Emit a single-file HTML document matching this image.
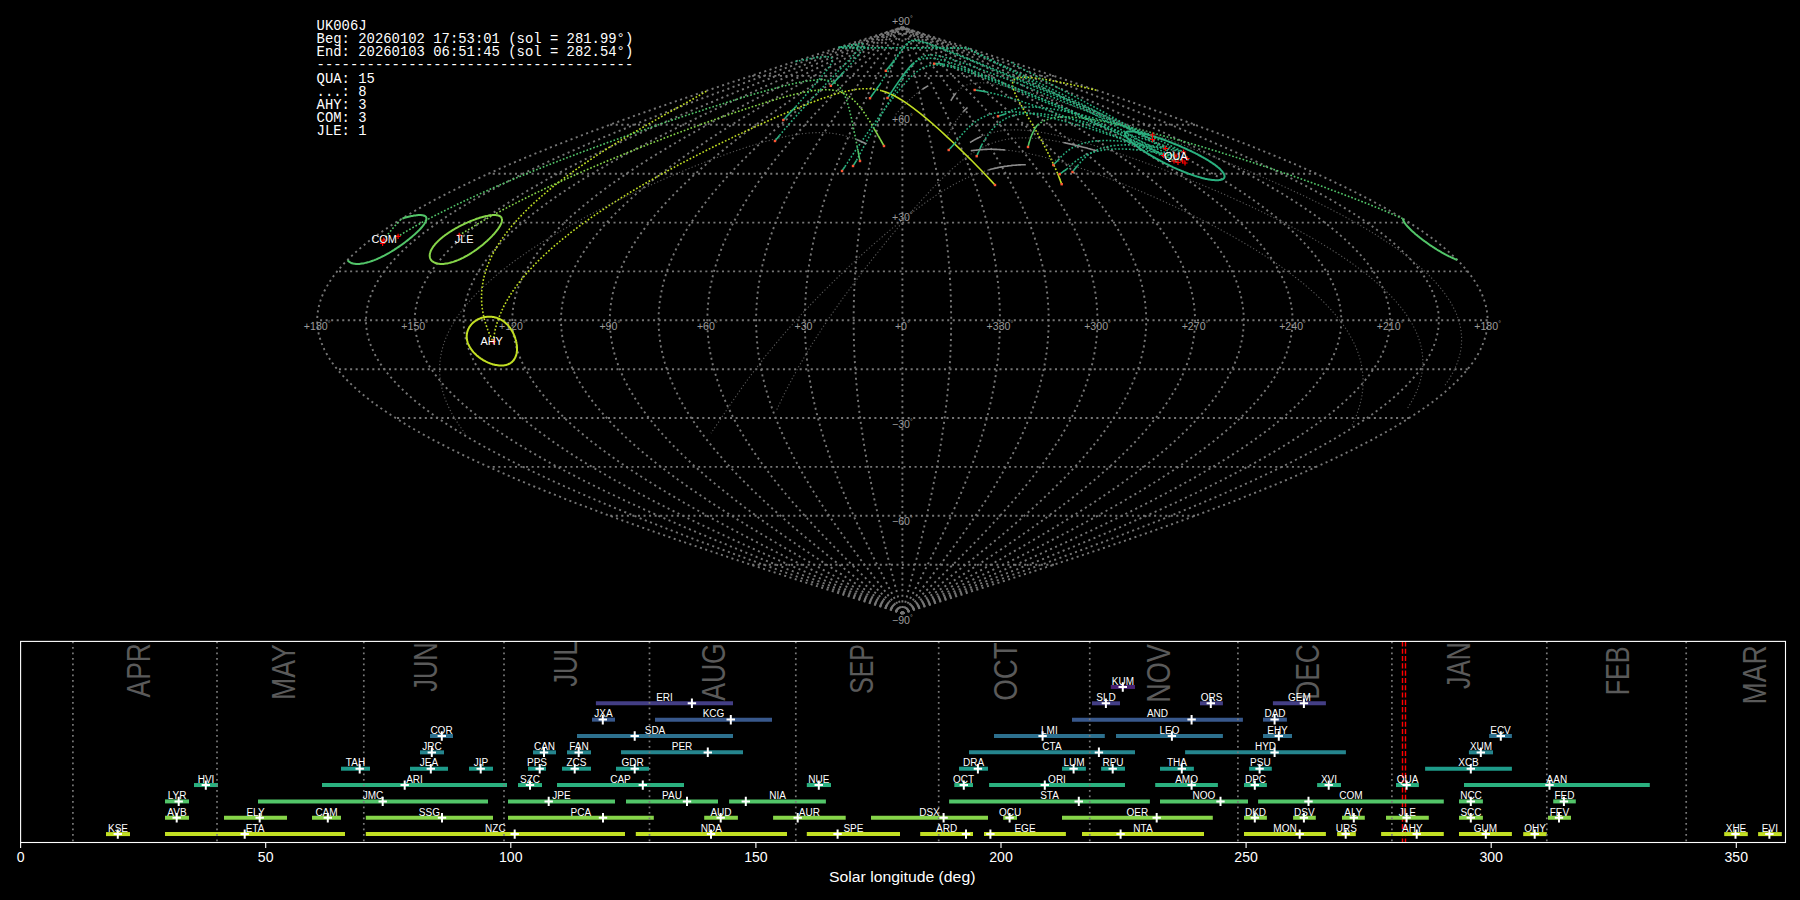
<!DOCTYPE html>
<html><head><meta charset="utf-8"><style>html,body{margin:0;padding:0;background:#000;overflow:hidden}svg{display:block}</style></head><body>
<svg width="1800" height="900" viewBox="0 0 1800 900">
<rect width="1800" height="900" fill="#000"/>
<g fill="none" stroke="#767676" stroke-width="1.9" stroke-dasharray="2.05 3.5">
<path d="M902.4,613.5 L912.6,610.3 L922.8,607.0 L933.0,603.8 L943.2,600.5 L953.4,597.3 L963.6,594.0 L973.7,590.7 L983.8,587.5 L993.9,584.2 L1004.0,581.0 L1014.1,577.7 L1024.1,574.4 L1034.0,571.2 L1044.0,567.9 L1053.9,564.7 L1063.7,561.4 L1073.5,558.2 L1083.2,554.9 L1092.9,551.6 L1102.5,548.4 L1112.1,545.1 L1121.6,541.9 L1131.1,538.6 L1140.4,535.3 L1149.7,532.1 L1158.9,528.8 L1168.1,525.6 L1177.1,522.3 L1186.1,519.1 L1195.0,515.8 L1203.8,512.5 L1212.5,509.3 L1221.1,506.0 L1229.6,502.8 L1238.1,499.5 L1246.4,496.2 L1254.6,493.0 L1262.7,489.7 L1270.7,486.5 L1278.6,483.2 L1286.3,480.0 L1294.0,476.7 L1301.5,473.4 L1308.9,470.2 L1316.2,466.9 L1323.4,463.7 L1330.4,460.4 L1337.3,457.1 L1344.1,453.9 L1350.7,450.6 L1357.2,447.4 L1363.5,444.1 L1369.8,440.9 L1375.8,437.6 L1381.8,434.3 L1387.6,431.1 L1393.2,427.8 L1398.7,424.6 L1404.0,421.3 L1409.2,418.0 L1414.2,414.8 L1419.1,411.5 L1423.8,408.3 L1428.4,405.0 L1432.8,401.8 L1437.0,398.5 L1441.1,395.2 L1445.0,392.0 L1448.7,388.7 L1452.3,385.5 L1455.7,382.2 L1459.0,378.9 L1462.0,375.7 L1464.9,372.4 L1467.7,369.2 L1470.2,365.9 L1472.6,362.7 L1474.8,359.4 L1476.8,356.1 L1478.7,352.9 L1480.4,349.6 L1481.9,346.4 L1483.2,343.1 L1484.4,339.8 L1485.4,336.6 L1486.2,333.3 L1486.8,330.1 L1487.2,326.8 L1487.5,323.6 L1487.6,320.3 L1487.5,317.0 L1487.2,313.8 L1486.8,310.5 L1486.2,307.3 L1485.4,304.0 L1484.4,300.8 L1483.2,297.5 L1481.9,294.2 L1480.4,291.0 L1478.7,287.7 L1476.8,284.5 L1474.8,281.2 L1472.6,277.9 L1470.2,274.7 L1467.7,271.4 L1464.9,268.2 L1462.0,264.9 L1459.0,261.7 L1455.7,258.4 L1452.3,255.1 L1448.7,251.9 L1445.0,248.6 L1441.1,245.4 L1437.0,242.1 L1432.8,238.8 L1428.4,235.6 L1423.8,232.3 L1419.1,229.1 L1414.2,225.8 L1409.2,222.6 L1404.0,219.3 L1398.7,216.0 L1393.2,212.8 L1387.6,209.5 L1381.8,206.3 L1375.8,203.0 L1369.8,199.7 L1363.5,196.5 L1357.2,193.2 L1350.7,190.0 L1344.1,186.7 L1337.3,183.5 L1330.4,180.2 L1323.4,176.9 L1316.2,173.7 L1308.9,170.4 L1301.5,167.2 L1294.0,163.9 L1286.3,160.6 L1278.6,157.4 L1270.7,154.1 L1262.7,150.9 L1254.6,147.6 L1246.4,144.4 L1238.1,141.1 L1229.6,137.8 L1221.1,134.6 L1212.5,131.3 L1203.8,128.1 L1195.0,124.8 L1186.1,121.5 L1177.1,118.3 L1168.1,115.0 L1158.9,111.8 L1149.7,108.5 L1140.4,105.3 L1131.1,102.0 L1121.6,98.7 L1112.1,95.5 L1102.5,92.2 L1092.9,89.0 L1083.2,85.7 L1073.5,82.4 L1063.7,79.2 L1053.9,75.9 L1044.0,72.7 L1034.0,69.4 L1024.1,66.2 L1014.1,62.9 L1004.0,59.6 L993.9,56.4 L983.8,53.1 L973.7,49.9 L963.6,46.6 L953.4,43.3 L943.2,40.1 L933.0,36.8 L922.8,33.6 L912.6,30.3 L902.4,27.1"/>
<path d="M902.4,613.5 L911.8,610.3 L921.1,607.0 L930.5,603.8 L939.8,600.5 L949.2,597.3 L958.5,594.0 L967.8,590.7 L977.1,587.5 L986.3,584.2 L995.6,581.0 L1004.8,577.7 L1013.9,574.4 L1023.1,571.2 L1032.2,567.9 L1041.2,564.7 L1050.3,561.4 L1059.2,558.2 L1068.2,554.9 L1077.0,551.6 L1085.9,548.4 L1094.6,545.1 L1103.4,541.9 L1112.0,538.6 L1120.6,535.3 L1129.1,532.1 L1137.6,528.8 L1145.9,525.6 L1154.2,522.3 L1162.5,519.1 L1170.6,515.8 L1178.7,512.5 L1186.7,509.3 L1194.6,506.0 L1202.4,502.8 L1210.1,499.5 L1217.7,496.2 L1225.2,493.0 L1232.7,489.7 L1240.0,486.5 L1247.2,483.2 L1254.3,480.0 L1261.3,476.7 L1268.2,473.4 L1275.0,470.2 L1281.7,466.9 L1288.3,463.7 L1294.7,460.4 L1301.0,457.1 L1307.2,453.9 L1313.3,450.6 L1319.3,447.4 L1325.1,444.1 L1330.8,440.9 L1336.4,437.6 L1341.8,434.3 L1347.1,431.1 L1352.3,427.8 L1357.3,424.6 L1362.2,421.3 L1367.0,418.0 L1371.6,414.8 L1376.0,411.5 L1380.4,408.3 L1384.5,405.0 L1388.6,401.8 L1392.5,398.5 L1396.2,395.2 L1399.8,392.0 L1403.2,388.7 L1406.5,385.5 L1409.6,382.2 L1412.6,378.9 L1415.4,375.7 L1418.1,372.4 L1420.6,369.2 L1422.9,365.9 L1425.1,362.7 L1427.1,359.4 L1429.0,356.1 L1430.7,352.9 L1432.2,349.6 L1433.6,346.4 L1434.8,343.1 L1435.9,339.8 L1436.8,336.6 L1437.5,333.3 L1438.1,330.1 L1438.5,326.8 L1438.7,323.6 L1438.8,320.3 L1438.7,317.0 L1438.5,313.8 L1438.1,310.5 L1437.5,307.3 L1436.8,304.0 L1435.9,300.8 L1434.8,297.5 L1433.6,294.2 L1432.2,291.0 L1430.7,287.7 L1429.0,284.5 L1427.1,281.2 L1425.1,277.9 L1422.9,274.7 L1420.6,271.4 L1418.1,268.2 L1415.4,264.9 L1412.6,261.7 L1409.6,258.4 L1406.5,255.1 L1403.2,251.9 L1399.8,248.6 L1396.2,245.4 L1392.5,242.1 L1388.6,238.8 L1384.5,235.6 L1380.4,232.3 L1376.0,229.1 L1371.6,225.8 L1367.0,222.6 L1362.2,219.3 L1357.3,216.0 L1352.3,212.8 L1347.1,209.5 L1341.8,206.3 L1336.4,203.0 L1330.8,199.7 L1325.1,196.5 L1319.3,193.2 L1313.3,190.0 L1307.2,186.7 L1301.0,183.5 L1294.7,180.2 L1288.3,176.9 L1281.7,173.7 L1275.0,170.4 L1268.2,167.2 L1261.3,163.9 L1254.3,160.6 L1247.2,157.4 L1240.0,154.1 L1232.7,150.9 L1225.2,147.6 L1217.7,144.4 L1210.1,141.1 L1202.4,137.8 L1194.6,134.6 L1186.7,131.3 L1178.7,128.1 L1170.6,124.8 L1162.5,121.5 L1154.2,118.3 L1145.9,115.0 L1137.6,111.8 L1129.1,108.5 L1120.6,105.3 L1112.0,102.0 L1103.4,98.7 L1094.6,95.5 L1085.9,92.2 L1077.0,89.0 L1068.2,85.7 L1059.2,82.4 L1050.3,79.2 L1041.2,75.9 L1032.2,72.7 L1023.1,69.4 L1013.9,66.2 L1004.8,62.9 L995.6,59.6 L986.3,56.4 L977.1,53.1 L967.8,49.9 L958.5,46.6 L949.2,43.3 L939.8,40.1 L930.5,36.8 L921.1,33.6 L911.8,30.3 L902.4,27.1"/>
<path d="M902.4,613.5 L910.9,610.3 L919.4,607.0 L927.9,603.8 L936.4,600.5 L944.9,597.3 L953.4,594.0 L961.8,590.7 L970.3,587.5 L978.7,584.2 L987.1,581.0 L995.5,577.7 L1003.8,574.4 L1012.1,571.2 L1020.4,567.9 L1028.6,564.7 L1036.8,561.4 L1045.0,558.2 L1053.1,554.9 L1061.2,551.6 L1069.2,548.4 L1077.2,545.1 L1085.1,541.9 L1092.9,538.6 L1100.8,535.3 L1108.5,532.1 L1116.2,528.8 L1123.8,525.6 L1131.3,522.3 L1138.8,519.1 L1146.2,515.8 L1153.6,512.5 L1160.8,509.3 L1168.0,506.0 L1175.1,502.8 L1182.1,499.5 L1189.0,496.2 L1195.9,493.0 L1202.6,489.7 L1209.3,486.5 L1215.9,483.2 L1222.3,480.0 L1228.7,476.7 L1235.0,473.4 L1241.2,470.2 L1247.2,466.9 L1253.2,463.7 L1259.1,460.4 L1264.8,457.1 L1270.4,453.9 L1276.0,450.6 L1281.4,447.4 L1286.7,444.1 L1291.9,440.9 L1296.9,437.6 L1301.9,434.3 L1306.7,431.1 L1311.4,427.8 L1316.0,424.6 L1320.4,421.3 L1324.7,418.0 L1328.9,414.8 L1333.0,411.5 L1336.9,408.3 L1340.7,405.0 L1344.4,401.8 L1347.9,398.5 L1351.3,395.2 L1354.6,392.0 L1357.7,388.7 L1360.7,385.5 L1363.5,382.2 L1366.2,378.9 L1368.8,375.7 L1371.2,372.4 L1373.4,369.2 L1375.6,365.9 L1377.6,362.7 L1379.4,359.4 L1381.1,356.1 L1382.7,352.9 L1384.1,349.6 L1385.3,346.4 L1386.4,343.1 L1387.4,339.8 L1388.2,336.6 L1388.9,333.3 L1389.4,330.1 L1389.8,326.8 L1390.0,323.6 L1390.1,320.3 L1390.0,317.0 L1389.8,313.8 L1389.4,310.5 L1388.9,307.3 L1388.2,304.0 L1387.4,300.8 L1386.4,297.5 L1385.3,294.2 L1384.1,291.0 L1382.7,287.7 L1381.1,284.5 L1379.4,281.2 L1377.6,277.9 L1375.6,274.7 L1373.4,271.4 L1371.2,268.2 L1368.8,264.9 L1366.2,261.7 L1363.5,258.4 L1360.7,255.1 L1357.7,251.9 L1354.6,248.6 L1351.3,245.4 L1347.9,242.1 L1344.4,238.8 L1340.7,235.6 L1336.9,232.3 L1333.0,229.1 L1328.9,225.8 L1324.7,222.6 L1320.4,219.3 L1316.0,216.0 L1311.4,212.8 L1306.7,209.5 L1301.9,206.3 L1296.9,203.0 L1291.9,199.7 L1286.7,196.5 L1281.4,193.2 L1276.0,190.0 L1270.4,186.7 L1264.8,183.5 L1259.1,180.2 L1253.2,176.9 L1247.2,173.7 L1241.2,170.4 L1235.0,167.2 L1228.7,163.9 L1222.3,160.6 L1215.9,157.4 L1209.3,154.1 L1202.6,150.9 L1195.9,147.6 L1189.0,144.4 L1182.1,141.1 L1175.1,137.8 L1168.0,134.6 L1160.8,131.3 L1153.6,128.1 L1146.2,124.8 L1138.8,121.5 L1131.3,118.3 L1123.8,115.0 L1116.2,111.8 L1108.5,108.5 L1100.8,105.3 L1092.9,102.0 L1085.1,98.7 L1077.2,95.5 L1069.2,92.2 L1061.2,89.0 L1053.1,85.7 L1045.0,82.4 L1036.8,79.2 L1028.6,75.9 L1020.4,72.7 L1012.1,69.4 L1003.8,66.2 L995.5,62.9 L987.1,59.6 L978.7,56.4 L970.3,53.1 L961.8,49.9 L953.4,46.6 L944.9,43.3 L936.4,40.1 L927.9,36.8 L919.4,33.6 L910.9,30.3 L902.4,27.1"/>
<path d="M902.4,613.5 L910.1,610.3 L917.7,607.0 L925.4,603.8 L933.0,600.5 L940.7,597.3 L948.3,594.0 L955.9,590.7 L963.5,587.5 L971.1,584.2 L978.6,581.0 L986.1,577.7 L993.7,574.4 L1001.1,571.2 L1008.6,567.9 L1016.0,564.7 L1023.4,561.4 L1030.7,558.2 L1038.0,554.9 L1045.3,551.6 L1052.5,548.4 L1059.7,545.1 L1066.8,541.9 L1073.9,538.6 L1080.9,535.3 L1087.9,532.1 L1094.8,528.8 L1101.7,525.6 L1108.5,522.3 L1115.2,519.1 L1121.8,515.8 L1128.4,512.5 L1135.0,509.3 L1141.4,506.0 L1147.8,502.8 L1154.1,499.5 L1160.4,496.2 L1166.5,493.0 L1172.6,489.7 L1178.6,486.5 L1184.5,483.2 L1190.3,480.0 L1196.1,476.7 L1201.7,473.4 L1207.3,470.2 L1212.7,466.9 L1218.1,463.7 L1223.4,460.4 L1228.6,457.1 L1233.6,453.9 L1238.6,450.6 L1243.5,447.4 L1248.3,444.1 L1252.9,440.9 L1257.5,437.6 L1261.9,434.3 L1266.3,431.1 L1270.5,427.8 L1274.6,424.6 L1278.6,421.3 L1282.5,418.0 L1286.3,414.8 L1289.9,411.5 L1293.5,408.3 L1296.9,405.0 L1300.2,401.8 L1303.4,398.5 L1306.4,395.2 L1309.3,392.0 L1312.1,388.7 L1314.8,385.5 L1317.4,382.2 L1319.8,378.9 L1322.1,375.7 L1324.3,372.4 L1326.3,369.2 L1328.3,365.9 L1330.0,362.7 L1331.7,359.4 L1333.2,356.1 L1334.6,352.9 L1335.9,349.6 L1337.0,346.4 L1338.0,343.1 L1338.9,339.8 L1339.6,336.6 L1340.2,333.3 L1340.7,330.1 L1341.0,326.8 L1341.2,323.6 L1341.3,320.3 L1341.2,317.0 L1341.0,313.8 L1340.7,310.5 L1340.2,307.3 L1339.6,304.0 L1338.9,300.8 L1338.0,297.5 L1337.0,294.2 L1335.9,291.0 L1334.6,287.7 L1333.2,284.5 L1331.7,281.2 L1330.0,277.9 L1328.3,274.7 L1326.3,271.4 L1324.3,268.2 L1322.1,264.9 L1319.8,261.7 L1317.4,258.4 L1314.8,255.1 L1312.1,251.9 L1309.3,248.6 L1306.4,245.4 L1303.4,242.1 L1300.2,238.8 L1296.9,235.6 L1293.5,232.3 L1289.9,229.1 L1286.3,225.8 L1282.5,222.6 L1278.6,219.3 L1274.6,216.0 L1270.5,212.8 L1266.3,209.5 L1261.9,206.3 L1257.5,203.0 L1252.9,199.7 L1248.3,196.5 L1243.5,193.2 L1238.6,190.0 L1233.6,186.7 L1228.6,183.5 L1223.4,180.2 L1218.1,176.9 L1212.7,173.7 L1207.3,170.4 L1201.7,167.2 L1196.1,163.9 L1190.3,160.6 L1184.5,157.4 L1178.6,154.1 L1172.6,150.9 L1166.5,147.6 L1160.4,144.4 L1154.1,141.1 L1147.8,137.8 L1141.4,134.6 L1135.0,131.3 L1128.4,128.1 L1121.8,124.8 L1115.2,121.5 L1108.5,118.3 L1101.7,115.0 L1094.8,111.8 L1087.9,108.5 L1080.9,105.3 L1073.9,102.0 L1066.8,98.7 L1059.7,95.5 L1052.5,92.2 L1045.3,89.0 L1038.0,85.7 L1030.7,82.4 L1023.4,79.2 L1016.0,75.9 L1008.6,72.7 L1001.1,69.4 L993.7,66.2 L986.1,62.9 L978.6,59.6 L971.1,56.4 L963.5,53.1 L955.9,49.9 L948.3,46.6 L940.7,43.3 L933.0,40.1 L925.4,36.8 L917.7,33.6 L910.1,30.3 L902.4,27.1"/>
<path d="M902.4,613.5 L909.2,610.3 L916.0,607.0 L922.8,603.8 L929.6,600.5 L936.4,597.3 L943.2,594.0 L949.9,590.7 L956.7,587.5 L963.4,584.2 L970.1,581.0 L976.8,577.7 L983.5,574.4 L990.2,571.2 L996.8,567.9 L1003.4,564.7 L1009.9,561.4 L1016.5,558.2 L1023.0,554.9 L1029.4,551.6 L1035.8,548.4 L1042.2,545.1 L1048.5,541.9 L1054.8,538.6 L1061.1,535.3 L1067.3,532.1 L1073.4,528.8 L1079.5,525.6 L1085.6,522.3 L1091.5,519.1 L1097.5,515.8 L1103.3,512.5 L1109.1,509.3 L1114.9,506.0 L1120.6,502.8 L1126.2,499.5 L1131.7,496.2 L1137.2,493.0 L1142.6,489.7 L1147.9,486.5 L1153.2,483.2 L1158.3,480.0 L1163.4,476.7 L1168.5,473.4 L1173.4,470.2 L1178.3,466.9 L1183.0,463.7 L1187.7,460.4 L1192.3,457.1 L1196.8,453.9 L1201.3,450.6 L1205.6,447.4 L1209.8,444.1 L1214.0,440.9 L1218.0,437.6 L1222.0,434.3 L1225.8,431.1 L1229.6,427.8 L1233.3,424.6 L1236.8,421.3 L1240.3,418.0 L1243.6,414.8 L1246.9,411.5 L1250.0,408.3 L1253.0,405.0 L1256.0,401.8 L1258.8,398.5 L1261.5,395.2 L1264.1,392.0 L1266.6,388.7 L1269.0,385.5 L1271.3,382.2 L1273.4,378.9 L1275.5,375.7 L1277.4,372.4 L1279.2,369.2 L1280.9,365.9 L1282.5,362.7 L1284.0,359.4 L1285.4,356.1 L1286.6,352.9 L1287.7,349.6 L1288.7,346.4 L1289.6,343.1 L1290.4,339.8 L1291.0,336.6 L1291.6,333.3 L1292.0,330.1 L1292.3,326.8 L1292.5,323.6 L1292.5,320.3 L1292.5,317.0 L1292.3,313.8 L1292.0,310.5 L1291.6,307.3 L1291.0,304.0 L1290.4,300.8 L1289.6,297.5 L1288.7,294.2 L1287.7,291.0 L1286.6,287.7 L1285.4,284.5 L1284.0,281.2 L1282.5,277.9 L1280.9,274.7 L1279.2,271.4 L1277.4,268.2 L1275.5,264.9 L1273.4,261.7 L1271.3,258.4 L1269.0,255.1 L1266.6,251.9 L1264.1,248.6 L1261.5,245.4 L1258.8,242.1 L1256.0,238.8 L1253.0,235.6 L1250.0,232.3 L1246.9,229.1 L1243.6,225.8 L1240.3,222.6 L1236.8,219.3 L1233.3,216.0 L1229.6,212.8 L1225.8,209.5 L1222.0,206.3 L1218.0,203.0 L1214.0,199.7 L1209.8,196.5 L1205.6,193.2 L1201.3,190.0 L1196.8,186.7 L1192.3,183.5 L1187.7,180.2 L1183.0,176.9 L1178.3,173.7 L1173.4,170.4 L1168.5,167.2 L1163.4,163.9 L1158.3,160.6 L1153.2,157.4 L1147.9,154.1 L1142.6,150.9 L1137.2,147.6 L1131.7,144.4 L1126.2,141.1 L1120.6,137.8 L1114.9,134.6 L1109.1,131.3 L1103.3,128.1 L1097.5,124.8 L1091.5,121.5 L1085.6,118.3 L1079.5,115.0 L1073.4,111.8 L1067.3,108.5 L1061.1,105.3 L1054.8,102.0 L1048.5,98.7 L1042.2,95.5 L1035.8,92.2 L1029.4,89.0 L1023.0,85.7 L1016.5,82.4 L1009.9,79.2 L1003.4,75.9 L996.8,72.7 L990.2,69.4 L983.5,66.2 L976.8,62.9 L970.1,59.6 L963.4,56.4 L956.7,53.1 L949.9,49.9 L943.2,46.6 L936.4,43.3 L929.6,40.1 L922.8,36.8 L916.0,33.6 L909.2,30.3 L902.4,27.1"/>
<path d="M902.4,613.5 L908.4,610.3 L914.3,607.0 L920.3,603.8 L926.2,600.5 L932.2,597.3 L938.1,594.0 L944.0,590.7 L949.9,587.5 L955.8,584.2 L961.7,581.0 L967.5,577.7 L973.4,574.4 L979.2,571.2 L985.0,567.9 L990.8,564.7 L996.5,561.4 L1002.2,558.2 L1007.9,554.9 L1013.5,551.6 L1019.2,548.4 L1024.7,545.1 L1030.3,541.9 L1035.8,538.6 L1041.2,535.3 L1046.7,532.1 L1052.0,528.8 L1057.4,525.6 L1062.7,522.3 L1067.9,519.1 L1073.1,515.8 L1078.2,512.5 L1083.3,509.3 L1088.3,506.0 L1093.3,502.8 L1098.2,499.5 L1103.0,496.2 L1107.8,493.0 L1112.6,489.7 L1117.2,486.5 L1121.8,483.2 L1126.4,480.0 L1130.8,476.7 L1135.2,473.4 L1139.5,470.2 L1143.8,466.9 L1148.0,463.7 L1152.1,460.4 L1156.1,457.1 L1160.0,453.9 L1163.9,450.6 L1167.7,447.4 L1171.4,444.1 L1175.0,440.9 L1178.6,437.6 L1182.0,434.3 L1185.4,431.1 L1188.7,427.8 L1191.9,424.6 L1195.0,421.3 L1198.0,418.0 L1201.0,414.8 L1203.8,411.5 L1206.6,408.3 L1209.2,405.0 L1211.8,401.8 L1214.3,398.5 L1216.6,395.2 L1218.9,392.0 L1221.1,388.7 L1223.2,385.5 L1225.2,382.2 L1227.1,378.9 L1228.8,375.7 L1230.5,372.4 L1232.1,369.2 L1233.6,365.9 L1235.0,362.7 L1236.3,359.4 L1237.5,356.1 L1238.6,352.9 L1239.6,349.6 L1240.4,346.4 L1241.2,343.1 L1241.9,339.8 L1242.5,336.6 L1242.9,333.3 L1243.3,330.1 L1243.6,326.8 L1243.7,323.6 L1243.8,320.3 L1243.7,317.0 L1243.6,313.8 L1243.3,310.5 L1242.9,307.3 L1242.5,304.0 L1241.9,300.8 L1241.2,297.5 L1240.4,294.2 L1239.6,291.0 L1238.6,287.7 L1237.5,284.5 L1236.3,281.2 L1235.0,277.9 L1233.6,274.7 L1232.1,271.4 L1230.5,268.2 L1228.8,264.9 L1227.1,261.7 L1225.2,258.4 L1223.2,255.1 L1221.1,251.9 L1218.9,248.6 L1216.6,245.4 L1214.3,242.1 L1211.8,238.8 L1209.2,235.6 L1206.6,232.3 L1203.8,229.1 L1201.0,225.8 L1198.0,222.6 L1195.0,219.3 L1191.9,216.0 L1188.7,212.8 L1185.4,209.5 L1182.0,206.3 L1178.6,203.0 L1175.0,199.7 L1171.4,196.5 L1167.7,193.2 L1163.9,190.0 L1160.0,186.7 L1156.1,183.5 L1152.1,180.2 L1148.0,176.9 L1143.8,173.7 L1139.5,170.4 L1135.2,167.2 L1130.8,163.9 L1126.4,160.6 L1121.8,157.4 L1117.2,154.1 L1112.6,150.9 L1107.8,147.6 L1103.0,144.4 L1098.2,141.1 L1093.3,137.8 L1088.3,134.6 L1083.3,131.3 L1078.2,128.1 L1073.1,124.8 L1067.9,121.5 L1062.7,118.3 L1057.4,115.0 L1052.0,111.8 L1046.7,108.5 L1041.2,105.3 L1035.8,102.0 L1030.3,98.7 L1024.7,95.5 L1019.2,92.2 L1013.5,89.0 L1007.9,85.7 L1002.2,82.4 L996.5,79.2 L990.8,75.9 L985.0,72.7 L979.2,69.4 L973.4,66.2 L967.5,62.9 L961.7,59.6 L955.8,56.4 L949.9,53.1 L944.0,49.9 L938.1,46.6 L932.2,43.3 L926.2,40.1 L920.3,36.8 L914.3,33.6 L908.4,30.3 L902.4,27.1"/>
<path d="M902.4,613.5 L907.5,610.3 L912.6,607.0 L917.7,603.8 L922.8,600.5 L927.9,597.3 L933.0,594.0 L938.1,590.7 L943.1,587.5 L948.2,584.2 L953.2,581.0 L958.2,577.7 L963.2,574.4 L968.2,571.2 L973.2,567.9 L978.1,564.7 L983.1,561.4 L987.9,558.2 L992.8,554.9 L997.7,551.6 L1002.5,548.4 L1007.3,545.1 L1012.0,541.9 L1016.7,538.6 L1021.4,535.3 L1026.1,532.1 L1030.7,528.8 L1035.2,525.6 L1039.8,522.3 L1044.3,519.1 L1048.7,515.8 L1053.1,512.5 L1057.5,509.3 L1061.8,506.0 L1066.0,502.8 L1070.2,499.5 L1074.4,496.2 L1078.5,493.0 L1082.5,489.7 L1086.5,486.5 L1090.5,483.2 L1094.4,480.0 L1098.2,476.7 L1102.0,473.4 L1105.7,470.2 L1109.3,466.9 L1112.9,463.7 L1116.4,460.4 L1119.8,457.1 L1123.2,453.9 L1126.5,450.6 L1129.8,447.4 L1133.0,444.1 L1136.1,440.9 L1139.1,437.6 L1142.1,434.3 L1145.0,431.1 L1147.8,427.8 L1150.5,424.6 L1153.2,421.3 L1155.8,418.0 L1158.3,414.8 L1160.7,411.5 L1163.1,408.3 L1165.4,405.0 L1167.6,401.8 L1169.7,398.5 L1171.7,395.2 L1173.7,392.0 L1175.6,388.7 L1177.4,385.5 L1179.1,382.2 L1180.7,378.9 L1182.2,375.7 L1183.7,372.4 L1185.0,369.2 L1186.3,365.9 L1187.5,362.7 L1188.6,359.4 L1189.6,356.1 L1190.6,352.9 L1191.4,349.6 L1192.2,346.4 L1192.8,343.1 L1193.4,339.8 L1193.9,336.6 L1194.3,333.3 L1194.6,330.1 L1194.8,326.8 L1195.0,323.6 L1195.0,320.3 L1195.0,317.0 L1194.8,313.8 L1194.6,310.5 L1194.3,307.3 L1193.9,304.0 L1193.4,300.8 L1192.8,297.5 L1192.2,294.2 L1191.4,291.0 L1190.6,287.7 L1189.6,284.5 L1188.6,281.2 L1187.5,277.9 L1186.3,274.7 L1185.0,271.4 L1183.7,268.2 L1182.2,264.9 L1180.7,261.7 L1179.1,258.4 L1177.4,255.1 L1175.6,251.9 L1173.7,248.6 L1171.7,245.4 L1169.7,242.1 L1167.6,238.8 L1165.4,235.6 L1163.1,232.3 L1160.7,229.1 L1158.3,225.8 L1155.8,222.6 L1153.2,219.3 L1150.5,216.0 L1147.8,212.8 L1145.0,209.5 L1142.1,206.3 L1139.1,203.0 L1136.1,199.7 L1133.0,196.5 L1129.8,193.2 L1126.5,190.0 L1123.2,186.7 L1119.8,183.5 L1116.4,180.2 L1112.9,176.9 L1109.3,173.7 L1105.7,170.4 L1102.0,167.2 L1098.2,163.9 L1094.4,160.6 L1090.5,157.4 L1086.5,154.1 L1082.5,150.9 L1078.5,147.6 L1074.4,144.4 L1070.2,141.1 L1066.0,137.8 L1061.8,134.6 L1057.5,131.3 L1053.1,128.1 L1048.7,124.8 L1044.3,121.5 L1039.8,118.3 L1035.2,115.0 L1030.7,111.8 L1026.1,108.5 L1021.4,105.3 L1016.7,102.0 L1012.0,98.7 L1007.3,95.5 L1002.5,92.2 L997.7,89.0 L992.8,85.7 L987.9,82.4 L983.1,79.2 L978.1,75.9 L973.2,72.7 L968.2,69.4 L963.2,66.2 L958.2,62.9 L953.2,59.6 L948.2,56.4 L943.1,53.1 L938.1,49.9 L933.0,46.6 L927.9,43.3 L922.8,40.1 L917.7,36.8 L912.6,33.6 L907.5,30.3 L902.4,27.1"/>
<path d="M902.4,613.5 L906.7,610.3 L910.9,607.0 L915.2,603.8 L919.4,600.5 L923.7,597.3 L927.9,594.0 L932.1,590.7 L936.3,587.5 L940.5,584.2 L944.7,581.0 L948.9,577.7 L953.1,574.4 L957.3,571.2 L961.4,567.9 L965.5,564.7 L969.6,561.4 L973.7,558.2 L977.7,554.9 L981.8,551.6 L985.8,548.4 L989.8,545.1 L993.7,541.9 L997.7,538.6 L1001.6,535.3 L1005.4,532.1 L1009.3,528.8 L1013.1,525.6 L1016.9,522.3 L1020.6,519.1 L1024.3,515.8 L1028.0,512.5 L1031.6,509.3 L1035.2,506.0 L1038.7,502.8 L1042.3,499.5 L1045.7,496.2 L1049.1,493.0 L1052.5,489.7 L1055.8,486.5 L1059.1,483.2 L1062.4,480.0 L1065.6,476.7 L1068.7,473.4 L1071.8,470.2 L1074.8,466.9 L1077.8,463.7 L1080.7,460.4 L1083.6,457.1 L1086.4,453.9 L1089.2,450.6 L1091.9,447.4 L1094.5,444.1 L1097.1,440.9 L1099.7,437.6 L1102.1,434.3 L1104.5,431.1 L1106.9,427.8 L1109.2,424.6 L1111.4,421.3 L1113.6,418.0 L1115.7,414.8 L1117.7,411.5 L1119.7,408.3 L1121.6,405.0 L1123.4,401.8 L1125.2,398.5 L1126.8,395.2 L1128.5,392.0 L1130.0,388.7 L1131.5,385.5 L1132.9,382.2 L1134.3,378.9 L1135.6,375.7 L1136.8,372.4 L1137.9,369.2 L1139.0,365.9 L1140.0,362.7 L1140.9,359.4 L1141.8,356.1 L1142.5,352.9 L1143.2,349.6 L1143.9,346.4 L1144.4,343.1 L1144.9,339.8 L1145.3,336.6 L1145.6,333.3 L1145.9,330.1 L1146.1,326.8 L1146.2,323.6 L1146.2,320.3 L1146.2,317.0 L1146.1,313.8 L1145.9,310.5 L1145.6,307.3 L1145.3,304.0 L1144.9,300.8 L1144.4,297.5 L1143.9,294.2 L1143.2,291.0 L1142.5,287.7 L1141.8,284.5 L1140.9,281.2 L1140.0,277.9 L1139.0,274.7 L1137.9,271.4 L1136.8,268.2 L1135.6,264.9 L1134.3,261.7 L1132.9,258.4 L1131.5,255.1 L1130.0,251.9 L1128.5,248.6 L1126.8,245.4 L1125.2,242.1 L1123.4,238.8 L1121.6,235.6 L1119.7,232.3 L1117.7,229.1 L1115.7,225.8 L1113.6,222.6 L1111.4,219.3 L1109.2,216.0 L1106.9,212.8 L1104.5,209.5 L1102.1,206.3 L1099.7,203.0 L1097.1,199.7 L1094.5,196.5 L1091.9,193.2 L1089.2,190.0 L1086.4,186.7 L1083.6,183.5 L1080.7,180.2 L1077.8,176.9 L1074.8,173.7 L1071.8,170.4 L1068.7,167.2 L1065.6,163.9 L1062.4,160.6 L1059.1,157.4 L1055.8,154.1 L1052.5,150.9 L1049.1,147.6 L1045.7,144.4 L1042.3,141.1 L1038.7,137.8 L1035.2,134.6 L1031.6,131.3 L1028.0,128.1 L1024.3,124.8 L1020.6,121.5 L1016.9,118.3 L1013.1,115.0 L1009.3,111.8 L1005.4,108.5 L1001.6,105.3 L997.7,102.0 L993.7,98.7 L989.8,95.5 L985.8,92.2 L981.8,89.0 L977.7,85.7 L973.7,82.4 L969.6,79.2 L965.5,75.9 L961.4,72.7 L957.3,69.4 L953.1,66.2 L948.9,62.9 L944.7,59.6 L940.5,56.4 L936.3,53.1 L932.1,49.9 L927.9,46.6 L923.7,43.3 L919.4,40.1 L915.2,36.8 L910.9,33.6 L906.7,30.3 L902.4,27.1"/>
<path d="M902.4,613.5 L905.8,610.3 L909.2,607.0 L912.6,603.8 L916.0,600.5 L919.4,597.3 L922.8,594.0 L926.2,590.7 L929.5,587.5 L932.9,584.2 L936.3,581.0 L939.6,577.7 L943.0,574.4 L946.3,571.2 L949.6,567.9 L952.9,564.7 L956.2,561.4 L959.4,558.2 L962.7,554.9 L965.9,551.6 L969.1,548.4 L972.3,545.1 L975.5,541.9 L978.6,538.6 L981.7,535.3 L984.8,532.1 L987.9,528.8 L991.0,525.6 L994.0,522.3 L997.0,519.1 L999.9,515.8 L1002.9,512.5 L1005.8,509.3 L1008.6,506.0 L1011.5,502.8 L1014.3,499.5 L1017.1,496.2 L1019.8,493.0 L1022.5,489.7 L1025.2,486.5 L1027.8,483.2 L1030.4,480.0 L1032.9,476.7 L1035.4,473.4 L1037.9,470.2 L1040.3,466.9 L1042.7,463.7 L1045.1,460.4 L1047.4,457.1 L1049.6,453.9 L1051.8,450.6 L1054.0,447.4 L1056.1,444.1 L1058.2,440.9 L1060.2,437.6 L1062.2,434.3 L1064.1,431.1 L1066.0,427.8 L1067.8,424.6 L1069.6,421.3 L1071.3,418.0 L1073.0,414.8 L1074.6,411.5 L1076.2,408.3 L1077.7,405.0 L1079.2,401.8 L1080.6,398.5 L1082.0,395.2 L1083.3,392.0 L1084.5,388.7 L1085.7,385.5 L1086.8,382.2 L1087.9,378.9 L1088.9,375.7 L1089.9,372.4 L1090.8,369.2 L1091.7,365.9 L1092.5,362.7 L1093.2,359.4 L1093.9,356.1 L1094.5,352.9 L1095.1,349.6 L1095.6,346.4 L1096.0,343.1 L1096.4,339.8 L1096.7,336.6 L1097.0,333.3 L1097.2,330.1 L1097.3,326.8 L1097.4,323.6 L1097.5,320.3 L1097.4,317.0 L1097.3,313.8 L1097.2,310.5 L1097.0,307.3 L1096.7,304.0 L1096.4,300.8 L1096.0,297.5 L1095.6,294.2 L1095.1,291.0 L1094.5,287.7 L1093.9,284.5 L1093.2,281.2 L1092.5,277.9 L1091.7,274.7 L1090.8,271.4 L1089.9,268.2 L1088.9,264.9 L1087.9,261.7 L1086.8,258.4 L1085.7,255.1 L1084.5,251.9 L1083.3,248.6 L1082.0,245.4 L1080.6,242.1 L1079.2,238.8 L1077.7,235.6 L1076.2,232.3 L1074.6,229.1 L1073.0,225.8 L1071.3,222.6 L1069.6,219.3 L1067.8,216.0 L1066.0,212.8 L1064.1,209.5 L1062.2,206.3 L1060.2,203.0 L1058.2,199.7 L1056.1,196.5 L1054.0,193.2 L1051.8,190.0 L1049.6,186.7 L1047.4,183.5 L1045.1,180.2 L1042.7,176.9 L1040.3,173.7 L1037.9,170.4 L1035.4,167.2 L1032.9,163.9 L1030.4,160.6 L1027.8,157.4 L1025.2,154.1 L1022.5,150.9 L1019.8,147.6 L1017.1,144.4 L1014.3,141.1 L1011.5,137.8 L1008.6,134.6 L1005.8,131.3 L1002.9,128.1 L999.9,124.8 L997.0,121.5 L994.0,118.3 L991.0,115.0 L987.9,111.8 L984.8,108.5 L981.7,105.3 L978.6,102.0 L975.5,98.7 L972.3,95.5 L969.1,92.2 L965.9,89.0 L962.7,85.7 L959.4,82.4 L956.2,79.2 L952.9,75.9 L949.6,72.7 L946.3,69.4 L943.0,66.2 L939.6,62.9 L936.3,59.6 L932.9,56.4 L929.5,53.1 L926.2,49.9 L922.8,46.6 L919.4,43.3 L916.0,40.1 L912.6,36.8 L909.2,33.6 L905.8,30.3 L902.4,27.1"/>
<path d="M902.4,613.5 L905.0,610.3 L907.5,607.0 L910.1,603.8 L912.6,600.5 L915.2,597.3 L917.7,594.0 L920.2,590.7 L922.8,587.5 L925.3,584.2 L927.8,581.0 L930.3,577.7 L932.8,574.4 L935.3,571.2 L937.8,567.9 L940.3,564.7 L942.7,561.4 L945.2,558.2 L947.6,554.9 L950.0,551.6 L952.4,548.4 L954.8,545.1 L957.2,541.9 L959.6,538.6 L961.9,535.3 L964.2,532.1 L966.5,528.8 L968.8,525.6 L971.1,522.3 L973.3,519.1 L975.5,515.8 L977.7,512.5 L979.9,509.3 L982.1,506.0 L984.2,502.8 L986.3,499.5 L988.4,496.2 L990.4,493.0 L992.5,489.7 L994.5,486.5 L996.4,483.2 L998.4,480.0 L1000.3,476.7 L1002.2,473.4 L1004.0,470.2 L1005.8,466.9 L1007.6,463.7 L1009.4,460.4 L1011.1,457.1 L1012.8,453.9 L1014.5,450.6 L1016.1,447.4 L1017.7,444.1 L1019.2,440.9 L1020.8,437.6 L1022.2,434.3 L1023.7,431.1 L1025.1,427.8 L1026.5,424.6 L1027.8,421.3 L1029.1,418.0 L1030.4,414.8 L1031.6,411.5 L1032.8,408.3 L1033.9,405.0 L1035.0,401.8 L1036.1,398.5 L1037.1,395.2 L1038.0,392.0 L1039.0,388.7 L1039.9,385.5 L1040.7,382.2 L1041.5,378.9 L1042.3,375.7 L1043.0,372.4 L1043.7,369.2 L1044.4,365.9 L1044.9,362.7 L1045.5,359.4 L1046.0,356.1 L1046.5,352.9 L1046.9,349.6 L1047.3,346.4 L1047.6,343.1 L1047.9,339.8 L1048.1,336.6 L1048.3,333.3 L1048.5,330.1 L1048.6,326.8 L1048.7,323.6 L1048.7,320.3 L1048.7,317.0 L1048.6,313.8 L1048.5,310.5 L1048.3,307.3 L1048.1,304.0 L1047.9,300.8 L1047.6,297.5 L1047.3,294.2 L1046.9,291.0 L1046.5,287.7 L1046.0,284.5 L1045.5,281.2 L1044.9,277.9 L1044.4,274.7 L1043.7,271.4 L1043.0,268.2 L1042.3,264.9 L1041.5,261.7 L1040.7,258.4 L1039.9,255.1 L1039.0,251.9 L1038.0,248.6 L1037.1,245.4 L1036.1,242.1 L1035.0,238.8 L1033.9,235.6 L1032.8,232.3 L1031.6,229.1 L1030.4,225.8 L1029.1,222.6 L1027.8,219.3 L1026.5,216.0 L1025.1,212.8 L1023.7,209.5 L1022.2,206.3 L1020.8,203.0 L1019.2,199.7 L1017.7,196.5 L1016.1,193.2 L1014.5,190.0 L1012.8,186.7 L1011.1,183.5 L1009.4,180.2 L1007.6,176.9 L1005.8,173.7 L1004.0,170.4 L1002.2,167.2 L1000.3,163.9 L998.4,160.6 L996.4,157.4 L994.5,154.1 L992.5,150.9 L990.4,147.6 L988.4,144.4 L986.3,141.1 L984.2,137.8 L982.1,134.6 L979.9,131.3 L977.7,128.1 L975.5,124.8 L973.3,121.5 L971.1,118.3 L968.8,115.0 L966.5,111.8 L964.2,108.5 L961.9,105.3 L959.6,102.0 L957.2,98.7 L954.8,95.5 L952.4,92.2 L950.0,89.0 L947.6,85.7 L945.2,82.4 L942.7,79.2 L940.3,75.9 L937.8,72.7 L935.3,69.4 L932.8,66.2 L930.3,62.9 L927.8,59.6 L925.3,56.4 L922.8,53.1 L920.2,49.9 L917.7,46.6 L915.2,43.3 L912.6,40.1 L910.1,36.8 L907.5,33.6 L905.0,30.3 L902.4,27.1"/>
<path d="M902.4,613.5 L904.1,610.3 L905.8,607.0 L907.5,603.8 L909.2,600.5 L910.9,597.3 L912.6,594.0 L914.3,590.7 L916.0,587.5 L917.7,584.2 L919.3,581.0 L921.0,577.7 L922.7,574.4 L924.3,571.2 L926.0,567.9 L927.6,564.7 L929.3,561.4 L930.9,558.2 L932.5,554.9 L934.2,551.6 L935.8,548.4 L937.4,545.1 L938.9,541.9 L940.5,538.6 L942.1,535.3 L943.6,532.1 L945.2,528.8 L946.7,525.6 L948.2,522.3 L949.7,519.1 L951.2,515.8 L952.6,512.5 L954.1,509.3 L955.5,506.0 L956.9,502.8 L958.3,499.5 L959.7,496.2 L961.1,493.0 L962.4,489.7 L963.8,486.5 L965.1,483.2 L966.4,480.0 L967.7,476.7 L968.9,473.4 L970.2,470.2 L971.4,466.9 L972.6,463.7 L973.7,460.4 L974.9,457.1 L976.0,453.9 L977.1,450.6 L978.2,447.4 L979.3,444.1 L980.3,440.9 L981.3,437.6 L982.3,434.3 L983.3,431.1 L984.2,427.8 L985.1,424.6 L986.0,421.3 L986.9,418.0 L987.7,414.8 L988.5,411.5 L989.3,408.3 L990.1,405.0 L990.8,401.8 L991.5,398.5 L992.2,395.2 L992.8,392.0 L993.5,388.7 L994.1,385.5 L994.6,382.2 L995.2,378.9 L995.7,375.7 L996.2,372.4 L996.6,369.2 L997.0,365.9 L997.4,362.7 L997.8,359.4 L998.1,356.1 L998.5,352.9 L998.7,349.6 L999.0,346.4 L999.2,343.1 L999.4,339.8 L999.6,336.6 L999.7,333.3 L999.8,330.1 L999.9,326.8 L999.9,323.6 L999.9,320.3 L999.9,317.0 L999.9,313.8 L999.8,310.5 L999.7,307.3 L999.6,304.0 L999.4,300.8 L999.2,297.5 L999.0,294.2 L998.7,291.0 L998.5,287.7 L998.1,284.5 L997.8,281.2 L997.4,277.9 L997.0,274.7 L996.6,271.4 L996.2,268.2 L995.7,264.9 L995.2,261.7 L994.6,258.4 L994.1,255.1 L993.5,251.9 L992.8,248.6 L992.2,245.4 L991.5,242.1 L990.8,238.8 L990.1,235.6 L989.3,232.3 L988.5,229.1 L987.7,225.8 L986.9,222.6 L986.0,219.3 L985.1,216.0 L984.2,212.8 L983.3,209.5 L982.3,206.3 L981.3,203.0 L980.3,199.7 L979.3,196.5 L978.2,193.2 L977.1,190.0 L976.0,186.7 L974.9,183.5 L973.7,180.2 L972.6,176.9 L971.4,173.7 L970.2,170.4 L968.9,167.2 L967.7,163.9 L966.4,160.6 L965.1,157.4 L963.8,154.1 L962.4,150.9 L961.1,147.6 L959.7,144.4 L958.3,141.1 L956.9,137.8 L955.5,134.6 L954.1,131.3 L952.6,128.1 L951.2,124.8 L949.7,121.5 L948.2,118.3 L946.7,115.0 L945.2,111.8 L943.6,108.5 L942.1,105.3 L940.5,102.0 L938.9,98.7 L937.4,95.5 L935.8,92.2 L934.2,89.0 L932.5,85.7 L930.9,82.4 L929.3,79.2 L927.6,75.9 L926.0,72.7 L924.3,69.4 L922.7,66.2 L921.0,62.9 L919.3,59.6 L917.7,56.4 L916.0,53.1 L914.3,49.9 L912.6,46.6 L910.9,43.3 L909.2,40.1 L907.5,36.8 L905.8,33.6 L904.1,30.3 L902.4,27.1"/>
<path d="M902.4,613.5 L903.3,610.3 L904.1,607.0 L905.0,603.8 L905.8,600.5 L906.7,597.3 L907.5,594.0 L908.3,590.7 L909.2,587.5 L910.0,584.2 L910.9,581.0 L911.7,577.7 L912.5,574.4 L913.4,571.2 L914.2,567.9 L915.0,564.7 L915.8,561.4 L916.7,558.2 L917.5,554.9 L918.3,551.6 L919.1,548.4 L919.9,545.1 L920.7,541.9 L921.5,538.6 L922.2,535.3 L923.0,532.1 L923.8,528.8 L924.5,525.6 L925.3,522.3 L926.0,519.1 L926.8,515.8 L927.5,512.5 L928.2,509.3 L929.0,506.0 L929.7,502.8 L930.4,499.5 L931.1,496.2 L931.7,493.0 L932.4,489.7 L933.1,486.5 L933.7,483.2 L934.4,480.0 L935.0,476.7 L935.7,473.4 L936.3,470.2 L936.9,466.9 L937.5,463.7 L938.1,460.4 L938.6,457.1 L939.2,453.9 L939.8,450.6 L940.3,447.4 L940.8,444.1 L941.3,440.9 L941.9,437.6 L942.3,434.3 L942.8,431.1 L943.3,427.8 L943.8,424.6 L944.2,421.3 L944.6,418.0 L945.1,414.8 L945.5,411.5 L945.9,408.3 L946.2,405.0 L946.6,401.8 L947.0,398.5 L947.3,395.2 L947.6,392.0 L947.9,388.7 L948.2,385.5 L948.5,382.2 L948.8,378.9 L949.0,375.7 L949.3,372.4 L949.5,369.2 L949.7,365.9 L949.9,362.7 L950.1,359.4 L950.3,356.1 L950.4,352.9 L950.6,349.6 L950.7,346.4 L950.8,343.1 L950.9,339.8 L951.0,336.6 L951.0,333.3 L951.1,330.1 L951.1,326.8 L951.2,323.6 L951.2,320.3 L951.2,317.0 L951.1,313.8 L951.1,310.5 L951.0,307.3 L951.0,304.0 L950.9,300.8 L950.8,297.5 L950.7,294.2 L950.6,291.0 L950.4,287.7 L950.3,284.5 L950.1,281.2 L949.9,277.9 L949.7,274.7 L949.5,271.4 L949.3,268.2 L949.0,264.9 L948.8,261.7 L948.5,258.4 L948.2,255.1 L947.9,251.9 L947.6,248.6 L947.3,245.4 L947.0,242.1 L946.6,238.8 L946.2,235.6 L945.9,232.3 L945.5,229.1 L945.1,225.8 L944.6,222.6 L944.2,219.3 L943.8,216.0 L943.3,212.8 L942.8,209.5 L942.3,206.3 L941.9,203.0 L941.3,199.7 L940.8,196.5 L940.3,193.2 L939.8,190.0 L939.2,186.7 L938.6,183.5 L938.1,180.2 L937.5,176.9 L936.9,173.7 L936.3,170.4 L935.7,167.2 L935.0,163.9 L934.4,160.6 L933.7,157.4 L933.1,154.1 L932.4,150.9 L931.7,147.6 L931.1,144.4 L930.4,141.1 L929.7,137.8 L929.0,134.6 L928.2,131.3 L927.5,128.1 L926.8,124.8 L926.0,121.5 L925.3,118.3 L924.5,115.0 L923.8,111.8 L923.0,108.5 L922.2,105.3 L921.5,102.0 L920.7,98.7 L919.9,95.5 L919.1,92.2 L918.3,89.0 L917.5,85.7 L916.7,82.4 L915.8,79.2 L915.0,75.9 L914.2,72.7 L913.4,69.4 L912.5,66.2 L911.7,62.9 L910.9,59.6 L910.0,56.4 L909.2,53.1 L908.3,49.9 L907.5,46.6 L906.7,43.3 L905.8,40.1 L905.0,36.8 L904.1,33.6 L903.3,30.3 L902.4,27.1"/>
<path d="M902.4,613.5 L902.4,610.3 L902.4,607.0 L902.4,603.8 L902.4,600.5 L902.4,597.3 L902.4,594.0 L902.4,590.7 L902.4,587.5 L902.4,584.2 L902.4,581.0 L902.4,577.7 L902.4,574.4 L902.4,571.2 L902.4,567.9 L902.4,564.7 L902.4,561.4 L902.4,558.2 L902.4,554.9 L902.4,551.6 L902.4,548.4 L902.4,545.1 L902.4,541.9 L902.4,538.6 L902.4,535.3 L902.4,532.1 L902.4,528.8 L902.4,525.6 L902.4,522.3 L902.4,519.1 L902.4,515.8 L902.4,512.5 L902.4,509.3 L902.4,506.0 L902.4,502.8 L902.4,499.5 L902.4,496.2 L902.4,493.0 L902.4,489.7 L902.4,486.5 L902.4,483.2 L902.4,480.0 L902.4,476.7 L902.4,473.4 L902.4,470.2 L902.4,466.9 L902.4,463.7 L902.4,460.4 L902.4,457.1 L902.4,453.9 L902.4,450.6 L902.4,447.4 L902.4,444.1 L902.4,440.9 L902.4,437.6 L902.4,434.3 L902.4,431.1 L902.4,427.8 L902.4,424.6 L902.4,421.3 L902.4,418.0 L902.4,414.8 L902.4,411.5 L902.4,408.3 L902.4,405.0 L902.4,401.8 L902.4,398.5 L902.4,395.2 L902.4,392.0 L902.4,388.7 L902.4,385.5 L902.4,382.2 L902.4,378.9 L902.4,375.7 L902.4,372.4 L902.4,369.2 L902.4,365.9 L902.4,362.7 L902.4,359.4 L902.4,356.1 L902.4,352.9 L902.4,349.6 L902.4,346.4 L902.4,343.1 L902.4,339.8 L902.4,336.6 L902.4,333.3 L902.4,330.1 L902.4,326.8 L902.4,323.6 L902.4,320.3 L902.4,317.0 L902.4,313.8 L902.4,310.5 L902.4,307.3 L902.4,304.0 L902.4,300.8 L902.4,297.5 L902.4,294.2 L902.4,291.0 L902.4,287.7 L902.4,284.5 L902.4,281.2 L902.4,277.9 L902.4,274.7 L902.4,271.4 L902.4,268.2 L902.4,264.9 L902.4,261.7 L902.4,258.4 L902.4,255.1 L902.4,251.9 L902.4,248.6 L902.4,245.4 L902.4,242.1 L902.4,238.8 L902.4,235.6 L902.4,232.3 L902.4,229.1 L902.4,225.8 L902.4,222.6 L902.4,219.3 L902.4,216.0 L902.4,212.8 L902.4,209.5 L902.4,206.3 L902.4,203.0 L902.4,199.7 L902.4,196.5 L902.4,193.2 L902.4,190.0 L902.4,186.7 L902.4,183.5 L902.4,180.2 L902.4,176.9 L902.4,173.7 L902.4,170.4 L902.4,167.2 L902.4,163.9 L902.4,160.6 L902.4,157.4 L902.4,154.1 L902.4,150.9 L902.4,147.6 L902.4,144.4 L902.4,141.1 L902.4,137.8 L902.4,134.6 L902.4,131.3 L902.4,128.1 L902.4,124.8 L902.4,121.5 L902.4,118.3 L902.4,115.0 L902.4,111.8 L902.4,108.5 L902.4,105.3 L902.4,102.0 L902.4,98.7 L902.4,95.5 L902.4,92.2 L902.4,89.0 L902.4,85.7 L902.4,82.4 L902.4,79.2 L902.4,75.9 L902.4,72.7 L902.4,69.4 L902.4,66.2 L902.4,62.9 L902.4,59.6 L902.4,56.4 L902.4,53.1 L902.4,49.9 L902.4,46.6 L902.4,43.3 L902.4,40.1 L902.4,36.8 L902.4,33.6 L902.4,30.3 L902.4,27.1"/>
<path d="M902.4,613.5 L901.5,610.3 L900.7,607.0 L899.8,603.8 L899.0,600.5 L898.1,597.3 L897.3,594.0 L896.5,590.7 L895.6,587.5 L894.8,584.2 L893.9,581.0 L893.1,577.7 L892.3,574.4 L891.4,571.2 L890.6,567.9 L889.8,564.7 L889.0,561.4 L888.1,558.2 L887.3,554.9 L886.5,551.6 L885.7,548.4 L884.9,545.1 L884.1,541.9 L883.3,538.6 L882.6,535.3 L881.8,532.1 L881.0,528.8 L880.3,525.6 L879.5,522.3 L878.8,519.1 L878.0,515.8 L877.3,512.5 L876.6,509.3 L875.8,506.0 L875.1,502.8 L874.4,499.5 L873.7,496.2 L873.1,493.0 L872.4,489.7 L871.7,486.5 L871.1,483.2 L870.4,480.0 L869.8,476.7 L869.1,473.4 L868.5,470.2 L867.9,466.9 L867.3,463.7 L866.7,460.4 L866.2,457.1 L865.6,453.9 L865.0,450.6 L864.5,447.4 L864.0,444.1 L863.5,440.9 L862.9,437.6 L862.5,434.3 L862.0,431.1 L861.5,427.8 L861.0,424.6 L860.6,421.3 L860.2,418.0 L859.7,414.8 L859.3,411.5 L858.9,408.3 L858.6,405.0 L858.2,401.8 L857.8,398.5 L857.5,395.2 L857.2,392.0 L856.9,388.7 L856.6,385.5 L856.3,382.2 L856.0,378.9 L855.8,375.7 L855.5,372.4 L855.3,369.2 L855.1,365.9 L854.9,362.7 L854.7,359.4 L854.5,356.1 L854.4,352.9 L854.2,349.6 L854.1,346.4 L854.0,343.1 L853.9,339.8 L853.8,336.6 L853.8,333.3 L853.7,330.1 L853.7,326.8 L853.6,323.6 L853.6,320.3 L853.6,317.0 L853.7,313.8 L853.7,310.5 L853.8,307.3 L853.8,304.0 L853.9,300.8 L854.0,297.5 L854.1,294.2 L854.2,291.0 L854.4,287.7 L854.5,284.5 L854.7,281.2 L854.9,277.9 L855.1,274.7 L855.3,271.4 L855.5,268.2 L855.8,264.9 L856.0,261.7 L856.3,258.4 L856.6,255.1 L856.9,251.9 L857.2,248.6 L857.5,245.4 L857.8,242.1 L858.2,238.8 L858.6,235.6 L858.9,232.3 L859.3,229.1 L859.7,225.8 L860.2,222.6 L860.6,219.3 L861.0,216.0 L861.5,212.8 L862.0,209.5 L862.5,206.3 L862.9,203.0 L863.5,199.7 L864.0,196.5 L864.5,193.2 L865.0,190.0 L865.6,186.7 L866.2,183.5 L866.7,180.2 L867.3,176.9 L867.9,173.7 L868.5,170.4 L869.1,167.2 L869.8,163.9 L870.4,160.6 L871.1,157.4 L871.7,154.1 L872.4,150.9 L873.1,147.6 L873.7,144.4 L874.4,141.1 L875.1,137.8 L875.8,134.6 L876.6,131.3 L877.3,128.1 L878.0,124.8 L878.8,121.5 L879.5,118.3 L880.3,115.0 L881.0,111.8 L881.8,108.5 L882.6,105.3 L883.3,102.0 L884.1,98.7 L884.9,95.5 L885.7,92.2 L886.5,89.0 L887.3,85.7 L888.1,82.4 L889.0,79.2 L889.8,75.9 L890.6,72.7 L891.4,69.4 L892.3,66.2 L893.1,62.9 L893.9,59.6 L894.8,56.4 L895.6,53.1 L896.5,49.9 L897.3,46.6 L898.1,43.3 L899.0,40.1 L899.8,36.8 L900.7,33.6 L901.5,30.3 L902.4,27.1"/>
<path d="M902.4,613.5 L900.7,610.3 L899.0,607.0 L897.3,603.8 L895.6,600.5 L893.9,597.3 L892.2,594.0 L890.5,590.7 L888.8,587.5 L887.1,584.2 L885.5,581.0 L883.8,577.7 L882.1,574.4 L880.5,571.2 L878.8,567.9 L877.2,564.7 L875.5,561.4 L873.9,558.2 L872.3,554.9 L870.6,551.6 L869.0,548.4 L867.4,545.1 L865.9,541.9 L864.3,538.6 L862.7,535.3 L861.2,532.1 L859.6,528.8 L858.1,525.6 L856.6,522.3 L855.1,519.1 L853.6,515.8 L852.2,512.5 L850.7,509.3 L849.3,506.0 L847.9,502.8 L846.5,499.5 L845.1,496.2 L843.7,493.0 L842.4,489.7 L841.0,486.5 L839.7,483.2 L838.4,480.0 L837.1,476.7 L835.9,473.4 L834.6,470.2 L833.4,466.9 L832.2,463.7 L831.1,460.4 L829.9,457.1 L828.8,453.9 L827.7,450.6 L826.6,447.4 L825.5,444.1 L824.5,440.9 L823.5,437.6 L822.5,434.3 L821.5,431.1 L820.6,427.8 L819.7,424.6 L818.8,421.3 L817.9,418.0 L817.1,414.8 L816.3,411.5 L815.5,408.3 L814.7,405.0 L814.0,401.8 L813.3,398.5 L812.6,395.2 L812.0,392.0 L811.3,388.7 L810.7,385.5 L810.2,382.2 L809.6,378.9 L809.1,375.7 L808.6,372.4 L808.2,369.2 L807.8,365.9 L807.4,362.7 L807.0,359.4 L806.7,356.1 L806.3,352.9 L806.1,349.6 L805.8,346.4 L805.6,343.1 L805.4,339.8 L805.2,336.6 L805.1,333.3 L805.0,330.1 L804.9,326.8 L804.9,323.6 L804.9,320.3 L804.9,317.0 L804.9,313.8 L805.0,310.5 L805.1,307.3 L805.2,304.0 L805.4,300.8 L805.6,297.5 L805.8,294.2 L806.1,291.0 L806.3,287.7 L806.7,284.5 L807.0,281.2 L807.4,277.9 L807.8,274.7 L808.2,271.4 L808.6,268.2 L809.1,264.9 L809.6,261.7 L810.2,258.4 L810.7,255.1 L811.3,251.9 L812.0,248.6 L812.6,245.4 L813.3,242.1 L814.0,238.8 L814.7,235.6 L815.5,232.3 L816.3,229.1 L817.1,225.8 L817.9,222.6 L818.8,219.3 L819.7,216.0 L820.6,212.8 L821.5,209.5 L822.5,206.3 L823.5,203.0 L824.5,199.7 L825.5,196.5 L826.6,193.2 L827.7,190.0 L828.8,186.7 L829.9,183.5 L831.1,180.2 L832.2,176.9 L833.4,173.7 L834.6,170.4 L835.9,167.2 L837.1,163.9 L838.4,160.6 L839.7,157.4 L841.0,154.1 L842.4,150.9 L843.7,147.6 L845.1,144.4 L846.5,141.1 L847.9,137.8 L849.3,134.6 L850.7,131.3 L852.2,128.1 L853.6,124.8 L855.1,121.5 L856.6,118.3 L858.1,115.0 L859.6,111.8 L861.2,108.5 L862.7,105.3 L864.3,102.0 L865.9,98.7 L867.4,95.5 L869.0,92.2 L870.6,89.0 L872.3,85.7 L873.9,82.4 L875.5,79.2 L877.2,75.9 L878.8,72.7 L880.5,69.4 L882.1,66.2 L883.8,62.9 L885.5,59.6 L887.1,56.4 L888.8,53.1 L890.5,49.9 L892.2,46.6 L893.9,43.3 L895.6,40.1 L897.3,36.8 L899.0,33.6 L900.7,30.3 L902.4,27.1"/>
<path d="M902.4,613.5 L899.8,610.3 L897.3,607.0 L894.7,603.8 L892.2,600.5 L889.6,597.3 L887.1,594.0 L884.6,590.7 L882.0,587.5 L879.5,584.2 L877.0,581.0 L874.5,577.7 L872.0,574.4 L869.5,571.2 L867.0,567.9 L864.5,564.7 L862.1,561.4 L859.6,558.2 L857.2,554.9 L854.8,551.6 L852.4,548.4 L850.0,545.1 L847.6,541.9 L845.2,538.6 L842.9,535.3 L840.6,532.1 L838.3,528.8 L836.0,525.6 L833.7,522.3 L831.5,519.1 L829.3,515.8 L827.1,512.5 L824.9,509.3 L822.7,506.0 L820.6,502.8 L818.5,499.5 L816.4,496.2 L814.4,493.0 L812.3,489.7 L810.3,486.5 L808.4,483.2 L806.4,480.0 L804.5,476.7 L802.6,473.4 L800.8,470.2 L799.0,466.9 L797.2,463.7 L795.4,460.4 L793.7,457.1 L792.0,453.9 L790.3,450.6 L788.7,447.4 L787.1,444.1 L785.6,440.9 L784.0,437.6 L782.6,434.3 L781.1,431.1 L779.7,427.8 L778.3,424.6 L777.0,421.3 L775.7,418.0 L774.4,414.8 L773.2,411.5 L772.0,408.3 L770.9,405.0 L769.8,401.8 L768.7,398.5 L767.7,395.2 L766.8,392.0 L765.8,388.7 L764.9,385.5 L764.1,382.2 L763.3,378.9 L762.5,375.7 L761.8,372.4 L761.1,369.2 L760.4,365.9 L759.9,362.7 L759.3,359.4 L758.8,356.1 L758.3,352.9 L757.9,349.6 L757.5,346.4 L757.2,343.1 L756.9,339.8 L756.7,336.6 L756.5,333.3 L756.3,330.1 L756.2,326.8 L756.1,323.6 L756.1,320.3 L756.1,317.0 L756.2,313.8 L756.3,310.5 L756.5,307.3 L756.7,304.0 L756.9,300.8 L757.2,297.5 L757.5,294.2 L757.9,291.0 L758.3,287.7 L758.8,284.5 L759.3,281.2 L759.9,277.9 L760.4,274.7 L761.1,271.4 L761.8,268.2 L762.5,264.9 L763.3,261.7 L764.1,258.4 L764.9,255.1 L765.8,251.9 L766.8,248.6 L767.7,245.4 L768.7,242.1 L769.8,238.8 L770.9,235.6 L772.0,232.3 L773.2,229.1 L774.4,225.8 L775.7,222.6 L777.0,219.3 L778.3,216.0 L779.7,212.8 L781.1,209.5 L782.6,206.3 L784.0,203.0 L785.6,199.7 L787.1,196.5 L788.7,193.2 L790.3,190.0 L792.0,186.7 L793.7,183.5 L795.4,180.2 L797.2,176.9 L799.0,173.7 L800.8,170.4 L802.6,167.2 L804.5,163.9 L806.4,160.6 L808.4,157.4 L810.3,154.1 L812.3,150.9 L814.4,147.6 L816.4,144.4 L818.5,141.1 L820.6,137.8 L822.7,134.6 L824.9,131.3 L827.1,128.1 L829.3,124.8 L831.5,121.5 L833.7,118.3 L836.0,115.0 L838.3,111.8 L840.6,108.5 L842.9,105.3 L845.2,102.0 L847.6,98.7 L850.0,95.5 L852.4,92.2 L854.8,89.0 L857.2,85.7 L859.6,82.4 L862.1,79.2 L864.5,75.9 L867.0,72.7 L869.5,69.4 L872.0,66.2 L874.5,62.9 L877.0,59.6 L879.5,56.4 L882.0,53.1 L884.6,49.9 L887.1,46.6 L889.6,43.3 L892.2,40.1 L894.7,36.8 L897.3,33.6 L899.8,30.3 L902.4,27.1"/>
<path d="M902.4,613.5 L899.0,610.3 L895.6,607.0 L892.2,603.8 L888.8,600.5 L885.4,597.3 L882.0,594.0 L878.6,590.7 L875.3,587.5 L871.9,584.2 L868.5,581.0 L865.2,577.7 L861.8,574.4 L858.5,571.2 L855.2,567.9 L851.9,564.7 L848.6,561.4 L845.4,558.2 L842.1,554.9 L838.9,551.6 L835.7,548.4 L832.5,545.1 L829.3,541.9 L826.2,538.6 L823.1,535.3 L820.0,532.1 L816.9,528.8 L813.8,525.6 L810.8,522.3 L807.8,519.1 L804.9,515.8 L801.9,512.5 L799.0,509.3 L796.2,506.0 L793.3,502.8 L790.5,499.5 L787.7,496.2 L785.0,493.0 L782.3,489.7 L779.6,486.5 L777.0,483.2 L774.4,480.0 L771.9,476.7 L769.4,473.4 L766.9,470.2 L764.5,466.9 L762.1,463.7 L759.7,460.4 L757.4,457.1 L755.2,453.9 L753.0,450.6 L750.8,447.4 L748.7,444.1 L746.6,440.9 L744.6,437.6 L742.6,434.3 L740.7,431.1 L738.8,427.8 L737.0,424.6 L735.2,421.3 L733.5,418.0 L731.8,414.8 L730.2,411.5 L728.6,408.3 L727.1,405.0 L725.6,401.8 L724.2,398.5 L722.8,395.2 L721.5,392.0 L720.3,388.7 L719.1,385.5 L718.0,382.2 L716.9,378.9 L715.9,375.7 L714.9,372.4 L714.0,369.2 L713.1,365.9 L712.3,362.7 L711.6,359.4 L710.9,356.1 L710.3,352.9 L709.7,349.6 L709.2,346.4 L708.8,343.1 L708.4,339.8 L708.1,336.6 L707.8,333.3 L707.6,330.1 L707.5,326.8 L707.4,323.6 L707.3,320.3 L707.4,317.0 L707.5,313.8 L707.6,310.5 L707.8,307.3 L708.1,304.0 L708.4,300.8 L708.8,297.5 L709.2,294.2 L709.7,291.0 L710.3,287.7 L710.9,284.5 L711.6,281.2 L712.3,277.9 L713.1,274.7 L714.0,271.4 L714.9,268.2 L715.9,264.9 L716.9,261.7 L718.0,258.4 L719.1,255.1 L720.3,251.9 L721.5,248.6 L722.8,245.4 L724.2,242.1 L725.6,238.8 L727.1,235.6 L728.6,232.3 L730.2,229.1 L731.8,225.8 L733.5,222.6 L735.2,219.3 L737.0,216.0 L738.8,212.8 L740.7,209.5 L742.6,206.3 L744.6,203.0 L746.6,199.7 L748.7,196.5 L750.8,193.2 L753.0,190.0 L755.2,186.7 L757.4,183.5 L759.7,180.2 L762.1,176.9 L764.5,173.7 L766.9,170.4 L769.4,167.2 L771.9,163.9 L774.4,160.6 L777.0,157.4 L779.6,154.1 L782.3,150.9 L785.0,147.6 L787.7,144.4 L790.5,141.1 L793.3,137.8 L796.2,134.6 L799.0,131.3 L801.9,128.1 L804.9,124.8 L807.8,121.5 L810.8,118.3 L813.8,115.0 L816.9,111.8 L820.0,108.5 L823.1,105.3 L826.2,102.0 L829.3,98.7 L832.5,95.5 L835.7,92.2 L838.9,89.0 L842.1,85.7 L845.4,82.4 L848.6,79.2 L851.9,75.9 L855.2,72.7 L858.5,69.4 L861.8,66.2 L865.2,62.9 L868.5,59.6 L871.9,56.4 L875.3,53.1 L878.6,49.9 L882.0,46.6 L885.4,43.3 L888.8,40.1 L892.2,36.8 L895.6,33.6 L899.0,30.3 L902.4,27.1"/>
<path d="M902.4,613.5 L898.1,610.3 L893.9,607.0 L889.6,603.8 L885.4,600.5 L881.1,597.3 L876.9,594.0 L872.7,590.7 L868.5,587.5 L864.3,584.2 L860.1,581.0 L855.9,577.7 L851.7,574.4 L847.5,571.2 L843.4,567.9 L839.3,564.7 L835.2,561.4 L831.1,558.2 L827.1,554.9 L823.0,551.6 L819.0,548.4 L815.0,545.1 L811.1,541.9 L807.1,538.6 L803.2,535.3 L799.4,532.1 L795.5,528.8 L791.7,525.6 L787.9,522.3 L784.2,519.1 L780.5,515.8 L776.8,512.5 L773.2,509.3 L769.6,506.0 L766.1,502.8 L762.5,499.5 L759.1,496.2 L755.7,493.0 L752.3,489.7 L749.0,486.5 L745.7,483.2 L742.4,480.0 L739.2,476.7 L736.1,473.4 L733.0,470.2 L730.0,466.9 L727.0,463.7 L724.1,460.4 L721.2,457.1 L718.4,453.9 L715.6,450.6 L712.9,447.4 L710.3,444.1 L707.7,440.9 L705.1,437.6 L702.7,434.3 L700.3,431.1 L697.9,427.8 L695.6,424.6 L693.4,421.3 L691.2,418.0 L689.1,414.8 L687.1,411.5 L685.1,408.3 L683.2,405.0 L681.4,401.8 L679.6,398.5 L678.0,395.2 L676.3,392.0 L674.8,388.7 L673.3,385.5 L671.9,382.2 L670.5,378.9 L669.2,375.7 L668.0,372.4 L666.9,369.2 L665.8,365.9 L664.8,362.7 L663.9,359.4 L663.0,356.1 L662.3,352.9 L661.6,349.6 L660.9,346.4 L660.4,343.1 L659.9,339.8 L659.5,336.6 L659.2,333.3 L658.9,330.1 L658.7,326.8 L658.6,323.6 L658.6,320.3 L658.6,317.0 L658.7,313.8 L658.9,310.5 L659.2,307.3 L659.5,304.0 L659.9,300.8 L660.4,297.5 L660.9,294.2 L661.6,291.0 L662.3,287.7 L663.0,284.5 L663.9,281.2 L664.8,277.9 L665.8,274.7 L666.9,271.4 L668.0,268.2 L669.2,264.9 L670.5,261.7 L671.9,258.4 L673.3,255.1 L674.8,251.9 L676.3,248.6 L678.0,245.4 L679.6,242.1 L681.4,238.8 L683.2,235.6 L685.1,232.3 L687.1,229.1 L689.1,225.8 L691.2,222.6 L693.4,219.3 L695.6,216.0 L697.9,212.8 L700.3,209.5 L702.7,206.3 L705.1,203.0 L707.7,199.7 L710.3,196.5 L712.9,193.2 L715.6,190.0 L718.4,186.7 L721.2,183.5 L724.1,180.2 L727.0,176.9 L730.0,173.7 L733.0,170.4 L736.1,167.2 L739.2,163.9 L742.4,160.6 L745.7,157.4 L749.0,154.1 L752.3,150.9 L755.7,147.6 L759.1,144.4 L762.5,141.1 L766.1,137.8 L769.6,134.6 L773.2,131.3 L776.8,128.1 L780.5,124.8 L784.2,121.5 L787.9,118.3 L791.7,115.0 L795.5,111.8 L799.4,108.5 L803.2,105.3 L807.1,102.0 L811.1,98.7 L815.0,95.5 L819.0,92.2 L823.0,89.0 L827.1,85.7 L831.1,82.4 L835.2,79.2 L839.3,75.9 L843.4,72.7 L847.5,69.4 L851.7,66.2 L855.9,62.9 L860.1,59.6 L864.3,56.4 L868.5,53.1 L872.7,49.9 L876.9,46.6 L881.1,43.3 L885.4,40.1 L889.6,36.8 L893.9,33.6 L898.1,30.3 L902.4,27.1"/>
<path d="M902.4,613.5 L897.3,610.3 L892.2,607.0 L887.1,603.8 L882.0,600.5 L876.9,597.3 L871.8,594.0 L866.7,590.7 L861.7,587.5 L856.6,584.2 L851.6,581.0 L846.6,577.7 L841.6,574.4 L836.6,571.2 L831.6,567.9 L826.7,564.7 L821.7,561.4 L816.9,558.2 L812.0,554.9 L807.1,551.6 L802.3,548.4 L797.5,545.1 L792.8,541.9 L788.1,538.6 L783.4,535.3 L778.7,532.1 L774.1,528.8 L769.6,525.6 L765.0,522.3 L760.5,519.1 L756.1,515.8 L751.7,512.5 L747.3,509.3 L743.0,506.0 L738.8,502.8 L734.6,499.5 L730.4,496.2 L726.3,493.0 L722.3,489.7 L718.3,486.5 L714.3,483.2 L710.4,480.0 L706.6,476.7 L702.8,473.4 L699.1,470.2 L695.5,466.9 L691.9,463.7 L688.4,460.4 L685.0,457.1 L681.6,453.9 L678.3,450.6 L675.0,447.4 L671.8,444.1 L668.7,440.9 L665.7,437.6 L662.7,434.3 L659.8,431.1 L657.0,427.8 L654.3,424.6 L651.6,421.3 L649.0,418.0 L646.5,414.8 L644.1,411.5 L641.7,408.3 L639.4,405.0 L637.2,401.8 L635.1,398.5 L633.1,395.2 L631.1,392.0 L629.2,388.7 L627.4,385.5 L625.7,382.2 L624.1,378.9 L622.6,375.7 L621.1,372.4 L619.8,369.2 L618.5,365.9 L617.3,362.7 L616.2,359.4 L615.2,356.1 L614.2,352.9 L613.4,349.6 L612.6,346.4 L612.0,343.1 L611.4,339.8 L610.9,336.6 L610.5,333.3 L610.2,330.1 L610.0,326.8 L609.8,323.6 L609.8,320.3 L609.8,317.0 L610.0,313.8 L610.2,310.5 L610.5,307.3 L610.9,304.0 L611.4,300.8 L612.0,297.5 L612.6,294.2 L613.4,291.0 L614.2,287.7 L615.2,284.5 L616.2,281.2 L617.3,277.9 L618.5,274.7 L619.8,271.4 L621.1,268.2 L622.6,264.9 L624.1,261.7 L625.7,258.4 L627.4,255.1 L629.2,251.9 L631.1,248.6 L633.1,245.4 L635.1,242.1 L637.2,238.8 L639.4,235.6 L641.7,232.3 L644.1,229.1 L646.5,225.8 L649.0,222.6 L651.6,219.3 L654.3,216.0 L657.0,212.8 L659.8,209.5 L662.7,206.3 L665.7,203.0 L668.7,199.7 L671.8,196.5 L675.0,193.2 L678.3,190.0 L681.6,186.7 L685.0,183.5 L688.4,180.2 L691.9,176.9 L695.5,173.7 L699.1,170.4 L702.8,167.2 L706.6,163.9 L710.4,160.6 L714.3,157.4 L718.3,154.1 L722.3,150.9 L726.3,147.6 L730.4,144.4 L734.6,141.1 L738.8,137.8 L743.0,134.6 L747.3,131.3 L751.7,128.1 L756.1,124.8 L760.5,121.5 L765.0,118.3 L769.6,115.0 L774.1,111.8 L778.7,108.5 L783.4,105.3 L788.1,102.0 L792.8,98.7 L797.5,95.5 L802.3,92.2 L807.1,89.0 L812.0,85.7 L816.9,82.4 L821.7,79.2 L826.7,75.9 L831.6,72.7 L836.6,69.4 L841.6,66.2 L846.6,62.9 L851.6,59.6 L856.6,56.4 L861.7,53.1 L866.7,49.9 L871.8,46.6 L876.9,43.3 L882.0,40.1 L887.1,36.8 L892.2,33.6 L897.3,30.3 L902.4,27.1"/>
<path d="M902.4,613.5 L896.4,610.3 L890.5,607.0 L884.5,603.8 L878.6,600.5 L872.6,597.3 L866.7,594.0 L860.8,590.7 L854.9,587.5 L849.0,584.2 L843.1,581.0 L837.3,577.7 L831.4,574.4 L825.6,571.2 L819.8,567.9 L814.0,564.7 L808.3,561.4 L802.6,558.2 L796.9,554.9 L791.3,551.6 L785.6,548.4 L780.1,545.1 L774.5,541.9 L769.0,538.6 L763.6,535.3 L758.1,532.1 L752.8,528.8 L747.4,525.6 L742.1,522.3 L736.9,519.1 L731.7,515.8 L726.6,512.5 L721.5,509.3 L716.5,506.0 L711.5,502.8 L706.6,499.5 L701.8,496.2 L697.0,493.0 L692.2,489.7 L687.6,486.5 L683.0,483.2 L678.4,480.0 L674.0,476.7 L669.6,473.4 L665.3,470.2 L661.0,466.9 L656.8,463.7 L652.7,460.4 L648.7,457.1 L644.8,453.9 L640.9,450.6 L637.1,447.4 L633.4,444.1 L629.8,440.9 L626.2,437.6 L622.8,434.3 L619.4,431.1 L616.1,427.8 L612.9,424.6 L609.8,421.3 L606.8,418.0 L603.8,414.8 L601.0,411.5 L598.2,408.3 L595.6,405.0 L593.0,401.8 L590.5,398.5 L588.2,395.2 L585.9,392.0 L583.7,388.7 L581.6,385.5 L579.6,382.2 L577.7,378.9 L576.0,375.7 L574.3,372.4 L572.7,369.2 L571.2,365.9 L569.8,362.7 L568.5,359.4 L567.3,356.1 L566.2,352.9 L565.2,349.6 L564.4,346.4 L563.6,343.1 L562.9,339.8 L562.3,336.6 L561.9,333.3 L561.5,330.1 L561.2,326.8 L561.1,323.6 L561.0,320.3 L561.1,317.0 L561.2,313.8 L561.5,310.5 L561.9,307.3 L562.3,304.0 L562.9,300.8 L563.6,297.5 L564.4,294.2 L565.2,291.0 L566.2,287.7 L567.3,284.5 L568.5,281.2 L569.8,277.9 L571.2,274.7 L572.7,271.4 L574.3,268.2 L576.0,264.9 L577.7,261.7 L579.6,258.4 L581.6,255.1 L583.7,251.9 L585.9,248.6 L588.2,245.4 L590.5,242.1 L593.0,238.8 L595.6,235.6 L598.2,232.3 L601.0,229.1 L603.8,225.8 L606.8,222.6 L609.8,219.3 L612.9,216.0 L616.1,212.8 L619.4,209.5 L622.8,206.3 L626.2,203.0 L629.8,199.7 L633.4,196.5 L637.1,193.2 L640.9,190.0 L644.8,186.7 L648.7,183.5 L652.7,180.2 L656.8,176.9 L661.0,173.7 L665.3,170.4 L669.6,167.2 L674.0,163.9 L678.4,160.6 L683.0,157.4 L687.6,154.1 L692.2,150.9 L697.0,147.6 L701.8,144.4 L706.6,141.1 L711.5,137.8 L716.5,134.6 L721.5,131.3 L726.6,128.1 L731.7,124.8 L736.9,121.5 L742.1,118.3 L747.4,115.0 L752.8,111.8 L758.1,108.5 L763.6,105.3 L769.0,102.0 L774.5,98.7 L780.1,95.5 L785.6,92.2 L791.3,89.0 L796.9,85.7 L802.6,82.4 L808.3,79.2 L814.0,75.9 L819.8,72.7 L825.6,69.4 L831.4,66.2 L837.3,62.9 L843.1,59.6 L849.0,56.4 L854.9,53.1 L860.8,49.9 L866.7,46.6 L872.6,43.3 L878.6,40.1 L884.5,36.8 L890.5,33.6 L896.4,30.3 L902.4,27.1"/>
<path d="M902.4,613.5 L895.6,610.3 L888.8,607.0 L882.0,603.8 L875.2,600.5 L868.4,597.3 L861.6,594.0 L854.9,590.7 L848.1,587.5 L841.4,584.2 L834.7,581.0 L828.0,577.7 L821.3,574.4 L814.6,571.2 L808.0,567.9 L801.4,564.7 L794.9,561.4 L788.3,558.2 L781.8,554.9 L775.4,551.6 L769.0,548.4 L762.6,545.1 L756.3,541.9 L750.0,538.6 L743.7,535.3 L737.5,532.1 L731.4,528.8 L725.3,525.6 L719.2,522.3 L713.3,519.1 L707.3,515.8 L701.5,512.5 L695.7,509.3 L689.9,506.0 L684.2,502.8 L678.6,499.5 L673.1,496.2 L667.6,493.0 L662.2,489.7 L656.9,486.5 L651.6,483.2 L646.5,480.0 L641.4,476.7 L636.3,473.4 L631.4,470.2 L626.5,466.9 L621.8,463.7 L617.1,460.4 L612.5,457.1 L608.0,453.9 L603.5,450.6 L599.2,447.4 L595.0,444.1 L590.8,440.9 L586.8,437.6 L582.8,434.3 L579.0,431.1 L575.2,427.8 L571.5,424.6 L568.0,421.3 L564.5,418.0 L561.2,414.8 L557.9,411.5 L554.8,408.3 L551.8,405.0 L548.8,401.8 L546.0,398.5 L543.3,395.2 L540.7,392.0 L538.2,388.7 L535.8,385.5 L533.5,382.2 L531.4,378.9 L529.3,375.7 L527.4,372.4 L525.6,369.2 L523.9,365.9 L522.3,362.7 L520.8,359.4 L519.4,356.1 L518.2,352.9 L517.1,349.6 L516.1,346.4 L515.2,343.1 L514.4,339.8 L513.8,336.6 L513.2,333.3 L512.8,330.1 L512.5,326.8 L512.3,323.6 L512.3,320.3 L512.3,317.0 L512.5,313.8 L512.8,310.5 L513.2,307.3 L513.8,304.0 L514.4,300.8 L515.2,297.5 L516.1,294.2 L517.1,291.0 L518.2,287.7 L519.4,284.5 L520.8,281.2 L522.3,277.9 L523.9,274.7 L525.6,271.4 L527.4,268.2 L529.3,264.9 L531.4,261.7 L533.5,258.4 L535.8,255.1 L538.2,251.9 L540.7,248.6 L543.3,245.4 L546.0,242.1 L548.8,238.8 L551.8,235.6 L554.8,232.3 L557.9,229.1 L561.2,225.8 L564.5,222.6 L568.0,219.3 L571.5,216.0 L575.2,212.8 L579.0,209.5 L582.8,206.3 L586.8,203.0 L590.8,199.7 L595.0,196.5 L599.2,193.2 L603.5,190.0 L608.0,186.7 L612.5,183.5 L617.1,180.2 L621.8,176.9 L626.5,173.7 L631.4,170.4 L636.3,167.2 L641.4,163.9 L646.5,160.6 L651.6,157.4 L656.9,154.1 L662.2,150.9 L667.6,147.6 L673.1,144.4 L678.6,141.1 L684.2,137.8 L689.9,134.6 L695.7,131.3 L701.5,128.1 L707.3,124.8 L713.3,121.5 L719.2,118.3 L725.3,115.0 L731.4,111.8 L737.5,108.5 L743.7,105.3 L750.0,102.0 L756.3,98.7 L762.6,95.5 L769.0,92.2 L775.4,89.0 L781.8,85.7 L788.3,82.4 L794.9,79.2 L801.4,75.9 L808.0,72.7 L814.6,69.4 L821.3,66.2 L828.0,62.9 L834.7,59.6 L841.4,56.4 L848.1,53.1 L854.9,49.9 L861.6,46.6 L868.4,43.3 L875.2,40.1 L882.0,36.8 L888.8,33.6 L895.6,30.3 L902.4,27.1"/>
<path d="M902.4,613.5 L894.7,610.3 L887.1,607.0 L879.4,603.8 L871.8,600.5 L864.1,597.3 L856.5,594.0 L848.9,590.7 L841.3,587.5 L833.7,584.2 L826.2,581.0 L818.7,577.7 L811.1,574.4 L803.7,571.2 L796.2,567.9 L788.8,564.7 L781.4,561.4 L774.1,558.2 L766.8,554.9 L759.5,551.6 L752.3,548.4 L745.1,545.1 L738.0,541.9 L730.9,538.6 L723.9,535.3 L716.9,532.1 L710.0,528.8 L703.1,525.6 L696.3,522.3 L689.6,519.1 L683.0,515.8 L676.4,512.5 L669.8,509.3 L663.4,506.0 L657.0,502.8 L650.7,499.5 L644.4,496.2 L638.3,493.0 L632.2,489.7 L626.2,486.5 L620.3,483.2 L614.5,480.0 L608.7,476.7 L603.1,473.4 L597.5,470.2 L592.1,466.9 L586.7,463.7 L581.4,460.4 L576.2,457.1 L571.2,453.9 L566.2,450.6 L561.3,447.4 L556.5,444.1 L551.9,440.9 L547.3,437.6 L542.9,434.3 L538.5,431.1 L534.3,427.8 L530.2,424.6 L526.2,421.3 L522.3,418.0 L518.5,414.8 L514.9,411.5 L511.3,408.3 L507.9,405.0 L504.6,401.8 L501.4,398.5 L498.4,395.2 L495.5,392.0 L492.7,388.7 L490.0,385.5 L487.4,382.2 L485.0,378.9 L482.7,375.7 L480.5,372.4 L478.5,369.2 L476.5,365.9 L474.8,362.7 L473.1,359.4 L471.6,356.1 L470.2,352.9 L468.9,349.6 L467.8,346.4 L466.8,343.1 L465.9,339.8 L465.2,336.6 L464.6,333.3 L464.1,330.1 L463.8,326.8 L463.6,323.6 L463.5,320.3 L463.6,317.0 L463.8,313.8 L464.1,310.5 L464.6,307.3 L465.2,304.0 L465.9,300.8 L466.8,297.5 L467.8,294.2 L468.9,291.0 L470.2,287.7 L471.6,284.5 L473.1,281.2 L474.8,277.9 L476.5,274.7 L478.5,271.4 L480.5,268.2 L482.7,264.9 L485.0,261.7 L487.4,258.4 L490.0,255.1 L492.7,251.9 L495.5,248.6 L498.4,245.4 L501.4,242.1 L504.6,238.8 L507.9,235.6 L511.3,232.3 L514.9,229.1 L518.5,225.8 L522.3,222.6 L526.2,219.3 L530.2,216.0 L534.3,212.8 L538.5,209.5 L542.9,206.3 L547.3,203.0 L551.9,199.7 L556.5,196.5 L561.3,193.2 L566.2,190.0 L571.2,186.7 L576.2,183.5 L581.4,180.2 L586.7,176.9 L592.1,173.7 L597.5,170.4 L603.1,167.2 L608.7,163.9 L614.5,160.6 L620.3,157.4 L626.2,154.1 L632.2,150.9 L638.3,147.6 L644.4,144.4 L650.7,141.1 L657.0,137.8 L663.4,134.6 L669.8,131.3 L676.4,128.1 L683.0,124.8 L689.6,121.5 L696.3,118.3 L703.1,115.0 L710.0,111.8 L716.9,108.5 L723.9,105.3 L730.9,102.0 L738.0,98.7 L745.1,95.5 L752.3,92.2 L759.5,89.0 L766.8,85.7 L774.1,82.4 L781.4,79.2 L788.8,75.9 L796.2,72.7 L803.7,69.4 L811.1,66.2 L818.7,62.9 L826.2,59.6 L833.7,56.4 L841.3,53.1 L848.9,49.9 L856.5,46.6 L864.1,43.3 L871.8,40.1 L879.4,36.8 L887.1,33.6 L894.7,30.3 L902.4,27.1"/>
<path d="M902.4,613.5 L893.9,610.3 L885.4,607.0 L876.9,603.8 L868.4,600.5 L859.9,597.3 L851.4,594.0 L843.0,590.7 L834.5,587.5 L826.1,584.2 L817.7,581.0 L809.3,577.7 L801.0,574.4 L792.7,571.2 L784.4,567.9 L776.2,564.7 L768.0,561.4 L759.8,558.2 L751.7,554.9 L743.6,551.6 L735.6,548.4 L727.6,545.1 L719.7,541.9 L711.9,538.6 L704.0,535.3 L696.3,532.1 L688.6,528.8 L681.0,525.6 L673.5,522.3 L666.0,519.1 L658.6,515.8 L651.2,512.5 L644.0,509.3 L636.8,506.0 L629.7,502.8 L622.7,499.5 L615.8,496.2 L608.9,493.0 L602.2,489.7 L595.5,486.5 L588.9,483.2 L582.5,480.0 L576.1,476.7 L569.8,473.4 L563.6,470.2 L557.6,466.9 L551.6,463.7 L545.7,460.4 L540.0,457.1 L534.4,453.9 L528.8,450.6 L523.4,447.4 L518.1,444.1 L512.9,440.9 L507.9,437.6 L502.9,434.3 L498.1,431.1 L493.4,427.8 L488.8,424.6 L484.4,421.3 L480.1,418.0 L475.9,414.8 L471.8,411.5 L467.9,408.3 L464.1,405.0 L460.4,401.8 L456.9,398.5 L453.5,395.2 L450.2,392.0 L447.1,388.7 L444.1,385.5 L441.3,382.2 L438.6,378.9 L436.0,375.7 L433.6,372.4 L431.4,369.2 L429.2,365.9 L427.2,362.7 L425.4,359.4 L423.7,356.1 L422.1,352.9 L420.7,349.6 L419.5,346.4 L418.4,343.1 L417.4,339.8 L416.6,336.6 L415.9,333.3 L415.4,330.1 L415.0,326.8 L414.8,323.6 L414.7,320.3 L414.8,317.0 L415.0,313.8 L415.4,310.5 L415.9,307.3 L416.6,304.0 L417.4,300.8 L418.4,297.5 L419.5,294.2 L420.7,291.0 L422.1,287.7 L423.7,284.5 L425.4,281.2 L427.2,277.9 L429.2,274.7 L431.4,271.4 L433.6,268.2 L436.0,264.9 L438.6,261.7 L441.3,258.4 L444.1,255.1 L447.1,251.9 L450.2,248.6 L453.5,245.4 L456.9,242.1 L460.4,238.8 L464.1,235.6 L467.9,232.3 L471.8,229.1 L475.9,225.8 L480.1,222.6 L484.4,219.3 L488.8,216.0 L493.4,212.8 L498.1,209.5 L502.9,206.3 L507.9,203.0 L512.9,199.7 L518.1,196.5 L523.4,193.2 L528.8,190.0 L534.4,186.7 L540.0,183.5 L545.7,180.2 L551.6,176.9 L557.6,173.7 L563.6,170.4 L569.8,167.2 L576.1,163.9 L582.5,160.6 L588.9,157.4 L595.5,154.1 L602.2,150.9 L608.9,147.6 L615.8,144.4 L622.7,141.1 L629.7,137.8 L636.8,134.6 L644.0,131.3 L651.2,128.1 L658.6,124.8 L666.0,121.5 L673.5,118.3 L681.0,115.0 L688.6,111.8 L696.3,108.5 L704.0,105.3 L711.9,102.0 L719.7,98.7 L727.6,95.5 L735.6,92.2 L743.6,89.0 L751.7,85.7 L759.8,82.4 L768.0,79.2 L776.2,75.9 L784.4,72.7 L792.7,69.4 L801.0,66.2 L809.3,62.9 L817.7,59.6 L826.1,56.4 L834.5,53.1 L843.0,49.9 L851.4,46.6 L859.9,43.3 L868.4,40.1 L876.9,36.8 L885.4,33.6 L893.9,30.3 L902.4,27.1"/>
<path d="M902.4,613.5 L893.0,610.3 L883.7,607.0 L874.3,603.8 L865.0,600.5 L855.6,597.3 L846.3,594.0 L837.0,590.7 L827.7,587.5 L818.5,584.2 L809.2,581.0 L800.0,577.7 L790.9,574.4 L781.7,571.2 L772.6,567.9 L763.6,564.7 L754.5,561.4 L745.6,558.2 L736.6,554.9 L727.8,551.6 L718.9,548.4 L710.2,545.1 L701.4,541.9 L692.8,538.6 L684.2,535.3 L675.7,532.1 L667.2,528.8 L658.9,525.6 L650.6,522.3 L642.3,519.1 L634.2,515.8 L626.1,512.5 L618.1,509.3 L610.2,506.0 L602.4,502.8 L594.7,499.5 L587.1,496.2 L579.6,493.0 L572.1,489.7 L564.8,486.5 L557.6,483.2 L550.5,480.0 L543.5,476.7 L536.6,473.4 L529.8,470.2 L523.1,466.9 L516.5,463.7 L510.1,460.4 L503.8,457.1 L497.6,453.9 L491.5,450.6 L485.5,447.4 L479.7,444.1 L474.0,440.9 L468.4,437.6 L463.0,434.3 L457.7,431.1 L452.5,427.8 L447.5,424.6 L442.6,421.3 L437.8,418.0 L433.2,414.8 L428.8,411.5 L424.4,408.3 L420.3,405.0 L416.2,401.8 L412.3,398.5 L408.6,395.2 L405.0,392.0 L401.6,388.7 L398.3,385.5 L395.2,382.2 L392.2,378.9 L389.4,375.7 L386.7,372.4 L384.2,369.2 L381.9,365.9 L379.7,362.7 L377.7,359.4 L375.8,356.1 L374.1,352.9 L372.6,349.6 L371.2,346.4 L370.0,343.1 L368.9,339.8 L368.0,336.6 L367.3,333.3 L366.7,330.1 L366.3,326.8 L366.1,323.6 L366.0,320.3 L366.1,317.0 L366.3,313.8 L366.7,310.5 L367.3,307.3 L368.0,304.0 L368.9,300.8 L370.0,297.5 L371.2,294.2 L372.6,291.0 L374.1,287.7 L375.8,284.5 L377.7,281.2 L379.7,277.9 L381.9,274.7 L384.2,271.4 L386.7,268.2 L389.4,264.9 L392.2,261.7 L395.2,258.4 L398.3,255.1 L401.6,251.9 L405.0,248.6 L408.6,245.4 L412.3,242.1 L416.2,238.8 L420.3,235.6 L424.4,232.3 L428.8,229.1 L433.2,225.8 L437.8,222.6 L442.6,219.3 L447.5,216.0 L452.5,212.8 L457.7,209.5 L463.0,206.3 L468.4,203.0 L474.0,199.7 L479.7,196.5 L485.5,193.2 L491.5,190.0 L497.6,186.7 L503.8,183.5 L510.1,180.2 L516.5,176.9 L523.1,173.7 L529.8,170.4 L536.6,167.2 L543.5,163.9 L550.5,160.6 L557.6,157.4 L564.8,154.1 L572.1,150.9 L579.6,147.6 L587.1,144.4 L594.7,141.1 L602.4,137.8 L610.2,134.6 L618.1,131.3 L626.1,128.1 L634.2,124.8 L642.3,121.5 L650.6,118.3 L658.9,115.0 L667.2,111.8 L675.7,108.5 L684.2,105.3 L692.8,102.0 L701.4,98.7 L710.2,95.5 L718.9,92.2 L727.8,89.0 L736.6,85.7 L745.6,82.4 L754.5,79.2 L763.6,75.9 L772.6,72.7 L781.7,69.4 L790.9,66.2 L800.0,62.9 L809.2,59.6 L818.5,56.4 L827.7,53.1 L837.0,49.9 L846.3,46.6 L855.6,43.3 L865.0,40.1 L874.3,36.8 L883.7,33.6 L893.0,30.3 L902.4,27.1"/>
<path d="M902.4,613.5 L892.2,610.3 L882.0,607.0 L871.8,603.8 L861.6,600.5 L851.4,597.3 L841.2,594.0 L831.1,590.7 L821.0,587.5 L810.9,584.2 L800.8,581.0 L790.7,577.7 L780.7,574.4 L770.8,571.2 L760.8,567.9 L750.9,564.7 L741.1,561.4 L731.3,558.2 L721.6,554.9 L711.9,551.6 L702.3,548.4 L692.7,545.1 L683.2,541.9 L673.7,538.6 L664.4,535.3 L655.1,532.1 L645.9,528.8 L636.7,525.6 L627.7,522.3 L618.7,519.1 L609.8,515.8 L601.0,512.5 L592.3,509.3 L583.7,506.0 L575.2,502.8 L566.7,499.5 L558.4,496.2 L550.2,493.0 L542.1,489.7 L534.1,486.5 L526.2,483.2 L518.5,480.0 L510.8,476.7 L503.3,473.4 L495.9,470.2 L488.6,466.9 L481.4,463.7 L474.4,460.4 L467.5,457.1 L460.7,453.9 L454.1,450.6 L447.6,447.4 L441.3,444.1 L435.0,440.9 L429.0,437.6 L423.0,434.3 L417.2,431.1 L411.6,427.8 L406.1,424.6 L400.8,421.3 L395.6,418.0 L390.6,414.8 L385.7,411.5 L381.0,408.3 L376.4,405.0 L372.0,401.8 L367.8,398.5 L363.7,395.2 L359.8,392.0 L356.1,388.7 L352.5,385.5 L349.1,382.2 L345.8,378.9 L342.8,375.7 L339.9,372.4 L337.1,369.2 L334.6,365.9 L332.2,362.7 L330.0,359.4 L328.0,356.1 L326.1,352.9 L324.4,349.6 L322.9,346.4 L321.6,343.1 L320.4,339.8 L319.4,336.6 L318.6,333.3 L318.0,330.1 L317.6,326.8 L317.3,323.6 L317.2,320.3 L317.3,317.0 L317.6,313.8 L318.0,310.5 L318.6,307.3 L319.4,304.0 L320.4,300.8 L321.6,297.5 L322.9,294.2 L324.4,291.0 L326.1,287.7 L328.0,284.5 L330.0,281.2 L332.2,277.9 L334.6,274.7 L337.1,271.4 L339.9,268.2 L342.8,264.9 L345.8,261.7 L349.1,258.4 L352.5,255.1 L356.1,251.9 L359.8,248.6 L363.7,245.4 L367.8,242.1 L372.0,238.8 L376.4,235.6 L381.0,232.3 L385.7,229.1 L390.6,225.8 L395.6,222.6 L400.8,219.3 L406.1,216.0 L411.6,212.8 L417.2,209.5 L423.0,206.3 L429.0,203.0 L435.0,199.7 L441.3,196.5 L447.6,193.2 L454.1,190.0 L460.7,186.7 L467.5,183.5 L474.4,180.2 L481.4,176.9 L488.6,173.7 L495.9,170.4 L503.3,167.2 L510.8,163.9 L518.5,160.6 L526.2,157.4 L534.1,154.1 L542.1,150.9 L550.2,147.6 L558.4,144.4 L566.7,141.1 L575.2,137.8 L583.7,134.6 L592.3,131.3 L601.0,128.1 L609.8,124.8 L618.7,121.5 L627.7,118.3 L636.7,115.0 L645.9,111.8 L655.1,108.5 L664.4,105.3 L673.7,102.0 L683.2,98.7 L692.7,95.5 L702.3,92.2 L711.9,89.0 L721.6,85.7 L731.3,82.4 L741.1,79.2 L750.9,75.9 L760.8,72.7 L770.8,69.4 L780.7,66.2 L790.7,62.9 L800.8,59.6 L810.9,56.4 L821.0,53.1 L831.1,49.9 L841.2,46.6 L851.4,43.3 L861.6,40.1 L871.8,36.8 L882.0,33.6 L892.2,30.3 L902.4,27.1"/>
<path d="M1053.9,564.7 L1052.2,564.7 L1050.5,564.7 L1048.8,564.7 L1047.1,564.7 L1045.4,564.7 L1043.8,564.7 L1042.1,564.7 L1040.4,564.7 L1038.7,564.7 L1037.0,564.7 L1035.3,564.7 L1033.7,564.7 L1032.0,564.7 L1030.3,564.7 L1028.6,564.7 L1026.9,564.7 L1025.3,564.7 L1023.6,564.7 L1021.9,564.7 L1020.2,564.7 L1018.5,564.7 L1016.8,564.7 L1015.2,564.7 L1013.5,564.7 L1011.8,564.7 L1010.1,564.7 L1008.4,564.7 L1006.7,564.7 L1005.1,564.7 L1003.4,564.7 L1001.7,564.7 L1000.0,564.7 L998.3,564.7 L996.6,564.7 L995.0,564.7 L993.3,564.7 L991.6,564.7 L989.9,564.7 L988.2,564.7 L986.5,564.7 L984.9,564.7 L983.2,564.7 L981.5,564.7 L979.8,564.7 L978.1,564.7 L976.4,564.7 L974.8,564.7 L973.1,564.7 L971.4,564.7 L969.7,564.7 L968.0,564.7 L966.3,564.7 L964.7,564.7 L963.0,564.7 L961.3,564.7 L959.6,564.7 L957.9,564.7 L956.3,564.7 L954.6,564.7 L952.9,564.7 L951.2,564.7 L949.5,564.7 L947.8,564.7 L946.2,564.7 L944.5,564.7 L942.8,564.7 L941.1,564.7 L939.4,564.7 L937.7,564.7 L936.1,564.7 L934.4,564.7 L932.7,564.7 L931.0,564.7 L929.3,564.7 L927.6,564.7 L926.0,564.7 L924.3,564.7 L922.6,564.7 L920.9,564.7 L919.2,564.7 L917.5,564.7 L915.9,564.7 L914.2,564.7 L912.5,564.7 L910.8,564.7 L909.1,564.7 L907.4,564.7 L905.8,564.7 L904.1,564.7 L902.4,564.7 L900.7,564.7 L899.0,564.7 L897.4,564.7 L895.7,564.7 L894.0,564.7 L892.3,564.7 L890.6,564.7 L888.9,564.7 L887.3,564.7 L885.6,564.7 L883.9,564.7 L882.2,564.7 L880.5,564.7 L878.8,564.7 L877.2,564.7 L875.5,564.7 L873.8,564.7 L872.1,564.7 L870.4,564.7 L868.7,564.7 L867.1,564.7 L865.4,564.7 L863.7,564.7 L862.0,564.7 L860.3,564.7 L858.6,564.7 L857.0,564.7 L855.3,564.7 L853.6,564.7 L851.9,564.7 L850.2,564.7 L848.5,564.7 L846.9,564.7 L845.2,564.7 L843.5,564.7 L841.8,564.7 L840.1,564.7 L838.5,564.7 L836.8,564.7 L835.1,564.7 L833.4,564.7 L831.7,564.7 L830.0,564.7 L828.4,564.7 L826.7,564.7 L825.0,564.7 L823.3,564.7 L821.6,564.7 L819.9,564.7 L818.3,564.7 L816.6,564.7 L814.9,564.7 L813.2,564.7 L811.5,564.7 L809.8,564.7 L808.2,564.7 L806.5,564.7 L804.8,564.7 L803.1,564.7 L801.4,564.7 L799.7,564.7 L798.1,564.7 L796.4,564.7 L794.7,564.7 L793.0,564.7 L791.3,564.7 L789.6,564.7 L788.0,564.7 L786.3,564.7 L784.6,564.7 L782.9,564.7 L781.2,564.7 L779.5,564.7 L777.9,564.7 L776.2,564.7 L774.5,564.7 L772.8,564.7 L771.1,564.7 L769.5,564.7 L767.8,564.7 L766.1,564.7 L764.4,564.7 L762.7,564.7 L761.0,564.7 L759.4,564.7 L757.7,564.7 L756.0,564.7 L754.3,564.7 L752.6,564.7 L750.9,564.7"/>
<path d="M1195.0,515.8 L1191.7,515.8 L1188.5,515.8 L1185.2,515.8 L1182.0,515.8 L1178.7,515.8 L1175.5,515.8 L1172.2,515.8 L1169.0,515.8 L1165.7,515.8 L1162.5,515.8 L1159.2,515.8 L1156.0,515.8 L1152.7,515.8 L1149.5,515.8 L1146.2,515.8 L1143.0,515.8 L1139.7,515.8 L1136.5,515.8 L1133.2,515.8 L1130.0,515.8 L1126.7,515.8 L1123.5,515.8 L1120.2,515.8 L1117.0,515.8 L1113.7,515.8 L1110.5,515.8 L1107.2,515.8 L1104.0,515.8 L1100.7,515.8 L1097.5,515.8 L1094.2,515.8 L1091.0,515.8 L1087.7,515.8 L1084.5,515.8 L1081.2,515.8 L1078.0,515.8 L1074.7,515.8 L1071.5,515.8 L1068.2,515.8 L1065.0,515.8 L1061.7,515.8 L1058.5,515.8 L1055.2,515.8 L1052.0,515.8 L1048.7,515.8 L1045.4,515.8 L1042.2,515.8 L1038.9,515.8 L1035.7,515.8 L1032.4,515.8 L1029.2,515.8 L1025.9,515.8 L1022.7,515.8 L1019.4,515.8 L1016.2,515.8 L1012.9,515.8 L1009.7,515.8 L1006.4,515.8 L1003.2,515.8 L999.9,515.8 L996.7,515.8 L993.4,515.8 L990.2,515.8 L986.9,515.8 L983.7,515.8 L980.4,515.8 L977.2,515.8 L973.9,515.8 L970.7,515.8 L967.4,515.8 L964.2,515.8 L960.9,515.8 L957.7,515.8 L954.4,515.8 L951.2,515.8 L947.9,515.8 L944.7,515.8 L941.4,515.8 L938.2,515.8 L934.9,515.8 L931.7,515.8 L928.4,515.8 L925.2,515.8 L921.9,515.8 L918.7,515.8 L915.4,515.8 L912.2,515.8 L908.9,515.8 L905.7,515.8 L902.4,515.8 L899.1,515.8 L895.9,515.8 L892.6,515.8 L889.4,515.8 L886.1,515.8 L882.9,515.8 L879.6,515.8 L876.4,515.8 L873.1,515.8 L869.9,515.8 L866.6,515.8 L863.4,515.8 L860.1,515.8 L856.9,515.8 L853.6,515.8 L850.4,515.8 L847.1,515.8 L843.9,515.8 L840.6,515.8 L837.4,515.8 L834.1,515.8 L830.9,515.8 L827.6,515.8 L824.4,515.8 L821.1,515.8 L817.9,515.8 L814.6,515.8 L811.4,515.8 L808.1,515.8 L804.9,515.8 L801.6,515.8 L798.4,515.8 L795.1,515.8 L791.9,515.8 L788.6,515.8 L785.4,515.8 L782.1,515.8 L778.9,515.8 L775.6,515.8 L772.4,515.8 L769.1,515.8 L765.9,515.8 L762.6,515.8 L759.4,515.8 L756.1,515.8 L752.8,515.8 L749.6,515.8 L746.3,515.8 L743.1,515.8 L739.8,515.8 L736.6,515.8 L733.3,515.8 L730.1,515.8 L726.8,515.8 L723.6,515.8 L720.3,515.8 L717.1,515.8 L713.8,515.8 L710.6,515.8 L707.3,515.8 L704.1,515.8 L700.8,515.8 L697.6,515.8 L694.3,515.8 L691.1,515.8 L687.8,515.8 L684.6,515.8 L681.3,515.8 L678.1,515.8 L674.8,515.8 L671.6,515.8 L668.3,515.8 L665.1,515.8 L661.8,515.8 L658.6,515.8 L655.3,515.8 L652.1,515.8 L648.8,515.8 L645.6,515.8 L642.3,515.8 L639.1,515.8 L635.8,515.8 L632.6,515.8 L629.3,515.8 L626.1,515.8 L622.8,515.8 L619.6,515.8 L616.3,515.8 L613.1,515.8 L609.8,515.8"/>
<path d="M1316.2,466.9 L1311.6,466.9 L1307.0,466.9 L1302.4,466.9 L1297.8,466.9 L1293.2,466.9 L1288.6,466.9 L1284.0,466.9 L1279.4,466.9 L1274.8,466.9 L1270.2,466.9 L1265.6,466.9 L1261.0,466.9 L1256.4,466.9 L1251.8,466.9 L1247.2,466.9 L1242.6,466.9 L1238.0,466.9 L1233.4,466.9 L1228.8,466.9 L1224.2,466.9 L1219.6,466.9 L1215.0,466.9 L1210.4,466.9 L1205.9,466.9 L1201.3,466.9 L1196.7,466.9 L1192.1,466.9 L1187.5,466.9 L1182.9,466.9 L1178.3,466.9 L1173.7,466.9 L1169.1,466.9 L1164.5,466.9 L1159.9,466.9 L1155.3,466.9 L1150.7,466.9 L1146.1,466.9 L1141.5,466.9 L1136.9,466.9 L1132.3,466.9 L1127.7,466.9 L1123.1,466.9 L1118.5,466.9 L1113.9,466.9 L1109.3,466.9 L1104.7,466.9 L1100.1,466.9 L1095.5,466.9 L1090.9,466.9 L1086.3,466.9 L1081.7,466.9 L1077.1,466.9 L1072.5,466.9 L1067.9,466.9 L1063.3,466.9 L1058.7,466.9 L1054.1,466.9 L1049.5,466.9 L1044.9,466.9 L1040.3,466.9 L1035.7,466.9 L1031.1,466.9 L1026.5,466.9 L1021.9,466.9 L1017.3,466.9 L1012.7,466.9 L1008.1,466.9 L1003.6,466.9 L999.0,466.9 L994.4,466.9 L989.8,466.9 L985.2,466.9 L980.6,466.9 L976.0,466.9 L971.4,466.9 L966.8,466.9 L962.2,466.9 L957.6,466.9 L953.0,466.9 L948.4,466.9 L943.8,466.9 L939.2,466.9 L934.6,466.9 L930.0,466.9 L925.4,466.9 L920.8,466.9 L916.2,466.9 L911.6,466.9 L907.0,466.9 L902.4,466.9 L897.8,466.9 L893.2,466.9 L888.6,466.9 L884.0,466.9 L879.4,466.9 L874.8,466.9 L870.2,466.9 L865.6,466.9 L861.0,466.9 L856.4,466.9 L851.8,466.9 L847.2,466.9 L842.6,466.9 L838.0,466.9 L833.4,466.9 L828.8,466.9 L824.2,466.9 L819.6,466.9 L815.0,466.9 L810.4,466.9 L805.8,466.9 L801.2,466.9 L796.7,466.9 L792.1,466.9 L787.5,466.9 L782.9,466.9 L778.3,466.9 L773.7,466.9 L769.1,466.9 L764.5,466.9 L759.9,466.9 L755.3,466.9 L750.7,466.9 L746.1,466.9 L741.5,466.9 L736.9,466.9 L732.3,466.9 L727.7,466.9 L723.1,466.9 L718.5,466.9 L713.9,466.9 L709.3,466.9 L704.7,466.9 L700.1,466.9 L695.5,466.9 L690.9,466.9 L686.3,466.9 L681.7,466.9 L677.1,466.9 L672.5,466.9 L667.9,466.9 L663.3,466.9 L658.7,466.9 L654.1,466.9 L649.5,466.9 L644.9,466.9 L640.3,466.9 L635.7,466.9 L631.1,466.9 L626.5,466.9 L621.9,466.9 L617.3,466.9 L612.7,466.9 L608.1,466.9 L603.5,466.9 L598.9,466.9 L594.4,466.9 L589.8,466.9 L585.2,466.9 L580.6,466.9 L576.0,466.9 L571.4,466.9 L566.8,466.9 L562.2,466.9 L557.6,466.9 L553.0,466.9 L548.4,466.9 L543.8,466.9 L539.2,466.9 L534.6,466.9 L530.0,466.9 L525.4,466.9 L520.8,466.9 L516.2,466.9 L511.6,466.9 L507.0,466.9 L502.4,466.9 L497.8,466.9 L493.2,466.9 L488.6,466.9"/>
<path d="M1409.2,418.0 L1403.6,418.0 L1397.9,418.0 L1392.3,418.0 L1386.7,418.0 L1381.0,418.0 L1375.4,418.0 L1369.8,418.0 L1364.1,418.0 L1358.5,418.0 L1352.9,418.0 L1347.3,418.0 L1341.6,418.0 L1336.0,418.0 L1330.4,418.0 L1324.7,418.0 L1319.1,418.0 L1313.5,418.0 L1307.8,418.0 L1302.2,418.0 L1296.6,418.0 L1290.9,418.0 L1285.3,418.0 L1279.7,418.0 L1274.1,418.0 L1268.4,418.0 L1262.8,418.0 L1257.2,418.0 L1251.5,418.0 L1245.9,418.0 L1240.3,418.0 L1234.6,418.0 L1229.0,418.0 L1223.4,418.0 L1217.7,418.0 L1212.1,418.0 L1206.5,418.0 L1200.8,418.0 L1195.2,418.0 L1189.6,418.0 L1184.0,418.0 L1178.3,418.0 L1172.7,418.0 L1167.1,418.0 L1161.4,418.0 L1155.8,418.0 L1150.2,418.0 L1144.5,418.0 L1138.9,418.0 L1133.3,418.0 L1127.6,418.0 L1122.0,418.0 L1116.4,418.0 L1110.7,418.0 L1105.1,418.0 L1099.5,418.0 L1093.9,418.0 L1088.2,418.0 L1082.6,418.0 L1077.0,418.0 L1071.3,418.0 L1065.7,418.0 L1060.1,418.0 L1054.4,418.0 L1048.8,418.0 L1043.2,418.0 L1037.5,418.0 L1031.9,418.0 L1026.3,418.0 L1020.7,418.0 L1015.0,418.0 L1009.4,418.0 L1003.8,418.0 L998.1,418.0 L992.5,418.0 L986.9,418.0 L981.2,418.0 L975.6,418.0 L970.0,418.0 L964.3,418.0 L958.7,418.0 L953.1,418.0 L947.4,418.0 L941.8,418.0 L936.2,418.0 L930.6,418.0 L924.9,418.0 L919.3,418.0 L913.7,418.0 L908.0,418.0 L902.4,418.0 L896.8,418.0 L891.1,418.0 L885.5,418.0 L879.9,418.0 L874.2,418.0 L868.6,418.0 L863.0,418.0 L857.4,418.0 L851.7,418.0 L846.1,418.0 L840.5,418.0 L834.8,418.0 L829.2,418.0 L823.6,418.0 L817.9,418.0 L812.3,418.0 L806.7,418.0 L801.0,418.0 L795.4,418.0 L789.8,418.0 L784.1,418.0 L778.5,418.0 L772.9,418.0 L767.3,418.0 L761.6,418.0 L756.0,418.0 L750.4,418.0 L744.7,418.0 L739.1,418.0 L733.5,418.0 L727.8,418.0 L722.2,418.0 L716.6,418.0 L710.9,418.0 L705.3,418.0 L699.7,418.0 L694.1,418.0 L688.4,418.0 L682.8,418.0 L677.2,418.0 L671.5,418.0 L665.9,418.0 L660.3,418.0 L654.6,418.0 L649.0,418.0 L643.4,418.0 L637.7,418.0 L632.1,418.0 L626.5,418.0 L620.8,418.0 L615.2,418.0 L609.6,418.0 L604.0,418.0 L598.3,418.0 L592.7,418.0 L587.1,418.0 L581.4,418.0 L575.8,418.0 L570.2,418.0 L564.5,418.0 L558.9,418.0 L553.3,418.0 L547.6,418.0 L542.0,418.0 L536.4,418.0 L530.7,418.0 L525.1,418.0 L519.5,418.0 L513.9,418.0 L508.2,418.0 L502.6,418.0 L497.0,418.0 L491.3,418.0 L485.7,418.0 L480.1,418.0 L474.4,418.0 L468.8,418.0 L463.2,418.0 L457.5,418.0 L451.9,418.0 L446.3,418.0 L440.7,418.0 L435.0,418.0 L429.4,418.0 L423.8,418.0 L418.1,418.0 L412.5,418.0 L406.9,418.0 L401.2,418.0 L395.6,418.0"/>
<path d="M1467.7,369.2 L1461.4,369.2 L1455.1,369.2 L1448.8,369.2 L1442.5,369.2 L1436.3,369.2 L1430.0,369.2 L1423.7,369.2 L1417.4,369.2 L1411.1,369.2 L1404.9,369.2 L1398.6,369.2 L1392.3,369.2 L1386.0,369.2 L1379.7,369.2 L1373.4,369.2 L1367.2,369.2 L1360.9,369.2 L1354.6,369.2 L1348.3,369.2 L1342.0,369.2 L1335.8,369.2 L1329.5,369.2 L1323.2,369.2 L1316.9,369.2 L1310.6,369.2 L1304.4,369.2 L1298.1,369.2 L1291.8,369.2 L1285.5,369.2 L1279.2,369.2 L1273.0,369.2 L1266.7,369.2 L1260.4,369.2 L1254.1,369.2 L1247.8,369.2 L1241.6,369.2 L1235.3,369.2 L1229.0,369.2 L1222.7,369.2 L1216.4,369.2 L1210.2,369.2 L1203.9,369.2 L1197.6,369.2 L1191.3,369.2 L1185.0,369.2 L1178.7,369.2 L1172.5,369.2 L1166.2,369.2 L1159.9,369.2 L1153.6,369.2 L1147.3,369.2 L1141.1,369.2 L1134.8,369.2 L1128.5,369.2 L1122.2,369.2 L1115.9,369.2 L1109.7,369.2 L1103.4,369.2 L1097.1,369.2 L1090.8,369.2 L1084.5,369.2 L1078.3,369.2 L1072.0,369.2 L1065.7,369.2 L1059.4,369.2 L1053.1,369.2 L1046.9,369.2 L1040.6,369.2 L1034.3,369.2 L1028.0,369.2 L1021.7,369.2 L1015.5,369.2 L1009.2,369.2 L1002.9,369.2 L996.6,369.2 L990.3,369.2 L984.0,369.2 L977.8,369.2 L971.5,369.2 L965.2,369.2 L958.9,369.2 L952.6,369.2 L946.4,369.2 L940.1,369.2 L933.8,369.2 L927.5,369.2 L921.2,369.2 L915.0,369.2 L908.7,369.2 L902.4,369.2 L896.1,369.2 L889.8,369.2 L883.6,369.2 L877.3,369.2 L871.0,369.2 L864.7,369.2 L858.4,369.2 L852.2,369.2 L845.9,369.2 L839.6,369.2 L833.3,369.2 L827.0,369.2 L820.8,369.2 L814.5,369.2 L808.2,369.2 L801.9,369.2 L795.6,369.2 L789.3,369.2 L783.1,369.2 L776.8,369.2 L770.5,369.2 L764.2,369.2 L757.9,369.2 L751.7,369.2 L745.4,369.2 L739.1,369.2 L732.8,369.2 L726.5,369.2 L720.3,369.2 L714.0,369.2 L707.7,369.2 L701.4,369.2 L695.1,369.2 L688.9,369.2 L682.6,369.2 L676.3,369.2 L670.0,369.2 L663.7,369.2 L657.5,369.2 L651.2,369.2 L644.9,369.2 L638.6,369.2 L632.3,369.2 L626.1,369.2 L619.8,369.2 L613.5,369.2 L607.2,369.2 L600.9,369.2 L594.6,369.2 L588.4,369.2 L582.1,369.2 L575.8,369.2 L569.5,369.2 L563.2,369.2 L557.0,369.2 L550.7,369.2 L544.4,369.2 L538.1,369.2 L531.8,369.2 L525.6,369.2 L519.3,369.2 L513.0,369.2 L506.7,369.2 L500.4,369.2 L494.2,369.2 L487.9,369.2 L481.6,369.2 L475.3,369.2 L469.0,369.2 L462.8,369.2 L456.5,369.2 L450.2,369.2 L443.9,369.2 L437.6,369.2 L431.4,369.2 L425.1,369.2 L418.8,369.2 L412.5,369.2 L406.2,369.2 L399.9,369.2 L393.7,369.2 L387.4,369.2 L381.1,369.2 L374.8,369.2 L368.5,369.2 L362.3,369.2 L356.0,369.2 L349.7,369.2 L343.4,369.2 L337.1,369.2"/>
<path d="M1487.6,320.3 L1481.1,320.3 L1474.6,320.3 L1468.1,320.3 L1461.6,320.3 L1455.1,320.3 L1448.6,320.3 L1442.1,320.3 L1435.6,320.3 L1429.1,320.3 L1422.6,320.3 L1416.1,320.3 L1409.6,320.3 L1403.1,320.3 L1396.6,320.3 L1390.1,320.3 L1383.6,320.3 L1377.1,320.3 L1370.6,320.3 L1364.1,320.3 L1357.6,320.3 L1351.1,320.3 L1344.5,320.3 L1338.0,320.3 L1331.5,320.3 L1325.0,320.3 L1318.5,320.3 L1312.0,320.3 L1305.5,320.3 L1299.0,320.3 L1292.5,320.3 L1286.0,320.3 L1279.5,320.3 L1273.0,320.3 L1266.5,320.3 L1260.0,320.3 L1253.5,320.3 L1247.0,320.3 L1240.5,320.3 L1234.0,320.3 L1227.5,320.3 L1221.0,320.3 L1214.5,320.3 L1208.0,320.3 L1201.5,320.3 L1195.0,320.3 L1188.5,320.3 L1182.0,320.3 L1175.5,320.3 L1169.0,320.3 L1162.5,320.3 L1156.0,320.3 L1149.5,320.3 L1143.0,320.3 L1136.5,320.3 L1130.0,320.3 L1123.5,320.3 L1117.0,320.3 L1110.5,320.3 L1104.0,320.3 L1097.5,320.3 L1091.0,320.3 L1084.5,320.3 L1078.0,320.3 L1071.5,320.3 L1065.0,320.3 L1058.5,320.3 L1052.0,320.3 L1045.4,320.3 L1038.9,320.3 L1032.4,320.3 L1025.9,320.3 L1019.4,320.3 L1012.9,320.3 L1006.4,320.3 L999.9,320.3 L993.4,320.3 L986.9,320.3 L980.4,320.3 L973.9,320.3 L967.4,320.3 L960.9,320.3 L954.4,320.3 L947.9,320.3 L941.4,320.3 L934.9,320.3 L928.4,320.3 L921.9,320.3 L915.4,320.3 L908.9,320.3 L902.4,320.3 L895.9,320.3 L889.4,320.3 L882.9,320.3 L876.4,320.3 L869.9,320.3 L863.4,320.3 L856.9,320.3 L850.4,320.3 L843.9,320.3 L837.4,320.3 L830.9,320.3 L824.4,320.3 L817.9,320.3 L811.4,320.3 L804.9,320.3 L798.4,320.3 L791.9,320.3 L785.4,320.3 L778.9,320.3 L772.4,320.3 L765.9,320.3 L759.4,320.3 L752.8,320.3 L746.3,320.3 L739.8,320.3 L733.3,320.3 L726.8,320.3 L720.3,320.3 L713.8,320.3 L707.3,320.3 L700.8,320.3 L694.3,320.3 L687.8,320.3 L681.3,320.3 L674.8,320.3 L668.3,320.3 L661.8,320.3 L655.3,320.3 L648.8,320.3 L642.3,320.3 L635.8,320.3 L629.3,320.3 L622.8,320.3 L616.3,320.3 L609.8,320.3 L603.3,320.3 L596.8,320.3 L590.3,320.3 L583.8,320.3 L577.3,320.3 L570.8,320.3 L564.3,320.3 L557.8,320.3 L551.3,320.3 L544.8,320.3 L538.3,320.3 L531.8,320.3 L525.3,320.3 L518.8,320.3 L512.3,320.3 L505.8,320.3 L499.3,320.3 L492.8,320.3 L486.3,320.3 L479.8,320.3 L473.3,320.3 L466.8,320.3 L460.3,320.3 L453.7,320.3 L447.2,320.3 L440.7,320.3 L434.2,320.3 L427.7,320.3 L421.2,320.3 L414.7,320.3 L408.2,320.3 L401.7,320.3 L395.2,320.3 L388.7,320.3 L382.2,320.3 L375.7,320.3 L369.2,320.3 L362.7,320.3 L356.2,320.3 L349.7,320.3 L343.2,320.3 L336.7,320.3 L330.2,320.3 L323.7,320.3 L317.2,320.3"/>
<path d="M1467.7,271.4 L1461.4,271.4 L1455.1,271.4 L1448.8,271.4 L1442.5,271.4 L1436.3,271.4 L1430.0,271.4 L1423.7,271.4 L1417.4,271.4 L1411.1,271.4 L1404.9,271.4 L1398.6,271.4 L1392.3,271.4 L1386.0,271.4 L1379.7,271.4 L1373.4,271.4 L1367.2,271.4 L1360.9,271.4 L1354.6,271.4 L1348.3,271.4 L1342.0,271.4 L1335.8,271.4 L1329.5,271.4 L1323.2,271.4 L1316.9,271.4 L1310.6,271.4 L1304.4,271.4 L1298.1,271.4 L1291.8,271.4 L1285.5,271.4 L1279.2,271.4 L1273.0,271.4 L1266.7,271.4 L1260.4,271.4 L1254.1,271.4 L1247.8,271.4 L1241.6,271.4 L1235.3,271.4 L1229.0,271.4 L1222.7,271.4 L1216.4,271.4 L1210.2,271.4 L1203.9,271.4 L1197.6,271.4 L1191.3,271.4 L1185.0,271.4 L1178.7,271.4 L1172.5,271.4 L1166.2,271.4 L1159.9,271.4 L1153.6,271.4 L1147.3,271.4 L1141.1,271.4 L1134.8,271.4 L1128.5,271.4 L1122.2,271.4 L1115.9,271.4 L1109.7,271.4 L1103.4,271.4 L1097.1,271.4 L1090.8,271.4 L1084.5,271.4 L1078.3,271.4 L1072.0,271.4 L1065.7,271.4 L1059.4,271.4 L1053.1,271.4 L1046.9,271.4 L1040.6,271.4 L1034.3,271.4 L1028.0,271.4 L1021.7,271.4 L1015.5,271.4 L1009.2,271.4 L1002.9,271.4 L996.6,271.4 L990.3,271.4 L984.0,271.4 L977.8,271.4 L971.5,271.4 L965.2,271.4 L958.9,271.4 L952.6,271.4 L946.4,271.4 L940.1,271.4 L933.8,271.4 L927.5,271.4 L921.2,271.4 L915.0,271.4 L908.7,271.4 L902.4,271.4 L896.1,271.4 L889.8,271.4 L883.6,271.4 L877.3,271.4 L871.0,271.4 L864.7,271.4 L858.4,271.4 L852.2,271.4 L845.9,271.4 L839.6,271.4 L833.3,271.4 L827.0,271.4 L820.8,271.4 L814.5,271.4 L808.2,271.4 L801.9,271.4 L795.6,271.4 L789.3,271.4 L783.1,271.4 L776.8,271.4 L770.5,271.4 L764.2,271.4 L757.9,271.4 L751.7,271.4 L745.4,271.4 L739.1,271.4 L732.8,271.4 L726.5,271.4 L720.3,271.4 L714.0,271.4 L707.7,271.4 L701.4,271.4 L695.1,271.4 L688.9,271.4 L682.6,271.4 L676.3,271.4 L670.0,271.4 L663.7,271.4 L657.5,271.4 L651.2,271.4 L644.9,271.4 L638.6,271.4 L632.3,271.4 L626.1,271.4 L619.8,271.4 L613.5,271.4 L607.2,271.4 L600.9,271.4 L594.6,271.4 L588.4,271.4 L582.1,271.4 L575.8,271.4 L569.5,271.4 L563.2,271.4 L557.0,271.4 L550.7,271.4 L544.4,271.4 L538.1,271.4 L531.8,271.4 L525.6,271.4 L519.3,271.4 L513.0,271.4 L506.7,271.4 L500.4,271.4 L494.2,271.4 L487.9,271.4 L481.6,271.4 L475.3,271.4 L469.0,271.4 L462.8,271.4 L456.5,271.4 L450.2,271.4 L443.9,271.4 L437.6,271.4 L431.4,271.4 L425.1,271.4 L418.8,271.4 L412.5,271.4 L406.2,271.4 L399.9,271.4 L393.7,271.4 L387.4,271.4 L381.1,271.4 L374.8,271.4 L368.5,271.4 L362.3,271.4 L356.0,271.4 L349.7,271.4 L343.4,271.4 L337.1,271.4"/>
<path d="M1409.2,222.6 L1403.6,222.6 L1397.9,222.6 L1392.3,222.6 L1386.7,222.6 L1381.0,222.6 L1375.4,222.6 L1369.8,222.6 L1364.1,222.6 L1358.5,222.6 L1352.9,222.6 L1347.3,222.6 L1341.6,222.6 L1336.0,222.6 L1330.4,222.6 L1324.7,222.6 L1319.1,222.6 L1313.5,222.6 L1307.8,222.6 L1302.2,222.6 L1296.6,222.6 L1290.9,222.6 L1285.3,222.6 L1279.7,222.6 L1274.1,222.6 L1268.4,222.6 L1262.8,222.6 L1257.2,222.6 L1251.5,222.6 L1245.9,222.6 L1240.3,222.6 L1234.6,222.6 L1229.0,222.6 L1223.4,222.6 L1217.7,222.6 L1212.1,222.6 L1206.5,222.6 L1200.8,222.6 L1195.2,222.6 L1189.6,222.6 L1184.0,222.6 L1178.3,222.6 L1172.7,222.6 L1167.1,222.6 L1161.4,222.6 L1155.8,222.6 L1150.2,222.6 L1144.5,222.6 L1138.9,222.6 L1133.3,222.6 L1127.6,222.6 L1122.0,222.6 L1116.4,222.6 L1110.7,222.6 L1105.1,222.6 L1099.5,222.6 L1093.9,222.6 L1088.2,222.6 L1082.6,222.6 L1077.0,222.6 L1071.3,222.6 L1065.7,222.6 L1060.1,222.6 L1054.4,222.6 L1048.8,222.6 L1043.2,222.6 L1037.5,222.6 L1031.9,222.6 L1026.3,222.6 L1020.7,222.6 L1015.0,222.6 L1009.4,222.6 L1003.8,222.6 L998.1,222.6 L992.5,222.6 L986.9,222.6 L981.2,222.6 L975.6,222.6 L970.0,222.6 L964.3,222.6 L958.7,222.6 L953.1,222.6 L947.4,222.6 L941.8,222.6 L936.2,222.6 L930.6,222.6 L924.9,222.6 L919.3,222.6 L913.7,222.6 L908.0,222.6 L902.4,222.6 L896.8,222.6 L891.1,222.6 L885.5,222.6 L879.9,222.6 L874.2,222.6 L868.6,222.6 L863.0,222.6 L857.4,222.6 L851.7,222.6 L846.1,222.6 L840.5,222.6 L834.8,222.6 L829.2,222.6 L823.6,222.6 L817.9,222.6 L812.3,222.6 L806.7,222.6 L801.0,222.6 L795.4,222.6 L789.8,222.6 L784.1,222.6 L778.5,222.6 L772.9,222.6 L767.3,222.6 L761.6,222.6 L756.0,222.6 L750.4,222.6 L744.7,222.6 L739.1,222.6 L733.5,222.6 L727.8,222.6 L722.2,222.6 L716.6,222.6 L710.9,222.6 L705.3,222.6 L699.7,222.6 L694.1,222.6 L688.4,222.6 L682.8,222.6 L677.2,222.6 L671.5,222.6 L665.9,222.6 L660.3,222.6 L654.6,222.6 L649.0,222.6 L643.4,222.6 L637.7,222.6 L632.1,222.6 L626.5,222.6 L620.8,222.6 L615.2,222.6 L609.6,222.6 L604.0,222.6 L598.3,222.6 L592.7,222.6 L587.1,222.6 L581.4,222.6 L575.8,222.6 L570.2,222.6 L564.5,222.6 L558.9,222.6 L553.3,222.6 L547.6,222.6 L542.0,222.6 L536.4,222.6 L530.7,222.6 L525.1,222.6 L519.5,222.6 L513.9,222.6 L508.2,222.6 L502.6,222.6 L497.0,222.6 L491.3,222.6 L485.7,222.6 L480.1,222.6 L474.4,222.6 L468.8,222.6 L463.2,222.6 L457.5,222.6 L451.9,222.6 L446.3,222.6 L440.7,222.6 L435.0,222.6 L429.4,222.6 L423.8,222.6 L418.1,222.6 L412.5,222.6 L406.9,222.6 L401.2,222.6 L395.6,222.6"/>
<path d="M1316.2,173.7 L1311.6,173.7 L1307.0,173.7 L1302.4,173.7 L1297.8,173.7 L1293.2,173.7 L1288.6,173.7 L1284.0,173.7 L1279.4,173.7 L1274.8,173.7 L1270.2,173.7 L1265.6,173.7 L1261.0,173.7 L1256.4,173.7 L1251.8,173.7 L1247.2,173.7 L1242.6,173.7 L1238.0,173.7 L1233.4,173.7 L1228.8,173.7 L1224.2,173.7 L1219.6,173.7 L1215.0,173.7 L1210.4,173.7 L1205.9,173.7 L1201.3,173.7 L1196.7,173.7 L1192.1,173.7 L1187.5,173.7 L1182.9,173.7 L1178.3,173.7 L1173.7,173.7 L1169.1,173.7 L1164.5,173.7 L1159.9,173.7 L1155.3,173.7 L1150.7,173.7 L1146.1,173.7 L1141.5,173.7 L1136.9,173.7 L1132.3,173.7 L1127.7,173.7 L1123.1,173.7 L1118.5,173.7 L1113.9,173.7 L1109.3,173.7 L1104.7,173.7 L1100.1,173.7 L1095.5,173.7 L1090.9,173.7 L1086.3,173.7 L1081.7,173.7 L1077.1,173.7 L1072.5,173.7 L1067.9,173.7 L1063.3,173.7 L1058.7,173.7 L1054.1,173.7 L1049.5,173.7 L1044.9,173.7 L1040.3,173.7 L1035.7,173.7 L1031.1,173.7 L1026.5,173.7 L1021.9,173.7 L1017.3,173.7 L1012.7,173.7 L1008.1,173.7 L1003.6,173.7 L999.0,173.7 L994.4,173.7 L989.8,173.7 L985.2,173.7 L980.6,173.7 L976.0,173.7 L971.4,173.7 L966.8,173.7 L962.2,173.7 L957.6,173.7 L953.0,173.7 L948.4,173.7 L943.8,173.7 L939.2,173.7 L934.6,173.7 L930.0,173.7 L925.4,173.7 L920.8,173.7 L916.2,173.7 L911.6,173.7 L907.0,173.7 L902.4,173.7 L897.8,173.7 L893.2,173.7 L888.6,173.7 L884.0,173.7 L879.4,173.7 L874.8,173.7 L870.2,173.7 L865.6,173.7 L861.0,173.7 L856.4,173.7 L851.8,173.7 L847.2,173.7 L842.6,173.7 L838.0,173.7 L833.4,173.7 L828.8,173.7 L824.2,173.7 L819.6,173.7 L815.0,173.7 L810.4,173.7 L805.8,173.7 L801.2,173.7 L796.7,173.7 L792.1,173.7 L787.5,173.7 L782.9,173.7 L778.3,173.7 L773.7,173.7 L769.1,173.7 L764.5,173.7 L759.9,173.7 L755.3,173.7 L750.7,173.7 L746.1,173.7 L741.5,173.7 L736.9,173.7 L732.3,173.7 L727.7,173.7 L723.1,173.7 L718.5,173.7 L713.9,173.7 L709.3,173.7 L704.7,173.7 L700.1,173.7 L695.5,173.7 L690.9,173.7 L686.3,173.7 L681.7,173.7 L677.1,173.7 L672.5,173.7 L667.9,173.7 L663.3,173.7 L658.7,173.7 L654.1,173.7 L649.5,173.7 L644.9,173.7 L640.3,173.7 L635.7,173.7 L631.1,173.7 L626.5,173.7 L621.9,173.7 L617.3,173.7 L612.7,173.7 L608.1,173.7 L603.5,173.7 L598.9,173.7 L594.4,173.7 L589.8,173.7 L585.2,173.7 L580.6,173.7 L576.0,173.7 L571.4,173.7 L566.8,173.7 L562.2,173.7 L557.6,173.7 L553.0,173.7 L548.4,173.7 L543.8,173.7 L539.2,173.7 L534.6,173.7 L530.0,173.7 L525.4,173.7 L520.8,173.7 L516.2,173.7 L511.6,173.7 L507.0,173.7 L502.4,173.7 L497.8,173.7 L493.2,173.7 L488.6,173.7"/>
<path d="M1195.0,124.8 L1191.7,124.8 L1188.5,124.8 L1185.2,124.8 L1182.0,124.8 L1178.7,124.8 L1175.5,124.8 L1172.2,124.8 L1169.0,124.8 L1165.7,124.8 L1162.5,124.8 L1159.2,124.8 L1156.0,124.8 L1152.7,124.8 L1149.5,124.8 L1146.2,124.8 L1143.0,124.8 L1139.7,124.8 L1136.5,124.8 L1133.2,124.8 L1130.0,124.8 L1126.7,124.8 L1123.5,124.8 L1120.2,124.8 L1117.0,124.8 L1113.7,124.8 L1110.5,124.8 L1107.2,124.8 L1104.0,124.8 L1100.7,124.8 L1097.5,124.8 L1094.2,124.8 L1091.0,124.8 L1087.7,124.8 L1084.5,124.8 L1081.2,124.8 L1078.0,124.8 L1074.7,124.8 L1071.5,124.8 L1068.2,124.8 L1065.0,124.8 L1061.7,124.8 L1058.5,124.8 L1055.2,124.8 L1052.0,124.8 L1048.7,124.8 L1045.4,124.8 L1042.2,124.8 L1038.9,124.8 L1035.7,124.8 L1032.4,124.8 L1029.2,124.8 L1025.9,124.8 L1022.7,124.8 L1019.4,124.8 L1016.2,124.8 L1012.9,124.8 L1009.7,124.8 L1006.4,124.8 L1003.2,124.8 L999.9,124.8 L996.7,124.8 L993.4,124.8 L990.2,124.8 L986.9,124.8 L983.7,124.8 L980.4,124.8 L977.2,124.8 L973.9,124.8 L970.7,124.8 L967.4,124.8 L964.2,124.8 L960.9,124.8 L957.7,124.8 L954.4,124.8 L951.2,124.8 L947.9,124.8 L944.7,124.8 L941.4,124.8 L938.2,124.8 L934.9,124.8 L931.7,124.8 L928.4,124.8 L925.2,124.8 L921.9,124.8 L918.7,124.8 L915.4,124.8 L912.2,124.8 L908.9,124.8 L905.7,124.8 L902.4,124.8 L899.1,124.8 L895.9,124.8 L892.6,124.8 L889.4,124.8 L886.1,124.8 L882.9,124.8 L879.6,124.8 L876.4,124.8 L873.1,124.8 L869.9,124.8 L866.6,124.8 L863.4,124.8 L860.1,124.8 L856.9,124.8 L853.6,124.8 L850.4,124.8 L847.1,124.8 L843.9,124.8 L840.6,124.8 L837.4,124.8 L834.1,124.8 L830.9,124.8 L827.6,124.8 L824.4,124.8 L821.1,124.8 L817.9,124.8 L814.6,124.8 L811.4,124.8 L808.1,124.8 L804.9,124.8 L801.6,124.8 L798.4,124.8 L795.1,124.8 L791.9,124.8 L788.6,124.8 L785.4,124.8 L782.1,124.8 L778.9,124.8 L775.6,124.8 L772.4,124.8 L769.1,124.8 L765.9,124.8 L762.6,124.8 L759.4,124.8 L756.1,124.8 L752.8,124.8 L749.6,124.8 L746.3,124.8 L743.1,124.8 L739.8,124.8 L736.6,124.8 L733.3,124.8 L730.1,124.8 L726.8,124.8 L723.6,124.8 L720.3,124.8 L717.1,124.8 L713.8,124.8 L710.6,124.8 L707.3,124.8 L704.1,124.8 L700.8,124.8 L697.6,124.8 L694.3,124.8 L691.1,124.8 L687.8,124.8 L684.6,124.8 L681.3,124.8 L678.1,124.8 L674.8,124.8 L671.6,124.8 L668.3,124.8 L665.1,124.8 L661.8,124.8 L658.6,124.8 L655.3,124.8 L652.1,124.8 L648.8,124.8 L645.6,124.8 L642.3,124.8 L639.1,124.8 L635.8,124.8 L632.6,124.8 L629.3,124.8 L626.1,124.8 L622.8,124.8 L619.6,124.8 L616.3,124.8 L613.1,124.8 L609.8,124.8"/>
<path d="M1053.9,75.9 L1052.2,75.9 L1050.5,75.9 L1048.8,75.9 L1047.1,75.9 L1045.4,75.9 L1043.8,75.9 L1042.1,75.9 L1040.4,75.9 L1038.7,75.9 L1037.0,75.9 L1035.3,75.9 L1033.7,75.9 L1032.0,75.9 L1030.3,75.9 L1028.6,75.9 L1026.9,75.9 L1025.3,75.9 L1023.6,75.9 L1021.9,75.9 L1020.2,75.9 L1018.5,75.9 L1016.8,75.9 L1015.2,75.9 L1013.5,75.9 L1011.8,75.9 L1010.1,75.9 L1008.4,75.9 L1006.7,75.9 L1005.1,75.9 L1003.4,75.9 L1001.7,75.9 L1000.0,75.9 L998.3,75.9 L996.6,75.9 L995.0,75.9 L993.3,75.9 L991.6,75.9 L989.9,75.9 L988.2,75.9 L986.5,75.9 L984.9,75.9 L983.2,75.9 L981.5,75.9 L979.8,75.9 L978.1,75.9 L976.4,75.9 L974.8,75.9 L973.1,75.9 L971.4,75.9 L969.7,75.9 L968.0,75.9 L966.3,75.9 L964.7,75.9 L963.0,75.9 L961.3,75.9 L959.6,75.9 L957.9,75.9 L956.3,75.9 L954.6,75.9 L952.9,75.9 L951.2,75.9 L949.5,75.9 L947.8,75.9 L946.2,75.9 L944.5,75.9 L942.8,75.9 L941.1,75.9 L939.4,75.9 L937.7,75.9 L936.1,75.9 L934.4,75.9 L932.7,75.9 L931.0,75.9 L929.3,75.9 L927.6,75.9 L926.0,75.9 L924.3,75.9 L922.6,75.9 L920.9,75.9 L919.2,75.9 L917.5,75.9 L915.9,75.9 L914.2,75.9 L912.5,75.9 L910.8,75.9 L909.1,75.9 L907.4,75.9 L905.8,75.9 L904.1,75.9 L902.4,75.9 L900.7,75.9 L899.0,75.9 L897.4,75.9 L895.7,75.9 L894.0,75.9 L892.3,75.9 L890.6,75.9 L888.9,75.9 L887.3,75.9 L885.6,75.9 L883.9,75.9 L882.2,75.9 L880.5,75.9 L878.8,75.9 L877.2,75.9 L875.5,75.9 L873.8,75.9 L872.1,75.9 L870.4,75.9 L868.7,75.9 L867.1,75.9 L865.4,75.9 L863.7,75.9 L862.0,75.9 L860.3,75.9 L858.6,75.9 L857.0,75.9 L855.3,75.9 L853.6,75.9 L851.9,75.9 L850.2,75.9 L848.5,75.9 L846.9,75.9 L845.2,75.9 L843.5,75.9 L841.8,75.9 L840.1,75.9 L838.5,75.9 L836.8,75.9 L835.1,75.9 L833.4,75.9 L831.7,75.9 L830.0,75.9 L828.4,75.9 L826.7,75.9 L825.0,75.9 L823.3,75.9 L821.6,75.9 L819.9,75.9 L818.3,75.9 L816.6,75.9 L814.9,75.9 L813.2,75.9 L811.5,75.9 L809.8,75.9 L808.2,75.9 L806.5,75.9 L804.8,75.9 L803.1,75.9 L801.4,75.9 L799.7,75.9 L798.1,75.9 L796.4,75.9 L794.7,75.9 L793.0,75.9 L791.3,75.9 L789.6,75.9 L788.0,75.9 L786.3,75.9 L784.6,75.9 L782.9,75.9 L781.2,75.9 L779.5,75.9 L777.9,75.9 L776.2,75.9 L774.5,75.9 L772.8,75.9 L771.1,75.9 L769.5,75.9 L767.8,75.9 L766.1,75.9 L764.4,75.9 L762.7,75.9 L761.0,75.9 L759.4,75.9 L757.7,75.9 L756.0,75.9 L754.3,75.9 L752.6,75.9 L750.9,75.9"/>
</g>
<g font-family="Liberation Sans, sans-serif" font-size="10.6" fill="#9a9a9a" text-anchor="middle">
<text x="317.2" y="330">+180<tspan font-size="7" dy="-4">°</tspan></text>
<text x="414.7" y="330">+150<tspan font-size="7" dy="-4">°</tspan></text>
<text x="512.3" y="330">+120<tspan font-size="7" dy="-4">°</tspan></text>
<text x="609.8" y="330">+90<tspan font-size="7" dy="-4">°</tspan></text>
<text x="707.3" y="330">+60<tspan font-size="7" dy="-4">°</tspan></text>
<text x="804.9" y="330">+30<tspan font-size="7" dy="-4">°</tspan></text>
<text x="902.4" y="330">+0<tspan font-size="7" dy="-4">°</tspan></text>
<text x="999.9" y="330">+330<tspan font-size="7" dy="-4">°</tspan></text>
<text x="1097.5" y="330">+300<tspan font-size="7" dy="-4">°</tspan></text>
<text x="1195.0" y="330">+270<tspan font-size="7" dy="-4">°</tspan></text>
<text x="1292.5" y="330">+240<tspan font-size="7" dy="-4">°</tspan></text>
<text x="1390.1" y="330">+210<tspan font-size="7" dy="-4">°</tspan></text>
<text x="1487.6" y="330">+180<tspan font-size="7" dy="-4">°</tspan></text>
<text x="902.4" y="25">+90<tspan font-size="7" dy="-4">°</tspan></text>
<text x="902.4" y="122.9">+60<tspan font-size="7" dy="-4">°</tspan></text>
<text x="902.4" y="220.5">+30<tspan font-size="7" dy="-4">°</tspan></text>
<text x="902.4" y="427.8">−30<tspan font-size="7" dy="-4">°</tspan></text>
<text x="902.4" y="525.4">−60<tspan font-size="7" dy="-4">°</tspan></text>
<text x="902.4" y="623.7">−90<tspan font-size="7" dy="-4">°</tspan></text>
</g>
<g fill="none" stroke-width="1.6" stroke-dasharray="1.7 1.9">
<path stroke="#c2df23" d="M881.7,90.8 L880.7,90.5 L879.7,90.3 L878.7,90.0 L877.7,89.8 L876.7,89.6 L875.7,89.4 L874.6,89.3 L873.6,89.1 L872.6,89.0 L871.5,88.9 L870.4,88.8 L869.4,88.8 L868.3,88.7 L867.2,88.7 L866.1,88.7 L865.0,88.7 L863.8,88.7 L862.7,88.8 L861.5,88.8 L860.4,88.9 L859.2,89.0 L858.0,89.2 L856.8,89.3 L855.6,89.5 L854.4,89.6 L853.1,89.9 L851.9,90.1 L850.6,90.3 L849.3,90.6 L848.0,90.8 L846.7,91.1 L845.4,91.4 L844.1,91.8 L842.7,92.1 L841.3,92.5 L840.0,92.8 L838.6,93.2 L837.1,93.6 L835.7,94.0 L834.3,94.5 L832.8,94.9 L831.4,95.4 L829.9,95.9 L828.4,96.4 L826.9,96.9 L825.4,97.4 L823.8,97.9 L822.3,98.5 L820.7,99.0 L819.2,99.6 L817.6,100.2 L816.0,100.8 L814.4,101.4 L812.8,102.0 L811.1,102.6 L809.5,103.2 L807.8,103.9 L806.2,104.6 L804.5,105.2 L802.8,105.9 L801.1,106.6 L799.4,107.3 L797.7,108.0 L796.0,108.7 L794.3,109.4 L792.6,110.1 L790.8,110.9 L789.1,111.6 L787.3,112.4 L785.5,113.1 L783.8,113.9 L782.0,114.7 L780.2,115.4 L778.4,116.2 L776.6,117.0 L774.8,117.8 L773.0,118.6 L771.2,119.4 L769.4,120.2 L767.6,121.1 L765.7,121.9 L763.9,122.7 L762.1,123.6 L760.2,124.4 L758.4,125.2 L756.5,126.1 L754.7,127.0 L752.8,127.8 L751.0,128.7 L749.1,129.6 L747.3,130.4 L745.4,131.3 L743.5,132.2 L741.7,133.1 L739.8,134.0 L737.9,134.9 L736.1,135.7 L734.2,136.6 L732.3,137.6 L730.4,138.5 L728.6,139.4 L726.7,140.3 L724.8,141.2 L723.0,142.1 L721.1,143.0 L719.2,144.0 L717.4,144.9 L715.5,145.8 L713.6,146.8 L711.7,147.7 L709.9,148.6 L708.0,149.6 L706.2,150.5 L704.3,151.5 L702.4,152.4 L700.6,153.4 L698.7,154.3 L696.9,155.3 L695.0,156.2 L693.2,157.2 L691.3,158.1 L689.5,159.1 L687.7,160.1 L685.8,161.0 L684.0,162.0 L682.2,163.0 L680.3,163.9 L678.5,164.9 L676.7,165.9 L674.9,166.9 L673.1,167.9 L671.3,168.8 L669.5,169.8 L667.7,170.8 L665.9,171.8 L664.1,172.8 L662.3,173.8 L660.6,174.7 L658.8,175.7 L657.0,176.7 L655.3,177.7 L653.5,178.7 L651.8,179.7 L650.0,180.7 L648.3,181.7 L646.5,182.7 L644.8,183.7 L643.1,184.7 L641.4,185.7 L639.7,186.7 L638.0,187.7 L636.3,188.7 L634.6,189.7 L632.9,190.7 L631.2,191.7 L629.6,192.8 L627.9,193.8 L626.2,194.8 L624.6,195.8 L622.9,196.8 L621.3,197.8 L619.7,198.8 L618.1,199.9 L616.5,200.9 L614.9,201.9 L613.3,202.9 L611.7,203.9 L610.1,204.9 L608.5,206.0 L607.0,207.0 L605.4,208.0 L603.8,209.0 L602.3,210.1 L600.8,211.1 L599.2,212.1 L597.7,213.1 L596.2,214.2 L594.7,215.2 L593.2,216.2 L591.8,217.2 L590.3,218.3 L588.8,219.3 L587.4,220.3 L585.9,221.4 L584.5,222.4 L583.1,223.4 L581.6,224.4 L580.2,225.5 L578.8,226.5 L577.4,227.5 L576.1,228.6 L574.7,229.6 L573.3,230.6 L572.0,231.7 L570.6,232.7 L569.3,233.8 L568.0,234.8 L566.7,235.8 L565.4,236.9 L564.1,237.9 L562.8,238.9 L561.5,240.0 L560.3,241.0 L559.0,242.1 L557.8,243.1 L556.6,244.1 L555.3,245.2 L554.1,246.2 L552.9,247.3 L551.7,248.3 L550.6,249.3 L549.4,250.4 L548.2,251.4 L547.1,252.5 L546.0,253.5 L544.8,254.6 L543.7,255.6 L542.6,256.6 L541.5,257.7 L540.5,258.7 L539.4,259.8 L538.3,260.8 L537.3,261.9 L536.3,262.9 L535.2,264.0 L534.2,265.0 L533.2,266.1 L532.2,267.1 L531.3,268.2 L530.3,269.2 L529.3,270.2 L528.4,271.3 L527.5,272.3 L526.5,273.4 L525.6,274.4 L524.7,275.5 L523.9,276.5 L523.0,277.6 L522.1,278.6 L521.3,279.7 L520.4,280.7 L519.6,281.8 L518.8,282.8 L518.0,283.9 L517.2,284.9 L516.4,286.0 L515.7,287.0 L514.9,288.1 L514.2,289.1 L513.5,290.2 L512.7,291.2 L512.0,292.3 L511.4,293.3 L510.7,294.4 L510.0,295.4 L509.4,296.5 L508.7,297.5 L508.1,298.6 L507.5,299.6 L506.9,300.7 L506.3,301.7 L505.7,302.8 L505.1,303.8 L504.6,304.9 L504.0,305.9 L503.5,307.0 L503.0,308.0 L502.5,309.1 L502.0,310.1 L501.5,311.2 L501.1,312.3 L500.6,313.3 L500.2,314.4 L499.8,315.4 L499.3,316.5 L498.9,317.5 L498.6,318.6 L498.2,319.6 L497.8,320.7 L497.5,321.7 L497.1,322.8 L496.8,323.8 L496.5,324.9 L496.2,325.9 L495.9,327.0 L495.7,328.0 L495.4,329.1 L495.1,330.1 L494.9,331.2 L494.7,332.2 L494.5,333.3 L494.3,334.3 L494.1,335.4 L493.9,336.4 L493.8,337.5 L493.6,338.5 L493.5,339.6 L493.4,340.6 L493.3,341.7"/>
<path stroke="#c2df23" d="M1057.5,173.3 L1056.9,171.9 L1056.3,170.5 L1055.7,169.1 L1055.0,167.7 L1054.4,166.3 L1053.8,164.9 L1053.1,163.5 L1052.5,162.1 L1051.8,160.7 L1051.1,159.3 L1050.5,157.9 L1049.8,156.5 L1049.1,155.2 L1048.4,153.8 L1047.7,152.4 L1047.0,151.0 L1046.3,149.7 L1045.6,148.3 L1044.9,146.9 L1044.2,145.6 L1043.4,144.2 L1042.7,142.9 L1042.0,141.5 L1041.3,140.2 L1040.5,138.8 L1039.8,137.5 L1039.0,136.2 L1038.3,134.8 L1037.6,133.5 L1036.8,132.2 L1036.1,130.9 L1035.3,129.6 L1034.6,128.3 L1033.8,127.0 L1033.1,125.7 L1032.3,124.4 L1031.6,123.1 L1030.8,121.8 L1030.1,120.5 L1029.3,119.3 L1028.6,118.0 L1027.9,116.8 L1027.2,115.5 L1026.4,114.3 L1025.7,113.1 L1025.0,111.9 L1024.3,110.7 L1023.6,109.5 L1022.9,108.3 L1022.3,107.1 L1021.6,106.0 L1020.9,104.8 L1020.3,103.7 L1019.7,102.5 L1019.1,101.4 L1018.5,100.3 L1017.9,99.2 L1017.3,98.2 L1016.8,97.1 L1016.3,96.1 L1015.8,95.1 L1015.3,94.1 L1014.9,93.1 L1014.5,92.1 L1014.1,91.2 L1013.8,90.3 L1013.5,89.4 L1013.2,88.5 L1013.0,87.6 L1012.8,86.8 L1012.6,86.0 L1012.5,85.2 L1012.5,84.5 L1012.5,83.8 L1012.6,83.1 L1012.7,82.5 L1012.9,81.8 L1013.2,81.3 L1013.5,80.7 L1013.9,80.2 L1014.4,79.7 L1014.9,79.3 L1015.6,78.9 L1016.3,78.6 L1017.1,78.3 L1018.0,78.0 L1019.1,77.8 L1020.2,77.6 L1021.4,77.5 L1022.7,77.4 L1024.1,77.3 L1025.6,77.3 L1027.2,77.4 L1029.0,77.5 L1030.8,77.6 L1032.7,77.8 L1034.8,78.0 L1037.0,78.3 L1039.3,78.6 L1041.6,78.9 L1044.1,79.3 L1046.7,79.8 L1049.4,80.2 L1052.2,80.7 L1055.1,81.3 L1058.1,81.8 L1061.2,82.5 L1064.4,83.1 L1067.7,83.8 L1071.0,84.5 L1074.4,85.2 L1078.0,86.0 L1081.6,86.8 L1085.2,87.6 L1089.0,88.5 L1092.8,89.4 L1096.6,90.3 M706.4,91.2 L704.8,92.1 L703.2,93.1 L701.6,94.1 L699.8,95.1 L698.1,96.1 L696.3,97.1 L694.4,98.2 L692.5,99.2 L690.6,100.3 L688.6,101.4 L686.7,102.5 L684.7,103.7 L682.6,104.8 L680.6,106.0 L678.5,107.1 L676.4,108.3 L674.2,109.5 L672.1,110.7 L669.9,111.9 L667.8,113.1 L665.6,114.3 L663.4,115.6 L661.2,116.8 L659.0,118.0 L656.8,119.3 L654.5,120.6 L652.3,121.8 L650.1,123.1 L647.8,124.4 L645.6,125.7 L643.4,127.0 L641.1,128.3 L638.9,129.6 L636.6,130.9 L634.4,132.2 L632.1,133.5 L629.9,134.8 L627.7,136.2 L625.4,137.5 L623.2,138.8 L621.0,140.2 L618.8,141.5 L616.6,142.9 L614.4,144.2 L612.2,145.6 L610.0,146.9 L607.8,148.3 L605.7,149.7 L603.5,151.0 L601.4,152.4 L599.2,153.8 L597.1,155.2 L595.0,156.6 L592.9,157.9 L590.8,159.3 L588.8,160.7 L586.7,162.1 L584.6,163.5 L582.6,164.9 L580.6,166.3 L578.6,167.7 L576.6,169.1 L574.6,170.5 L572.6,171.9 L570.7,173.3 L568.8,174.7 L566.8,176.1 L564.9,177.5 L563.1,179.0 L561.2,180.4 L559.3,181.8 L557.5,183.2 L555.7,184.6 L553.9,186.0 L552.1,187.5 L550.4,188.9 L548.6,190.3 L546.9,191.7 L545.2,193.2 L543.5,194.6 L541.8,196.0 L540.2,197.5 L538.6,198.9 L537.0,200.3 L535.4,201.8 L533.8,203.2 L532.3,204.6 L530.7,206.1 L529.2,207.5 L527.8,208.9 L526.3,210.4 L524.8,211.8 L523.4,213.3 L522.0,214.7 L520.7,216.2 L519.3,217.6 L518.0,219.0 L516.7,220.5 L515.4,221.9 L514.1,223.4 L512.9,224.8 L511.6,226.3 L510.4,227.7 L509.3,229.2 L508.1,230.6 L507.0,232.1 L505.9,233.5 L504.8,235.0 L503.7,236.4 L502.7,237.9 L501.7,239.3 L500.7,240.8 L499.7,242.2 L498.8,243.7 L497.9,245.2 L497.0,246.6 L496.1,248.1 L495.3,249.5 L494.5,251.0 L493.7,252.4 L492.9,253.9 L492.1,255.3 L491.4,256.8 L490.7,258.3 L490.1,259.7 L489.4,261.2 L488.8,262.6 L488.2,264.1 L487.6,265.6 L487.1,267.0 L486.6,268.5 L486.1,269.9 L485.6,271.4 L485.2,272.9 L484.7,274.3 L484.3,275.8 L484.0,277.3 L483.6,278.7 L483.3,280.2 L483.0,281.6 L482.8,283.1 L482.5,284.6 L482.3,286.0 L482.1,287.5 L482.0,289.0 L481.8,290.4 L481.7,291.9 L481.6,293.4 L481.6,294.8 L481.5,296.3 L481.5,297.7 L481.5,299.2 L481.6,300.7 L481.7,302.1 L481.8,303.6 L481.9,305.1 L482.0,306.5 L482.2,308.0 L482.4,309.5 L482.6,310.9 L482.9,312.4 L483.2,313.9 L483.5,315.3 L483.8,316.8 L484.1,318.3 L484.5,319.7 L484.9,321.2 L485.4,322.7 L485.8,324.1 L486.3,325.6 L486.8,327.0 L487.3,328.5 L487.9,330.0 L488.5,331.4 L489.1,332.9 L489.7,334.4 L490.4,335.8 L491.1,337.3 L491.8,338.8 L492.5,340.2 L493.3,341.7"/>
<path stroke="#52c569" d="M858.0,150.5 L857.8,149.6 L857.6,148.6 L857.4,147.7 L857.2,146.7 L857.0,145.8 L856.9,144.8 L856.7,143.9 L856.5,143.0 L856.3,142.0 L856.1,141.1 L855.9,140.2 L855.7,139.2 L855.5,138.3 L855.4,137.4 L855.2,136.5 L855.0,135.5 L854.8,134.6 L854.6,133.7 L854.4,132.8 L854.2,131.9 L854.1,131.0 L853.9,130.1 L853.7,129.2 L853.5,128.3 L853.3,127.4 L853.1,126.5 L853.0,125.6 L852.8,124.7 L852.6,123.8 L852.4,123.0 L852.2,122.1 L852.0,121.2 L851.8,120.3 L851.6,119.5 L851.5,118.6 L851.3,117.8 L851.1,116.9 L850.9,116.1 L850.7,115.2 L850.5,114.4 L850.3,113.5 L850.1,112.7 L849.9,111.9 L849.7,111.1 L849.5,110.2 L849.3,109.4 L849.1,108.6 L848.9,107.8 L848.6,107.0 L848.4,106.3 L848.2,105.5 L848.0,104.7 L847.7,103.9 L847.5,103.2 L847.3,102.4 L847.0,101.7 L846.8,100.9 L846.6,100.2 L846.3,99.5 L846.0,98.8 L845.8,98.0 L845.5,97.3 L845.2,96.7 L845.0,96.0 L844.7,95.3 L844.4,94.6 L844.1,94.0 L843.8,93.4 L843.4,92.7 L843.1,92.1 L842.8,91.5 L842.4,90.9 L842.1,90.3 L841.7,89.7 L841.3,89.2 L841.0,88.6 L840.6,88.1 L840.1,87.6 L839.7,87.1 L839.3,86.6 L838.8,86.1 L838.3,85.6 L837.9,85.2 L837.4,84.7 L836.8,84.3 L836.3,83.9 L835.7,83.5 L835.2,83.2 L834.6,82.8 L834.0,82.5 L833.3,82.2 L832.7,81.9 L832.0,81.6 L831.3,81.3 L830.5,81.1 L829.8,80.9 L829.0,80.7 L828.2,80.5 L827.4,80.4 L826.5,80.2 L825.6,80.1 L824.7,80.0 L823.7,79.9 L822.8,79.9 L821.7,79.8 L820.7,79.8 L819.6,79.8 L818.5,79.8 L817.4,79.9 L816.2,80.0 L815.0,80.1 L813.8,80.2 L812.5,80.3 L811.2,80.5 L809.9,80.6 L808.5,80.8 L807.1,81.0 L805.7,81.3 L804.2,81.5 L802.7,81.8 L801.1,82.1 L799.6,82.4 L798.0,82.7 L796.3,83.0 L794.7,83.4 L793.0,83.8 L791.2,84.2 L789.5,84.6 L787.7,85.0 L785.9,85.5 L784.0,85.9 L782.1,86.4 L780.2,86.9 L778.3,87.4 L776.4,87.9 L774.4,88.4 L772.4,89.0 L770.3,89.5 L768.3,90.1 L766.2,90.7 L764.1,91.3 L761.9,91.9 L759.8,92.5 L757.6,93.1 L755.4,93.8 L753.2,94.4 L751.0,95.1 L748.7,95.7 L746.4,96.4 L744.2,97.1 L741.9,97.8 L739.5,98.5 L737.2,99.2 L734.8,99.9 L732.5,100.7 L730.1,101.4 L727.7,102.1 L725.3,102.9 L722.9,103.7 L720.4,104.4 L718.0,105.2 L715.5,106.0 L713.1,106.8 L710.6,107.5 L708.1,108.3 L705.6,109.1 L703.1,110.0 L700.6,110.8 L698.1,111.6 L695.5,112.4 L693.0,113.2 L690.4,114.1 L687.9,114.9 L685.3,115.7 L682.8,116.6 L680.2,117.4 L677.6,118.3 L675.1,119.2 L672.5,120.0 L669.9,120.9 L667.3,121.8 L664.7,122.6 L662.1,123.5 L659.5,124.4 L657.0,125.3 L654.4,126.2 L651.8,127.1 L649.2,128.0 L646.6,128.9 L643.9,129.8 L641.3,130.7 L638.7,131.6 L636.1,132.5 L633.5,133.4 L630.9,134.3 L628.3,135.2 L625.7,136.1 L623.1,137.0 L620.5,138.0 L618.0,138.9 L615.4,139.8 L612.8,140.8 L610.2,141.7 L607.6,142.6 L605.0,143.6 L602.4,144.5 L599.9,145.4 L597.3,146.4 L594.7,147.3 L592.2,148.3 L589.6,149.2 L587.1,150.2 L584.5,151.1 L582.0,152.1 L579.4,153.0 L576.9,154.0 L574.4,154.9 L571.8,155.9 L569.3,156.8 L566.8,157.8 L564.3,158.8 L561.8,159.7 L559.3,160.7 L556.8,161.7 L554.3,162.6 L551.9,163.6 L549.4,164.6 L546.9,165.5 L544.5,166.5 L542.0,167.5 L539.6,168.4 L537.2,169.4 L534.7,170.4 L532.3,171.4 L529.9,172.3 L527.5,173.3 L525.1,174.3 L522.8,175.3 L520.4,176.3 L518.0,177.2 L515.7,178.2 L513.3,179.2 L511.0,180.2 L508.7,181.2 L506.3,182.2 L504.0,183.2 L501.7,184.1 L499.4,185.1 L497.2,186.1 L494.9,187.1 L492.6,188.1 L490.4,189.1 L488.1,190.1 L485.9,191.1 L483.7,192.1 L481.5,193.1 L479.3,194.1 L477.1,195.1 L474.9,196.1 L472.8,197.1 L470.6,198.1 L468.5,199.1 L466.4,200.1 L464.2,201.0 L462.1,202.0 L460.0,203.0 L458.0,204.0 L455.9,205.1 L453.8,206.1 L451.8,207.1 L449.8,208.1 L447.7,209.1 L445.7,210.1 L443.7,211.1 L441.7,212.1 L439.8,213.1 L437.8,214.1 L435.9,215.1 L433.9,216.1 L432.0,217.1 L430.1,218.1 L428.2,219.1 L426.3,220.1 L424.5,221.1 L422.6,222.1 L420.8,223.2 L418.9,224.2 L417.1,225.2 L415.3,226.2 L413.5,227.2 L411.8,228.2 L410.0,229.2 L408.3,230.2 L406.5,231.2 L404.8,232.2 L403.1,233.3 L401.4,234.3 L399.8,235.3 L398.1,236.3"/>
<path stroke="#52c569" d="M1037.5,125.0 L1037.9,124.7 L1038.2,124.4 L1038.6,124.1 L1039.0,123.8 L1039.4,123.5 L1039.8,123.2 L1040.2,123.0 L1040.6,122.7 L1041.0,122.4 L1041.5,122.2 L1041.9,121.9 L1042.3,121.7 L1042.8,121.4 L1043.2,121.2 L1043.7,121.0 L1044.2,120.8 L1044.6,120.5 L1045.1,120.3 L1045.6,120.1 L1046.1,119.9 L1046.6,119.7 L1047.2,119.6 L1047.7,119.4 L1048.2,119.2 L1048.8,119.0 L1049.3,118.9 L1049.9,118.7 L1050.5,118.6 L1051.1,118.4 L1051.7,118.3 L1052.3,118.2 L1052.9,118.0 L1053.5,117.9 L1054.1,117.8 L1054.8,117.7 L1055.4,117.6 L1056.1,117.5 L1056.8,117.4 L1057.5,117.4 L1058.2,117.3 L1058.9,117.2 L1059.6,117.2 L1060.3,117.1 L1061.1,117.1 L1061.8,117.0 L1062.6,117.0 L1063.3,117.0 L1064.1,117.0 L1064.9,117.0 L1065.7,117.0 L1066.5,117.0 L1067.4,117.0 L1068.2,117.0 L1069.0,117.0 L1069.9,117.1 L1070.8,117.1 L1071.7,117.1 L1072.6,117.2 L1073.5,117.2 L1074.4,117.3 L1075.3,117.4 L1076.3,117.5 L1077.2,117.5 L1078.2,117.6 L1079.2,117.7 L1080.2,117.8 L1081.2,117.9 L1082.2,118.1 L1083.2,118.2 L1084.2,118.3 L1085.3,118.5 L1086.3,118.6 L1087.4,118.7 L1088.5,118.9 L1089.6,119.1 L1090.7,119.2 L1091.8,119.4 L1092.9,119.6 L1094.1,119.8 L1095.2,120.0 L1096.4,120.2 L1097.6,120.4 L1098.8,120.6 L1100.0,120.8 L1101.2,121.0 L1102.4,121.3 L1103.6,121.5 L1104.9,121.7 L1106.1,122.0 L1107.4,122.2 L1108.7,122.5 L1109.9,122.8 L1111.2,123.0 L1112.5,123.3 L1113.9,123.6 L1115.2,123.9 L1116.5,124.2 L1117.9,124.5 L1119.2,124.8 L1120.6,125.1 L1122.0,125.4 L1123.4,125.7 L1124.8,126.0 L1126.2,126.3 L1127.6,126.7 L1129.0,127.0 L1130.4,127.4 L1131.9,127.7 L1133.3,128.1 L1134.8,128.4 L1136.3,128.8 L1137.8,129.1 L1139.2,129.5 L1140.7,129.9 L1142.2,130.3 L1143.8,130.6 L1145.3,131.0 L1146.8,131.4 L1148.3,131.8 L1149.9,132.2 L1151.4,132.6 L1153.0,133.0 L1154.6,133.5 L1156.1,133.9 L1157.7,134.3 L1159.3,134.7 L1160.9,135.2 L1162.5,135.6 L1164.1,136.0 L1165.7,136.5 L1167.4,136.9 L1169.0,137.4 L1170.6,137.8 L1172.3,138.3 L1173.9,138.7 L1175.6,139.2 L1177.2,139.7 L1178.9,140.1 L1180.6,140.6 L1182.2,141.1 L1183.9,141.6 L1185.6,142.0 L1187.3,142.5 L1189.0,143.0 L1190.7,143.5 L1192.4,144.0 L1194.1,144.5 L1195.8,145.0 L1197.5,145.5 L1199.2,146.0 L1201.0,146.5 L1202.7,147.0 L1204.4,147.6 L1206.2,148.1 L1207.9,148.6 L1209.7,149.1 L1211.4,149.6 L1213.2,150.2 L1214.9,150.7 L1216.7,151.2 L1218.4,151.8 L1220.2,152.3 L1221.9,152.9 L1223.7,153.4 L1225.5,154.0 L1227.3,154.5 L1229.0,155.1 L1230.8,155.6 L1232.6,156.2 L1234.4,156.7 L1236.1,157.3 L1237.9,157.8 L1239.7,158.4 L1241.5,159.0 L1243.3,159.5 L1245.1,160.1 L1246.9,160.7 L1248.6,161.3 L1250.4,161.8 L1252.2,162.4 L1254.0,163.0 L1255.8,163.6 L1257.6,164.2 L1259.4,164.8 L1261.2,165.4 L1263.0,165.9 L1264.8,166.5 L1266.6,167.1 L1268.4,167.7 L1270.2,168.3 L1272.0,168.9 L1273.8,169.5 L1275.6,170.1 L1277.4,170.7 L1279.1,171.3 L1280.9,171.9 L1282.7,172.6 L1284.5,173.2 L1286.3,173.8 L1288.1,174.4 L1289.9,175.0 L1291.7,175.6 L1293.5,176.2 L1295.2,176.9 L1297.0,177.5 L1298.8,178.1 L1300.6,178.7 L1302.4,179.4 L1304.1,180.0 L1305.9,180.6 L1307.7,181.2 L1309.4,181.9 L1311.2,182.5 L1313.0,183.1 L1314.7,183.8 L1316.5,184.4 L1318.3,185.0 L1320.0,185.7 L1321.8,186.3 L1323.5,187.0 L1325.3,187.6 L1327.0,188.2 L1328.8,188.9 L1330.5,189.5 L1332.2,190.2 L1334.0,190.8 L1335.7,191.5 L1337.4,192.1 L1339.1,192.8 L1340.9,193.4 L1342.6,194.1 L1344.3,194.7 L1346.0,195.4 L1347.7,196.0 L1349.4,196.7 L1351.1,197.3 L1352.8,198.0 L1354.5,198.7 L1356.2,199.3 L1357.9,200.0 L1359.5,200.6 L1361.2,201.3 L1362.9,202.0 L1364.6,202.6 L1366.2,203.3 L1367.9,204.0 L1369.5,204.6 L1371.2,205.3 L1372.8,206.0 L1374.5,206.6 L1376.1,207.3 L1377.7,208.0 L1379.4,208.6 L1381.0,209.3 L1382.6,210.0 L1384.2,210.7 L1385.8,211.3 L1387.4,212.0 L1389.0,212.7 L1390.6,213.4 L1392.2,214.0 L1393.8,214.7 L1395.3,215.4 L1396.9,216.1 L1398.5,216.8 L1400.0,217.4 L1401.6,218.1 L1403.1,218.8 M400.8,219.5 L400.2,220.2 L399.5,220.8 L398.9,221.5 L398.2,222.2 L397.6,222.9 L397.0,223.6 L396.3,224.3 L395.7,225.0 L395.1,225.6 L394.5,226.3 L393.9,227.0 L393.3,227.7 L392.7,228.4 L392.1,229.1 L391.6,229.8 L391.0,230.5 L390.4,231.2 L389.9,231.9 L389.3,232.5 L388.8,233.2 L388.2,233.9 L387.7,234.6 L387.2,235.3 L386.7,236.0 L386.2,236.7 L385.7,237.4 L385.2,238.1 L384.7,238.8 L384.2,239.5 L383.7,240.2"/>
<path stroke="#86d549" d="M874.0,128.5 L873.6,127.8 L873.2,127.0 L872.7,126.3 L872.3,125.6 L871.9,124.9 L871.5,124.2 L871.1,123.5 L870.6,122.7 L870.2,122.0 L869.8,121.3 L869.4,120.7 L868.9,120.0 L868.5,119.3 L868.1,118.6 L867.6,117.9 L867.2,117.2 L866.8,116.6 L866.3,115.9 L865.9,115.3 L865.5,114.6 L865.0,114.0 L864.6,113.3 L864.2,112.7 L863.7,112.0 L863.3,111.4 L862.8,110.8 L862.4,110.2 L861.9,109.6 L861.5,109.0 L861.0,108.4 L860.6,107.8 L860.1,107.2 L859.6,106.6 L859.2,106.0 L858.7,105.5 L858.2,104.9 L857.7,104.4 L857.3,103.8 L856.8,103.3 L856.3,102.8 L855.8,102.3 L855.3,101.7 L854.8,101.2 L854.3,100.7 L853.8,100.3 L853.3,99.8 L852.7,99.3 L852.2,98.9 L851.7,98.4 L851.1,98.0 L850.6,97.5 L850.0,97.1 L849.5,96.7 L848.9,96.3 L848.3,95.9 L847.8,95.5 L847.2,95.2 L846.6,94.8 L846.0,94.4 L845.4,94.1 L844.7,93.8 L844.1,93.5 L843.5,93.2 L842.8,92.9 L842.1,92.6 L841.5,92.3 L840.8,92.1 L840.1,91.8 L839.4,91.6 L838.7,91.4 L837.9,91.2 L837.2,91.0 L836.4,90.8 L835.7,90.6 L834.9,90.5 L834.1,90.3 L833.3,90.2 L832.5,90.1 L831.6,90.0 L830.8,89.9 L829.9,89.9 L829.0,89.8 L828.1,89.8 L827.2,89.7 L826.3,89.7 L825.3,89.7 L824.4,89.7 L823.4,89.8 L822.4,89.8 L821.4,89.8 L820.3,89.9 L819.3,90.0 L818.2,90.1 L817.2,90.2 L816.1,90.3 L814.9,90.5 L813.8,90.6 L812.6,90.8 L811.5,90.9 L810.3,91.1 L809.1,91.3 L807.9,91.6 L806.6,91.8 L805.4,92.0 L804.1,92.3 L802.8,92.5 L801.5,92.8 L800.1,93.1 L798.8,93.4 L797.4,93.7 L796.0,94.0 L794.6,94.4 L793.2,94.7 L791.8,95.1 L790.4,95.4 L788.9,95.8 L787.4,96.2 L785.9,96.6 L784.4,97.0 L782.9,97.4 L781.3,97.9 L779.8,98.3 L778.2,98.8 L776.6,99.2 L775.0,99.7 L773.4,100.2 L771.8,100.6 L770.1,101.1 L768.5,101.6 L766.8,102.1 L765.1,102.7 L763.4,103.2 L761.7,103.7 L760.0,104.3 L758.3,104.8 L756.5,105.4 L754.8,105.9 L753.0,106.5 L751.2,107.1 L749.5,107.7 L747.7,108.2 L745.9,108.8 L744.1,109.4 L742.2,110.1 L740.4,110.7 L738.6,111.3 L736.7,111.9 L734.9,112.5 L733.0,113.2 L731.1,113.8 L729.2,114.5 L727.4,115.1 L725.5,115.8 L723.6,116.4 L721.6,117.1 L719.7,117.8 L717.8,118.5 L715.9,119.1 L714.0,119.8 L712.0,120.5 L710.1,121.2 L708.1,121.9 L706.2,122.6 L704.2,123.3 L702.3,124.0 L700.3,124.7 L698.3,125.4 L696.4,126.2 L694.4,126.9 L692.4,127.6 L690.4,128.3 L688.4,129.1 L686.5,129.8 L684.5,130.6 L682.5,131.3 L680.5,132.0 L678.5,132.8 L676.5,133.5 L674.5,134.3 L672.5,135.1 L670.5,135.8 L668.5,136.6 L666.5,137.3 L664.5,138.1 L662.5,138.9 L660.5,139.7 L658.4,140.4 L656.4,141.2 L654.4,142.0 L652.4,142.8 L650.4,143.6 L648.4,144.3 L646.4,145.1 L644.4,145.9 L642.4,146.7 L640.4,147.5 L638.4,148.3 L636.4,149.1 L634.4,149.9 L632.4,150.7 L630.4,151.5 L628.4,152.3 L626.4,153.1 L624.4,153.9 L622.4,154.7 L620.5,155.5 L618.5,156.4 L616.5,157.2 L614.5,158.0 L612.5,158.8 L610.6,159.6 L608.6,160.4 L606.6,161.3 L604.7,162.1 L602.7,162.9 L600.8,163.7 L598.8,164.6 L596.9,165.4 L594.9,166.2 L593.0,167.1 L591.0,167.9 L589.1,168.7 L587.2,169.6 L585.3,170.4 L583.3,171.2 L581.4,172.1 L579.5,172.9 L577.6,173.8 L575.7,174.6 L573.8,175.4 L571.9,176.3 L570.0,177.1 L568.1,178.0 L566.3,178.8 L564.4,179.7 L562.5,180.5 L560.7,181.4 L558.8,182.2 L557.0,183.1 L555.1,183.9 L553.3,184.8 L551.5,185.6 L549.6,186.5 L547.8,187.3 L546.0,188.2 L544.2,189.1 L542.4,189.9 L540.6,190.8 L538.8,191.6 L537.0,192.5 L535.3,193.3 L533.5,194.2 L531.7,195.1 L530.0,195.9 L528.2,196.8 L526.5,197.7 L524.8,198.5 L523.0,199.4 L521.3,200.3 L519.6,201.1 L517.9,202.0 L516.2,202.9 L514.5,203.7 L512.8,204.6 L511.2,205.5 L509.5,206.3 L507.8,207.2 L506.2,208.1 L504.5,208.9 L502.9,209.8 L501.3,210.7 L499.7,211.6 L498.0,212.4 L496.4,213.3 L494.9,214.2 L493.3,215.1 L491.7,215.9 L490.1,216.8 L488.6,217.7 L487.0,218.6 L485.5,219.4 L483.9,220.3 L482.4,221.2 L480.9,222.1 L479.4,223.0 L477.9,223.8 L476.4,224.7 L474.9,225.6 L473.4,226.5 L472.0,227.4 L470.5,228.2 L469.1,229.1 L467.6,230.0 L466.2,230.9 L464.8,231.8 L463.4,232.6 L462.0,233.5 L460.6,234.4 L459.2,235.3"/>
<path stroke="#2ab07f" d="M795.8,106.7 L796.3,106.1 L796.8,105.5 L797.3,104.9 L797.8,104.3 L798.3,103.7 L798.8,103.1 L799.3,102.6 L799.8,102.0 L800.3,101.4 L800.8,100.8 L801.3,100.2 L801.8,99.6 L802.3,99.0 L802.8,98.5 L803.3,97.9 L803.8,97.3 L804.3,96.7 L804.8,96.1 L805.3,95.6 L805.8,95.0 L806.3,94.4 L806.8,93.8 L807.3,93.3 L807.8,92.7 L808.3,92.1 L808.8,91.5 L809.3,91.0 L809.8,90.4 L810.2,89.8 L810.7,89.3 L811.2,88.7 L811.7,88.2 L812.2,87.6 L812.7,87.0 L813.2,86.5 L813.6,85.9 L814.1,85.4 L814.6,84.8 L815.1,84.3 L815.5,83.7 L816.0,83.2 L816.5,82.6 L816.9,82.1 L817.4,81.6 L817.8,81.0 L818.3,80.5 L818.8,80.0 L819.2,79.4 L819.7,78.9 L820.1,78.4 L820.5,77.9 L821.0,77.3 L821.4,76.8 L821.8,76.3 L822.3,75.8 L822.7,75.3 L823.1,74.8 L823.5,74.3 L823.9,73.8 L824.3,73.3 L824.7,72.8 L825.1,72.3 L825.5,71.8 L825.8,71.4 L826.2,70.9 L826.6,70.4 L826.9,70.0 L827.3,69.5 L827.6,69.0 L828.0,68.6 L828.3,68.2 L828.6,67.7 L828.9,67.3 L829.2,66.8 L829.5,66.4 L829.8,66.0 L830.0,65.6 L830.3,65.2 L830.5,64.8 L830.7,64.4 L831.0,64.0 L831.2,63.6 L831.4,63.3 L831.5,62.9 L831.7,62.6 L831.8,62.2 L832.0,61.9 L832.1,61.5 L832.2,61.2 L832.2,60.9 L832.3,60.6 L832.3,60.3 L832.3,60.0 L832.3,59.8 L832.3,59.5 L832.2,59.2 L832.2,59.0 L832.1,58.8 L832.0,58.6 L831.8,58.3 L831.6,58.2 L831.4,58.0 L831.2,57.8 L830.9,57.6 L830.7,57.5 L830.3,57.4 L830.0,57.2 L829.6,57.1 L829.2,57.0 L828.7,57.0 L828.3,56.9 L827.8,56.8 L827.2,56.8 L826.6,56.8 L826.0,56.8 L825.4,56.8 L824.7,56.8 L824.0,56.8 L823.2,56.9 L822.4,56.9 L821.6,57.0 L820.7,57.1 L819.8,57.2 L818.9,57.3 L817.9,57.4 L816.9,57.6 L815.8,57.7 L814.8,57.9 L813.7,58.0 L812.5,58.2 L811.3,58.4 L810.1,58.6 L808.9,58.9 L807.6,59.1 L806.3,59.3 L804.9,59.6 L803.5,59.9 L802.1,60.1 L800.7,60.4 L799.2,60.7 L797.7,61.0 L796.2,61.4 L794.6,61.7 M1011.0,62.0 L1011.5,62.4 L1012.0,62.7 L1012.5,63.1 L1013.1,63.4 L1013.7,63.8 L1014.3,64.2 L1015.0,64.6 L1015.6,65.0 L1016.3,65.4 L1017.0,65.8 L1017.7,66.2 L1018.4,66.6 L1019.2,67.0 L1020.0,67.5 L1020.7,67.9 L1021.5,68.3 L1022.3,68.8 L1023.1,69.2 L1024.0,69.7 L1024.8,70.2 L1025.7,70.6 L1026.5,71.1 L1027.4,71.6 L1028.3,72.1 L1029.2,72.5 L1030.1,73.0 L1031.0,73.5 L1032.0,74.0 L1032.9,74.5 L1033.8,75.0 L1034.8,75.5 L1035.8,76.0 L1036.7,76.5 L1037.7,77.0 L1038.7,77.6 L1039.7,78.1 L1040.6,78.6 L1041.6,79.1 L1042.7,79.7 L1043.7,80.2 L1044.7,80.7 L1045.7,81.3 L1046.7,81.8 L1047.7,82.3 L1048.8,82.9 L1049.8,83.4 L1050.9,84.0 L1051.9,84.5 L1052.9,85.1 L1054.0,85.6 L1055.1,86.2 L1056.1,86.7 L1057.2,87.3 L1058.2,87.8 L1059.3,88.4 L1060.4,89.0 L1061.4,89.5 L1062.5,90.1 L1063.6,90.7 L1064.7,91.2 L1065.7,91.8 L1066.8,92.4 L1067.9,92.9 L1069.0,93.5 L1070.1,94.1 L1071.1,94.7 L1072.2,95.2 L1073.3,95.8 L1074.4,96.4 L1075.5,97.0 L1076.6,97.5 L1077.7,98.1 L1078.8,98.7 L1079.9,99.3 L1081.0,99.9 L1082.1,100.5 L1083.2,101.0 L1084.2,101.6 L1085.3,102.2 L1086.4,102.8 L1087.5,103.4 L1088.6,104.0 L1089.7,104.6 L1090.8,105.2 L1091.9,105.8 L1093.0,106.4 L1094.1,107.0 L1095.2,107.6 L1096.3,108.2 L1097.4,108.7 L1098.5,109.3 L1099.6,109.9 L1100.6,110.5 L1101.7,111.1 L1102.8,111.7 L1103.9,112.3 L1105.0,112.9 L1106.1,113.5 L1107.2,114.1 L1108.3,114.7 L1109.3,115.4 L1110.4,116.0 L1111.5,116.6 L1112.6,117.2 L1113.7,117.8 L1114.8,118.4 L1115.8,119.0 L1116.9,119.6 L1118.0,120.2 L1119.1,120.8 L1120.1,121.4 L1121.2,122.0 L1122.3,122.6 L1123.3,123.2 L1124.4,123.8 L1125.5,124.5 L1126.5,125.1 L1127.6,125.7 L1128.7,126.3 L1129.7,126.9 L1130.8,127.5 L1131.8,128.1 L1132.9,128.7 L1133.9,129.4 L1135.0,130.0 L1136.0,130.6 L1137.1,131.2 L1138.1,131.8 L1139.2,132.4 L1140.2,133.0 L1141.2,133.7 L1142.3,134.3 L1143.3,134.9 L1144.3,135.5 L1145.4,136.1 L1146.4,136.7 L1147.4,137.4 L1148.4,138.0 L1149.5,138.6 L1150.5,139.2 L1151.5,139.8 L1152.5,140.4 L1153.5,141.1 L1154.5,141.7 L1155.6,142.3 L1156.6,142.9 L1157.6,143.5 L1158.6,144.2 L1159.6,144.8 L1160.6,145.4 L1161.6,146.0 L1162.5,146.6 L1163.5,147.3 L1164.5,147.9 L1165.5,148.5"/>
<path stroke="#2ab07f" d="M779.5,135.5 L780.1,134.7 L780.8,134.0 L781.4,133.2 L782.1,132.4 L782.7,131.6 L783.3,130.9 L784.0,130.1 L784.6,129.3 L785.3,128.6 L786.0,127.8 L786.6,127.0 L787.3,126.3 L787.9,125.5 L788.6,124.7 L789.2,123.9 L789.9,123.2 L790.6,122.4 L791.2,121.6 L791.9,120.9 L792.6,120.1 L793.3,119.3 L793.9,118.6 L794.6,117.8 L795.3,117.0 L796.0,116.3 L796.6,115.5 L797.3,114.7 L798.0,114.0 L798.7,113.2 L799.4,112.4 L800.1,111.7 L800.7,110.9 L801.4,110.1 L802.1,109.4 L802.8,108.6 L803.5,107.9 L804.2,107.1 L804.9,106.3 L805.6,105.6 L806.3,104.8 L807.0,104.0 L807.7,103.3 L808.4,102.5 L809.1,101.8 L809.8,101.0 L810.5,100.2 L811.2,99.5 L811.9,98.7 L812.6,98.0 L813.3,97.2 L814.0,96.5 L814.7,95.7 L815.4,95.0 L816.2,94.2 L816.9,93.4 L817.6,92.7 L818.3,91.9 L819.0,91.2 L819.7,90.4 L820.4,89.7 L821.1,88.9 L821.9,88.2 L822.6,87.4 L823.3,86.7 L824.0,86.0 L824.7,85.2 L825.4,84.5 L826.1,83.7 L826.8,83.0 L827.6,82.2 L828.3,81.5 L829.0,80.8 L829.7,80.0 L830.4,79.3 L831.1,78.6 L831.8,77.8 L832.5,77.1 L833.2,76.4 L833.9,75.6 L834.6,74.9 L835.4,74.2 L836.1,73.5 L836.8,72.8 L837.4,72.0 L838.1,71.3 L838.8,70.6 L839.5,69.9 L840.2,69.2 L840.9,68.5 L841.6,67.8 L842.3,67.1 L842.9,66.4 L843.6,65.7 L844.3,65.0 L844.9,64.3 L845.6,63.6 L846.2,63.0 L846.9,62.3 L847.5,61.6 L848.1,61.0 L848.8,60.3 L849.4,59.6 L850.0,59.0 L850.6,58.4 L851.2,57.7 L851.7,57.1 L852.3,56.5 L852.9,55.9 L853.4,55.3 L853.9,54.7 L854.4,54.1 L854.9,53.5 L855.4,52.9 L855.8,52.4 L856.2,51.8 L856.6,51.3 L857.0,50.8 L857.4,50.3 L857.7,49.8 L858.0,49.4 L858.2,48.9 L858.4,48.5 L858.6,48.1 L858.7,47.7 L858.8,47.3 L858.8,47.0 L858.8,46.7 L858.7,46.4 L858.5,46.1 L858.3,45.9 L858.0,45.7 L857.7,45.5 L857.2,45.4 L856.7,45.3 L856.1,45.2 L855.4,45.2 L854.6,45.2 L853.8,45.2 L852.8,45.3 L851.8,45.4 L850.6,45.5 L849.4,45.7 L848.1,45.9 L846.7,46.1 L845.2,46.4 L843.6,46.6 L842.0,47.0 L840.3,47.3 L838.5,47.6 L967.8,48.0 L968.4,48.4 L969.0,48.9 L969.7,49.3 L970.5,49.8 L971.3,50.2 L972.1,50.7 L973.0,51.2 L974.0,51.8 L974.9,52.3 L975.9,52.9 L977.0,53.4 L978.0,54.0 L979.1,54.6 L980.3,55.2 L981.4,55.8 L982.6,56.4 L983.8,57.0 L985.0,57.6 L986.2,58.3 L987.5,58.9 L988.7,59.5 L990.0,60.2 L991.3,60.9 L992.6,61.5 L993.9,62.2 L995.2,62.9 L996.6,63.5 L997.9,64.2 L999.3,64.9 L1000.6,65.6 L1002.0,66.3 L1003.4,67.0 L1004.8,67.7 L1006.1,68.4 L1007.5,69.1 L1008.9,69.8 L1010.3,70.5 L1011.8,71.2 L1013.2,71.9 L1014.6,72.6 L1016.0,73.4 L1017.4,74.1 L1018.8,74.8 L1020.3,75.5 L1021.7,76.3 L1023.1,77.0 L1024.6,77.7 L1026.0,78.5 L1027.4,79.2 L1028.9,79.9 L1030.3,80.7 L1031.8,81.4 L1033.2,82.1 L1034.7,82.9 L1036.1,83.6 L1037.5,84.4 L1039.0,85.1 L1040.4,85.8 L1041.9,86.6 L1043.3,87.3 L1044.8,88.1 L1046.2,88.8 L1047.7,89.6 L1049.1,90.3 L1050.5,91.1 L1052.0,91.8 L1053.4,92.6 L1054.9,93.3 L1056.3,94.1 L1057.7,94.8 L1059.2,95.6 L1060.6,96.4 L1062.1,97.1 L1063.5,97.9 L1064.9,98.6 L1066.4,99.4 L1067.8,100.1 L1069.2,100.9 L1070.6,101.7 L1072.1,102.4 L1073.5,103.2 L1074.9,103.9 L1076.3,104.7 L1077.7,105.5 L1079.2,106.2 L1080.6,107.0 L1082.0,107.7 L1083.4,108.5 L1084.8,109.3 L1086.2,110.0 L1087.6,110.8 L1089.0,111.6 L1090.4,112.3 L1091.8,113.1 L1093.2,113.9 L1094.6,114.6 L1096.0,115.4 L1097.3,116.2 L1098.7,116.9 L1100.1,117.7 L1101.5,118.5 L1102.8,119.2 L1104.2,120.0 L1105.6,120.8 L1106.9,121.5 L1108.3,122.3 L1109.7,123.1 L1111.0,123.8 L1112.4,124.6 L1113.7,125.4 L1115.1,126.1 L1116.4,126.9 L1117.7,127.7 L1119.1,128.5 L1120.4,129.2 L1121.7,130.0 L1123.1,130.8 L1124.4,131.5 L1125.7,132.3 L1127.0,133.1 L1128.3,133.8 L1129.6,134.6 L1130.9,135.4 L1132.2,136.2 L1133.5,136.9 L1134.8,137.7 L1136.1,138.5 L1137.4,139.3 L1138.7,140.0 L1140.0,140.8 L1141.2,141.6 L1142.5,142.3 L1143.8,143.1 L1145.0,143.9 L1146.3,144.7 L1147.6,145.4 L1148.8,146.2 L1150.1,147.0 L1151.3,147.8 L1152.5,148.5 L1153.8,149.3 L1155.0,150.1 L1156.2,150.9 L1157.5,151.6 L1158.7,152.4 L1159.9,153.2 L1161.1,154.0 L1162.3,154.7 L1163.5,155.5"/>
<path stroke="#2ab07f" d="M843.3,72.5 L843.8,72.0 L844.2,71.4 L844.7,70.9 L845.1,70.4 L845.6,69.9 L846.1,69.3 L846.5,68.8 L847.0,68.3 L847.4,67.8 L847.9,67.3 L848.3,66.8 L848.8,66.2 L849.2,65.7 L849.7,65.2 L850.1,64.7 L850.6,64.2 L851.0,63.7 L851.4,63.2 L851.9,62.7 L852.3,62.2 L852.7,61.7 L853.2,61.2 L853.6,60.7 L854.0,60.2 L854.4,59.7 L854.8,59.2 L855.3,58.7 L855.7,58.3 L856.1,57.8 L856.5,57.3 L856.9,56.8 L857.2,56.4 L857.6,55.9 L858.0,55.4 L858.4,55.0 L858.8,54.5 L859.1,54.1 L859.5,53.6 L859.8,53.2 L860.1,52.8 L860.5,52.3 L860.8,51.9 L861.1,51.5 L861.4,51.1 L861.7,50.7 L862.0,50.3 L862.2,49.9 L862.5,49.5 L862.7,49.1 L862.9,48.8 L863.2,48.4 L863.3,48.1 L863.5,47.7 L863.7,47.4 L863.8,47.1 L863.9,46.8 L864.0,46.5 L864.1,46.2 L864.1,45.9 L864.1,45.7 L864.1,45.4 L864.0,45.2 L864.0,45.0 L863.8,44.8 L863.7,44.6 L863.5,44.5 L863.3,44.3 L863.0,44.2 L862.7,44.1 L862.4,44.0 L862.0,43.9 L861.5,43.9 L861.0,43.8 L860.5,43.8 L859.9,43.8 L859.3,43.8 L858.6,43.9 L857.9,44.0 L857.1,44.0 L856.3,44.1 L855.4,44.3 L854.5,44.4 L853.5,44.5 L852.5,44.7 L851.4,44.9 L850.3,45.1 L849.2,45.3 L848.0,45.6 L846.7,45.8 L845.4,46.1 L844.1,46.3 L842.8,46.6 L841.4,46.9 L839.9,47.2 L838.5,47.6 L967.3,47.9 L967.9,48.2 L968.6,48.6 L969.2,48.9 L969.9,49.3 L970.6,49.7 L971.4,50.1 L972.1,50.5 L972.9,50.9 L973.7,51.3 L974.5,51.7 L975.4,52.1 L976.2,52.5 L977.1,53.0 L978.0,53.4 L978.8,53.9 L979.8,54.3 L980.7,54.7 L981.6,55.2 L982.5,55.7 L983.5,56.1 L984.5,56.6 L985.4,57.1 L986.4,57.5 L987.4,58.0 L988.4,58.5 L989.4,59.0 L990.4,59.5 L991.4,59.9 L992.5,60.4 L993.5,60.9 L994.5,61.4 L995.6,61.9 L996.6,62.4 L997.6,62.9 L998.7,63.4 L999.8,63.9 L1000.8,64.4 L1001.9,65.0 L1003.0,65.5 L1004.0,66.0 L1005.1,66.5 L1006.2,67.0 L1007.3,67.5 L1008.4,68.0 L1009.4,68.6 L1010.5,69.1 L1011.6,69.6 L1012.7,70.1 L1013.8,70.7 L1014.9,71.2 L1016.0,71.7 L1017.1,72.2 L1018.2,72.8 L1019.3,73.3 L1020.4,73.8 L1021.5,74.4 L1022.6,74.9 L1023.8,75.4 L1024.9,76.0 L1026.0,76.5 L1027.1,77.0 L1028.2,77.6 L1029.3,78.1 L1030.4,78.6 L1031.5,79.2 L1032.7,79.7 L1033.8,80.3 L1034.9,80.8 L1036.0,81.3 L1037.1,81.9 L1038.2,82.4 L1039.4,83.0 L1040.5,83.5 L1041.6,84.0 L1042.7,84.6 L1043.8,85.1 L1044.9,85.7 L1046.1,86.2 L1047.2,86.8 L1048.3,87.3 L1049.4,87.9 L1050.5,88.4 L1051.6,89.0 L1052.7,89.5 L1053.9,90.1 L1055.0,90.6 L1056.1,91.1 L1057.2,91.7 L1058.3,92.2 L1059.4,92.8 L1060.5,93.3 L1061.6,93.9 L1062.8,94.5 L1063.9,95.0 L1065.0,95.6 L1066.1,96.1 L1067.2,96.7 L1068.3,97.2 L1069.4,97.8 L1070.5,98.3 L1071.6,98.9 L1072.7,99.4 L1073.8,100.0 L1074.9,100.5 L1076.0,101.1 L1077.1,101.6 L1078.2,102.2 L1079.3,102.7 L1080.4,103.3 L1081.5,103.9 L1082.6,104.4 L1083.7,105.0 L1084.8,105.5 L1085.9,106.1 L1086.9,106.6 L1088.0,107.2 L1089.1,107.7 L1090.2,108.3 L1091.3,108.9 L1092.4,109.4 L1093.4,110.0 L1094.5,110.5 L1095.6,111.1 L1096.7,111.6 L1097.7,112.2 L1098.8,112.8 L1099.9,113.3 L1101.0,113.9 L1102.0,114.4 L1103.1,115.0 L1104.2,115.6 L1105.2,116.1 L1106.3,116.7 L1107.3,117.2 L1108.4,117.8 L1109.5,118.3 L1110.5,118.9 L1111.6,119.5 L1112.6,120.0 L1113.7,120.6 L1114.7,121.1 L1115.8,121.7 L1116.8,122.3 L1117.9,122.8 L1118.9,123.4 L1120.0,123.9 L1121.0,124.5 L1122.0,125.1 L1123.1,125.6 L1124.1,126.2 L1125.1,126.7 L1126.2,127.3 L1127.2,127.9 L1128.2,128.4 L1129.2,129.0 L1130.3,129.6 L1131.3,130.1 L1132.3,130.7 L1133.3,131.2 L1134.3,131.8 L1135.4,132.4 L1136.4,132.9 L1137.4,133.5 L1138.4,134.0 L1139.4,134.6 L1140.4,135.2 L1141.4,135.7 L1142.4,136.3 L1143.4,136.9 L1144.4,137.4 L1145.4,138.0 L1146.4,138.5 L1147.4,139.1 L1148.3,139.7 L1149.3,140.2 L1150.3,140.8 L1151.3,141.4 L1152.3,141.9 L1153.2,142.5 L1154.2,143.0 L1155.2,143.6 L1156.2,144.2 L1157.1,144.7 L1158.1,145.3 L1159.1,145.9 L1160.0,146.4 L1161.0,147.0 L1161.9,147.5 L1162.9,148.1 L1163.8,148.7 L1164.8,149.2 L1165.7,149.8 L1166.7,150.4 L1167.6,150.9 L1168.6,151.5 L1169.5,152.1 L1170.4,152.6 L1171.4,153.2 L1172.3,153.7 L1173.2,154.3 L1174.2,154.9 L1175.1,155.4 L1176.0,156.0"/>
<path stroke="#2ab07f" d="M880.0,84.2 L880.4,83.6 L880.7,83.0 L881.1,82.4 L881.4,81.9 L881.8,81.3 L882.2,80.7 L882.5,80.1 L882.9,79.5 L883.3,78.9 L883.6,78.4 L884.0,77.8 L884.3,77.2 L884.7,76.6 L885.1,76.0 L885.4,75.5 L885.8,74.9 L886.1,74.3 L886.5,73.7 L886.9,73.1 L887.2,72.6 L887.6,72.0 L888.0,71.4 L888.3,70.8 L888.7,70.3 L889.0,69.7 L889.4,69.1 L889.8,68.5 L890.1,68.0 L890.5,67.4 L890.8,66.8 L891.2,66.3 L891.6,65.7 L891.9,65.1 L892.3,64.6 L892.6,64.0 L893.0,63.4 L893.4,62.9 L893.7,62.3 L894.1,61.8 L894.4,61.2 L894.8,60.6 L895.1,60.1 L895.5,59.5 L895.9,59.0 L896.2,58.4 L896.6,57.9 L896.9,57.3 L897.3,56.8 L897.6,56.3 L898.0,55.7 L898.3,55.2 L898.7,54.7 L899.1,54.1 L899.4,53.6 L899.8,53.1 L900.1,52.6 L900.5,52.0 L900.8,51.5 L901.2,51.0 L901.5,50.5 L901.9,50.0 L902.2,49.5 L902.6,49.0 L902.9,48.6 L903.3,48.1 L903.6,47.6 L904.0,47.1 L904.3,46.7 L904.7,46.2 L905.0,45.8 L905.4,45.4 L905.8,45.0 L906.1,44.5 L906.5,44.1 L906.8,43.8 L907.2,43.4 L907.6,43.0 L908.0,42.7 L908.3,42.4 L908.7,42.0 L909.1,41.8 L909.5,41.5 L910.0,41.2 L910.4,41.0 L910.8,40.8 L911.3,40.6 L911.7,40.4 L912.2,40.3 L912.7,40.2 L913.3,40.1 L913.8,40.1 L914.4,40.0 L915.0,40.0 L915.6,40.1 L916.3,40.1 L917.0,40.2 L917.7,40.3 L918.4,40.4 L919.2,40.6 L920.0,40.8 L920.8,41.0 L921.7,41.2 L922.6,41.5 L923.5,41.8 L924.5,42.1 L925.5,42.4 L926.5,42.7 L927.5,43.0 L928.5,43.4 L929.6,43.8 L930.7,44.2 L931.8,44.6 L932.9,45.0 L934.1,45.4 L935.3,45.8 L936.4,46.3 L937.6,46.7 L938.9,47.2 L940.1,47.6 L941.3,48.1 L942.6,48.6 L943.8,49.1 L945.1,49.5 L946.4,50.0 L947.7,50.5 L949.0,51.0 L950.3,51.5 L951.6,52.1 L952.9,52.6 L954.2,53.1 L955.6,53.6 L956.9,54.1 L958.3,54.7 L959.6,55.2 L961.0,55.7 L962.3,56.3 L963.7,56.8 L965.1,57.4 L966.4,57.9 L967.8,58.5 L969.2,59.0 L970.6,59.6 L972.0,60.1 L973.4,60.7 L974.8,61.2 L976.2,61.8 L977.6,62.3 L979.0,62.9 L980.4,63.5 L981.8,64.0 L983.2,64.6 L984.6,65.1 L986.0,65.7 L987.4,66.3 L988.8,66.8 L990.2,67.4 L991.6,68.0 L993.1,68.6 L994.5,69.1 L995.9,69.7 L997.3,70.3 L998.7,70.9 L1000.2,71.4 L1001.6,72.0 L1003.0,72.6 L1004.4,73.2 L1005.8,73.7 L1007.3,74.3 L1008.7,74.9 L1010.1,75.5 L1011.5,76.1 L1013.0,76.6 L1014.4,77.2 L1015.8,77.8 L1017.2,78.4 L1018.7,79.0 L1020.1,79.5 L1021.5,80.1 L1022.9,80.7 L1024.4,81.3 L1025.8,81.9 L1027.2,82.5 L1028.6,83.0 L1030.0,83.6 L1031.5,84.2 L1032.9,84.8 L1034.3,85.4 L1035.7,86.0 L1037.1,86.6 L1038.5,87.2 L1040.0,87.7 L1041.4,88.3 L1042.8,88.9 L1044.2,89.5 L1045.6,90.1 L1047.0,90.7 L1048.4,91.3 L1049.9,91.9 L1051.3,92.5 L1052.7,93.0 L1054.1,93.6 L1055.5,94.2 L1056.9,94.8 L1058.3,95.4 L1059.7,96.0 L1061.1,96.6 L1062.5,97.2 L1063.9,97.8 L1065.3,98.4 L1066.7,99.0 L1068.1,99.5 L1069.5,100.1 L1070.9,100.7 L1072.3,101.3 L1073.7,101.9 L1075.0,102.5 L1076.4,103.1 L1077.8,103.7 L1079.2,104.3 L1080.6,104.9 L1082.0,105.5 L1083.3,106.1 L1084.7,106.7 L1086.1,107.3 L1087.5,107.8 L1088.9,108.4 L1090.2,109.0 L1091.6,109.6 L1093.0,110.2 L1094.3,110.8 L1095.7,111.4 L1097.1,112.0 L1098.4,112.6 L1099.8,113.2 L1101.1,113.8 L1102.5,114.4 L1103.8,115.0 L1105.2,115.6 L1106.5,116.2 L1107.9,116.8 L1109.2,117.4 L1110.6,118.0 L1111.9,118.6 L1113.3,119.1 L1114.6,119.7 L1115.9,120.3 L1117.3,120.9 L1118.6,121.5 L1119.9,122.1 L1121.3,122.7 L1122.6,123.3 L1123.9,123.9 L1125.2,124.5 L1126.6,125.1 L1127.9,125.7 L1129.2,126.3 L1130.5,126.9 L1131.8,127.5 L1133.1,128.1 L1134.4,128.7 L1135.7,129.3 L1137.0,129.9 L1138.3,130.5 L1139.6,131.1 L1140.9,131.7 L1142.2,132.3 L1143.5,132.9 L1144.8,133.5 L1146.1,134.1 L1147.4,134.7 L1148.7,135.3 L1149.9,135.9 L1151.2,136.5 L1152.5,137.0 L1153.8,137.6 L1155.0,138.2 L1156.3,138.8 L1157.6,139.4 L1158.8,140.0 L1160.1,140.6 L1161.3,141.2 L1162.6,141.8 L1163.8,142.4 L1165.1,143.0 L1166.3,143.6 L1167.6,144.2 L1168.8,144.8 L1170.1,145.4 L1171.3,146.0 L1172.5,146.6 L1173.8,147.2 L1175.0,147.8 L1176.2,148.4 L1177.4,149.0 L1178.7,149.6 L1179.9,150.2 L1181.1,150.8 L1182.3,151.4 L1183.5,152.0"/>
<path stroke="#2ab07f" d="M893.3,61.7 L893.6,61.3 L893.9,60.8 L894.2,60.4 L894.5,59.9 L894.8,59.5 L895.1,59.1 L895.4,58.6 L895.7,58.2 L896.0,57.8 L896.3,57.3 L896.6,56.9 L896.9,56.5 L897.2,56.1 L897.5,55.6 L897.8,55.2 L898.1,54.8 L898.4,54.4 L898.7,54.0 L899.0,53.6 L899.3,53.2 L899.6,52.7 L899.9,52.3 L900.2,51.9 L900.5,51.5 L900.8,51.1 L901.1,50.7 L901.4,50.4 L901.7,50.0 L902.0,49.6 L902.3,49.2 L902.6,48.8 L902.9,48.5 L903.2,48.1 L903.5,47.7 L903.8,47.4 L904.1,47.0 L904.4,46.7 L904.7,46.3 L905.0,46.0 L905.3,45.7 L905.6,45.3 L905.9,45.0 L906.2,44.7 L906.5,44.4 L906.8,44.1 L907.1,43.8 L907.4,43.6 L907.7,43.3 L908.1,43.0 L908.4,42.8 L908.7,42.6 L909.0,42.3 L909.4,42.1 L909.7,41.9 L910.1,41.7 L910.4,41.6 L910.8,41.4 L911.2,41.3 L911.5,41.1 L911.9,41.0 L912.3,40.9 L912.8,40.9 L913.2,40.8 L913.6,40.7 L914.1,40.7 L914.5,40.7 L915.0,40.7 L915.5,40.7 L916.0,40.7 L916.6,40.8 L917.1,40.9 L917.7,41.0 L918.2,41.1 L918.8,41.2 L919.5,41.3 L920.1,41.5 L920.7,41.6 L921.4,41.8 L922.1,42.0 L922.8,42.2 L923.5,42.4 L924.3,42.6 L925.0,42.9 L925.8,43.1 L926.6,43.4 L927.4,43.6 L928.2,43.9 L929.0,44.2 L929.8,44.5 L930.7,44.8 L931.5,45.1 L932.4,45.4 L933.3,45.7 L934.2,46.1 L935.1,46.4 L936.0,46.8 L936.9,47.1 L937.9,47.5 L938.8,47.8 L939.8,48.2 L940.7,48.5 L941.7,48.9 L942.7,49.3 L943.7,49.7 L944.6,50.1 L945.6,50.5 L946.6,50.8 L947.6,51.2 L948.6,51.6 L949.7,52.0 L950.7,52.4 L951.7,52.8 L952.7,53.3 L953.8,53.7 L954.8,54.1 L955.9,54.5 L956.9,54.9 L957.9,55.3 L959.0,55.8 L960.1,56.2 L961.1,56.6 L962.2,57.0 L963.2,57.5 L964.3,57.9 L965.4,58.3 L966.5,58.7 L967.5,59.2 L968.6,59.6 L969.7,60.1 L970.8,60.5 L971.9,60.9 L972.9,61.4 L974.0,61.8 L975.1,62.2 L976.2,62.7 L977.3,63.1 L978.4,63.6 L979.5,64.0 L980.6,64.5 L981.7,64.9 L982.8,65.4 L983.9,65.8 L985.0,66.3 L986.1,66.7 L987.2,67.2 L988.3,67.6 L989.4,68.1 L990.5,68.5 L991.6,69.0 L992.7,69.4 L993.8,69.9 L994.9,70.3 L996.0,70.8 L997.1,71.3 L998.2,71.7 L999.4,72.2 L1000.5,72.6 L1001.6,73.1 L1002.7,73.5 L1003.8,74.0 L1004.9,74.5 L1006.0,74.9 L1007.1,75.4 L1008.2,75.8 L1009.4,76.3 L1010.5,76.8 L1011.6,77.2 L1012.7,77.7 L1013.8,78.1 L1014.9,78.6 L1016.0,79.1 L1017.1,79.5 L1018.3,80.0 L1019.4,80.5 L1020.5,80.9 L1021.6,81.4 L1022.7,81.9 L1023.8,82.3 L1024.9,82.8 L1026.0,83.3 L1027.1,83.7 L1028.3,84.2 L1029.4,84.6 L1030.5,85.1 L1031.6,85.6 L1032.7,86.0 L1033.8,86.5 L1034.9,87.0 L1036.0,87.5 L1037.1,87.9 L1038.2,88.4 L1039.3,88.9 L1040.4,89.3 L1041.6,89.8 L1042.7,90.3 L1043.8,90.7 L1044.9,91.2 L1046.0,91.7 L1047.1,92.1 L1048.2,92.6 L1049.3,93.1 L1050.4,93.5 L1051.5,94.0 L1052.6,94.5 L1053.7,95.0 L1054.8,95.4 L1055.9,95.9 L1057.0,96.4 L1058.1,96.8 L1059.2,97.3 L1060.3,97.8 L1061.4,98.2 L1062.4,98.7 L1063.5,99.2 L1064.6,99.7 L1065.7,100.1 L1066.8,100.6 L1067.9,101.1 L1069.0,101.5 L1070.1,102.0 L1071.2,102.5 L1072.3,103.0 L1073.3,103.4 L1074.4,103.9 L1075.5,104.4 L1076.6,104.8 L1077.7,105.3 L1078.8,105.8 L1079.8,106.3 L1080.9,106.7 L1082.0,107.2 L1083.1,107.7 L1084.1,108.2 L1085.2,108.6 L1086.3,109.1 L1087.4,109.6 L1088.4,110.1 L1089.5,110.5 L1090.6,111.0 L1091.6,111.5 L1092.7,111.9 L1093.8,112.4 L1094.8,112.9 L1095.9,113.4 L1097.0,113.8 L1098.0,114.3 L1099.1,114.8 L1100.2,115.3 L1101.2,115.7 L1102.3,116.2 L1103.3,116.7 L1104.4,117.2 L1105.4,117.6 L1106.5,118.1 L1107.5,118.6 L1108.6,119.1 L1109.6,119.5 L1110.7,120.0 L1111.7,120.5 L1112.8,121.0 L1113.8,121.4 L1114.9,121.9 L1115.9,122.4 L1117.0,122.9 L1118.0,123.3 L1119.0,123.8 L1120.1,124.3 L1121.1,124.8 L1122.1,125.2 L1123.2,125.7 L1124.2,126.2 L1125.2,126.7 L1126.3,127.1 L1127.3,127.6 L1128.3,128.1 L1129.3,128.6 L1130.4,129.0 L1131.4,129.5 L1132.4,130.0 L1133.4,130.5 L1134.4,130.9 L1135.5,131.4 L1136.5,131.9 L1137.5,132.4 L1138.5,132.8 L1139.5,133.3 L1140.5,133.8 L1141.5,134.3 L1142.5,134.7 L1143.5,135.2 L1144.5,135.7 L1145.5,136.2 L1146.5,136.6 L1147.5,137.1 L1148.5,137.6 L1149.5,138.1 L1150.5,138.5 L1151.5,139.0 L1152.5,139.5"/>
<path stroke="#2ab07f" d="M913.0,63.5 L913.4,63.2 L913.7,63.0 L914.1,62.7 L914.4,62.5 L914.8,62.2 L915.2,62.0 L915.5,61.8 L915.9,61.6 L916.3,61.3 L916.7,61.1 L917.0,60.9 L917.4,60.7 L917.8,60.5 L918.2,60.4 L918.6,60.2 L919.0,60.0 L919.4,59.8 L919.8,59.7 L920.2,59.5 L920.6,59.4 L921.0,59.2 L921.4,59.1 L921.8,59.0 L922.2,58.9 L922.7,58.8 L923.1,58.7 L923.5,58.6 L924.0,58.5 L924.4,58.4 L924.9,58.4 L925.3,58.3 L925.8,58.3 L926.3,58.2 L926.7,58.2 L927.2,58.1 L927.7,58.1 L928.2,58.1 L928.7,58.1 L929.2,58.1 L929.8,58.1 L930.3,58.2 L930.8,58.2 L931.4,58.2 L931.9,58.3 L932.5,58.3 L933.0,58.4 L933.6,58.5 L934.2,58.5 L934.8,58.6 L935.3,58.7 L935.9,58.8 L936.6,58.9 L937.2,59.1 L937.8,59.2 L938.4,59.3 L939.1,59.5 L939.7,59.6 L940.4,59.8 L941.0,59.9 L941.7,60.1 L942.4,60.3 L943.1,60.4 L943.8,60.6 L944.5,60.8 L945.2,61.0 L945.9,61.2 L946.7,61.4 L947.4,61.7 L948.1,61.9 L948.9,62.1 L949.7,62.4 L950.4,62.6 L951.2,62.8 L952.0,63.1 L952.8,63.4 L953.6,63.6 L954.4,63.9 L955.2,64.2 L956.0,64.4 L956.8,64.7 L957.6,65.0 L958.5,65.3 L959.3,65.6 L960.2,65.9 L961.0,66.2 L961.9,66.5 L962.7,66.8 L963.6,67.1 L964.5,67.5 L965.4,67.8 L966.2,68.1 L967.1,68.5 L968.0,68.8 L968.9,69.1 L969.8,69.5 L970.8,69.8 L971.7,70.2 L972.6,70.5 L973.5,70.9 L974.4,71.2 L975.4,71.6 L976.3,72.0 L977.3,72.3 L978.2,72.7 L979.2,73.1 L980.1,73.4 L981.1,73.8 L982.0,74.2 L983.0,74.6 L984.0,75.0 L984.9,75.3 L985.9,75.7 L986.9,76.1 L987.9,76.5 L988.9,76.9 L989.8,77.3 L990.8,77.7 L991.8,78.1 L992.8,78.5 L993.8,78.9 L994.8,79.3 L995.8,79.7 L996.8,80.1 L997.8,80.5 L998.9,80.9 L999.9,81.4 L1000.9,81.8 L1001.9,82.2 L1002.9,82.6 L1003.9,83.0 L1005.0,83.4 L1006.0,83.9 L1007.0,84.3 L1008.0,84.7 L1009.1,85.1 L1010.1,85.6 L1011.1,86.0 L1012.2,86.4 L1013.2,86.9 L1014.3,87.3 L1015.3,87.7 L1016.3,88.1 L1017.4,88.6 L1018.4,89.0 L1019.5,89.5 L1020.5,89.9 L1021.6,90.3 L1022.6,90.8 L1023.7,91.2 L1024.7,91.7 L1025.8,92.1 L1026.8,92.5 L1027.9,93.0 L1028.9,93.4 L1030.0,93.9 L1031.0,94.3 L1032.1,94.8 L1033.1,95.2 L1034.2,95.7 L1035.3,96.1 L1036.3,96.6 L1037.4,97.0 L1038.4,97.5 L1039.5,97.9 L1040.6,98.4 L1041.6,98.8 L1042.7,99.3 L1043.8,99.8 L1044.8,100.2 L1045.9,100.7 L1046.9,101.1 L1048.0,101.6 L1049.1,102.0 L1050.1,102.5 L1051.2,103.0 L1052.3,103.4 L1053.3,103.9 L1054.4,104.3 L1055.5,104.8 L1056.5,105.3 L1057.6,105.7 L1058.6,106.2 L1059.7,106.7 L1060.8,107.1 L1061.8,107.6 L1062.9,108.1 L1064.0,108.5 L1065.0,109.0 L1066.1,109.5 L1067.2,109.9 L1068.2,110.4 L1069.3,110.9 L1070.3,111.3 L1071.4,111.8 L1072.5,112.3 L1073.5,112.7 L1074.6,113.2 L1075.7,113.7 L1076.7,114.2 L1077.8,114.6 L1078.8,115.1 L1079.9,115.6 L1081.0,116.0 L1082.0,116.5 L1083.1,117.0 L1084.1,117.5 L1085.2,117.9 L1086.2,118.4 L1087.3,118.9 L1088.4,119.4 L1089.4,119.8 L1090.5,120.3 L1091.5,120.8 L1092.6,121.3 L1093.6,121.7 L1094.7,122.2 L1095.7,122.7 L1096.8,123.2 L1097.8,123.7 L1098.9,124.1 L1099.9,124.6 L1101.0,125.1 L1102.0,125.6 L1103.0,126.0 L1104.1,126.5 L1105.1,127.0 L1106.2,127.5 L1107.2,128.0 L1108.3,128.4 L1109.3,128.9 L1110.3,129.4 L1111.4,129.9 L1112.4,130.4 L1113.4,130.9 L1114.5,131.3 L1115.5,131.8 L1116.5,132.3 L1117.6,132.8 L1118.6,133.3 L1119.6,133.7 L1120.7,134.2 L1121.7,134.7 L1122.7,135.2 L1123.7,135.7 L1124.8,136.2 L1125.8,136.6 L1126.8,137.1 L1127.8,137.6 L1128.8,138.1 L1129.9,138.6 L1130.9,139.1 L1131.9,139.5 L1132.9,140.0 L1133.9,140.5 L1134.9,141.0 L1135.9,141.5 L1136.9,142.0 L1138.0,142.5 L1139.0,142.9 L1140.0,143.4 L1141.0,143.9 L1142.0,144.4 L1143.0,144.9 L1144.0,145.4 L1145.0,145.9 L1146.0,146.4 L1147.0,146.8 L1148.0,147.3 L1148.9,147.8 L1149.9,148.3 L1150.9,148.8 L1151.9,149.3 L1152.9,149.8 L1153.9,150.3 L1154.9,150.7 L1155.9,151.2 L1156.8,151.7 L1157.8,152.2 L1158.8,152.7 L1159.8,153.2 L1160.7,153.7 L1161.7,154.2 L1162.7,154.7 L1163.7,155.1 L1164.6,155.6 L1165.6,156.1 L1166.6,156.6 L1167.5,157.1 L1168.5,157.6 L1169.4,158.1 L1170.4,158.6 L1171.4,159.1 L1172.3,159.6 L1173.3,160.0 L1174.2,160.5 L1175.2,161.0 L1176.1,161.5 L1177.1,162.0 L1178.0,162.5"/>
<path stroke="#2ab07f" d="M943.3,64.2 L943.8,64.3 L944.3,64.3 L944.8,64.4 L945.3,64.5 L945.8,64.6 L946.3,64.7 L946.8,64.8 L947.3,64.9 L947.8,65.0 L948.3,65.1 L948.9,65.2 L949.4,65.3 L949.9,65.4 L950.5,65.6 L951.0,65.7 L951.6,65.8 L952.2,65.9 L952.7,66.1 L953.3,66.2 L953.9,66.4 L954.4,66.5 L955.0,66.7 L955.6,66.8 L956.2,67.0 L956.8,67.2 L957.4,67.3 L958.0,67.5 L958.6,67.7 L959.2,67.9 L959.9,68.0 L960.5,68.2 L961.1,68.4 L961.8,68.6 L962.4,68.8 L963.0,69.0 L963.7,69.2 L964.3,69.4 L965.0,69.6 L965.7,69.8 L966.3,70.0 L967.0,70.3 L967.7,70.5 L968.3,70.7 L969.0,70.9 L969.7,71.1 L970.4,71.4 L971.1,71.6 L971.8,71.8 L972.5,72.1 L973.2,72.3 L973.9,72.6 L974.6,72.8 L975.3,73.1 L976.0,73.3 L976.7,73.6 L977.5,73.8 L978.2,74.1 L978.9,74.3 L979.7,74.6 L980.4,74.8 L981.1,75.1 L981.9,75.4 L982.6,75.6 L983.4,75.9 L984.1,76.2 L984.9,76.5 L985.6,76.7 L986.4,77.0 L987.2,77.3 L987.9,77.6 L988.7,77.9 L989.5,78.1 L990.2,78.4 L991.0,78.7 L991.8,79.0 L992.6,79.3 L993.4,79.6 L994.2,79.9 L994.9,80.2 L995.7,80.5 L996.5,80.8 L997.3,81.1 L998.1,81.4 L998.9,81.7 L999.7,82.0 L1000.5,82.3 L1001.3,82.6 L1002.2,82.9 L1003.0,83.2 L1003.8,83.5 L1004.6,83.9 L1005.4,84.2 L1006.2,84.5 L1007.0,84.8 L1007.9,85.1 L1008.7,85.4 L1009.5,85.8 L1010.3,86.1 L1011.2,86.4 L1012.0,86.7 L1012.8,87.1 L1013.7,87.4 L1014.5,87.7 L1015.3,88.0 L1016.2,88.4 L1017.0,88.7 L1017.9,89.0 L1018.7,89.4 L1019.5,89.7 L1020.4,90.0 L1021.2,90.4 L1022.1,90.7 L1022.9,91.0 L1023.8,91.4 L1024.6,91.7 L1025.5,92.0 L1026.3,92.4 L1027.2,92.7 L1028.0,93.1 L1028.9,93.4 L1029.8,93.8 L1030.6,94.1 L1031.5,94.4 L1032.3,94.8 L1033.2,95.1 L1034.1,95.5 L1034.9,95.8 L1035.8,96.2 L1036.6,96.5 L1037.5,96.9 L1038.4,97.2 L1039.2,97.6 L1040.1,97.9 L1041.0,98.3 L1041.8,98.6 L1042.7,99.0 L1043.6,99.3 L1044.5,99.7 L1045.3,100.0 L1046.2,100.4 L1047.1,100.8 L1047.9,101.1 L1048.8,101.5 L1049.7,101.8 L1050.6,102.2 L1051.4,102.5 L1052.3,102.9 L1053.2,103.3 L1054.1,103.6 L1054.9,104.0 L1055.8,104.3 L1056.7,104.7 L1057.6,105.1 L1058.4,105.4 L1059.3,105.8 L1060.2,106.2 L1061.1,106.5 L1062.0,106.9 L1062.8,107.3 L1063.7,107.6 L1064.6,108.0 L1065.5,108.4 L1066.3,108.7 L1067.2,109.1 L1068.1,109.5 L1069.0,109.8 L1069.9,110.2 L1070.7,110.6 L1071.6,110.9 L1072.5,111.3 L1073.4,111.7 L1074.3,112.0 L1075.1,112.4 L1076.0,112.8 L1076.9,113.2 L1077.8,113.5 L1078.7,113.9 L1079.5,114.3 L1080.4,114.6 L1081.3,115.0 L1082.2,115.4 L1083.1,115.8 L1083.9,116.1 L1084.8,116.5 L1085.7,116.9 L1086.6,117.3 L1087.5,117.6 L1088.3,118.0 L1089.2,118.4 L1090.1,118.8 L1091.0,119.1 L1091.9,119.5 L1092.7,119.9 L1093.6,120.3 L1094.5,120.7 L1095.4,121.0 L1096.2,121.4 L1097.1,121.8 L1098.0,122.2 L1098.9,122.5 L1099.7,122.9 L1100.6,123.3 L1101.5,123.7 L1102.4,124.1 L1103.2,124.4 L1104.1,124.8 L1105.0,125.2 L1105.9,125.6 L1106.7,126.0 L1107.6,126.4 L1108.5,126.7 L1109.3,127.1 L1110.2,127.5 L1111.1,127.9 L1112.0,128.3 L1112.8,128.6 L1113.7,129.0 L1114.6,129.4 L1115.4,129.8 L1116.3,130.2 L1117.2,130.6 L1118.0,130.9 L1118.9,131.3 L1119.8,131.7 L1120.6,132.1 L1121.5,132.5 L1122.4,132.9 L1123.2,133.3 L1124.1,133.6 L1124.9,134.0 L1125.8,134.4 L1126.7,134.8 L1127.5,135.2 L1128.4,135.6 L1129.2,136.0 L1130.1,136.3 L1131.0,136.7 L1131.8,137.1 L1132.7,137.5 L1133.5,137.9 L1134.4,138.3 L1135.2,138.7 L1136.1,139.1 L1136.9,139.4 L1137.8,139.8 L1138.6,140.2 L1139.5,140.6 L1140.3,141.0 L1141.2,141.4 L1142.0,141.8 L1142.9,142.2 L1143.7,142.6 L1144.6,142.9 L1145.4,143.3 L1146.3,143.7 L1147.1,144.1 L1147.9,144.5 L1148.8,144.9 L1149.6,145.3 L1150.5,145.7 L1151.3,146.1 L1152.1,146.5 L1153.0,146.8 L1153.8,147.2 L1154.7,147.6 L1155.5,148.0 L1156.3,148.4 L1157.2,148.8 L1158.0,149.2 L1158.8,149.6 L1159.7,150.0 L1160.5,150.4 L1161.3,150.8 L1162.1,151.2 L1163.0,151.6 L1163.8,151.9 L1164.6,152.3 L1165.4,152.7 L1166.3,153.1 L1167.1,153.5 L1167.9,153.9 L1168.7,154.3 L1169.5,154.7 L1170.4,155.1 L1171.2,155.5 L1172.0,155.9 L1172.8,156.3 L1173.6,156.7 L1174.4,157.1 L1175.2,157.4 L1176.1,157.8 L1176.9,158.2 L1177.7,158.6 L1178.5,159.0 L1179.3,159.4 L1180.1,159.8 L1180.9,160.2 L1181.7,160.6 L1182.5,161.0"/>
<path stroke="#2ab07f" d="M986.7,92.0 L987.1,92.1 L987.6,92.2 L988.0,92.3 L988.5,92.4 L988.9,92.5 L989.4,92.6 L989.9,92.6 L990.3,92.7 L990.8,92.8 L991.2,93.0 L991.7,93.1 L992.2,93.2 L992.6,93.3 L993.1,93.4 L993.6,93.5 L994.1,93.6 L994.5,93.7 L995.0,93.8 L995.5,93.9 L996.0,94.1 L996.5,94.2 L997.0,94.3 L997.4,94.4 L997.9,94.5 L998.4,94.7 L998.9,94.8 L999.4,94.9 L999.9,95.1 L1000.4,95.2 L1000.9,95.3 L1001.4,95.5 L1001.9,95.6 L1002.4,95.7 L1003.0,95.9 L1003.5,96.0 L1004.0,96.2 L1004.5,96.3 L1005.0,96.4 L1005.5,96.6 L1006.1,96.7 L1006.6,96.9 L1007.1,97.0 L1007.6,97.2 L1008.2,97.3 L1008.7,97.5 L1009.2,97.6 L1009.8,97.8 L1010.3,98.0 L1010.8,98.1 L1011.4,98.3 L1011.9,98.4 L1012.5,98.6 L1013.0,98.8 L1013.5,98.9 L1014.1,99.1 L1014.6,99.3 L1015.2,99.4 L1015.8,99.6 L1016.3,99.8 L1016.9,99.9 L1017.4,100.1 L1018.0,100.3 L1018.5,100.5 L1019.1,100.6 L1019.7,100.8 L1020.2,101.0 L1020.8,101.2 L1021.4,101.4 L1022.0,101.5 L1022.5,101.7 L1023.1,101.9 L1023.7,102.1 L1024.3,102.3 L1024.8,102.5 L1025.4,102.7 L1026.0,102.9 L1026.6,103.0 L1027.2,103.2 L1027.8,103.4 L1028.3,103.6 L1028.9,103.8 L1029.5,104.0 L1030.1,104.2 L1030.7,104.4 L1031.3,104.6 L1031.9,104.8 L1032.5,105.0 L1033.1,105.2 L1033.7,105.4 L1034.3,105.6 L1034.9,105.8 L1035.5,106.0 L1036.1,106.2 L1036.7,106.4 L1037.3,106.7 L1037.9,106.9 L1038.6,107.1 L1039.2,107.3 L1039.8,107.5 L1040.4,107.7 L1041.0,107.9 L1041.6,108.1 L1042.2,108.4 L1042.9,108.6 L1043.5,108.8 L1044.1,109.0 L1044.7,109.2 L1045.4,109.4 L1046.0,109.7 L1046.6,109.9 L1047.2,110.1 L1047.9,110.3 L1048.5,110.6 L1049.1,110.8 L1049.8,111.0 L1050.4,111.2 L1051.0,111.5 L1051.7,111.7 L1052.3,111.9 L1052.9,112.1 L1053.6,112.4 L1054.2,112.6 L1054.8,112.8 L1055.5,113.1 L1056.1,113.3 L1056.8,113.5 L1057.4,113.8 L1058.1,114.0 L1058.7,114.2 L1059.4,114.5 L1060.0,114.7 L1060.6,115.0 L1061.3,115.2 L1061.9,115.4 L1062.6,115.7 L1063.2,115.9 L1063.9,116.2 L1064.6,116.4 L1065.2,116.6 L1065.9,116.9 L1066.5,117.1 L1067.2,117.4 L1067.8,117.6 L1068.5,117.9 L1069.1,118.1 L1069.8,118.4 L1070.5,118.6 L1071.1,118.8 L1071.8,119.1 L1072.5,119.3 L1073.1,119.6 L1073.8,119.8 L1074.4,120.1 L1075.1,120.3 L1075.8,120.6 L1076.4,120.9 L1077.1,121.1 L1077.8,121.4 L1078.4,121.6 L1079.1,121.9 L1079.8,122.1 L1080.4,122.4 L1081.1,122.6 L1081.8,122.9 L1082.5,123.2 L1083.1,123.4 L1083.8,123.7 L1084.5,123.9 L1085.1,124.2 L1085.8,124.4 L1086.5,124.7 L1087.2,125.0 L1087.8,125.2 L1088.5,125.5 L1089.2,125.8 L1089.9,126.0 L1090.6,126.3 L1091.2,126.5 L1091.9,126.8 L1092.6,127.1 L1093.3,127.3 L1093.9,127.6 L1094.6,127.9 L1095.3,128.1 L1096.0,128.4 L1096.7,128.7 L1097.3,128.9 L1098.0,129.2 L1098.7,129.5 L1099.4,129.7 L1100.1,130.0 L1100.8,130.3 L1101.4,130.5 L1102.1,130.8 L1102.8,131.1 L1103.5,131.4 L1104.2,131.6 L1104.9,131.9 L1105.5,132.2 L1106.2,132.5 L1106.9,132.7 L1107.6,133.0 L1108.3,133.3 L1109.0,133.5 L1109.6,133.8 L1110.3,134.1 L1111.0,134.4 L1111.7,134.6 L1112.4,134.9 L1113.1,135.2 L1113.8,135.5 L1114.4,135.8 L1115.1,136.0 L1115.8,136.3 L1116.5,136.6 L1117.2,136.9 L1117.9,137.2 L1118.6,137.4 L1119.3,137.7 L1119.9,138.0 L1120.6,138.3 L1121.3,138.6 L1122.0,138.8 L1122.7,139.1 L1123.4,139.4 L1124.1,139.7 L1124.8,140.0 L1125.5,140.2 L1126.1,140.5 L1126.8,140.8 L1127.5,141.1 L1128.2,141.4 L1128.9,141.7 L1129.6,141.9 L1130.3,142.2 L1131.0,142.5 L1131.6,142.8 L1132.3,143.1 L1133.0,143.4 L1133.7,143.7 L1134.4,143.9 L1135.1,144.2 L1135.8,144.5 L1136.5,144.8 L1137.2,145.1 L1137.8,145.4 L1138.5,145.7 L1139.2,146.0 L1139.9,146.3 L1140.6,146.5 L1141.3,146.8 L1142.0,147.1 L1142.6,147.4 L1143.3,147.7 L1144.0,148.0 L1144.7,148.3 L1145.4,148.6 L1146.1,148.9 L1146.8,149.2 L1147.5,149.4 L1148.1,149.7 L1148.8,150.0 L1149.5,150.3 L1150.2,150.6 L1150.9,150.9 L1151.6,151.2 L1152.2,151.5 L1152.9,151.8 L1153.6,152.1 L1154.3,152.4 L1155.0,152.7 L1155.7,153.0 L1156.3,153.3 L1157.0,153.6 L1157.7,153.9 L1158.4,154.1 L1159.1,154.4 L1159.8,154.7 L1160.4,155.0 L1161.1,155.3 L1161.8,155.6 L1162.5,155.9 L1163.2,156.2 L1163.8,156.5 L1164.5,156.8 L1165.2,157.1 L1165.9,157.4 L1166.6,157.7 L1167.2,158.0 L1167.9,158.3 L1168.6,158.6 L1169.3,158.9 L1169.9,159.2 L1170.6,159.5 L1171.3,159.8 L1172.0,160.1 L1172.7,160.4 L1173.3,160.7 L1174.0,161.0"/>
<path stroke="#2ab07f" d="M1005.0,114.2 L1005.2,114.1 L1005.4,113.9 L1005.6,113.8 L1005.8,113.6 L1005.9,113.5 L1006.1,113.4 L1006.3,113.2 L1006.5,113.1 L1006.7,113.0 L1006.9,112.8 L1007.1,112.7 L1007.3,112.6 L1007.5,112.5 L1007.7,112.3 L1007.9,112.2 L1008.1,112.1 L1008.4,112.0 L1008.6,111.8 L1008.8,111.7 L1009.0,111.6 L1009.2,111.5 L1009.4,111.4 L1009.6,111.3 L1009.9,111.2 L1010.1,111.0 L1010.3,110.9 L1010.5,110.8 L1010.7,110.7 L1011.0,110.6 L1011.2,110.5 L1011.4,110.4 L1011.7,110.3 L1011.9,110.2 L1012.1,110.1 L1012.4,110.0 L1012.6,109.9 L1012.9,109.8 L1013.1,109.7 L1013.3,109.6 L1013.6,109.6 L1013.8,109.5 L1014.1,109.4 L1014.3,109.3 L1014.6,109.2 L1014.9,109.1 L1015.1,109.1 L1015.4,109.0 L1015.6,108.9 L1015.9,108.8 L1016.2,108.7 L1016.4,108.7 L1016.7,108.6 L1017.0,108.5 L1017.2,108.5 L1017.5,108.4 L1017.8,108.3 L1018.1,108.3 L1018.4,108.2 L1018.6,108.2 L1018.9,108.1 L1019.2,108.0 L1019.5,108.0 L1019.8,107.9 L1020.1,107.9 L1020.4,107.8 L1020.7,107.8 L1021.0,107.7 L1021.3,107.7 L1021.6,107.6 L1021.9,107.6 L1022.2,107.5 L1022.5,107.5 L1022.8,107.5 L1023.1,107.4 L1023.5,107.4 L1023.8,107.4 L1024.1,107.3 L1024.4,107.3 L1024.8,107.3 L1025.1,107.2 L1025.4,107.2 L1025.7,107.2 L1026.1,107.2 L1026.4,107.1 L1026.8,107.1 L1027.1,107.1 L1027.4,107.1 L1027.8,107.1 L1028.1,107.1 L1028.5,107.1 L1028.9,107.0 L1029.2,107.0 L1029.6,107.0 L1029.9,107.0 L1030.3,107.0 L1030.7,107.0 L1031.0,107.0 L1031.4,107.0 L1031.8,107.0 L1032.2,107.0 L1032.5,107.0 L1032.9,107.0 L1033.3,107.1 L1033.7,107.1 L1034.1,107.1 L1034.5,107.1 L1034.9,107.1 L1035.3,107.1 L1035.6,107.1 L1036.0,107.2 L1036.5,107.2 L1036.9,107.2 L1037.3,107.2 L1037.7,107.3 L1038.1,107.3 L1038.5,107.3 L1038.9,107.4 L1039.3,107.4 L1039.8,107.4 L1040.2,107.5 L1040.6,107.5 L1041.1,107.5 L1041.5,107.6 L1041.9,107.6 L1042.4,107.7 L1042.8,107.7 L1043.3,107.8 L1043.7,107.8 L1044.1,107.9 L1044.6,107.9 L1045.1,108.0 L1045.5,108.0 L1046.0,108.1 L1046.4,108.1 L1046.9,108.2 L1047.4,108.3 L1047.8,108.3 L1048.3,108.4 L1048.8,108.4 L1049.3,108.5 L1049.7,108.6 L1050.2,108.7 L1050.7,108.7 L1051.2,108.8 L1051.7,108.9 L1052.2,109.0 L1052.7,109.0 L1053.2,109.1 L1053.7,109.2 L1054.2,109.3 L1054.7,109.4 L1055.2,109.4 L1055.7,109.5 L1056.2,109.6 L1056.7,109.7 L1057.2,109.8 L1057.7,109.9 L1058.3,110.0 L1058.8,110.1 L1059.3,110.2 L1059.9,110.3 L1060.4,110.4 L1060.9,110.5 L1061.5,110.6 L1062.0,110.7 L1062.5,110.8 L1063.1,110.9 L1063.6,111.0 L1064.2,111.1 L1064.7,111.2 L1065.3,111.3 L1065.8,111.5 L1066.4,111.6 L1067.0,111.7 L1067.5,111.8 L1068.1,111.9 L1068.7,112.0 L1069.2,112.2 L1069.8,112.3 L1070.4,112.4 L1071.0,112.5 L1071.5,112.7 L1072.1,112.8 L1072.7,112.9 L1073.3,113.1 L1073.9,113.2 L1074.5,113.3 L1075.1,113.5 L1075.7,113.6 L1076.3,113.7 L1076.9,113.9 L1077.5,114.0 L1078.1,114.2 L1078.7,114.3 L1079.3,114.4 L1079.9,114.6 L1080.5,114.7 L1081.1,114.9 L1081.8,115.0 L1082.4,115.2 L1083.0,115.3 L1083.6,115.5 L1084.2,115.6 L1084.9,115.8 L1085.5,116.0 L1086.1,116.1 L1086.8,116.3 L1087.4,116.4 L1088.1,116.6 L1088.7,116.7 L1089.3,116.9 L1090.0,117.1 L1090.6,117.2 L1091.3,117.4 L1091.9,117.6 L1092.6,117.7 L1093.2,117.9 L1093.9,118.1 L1094.6,118.3 L1095.2,118.4 L1095.9,118.6 L1096.6,118.8 L1097.2,119.0 L1097.9,119.1 L1098.6,119.3 L1099.2,119.5 L1099.9,119.7 L1100.6,119.8 L1101.3,120.0 L1101.9,120.2 L1102.6,120.4 L1103.3,120.6 L1104.0,120.8 L1104.7,121.0 L1105.4,121.1 L1106.1,121.3 L1106.7,121.5 L1107.4,121.7 L1108.1,121.9 L1108.8,122.1 L1109.5,122.3 L1110.2,122.5 L1110.9,122.7 L1111.6,122.9 L1112.3,123.1 L1113.1,123.3 L1113.8,123.5 L1114.5,123.7 L1115.2,123.9 L1115.9,124.1 L1116.6,124.3 L1117.3,124.5 L1118.1,124.7 L1118.8,124.9 L1119.5,125.1 L1120.2,125.3 L1120.9,125.5 L1121.7,125.7 L1122.4,125.9 L1123.1,126.2 L1123.8,126.4 L1124.6,126.6 L1125.3,126.8 L1126.0,127.0 L1126.8,127.2 L1127.5,127.4 L1128.3,127.7 L1129.0,127.9 L1129.7,128.1 L1130.5,128.3 L1131.2,128.5 L1132.0,128.8 L1132.7,129.0 L1133.5,129.2 L1134.2,129.4 L1135.0,129.6 L1135.7,129.9 L1136.5,130.1 L1137.2,130.3 L1138.0,130.6 L1138.7,130.8 L1139.5,131.0 L1140.2,131.2 L1141.0,131.5 L1141.8,131.7 L1142.5,131.9 L1143.3,132.2 L1144.0,132.4 L1144.8,132.6 L1145.6,132.9 L1146.3,133.1 L1147.1,133.3 L1147.9,133.6 L1148.6,133.8 L1149.4,134.0 L1150.2,134.3 L1151.0,134.5 L1151.7,134.8 L1152.5,135.0"/>
<path stroke="#2ab07f" d="M955.0,143.3 L955.3,142.9 L955.6,142.5 L955.9,142.0 L956.3,141.6 L956.6,141.2 L956.9,140.8 L957.2,140.4 L957.5,140.0 L957.8,139.6 L958.1,139.2 L958.5,138.8 L958.8,138.4 L959.1,138.0 L959.4,137.6 L959.7,137.2 L960.1,136.8 L960.4,136.4 L960.7,136.0 L961.0,135.6 L961.3,135.3 L961.7,134.9 L962.0,134.5 L962.3,134.1 L962.6,133.8 L963.0,133.4 L963.3,133.0 L963.6,132.6 L964.0,132.3 L964.3,131.9 L964.6,131.6 L965.0,131.2 L965.3,130.8 L965.6,130.5 L966.0,130.1 L966.3,129.8 L966.6,129.4 L967.0,129.1 L967.3,128.8 L967.7,128.4 L968.0,128.1 L968.4,127.7 L968.7,127.4 L969.0,127.1 L969.4,126.8 L969.7,126.4 L970.1,126.1 L970.5,125.8 L970.8,125.5 L971.2,125.2 L971.5,124.9 L971.9,124.6 L972.2,124.3 L972.6,124.0 L973.0,123.7 L973.3,123.4 L973.7,123.1 L974.1,122.8 L974.5,122.5 L974.8,122.2 L975.2,121.9 L975.6,121.7 L976.0,121.4 L976.3,121.1 L976.7,120.9 L977.1,120.6 L977.5,120.3 L977.9,120.1 L978.3,119.8 L978.7,119.6 L979.1,119.3 L979.5,119.1 L979.9,118.9 L980.3,118.6 L980.7,118.4 L981.1,118.2 L981.5,117.9 L982.0,117.7 L982.4,117.5 L982.8,117.3 L983.2,117.1 L983.7,116.9 L984.1,116.7 L984.5,116.5 L985.0,116.3 L985.4,116.1 L985.8,115.9 L986.3,115.7 L986.7,115.5 L987.2,115.3 L987.7,115.2 L988.1,115.0 L988.6,114.8 L989.1,114.7 L989.5,114.5 L990.0,114.4 L990.5,114.2 L991.0,114.1 L991.5,113.9 L991.9,113.8 L992.4,113.7 L992.9,113.5 L993.4,113.4 L993.9,113.3 L994.5,113.2 L995.0,113.1 L995.5,113.0 L996.0,112.9 L996.5,112.8 L997.1,112.7 L997.6,112.6 L998.2,112.5 L998.7,112.4 L999.2,112.3 L999.8,112.3 L1000.4,112.2 L1000.9,112.1 L1001.5,112.1 L1002.1,112.0 L1002.6,112.0 L1003.2,111.9 L1003.8,111.9 L1004.4,111.9 L1005.0,111.8 L1005.6,111.8 L1006.2,111.8 L1006.8,111.7 L1007.5,111.7 L1008.1,111.7 L1008.7,111.7 L1009.3,111.7 L1010.0,111.7 L1010.6,111.7 L1011.3,111.7 L1011.9,111.8 L1012.6,111.8 L1013.2,111.8 L1013.9,111.8 L1014.6,111.9 L1015.3,111.9 L1016.0,111.9 L1016.7,112.0 L1017.4,112.0 L1018.1,112.1 L1018.8,112.2 L1019.5,112.2 L1020.2,112.3 L1020.9,112.4 L1021.7,112.5 L1022.4,112.5 L1023.1,112.6 L1023.9,112.7 L1024.6,112.8 L1025.4,112.9 L1026.2,113.0 L1026.9,113.1 L1027.7,113.2 L1028.5,113.3 L1029.3,113.5 L1030.1,113.6 L1030.9,113.7 L1031.7,113.9 L1032.5,114.0 L1033.3,114.1 L1034.1,114.3 L1035.0,114.4 L1035.8,114.6 L1036.6,114.7 L1037.5,114.9 L1038.3,115.1 L1039.2,115.2 L1040.0,115.4 L1040.9,115.6 L1041.8,115.8 L1042.6,116.0 L1043.5,116.1 L1044.4,116.3 L1045.3,116.5 L1046.2,116.7 L1047.1,116.9 L1048.0,117.2 L1048.9,117.4 L1049.9,117.6 L1050.8,117.8 L1051.7,118.0 L1052.7,118.2 L1053.6,118.5 L1054.5,118.7 L1055.5,118.9 L1056.4,119.2 L1057.4,119.4 L1058.4,119.7 L1059.3,119.9 L1060.3,120.2 L1061.3,120.4 L1062.3,120.7 L1063.3,121.0 L1064.3,121.2 L1065.3,121.5 L1066.3,121.8 L1067.3,122.1 L1068.3,122.3 L1069.3,122.6 L1070.3,122.9 L1071.4,123.2 L1072.4,123.5 L1073.4,123.8 L1074.5,124.1 L1075.5,124.4 L1076.6,124.7 L1077.6,125.0 L1078.7,125.3 L1079.8,125.6 L1080.8,125.9 L1081.9,126.2 L1083.0,126.6 L1084.0,126.9 L1085.1,127.2 L1086.2,127.5 L1087.3,127.9 L1088.4,128.2 L1089.5,128.5 L1090.6,128.9 L1091.7,129.2 L1092.8,129.6 L1093.9,129.9 L1095.0,130.3 L1096.1,130.6 L1097.3,131.0 L1098.4,131.3 L1099.5,131.7 L1100.7,132.1 L1101.8,132.4 L1102.9,132.8 L1104.1,133.2 L1105.2,133.5 L1106.4,133.9 L1107.5,134.3 L1108.7,134.7 L1109.8,135.0 L1111.0,135.4 L1112.1,135.8 L1113.3,136.2 L1114.5,136.6 L1115.6,137.0 L1116.8,137.4 L1118.0,137.7 L1119.2,138.1 L1120.3,138.5 L1121.5,138.9 L1122.7,139.3 L1123.9,139.7 L1125.1,140.2 L1126.3,140.6 L1127.4,141.0 L1128.6,141.4 L1129.8,141.8 L1131.0,142.2 L1132.2,142.6 L1133.4,143.0 L1134.6,143.5 L1135.8,143.9 L1137.1,144.3 L1138.3,144.7 L1139.5,145.2 L1140.7,145.6 L1141.9,146.0 L1143.1,146.5 L1144.3,146.9 L1145.5,147.3 L1146.8,147.8 L1148.0,148.2 L1149.2,148.6 L1150.4,149.1 L1151.7,149.5 L1152.9,150.0 L1154.1,150.4 L1155.3,150.8 L1156.6,151.3 L1157.8,151.7 L1159.0,152.2 L1160.2,152.6 L1161.5,153.1 L1162.7,153.6 L1163.9,154.0 L1165.2,154.5 L1166.4,154.9 L1167.6,155.4 L1168.9,155.8 L1170.1,156.3 L1171.4,156.8 L1172.6,157.2 L1173.8,157.7 L1175.1,158.2 L1176.3,158.6 L1177.5,159.1 L1178.8,159.6 L1180.0,160.1 L1181.3,160.5 L1182.5,161.0"/>
<path stroke="#2ab07f" d="M981.7,145.0 L981.9,144.6 L982.1,144.2 L982.4,143.8 L982.6,143.5 L982.8,143.1 L983.0,142.7 L983.3,142.3 L983.5,141.9 L983.7,141.6 L983.9,141.2 L984.2,140.8 L984.4,140.4 L984.6,140.1 L984.9,139.7 L985.1,139.3 L985.3,139.0 L985.5,138.6 L985.8,138.3 L986.0,137.9 L986.2,137.5 L986.5,137.2 L986.7,136.8 L987.0,136.5 L987.2,136.1 L987.4,135.8 L987.7,135.4 L987.9,135.1 L988.2,134.7 L988.4,134.4 L988.6,134.1 L988.9,133.7 L989.1,133.4 L989.4,133.1 L989.6,132.7 L989.9,132.4 L990.1,132.1 L990.4,131.7 L990.6,131.4 L990.9,131.1 L991.2,130.8 L991.4,130.5 L991.7,130.2 L991.9,129.8 L992.2,129.5 L992.5,129.2 L992.7,128.9 L993.0,128.6 L993.3,128.3 L993.5,128.0 L993.8,127.7 L994.1,127.4 L994.4,127.1 L994.6,126.9 L994.9,126.6 L995.2,126.3 L995.5,126.0 L995.8,125.7 L996.1,125.5 L996.3,125.2 L996.6,124.9 L996.9,124.6 L997.2,124.4 L997.5,124.1 L997.8,123.9 L998.1,123.6 L998.4,123.3 L998.7,123.1 L999.0,122.8 L999.4,122.6 L999.7,122.4 L1000.0,122.1 L1000.3,121.9 L1000.6,121.6 L1001.0,121.4 L1001.3,121.2 L1001.6,120.9 L1001.9,120.7 L1002.3,120.5 L1002.6,120.3 L1002.9,120.1 L1003.3,119.9 L1003.6,119.7 L1004.0,119.4 L1004.3,119.2 L1004.7,119.0 L1005.0,118.8 L1005.4,118.7 L1005.8,118.5 L1006.1,118.3 L1006.5,118.1 L1006.9,117.9 L1007.3,117.7 L1007.6,117.6 L1008.0,117.4 L1008.4,117.2 L1008.8,117.1 L1009.2,116.9 L1009.6,116.7 L1010.0,116.6 L1010.4,116.4 L1010.8,116.3 L1011.2,116.1 L1011.6,116.0 L1012.1,115.9 L1012.5,115.7 L1012.9,115.6 L1013.3,115.5 L1013.8,115.4 L1014.2,115.2 L1014.7,115.1 L1015.1,115.0 L1015.6,114.9 L1016.0,114.8 L1016.5,114.7 L1017.0,114.6 L1017.4,114.5 L1017.9,114.4 L1018.4,114.3 L1018.9,114.2 L1019.3,114.2 L1019.8,114.1 L1020.3,114.0 L1020.8,113.9 L1021.3,113.9 L1021.9,113.8 L1022.4,113.8 L1022.9,113.7 L1023.4,113.7 L1023.9,113.6 L1024.5,113.6 L1025.0,113.5 L1025.6,113.5 L1026.1,113.5 L1026.7,113.4 L1027.2,113.4 L1027.8,113.4 L1028.4,113.4 L1028.9,113.4 L1029.5,113.4 L1030.1,113.3 L1030.7,113.3 L1031.3,113.3 L1031.9,113.4 L1032.5,113.4 L1033.1,113.4 L1033.7,113.4 L1034.3,113.4 L1035.0,113.4 L1035.6,113.5 L1036.2,113.5 L1036.9,113.5 L1037.5,113.6 L1038.2,113.6 L1038.9,113.7 L1039.5,113.7 L1040.2,113.8 L1040.9,113.8 L1041.5,113.9 L1042.2,114.0 L1042.9,114.0 L1043.6,114.1 L1044.3,114.2 L1045.0,114.3 L1045.8,114.4 L1046.5,114.4 L1047.2,114.5 L1047.9,114.6 L1048.7,114.7 L1049.4,114.8 L1050.2,114.9 L1050.9,115.1 L1051.7,115.2 L1052.4,115.3 L1053.2,115.4 L1054.0,115.5 L1054.8,115.7 L1055.6,115.8 L1056.3,115.9 L1057.1,116.1 L1057.9,116.2 L1058.8,116.4 L1059.6,116.5 L1060.4,116.7 L1061.2,116.8 L1062.0,117.0 L1062.9,117.1 L1063.7,117.3 L1064.6,117.5 L1065.4,117.6 L1066.3,117.8 L1067.1,118.0 L1068.0,118.2 L1068.9,118.4 L1069.7,118.5 L1070.6,118.7 L1071.5,118.9 L1072.4,119.1 L1073.3,119.3 L1074.2,119.5 L1075.1,119.7 L1076.0,120.0 L1076.9,120.2 L1077.9,120.4 L1078.8,120.6 L1079.7,120.8 L1080.7,121.1 L1081.6,121.3 L1082.6,121.5 L1083.5,121.7 L1084.5,122.0 L1085.4,122.2 L1086.4,122.5 L1087.4,122.7 L1088.3,123.0 L1089.3,123.2 L1090.3,123.5 L1091.3,123.7 L1092.3,124.0 L1093.3,124.2 L1094.3,124.5 L1095.3,124.8 L1096.3,125.0 L1097.3,125.3 L1098.3,125.6 L1099.4,125.9 L1100.4,126.1 L1101.4,126.4 L1102.4,126.7 L1103.5,127.0 L1104.5,127.3 L1105.6,127.6 L1106.6,127.9 L1107.7,128.2 L1108.7,128.5 L1109.8,128.8 L1110.9,129.1 L1111.9,129.4 L1113.0,129.7 L1114.1,130.0 L1115.2,130.3 L1116.2,130.6 L1117.3,130.9 L1118.4,131.3 L1119.5,131.6 L1120.6,131.9 L1121.7,132.2 L1122.8,132.5 L1123.9,132.9 L1125.0,133.2 L1126.1,133.5 L1127.3,133.9 L1128.4,134.2 L1129.5,134.6 L1130.6,134.9 L1131.7,135.2 L1132.9,135.6 L1134.0,135.9 L1135.1,136.3 L1136.3,136.6 L1137.4,137.0 L1138.6,137.3 L1139.7,137.7 L1140.9,138.1 L1142.0,138.4 L1143.2,138.8 L1144.3,139.1 L1145.5,139.5 L1146.6,139.9 L1147.8,140.2 L1149.0,140.6 L1150.1,141.0 L1151.3,141.4 L1152.5,141.7 L1153.6,142.1 L1154.8,142.5 L1156.0,142.9 L1157.2,143.2 L1158.4,143.6 L1159.5,144.0 L1160.7,144.4 L1161.9,144.8 L1163.1,145.2 L1164.3,145.6 L1165.5,146.0 L1166.7,146.4 L1167.9,146.7 L1169.1,147.1 L1170.3,147.5 L1171.4,147.9 L1172.6,148.3 L1173.8,148.7 L1175.1,149.1 L1176.3,149.5 L1177.5,150.0 L1178.7,150.4 L1179.9,150.8 L1181.1,151.2 L1182.3,151.6 L1183.5,152.0"/>
<path stroke="#2ab07f" d="M1058.3,160.0 L1058.5,159.8 L1058.6,159.6 L1058.8,159.4 L1059.0,159.2 L1059.1,159.0 L1059.3,158.8 L1059.4,158.6 L1059.6,158.5 L1059.8,158.3 L1059.9,158.1 L1060.1,157.9 L1060.3,157.7 L1060.5,157.5 L1060.6,157.3 L1060.8,157.1 L1061.0,157.0 L1061.1,156.8 L1061.3,156.6 L1061.5,156.4 L1061.7,156.2 L1061.8,156.1 L1062.0,155.9 L1062.2,155.7 L1062.4,155.5 L1062.5,155.4 L1062.7,155.2 L1062.9,155.0 L1063.1,154.8 L1063.3,154.7 L1063.4,154.5 L1063.6,154.3 L1063.8,154.1 L1064.0,154.0 L1064.2,153.8 L1064.4,153.6 L1064.6,153.5 L1064.7,153.3 L1064.9,153.1 L1065.1,153.0 L1065.3,152.8 L1065.5,152.7 L1065.7,152.5 L1065.9,152.3 L1066.1,152.2 L1066.3,152.0 L1066.5,151.9 L1066.7,151.7 L1066.9,151.5 L1067.1,151.4 L1067.3,151.2 L1067.5,151.1 L1067.7,150.9 L1067.9,150.8 L1068.1,150.6 L1068.3,150.5 L1068.5,150.3 L1068.7,150.2 L1068.9,150.0 L1069.1,149.9 L1069.3,149.8 L1069.5,149.6 L1069.7,149.5 L1069.9,149.3 L1070.2,149.2 L1070.4,149.1 L1070.6,148.9 L1070.8,148.8 L1071.0,148.6 L1071.2,148.5 L1071.5,148.4 L1071.7,148.2 L1071.9,148.1 L1072.1,148.0 L1072.4,147.9 L1072.6,147.7 L1072.8,147.6 L1073.0,147.5 L1073.3,147.3 L1073.5,147.2 L1073.7,147.1 L1074.0,147.0 L1074.2,146.9 L1074.4,146.7 L1074.7,146.6 L1074.9,146.5 L1075.1,146.4 L1075.4,146.3 L1075.6,146.1 L1075.9,146.0 L1076.1,145.9 L1076.4,145.8 L1076.6,145.7 L1076.9,145.6 L1077.1,145.5 L1077.4,145.4 L1077.6,145.3 L1077.9,145.2 L1078.1,145.1 L1078.4,145.0 L1078.6,144.9 L1078.9,144.8 L1079.2,144.7 L1079.4,144.6 L1079.7,144.5 L1079.9,144.4 L1080.2,144.3 L1080.5,144.2 L1080.7,144.1 L1081.0,144.0 L1081.3,143.9 L1081.6,143.8 L1081.8,143.7 L1082.1,143.6 L1082.4,143.5 L1082.7,143.5 L1083.0,143.4 L1083.2,143.3 L1083.5,143.2 L1083.8,143.1 L1084.1,143.1 L1084.4,143.0 L1084.7,142.9 L1085.0,142.8 L1085.3,142.8 L1085.6,142.7 L1085.9,142.6 L1086.1,142.5 L1086.4,142.5 L1086.8,142.4 L1087.1,142.3 L1087.4,142.3 L1087.7,142.2 L1088.0,142.1 L1088.3,142.1 L1088.6,142.0 L1088.9,142.0 L1089.2,141.9 L1089.5,141.8 L1089.9,141.8 L1090.2,141.7 L1090.5,141.7 L1090.8,141.6 L1091.1,141.6 L1091.5,141.5 L1091.8,141.5 L1092.1,141.4 L1092.5,141.4 L1092.8,141.3 L1093.1,141.3 L1093.5,141.2 L1093.8,141.2 L1094.2,141.2 L1094.5,141.1 L1094.8,141.1 L1095.2,141.0 L1095.5,141.0 L1095.9,141.0 L1096.2,140.9 L1096.6,140.9 L1096.9,140.9 L1097.3,140.8 L1097.7,140.8 L1098.0,140.8 L1098.4,140.8 L1098.7,140.7 L1099.1,140.7 L1099.5,140.7 L1099.9,140.7 L1100.2,140.7 L1100.6,140.6 L1101.0,140.6 L1101.4,140.6 L1101.7,140.6 L1102.1,140.6 L1102.5,140.6 L1102.9,140.6 L1103.3,140.5 L1103.7,140.5 L1104.1,140.5 L1104.4,140.5 L1104.8,140.5 L1105.2,140.5 L1105.6,140.5 L1106.0,140.5 L1106.4,140.5 L1106.8,140.5 L1107.3,140.5 L1107.7,140.5 L1108.1,140.5 L1108.5,140.5 L1108.9,140.5 L1109.3,140.6 L1109.7,140.6 L1110.2,140.6 L1110.6,140.6 L1111.0,140.6 L1111.4,140.6 L1111.9,140.6 L1112.3,140.7 L1112.7,140.7 L1113.2,140.7 L1113.6,140.7 L1114.0,140.7 L1114.5,140.8 L1114.9,140.8 L1115.4,140.8 L1115.8,140.8 L1116.3,140.9 L1116.7,140.9 L1117.2,140.9 L1117.6,141.0 L1118.1,141.0 L1118.5,141.0 L1119.0,141.1 L1119.5,141.1 L1119.9,141.2 L1120.4,141.2 L1120.9,141.2 L1121.3,141.3 L1121.8,141.3 L1122.3,141.4 L1122.8,141.4 L1123.2,141.5 L1123.7,141.5 L1124.2,141.6 L1124.7,141.6 L1125.2,141.7 L1125.7,141.7 L1126.2,141.8 L1126.7,141.8 L1127.2,141.9 L1127.6,141.9 L1128.1,142.0 L1128.7,142.1 L1129.2,142.1 L1129.7,142.2 L1130.2,142.3 L1130.7,142.3 L1131.2,142.4 L1131.7,142.5 L1132.2,142.5 L1132.7,142.6 L1133.3,142.7 L1133.8,142.7 L1134.3,142.8 L1134.8,142.9 L1135.4,143.0 L1135.9,143.0 L1136.4,143.1 L1137.0,143.2 L1137.5,143.3 L1138.0,143.4 L1138.6,143.5 L1139.1,143.5 L1139.7,143.6 L1140.2,143.7 L1140.8,143.8 L1141.3,143.9 L1141.9,144.0 L1142.4,144.1 L1143.0,144.2 L1143.5,144.3 L1144.1,144.4 L1144.6,144.4 L1145.2,144.5 L1145.8,144.6 L1146.3,144.7 L1146.9,144.8 L1147.5,144.9 L1148.1,145.0 L1148.6,145.2 L1149.2,145.3 L1149.8,145.4 L1150.4,145.5 L1151.0,145.6 L1151.5,145.7 L1152.1,145.8 L1152.7,145.9 L1153.3,146.0 L1153.9,146.1 L1154.5,146.3 L1155.1,146.4 L1155.7,146.5 L1156.3,146.6 L1156.9,146.7 L1157.5,146.8 L1158.1,147.0 L1158.7,147.1 L1159.3,147.2 L1159.9,147.3 L1160.5,147.5 L1161.1,147.6 L1161.8,147.7 L1162.4,147.8 L1163.0,148.0 L1163.6,148.1 L1164.2,148.2 L1164.9,148.4 L1165.5,148.5"/>
<path stroke="#2ab07f" d="M1066.7,169.2 L1066.9,169.0 L1067.1,168.8 L1067.3,168.6 L1067.4,168.4 L1067.6,168.2 L1067.8,168.0 L1068.0,167.8 L1068.2,167.6 L1068.4,167.5 L1068.6,167.3 L1068.8,167.1 L1068.9,166.9 L1069.1,166.7 L1069.3,166.5 L1069.5,166.3 L1069.7,166.1 L1069.9,166.0 L1070.1,165.8 L1070.3,165.6 L1070.5,165.4 L1070.7,165.2 L1070.9,165.0 L1071.1,164.9 L1071.3,164.7 L1071.5,164.5 L1071.7,164.3 L1071.9,164.2 L1072.1,164.0 L1072.3,163.8 L1072.5,163.6 L1072.7,163.5 L1072.9,163.3 L1073.1,163.1 L1073.3,162.9 L1073.5,162.8 L1073.7,162.6 L1073.9,162.4 L1074.1,162.3 L1074.3,162.1 L1074.5,161.9 L1074.8,161.8 L1075.0,161.6 L1075.2,161.5 L1075.4,161.3 L1075.6,161.1 L1075.8,161.0 L1076.0,160.8 L1076.3,160.7 L1076.5,160.5 L1076.7,160.3 L1076.9,160.2 L1077.1,160.0 L1077.3,159.9 L1077.6,159.7 L1077.8,159.6 L1078.0,159.4 L1078.2,159.3 L1078.5,159.1 L1078.7,159.0 L1078.9,158.8 L1079.1,158.7 L1079.4,158.5 L1079.6,158.4 L1079.8,158.3 L1080.1,158.1 L1080.3,158.0 L1080.5,157.8 L1080.8,157.7 L1081.0,157.6 L1081.2,157.4 L1081.5,157.3 L1081.7,157.2 L1082.0,157.0 L1082.2,156.9 L1082.4,156.8 L1082.7,156.6 L1082.9,156.5 L1083.2,156.4 L1083.4,156.2 L1083.7,156.1 L1083.9,156.0 L1084.2,155.9 L1084.4,155.7 L1084.7,155.6 L1084.9,155.5 L1085.2,155.4 L1085.4,155.3 L1085.7,155.1 L1086.0,155.0 L1086.2,154.9 L1086.5,154.8 L1086.7,154.7 L1087.0,154.6 L1087.3,154.4 L1087.5,154.3 L1087.8,154.2 L1088.1,154.1 L1088.3,154.0 L1088.6,153.9 L1088.9,153.8 L1089.1,153.7 L1089.4,153.6 L1089.7,153.5 L1090.0,153.4 L1090.2,153.3 L1090.5,153.2 L1090.8,153.1 L1091.1,153.0 L1091.4,152.9 L1091.7,152.8 L1091.9,152.7 L1092.2,152.6 L1092.5,152.5 L1092.8,152.4 L1093.1,152.3 L1093.4,152.3 L1093.7,152.2 L1094.0,152.1 L1094.3,152.0 L1094.6,151.9 L1094.9,151.8 L1095.2,151.8 L1095.5,151.7 L1095.8,151.6 L1096.1,151.5 L1096.4,151.4 L1096.7,151.4 L1097.0,151.3 L1097.3,151.2 L1097.6,151.1 L1098.0,151.1 L1098.3,151.0 L1098.6,150.9 L1098.9,150.9 L1099.2,150.8 L1099.6,150.7 L1099.9,150.7 L1100.2,150.6 L1100.5,150.5 L1100.9,150.5 L1101.2,150.4 L1101.5,150.4 L1101.9,150.3 L1102.2,150.3 L1102.5,150.2 L1102.9,150.1 L1103.2,150.1 L1103.6,150.0 L1103.9,150.0 L1104.2,149.9 L1104.6,149.9 L1104.9,149.8 L1105.3,149.8 L1105.6,149.8 L1106.0,149.7 L1106.3,149.7 L1106.7,149.6 L1107.1,149.6 L1107.4,149.6 L1107.8,149.5 L1108.1,149.5 L1108.5,149.4 L1108.9,149.4 L1109.2,149.4 L1109.6,149.4 L1110.0,149.3 L1110.4,149.3 L1110.7,149.3 L1111.1,149.2 L1111.5,149.2 L1111.9,149.2 L1112.3,149.2 L1112.6,149.1 L1113.0,149.1 L1113.4,149.1 L1113.8,149.1 L1114.2,149.1 L1114.6,149.1 L1115.0,149.0 L1115.4,149.0 L1115.8,149.0 L1116.2,149.0 L1116.6,149.0 L1117.0,149.0 L1117.4,149.0 L1117.8,149.0 L1118.2,149.0 L1118.6,149.0 L1119.0,149.0 L1119.4,149.0 L1119.9,149.0 L1120.3,149.0 L1120.7,149.0 L1121.1,149.0 L1121.6,149.0 L1122.0,149.0 L1122.4,149.0 L1122.8,149.0 L1123.3,149.0 L1123.7,149.0 L1124.1,149.0 L1124.6,149.1 L1125.0,149.1 L1125.5,149.1 L1125.9,149.1 L1126.3,149.1 L1126.8,149.2 L1127.2,149.2 L1127.7,149.2 L1128.1,149.2 L1128.6,149.2 L1129.1,149.3 L1129.5,149.3 L1130.0,149.3 L1130.4,149.4 L1130.9,149.4 L1131.4,149.4 L1131.8,149.5 L1132.3,149.5 L1132.8,149.5 L1133.2,149.6 L1133.7,149.6 L1134.2,149.6 L1134.7,149.7 L1135.2,149.7 L1135.6,149.8 L1136.1,149.8 L1136.6,149.9 L1137.1,149.9 L1137.6,149.9 L1138.1,150.0 L1138.6,150.0 L1139.1,150.1 L1139.6,150.1 L1140.1,150.2 L1140.6,150.3 L1141.1,150.3 L1141.6,150.4 L1142.1,150.4 L1142.6,150.5 L1143.1,150.5 L1143.6,150.6 L1144.2,150.7 L1144.7,150.7 L1145.2,150.8 L1145.7,150.9 L1146.2,150.9 L1146.8,151.0 L1147.3,151.1 L1147.8,151.1 L1148.3,151.2 L1148.9,151.3 L1149.4,151.4 L1149.9,151.4 L1150.5,151.5 L1151.0,151.6 L1151.6,151.7 L1152.1,151.8 L1152.7,151.8 L1153.2,151.9 L1153.8,152.0 L1154.3,152.1 L1154.9,152.2 L1155.4,152.3 L1156.0,152.4 L1156.5,152.4 L1157.1,152.5 L1157.7,152.6 L1158.2,152.7 L1158.8,152.8 L1159.4,152.9 L1159.9,153.0 L1160.5,153.1 L1161.1,153.2 L1161.7,153.3 L1162.2,153.4 L1162.8,153.5 L1163.4,153.6 L1164.0,153.7 L1164.6,153.8 L1165.1,153.9 L1165.7,154.0 L1166.3,154.1 L1166.9,154.2 L1167.5,154.3 L1168.1,154.5 L1168.7,154.6 L1169.3,154.7 L1169.9,154.8 L1170.5,154.9 L1171.1,155.0 L1171.7,155.1 L1172.3,155.3 L1172.9,155.4 L1173.5,155.5 L1174.2,155.6 L1174.8,155.8 L1175.4,155.9 L1176.0,156.0"/>
<path stroke="#2ab07f" d="M1077.5,165.8 L1077.7,165.6 L1077.8,165.4 L1078.0,165.2 L1078.1,165.0 L1078.3,164.8 L1078.4,164.6 L1078.6,164.4 L1078.7,164.2 L1078.9,164.0 L1079.1,163.8 L1079.2,163.6 L1079.4,163.4 L1079.5,163.2 L1079.7,163.0 L1079.9,162.9 L1080.0,162.7 L1080.2,162.5 L1080.4,162.3 L1080.5,162.1 L1080.7,161.9 L1080.9,161.7 L1081.0,161.5 L1081.2,161.4 L1081.4,161.2 L1081.5,161.0 L1081.7,160.8 L1081.9,160.6 L1082.0,160.4 L1082.2,160.3 L1082.4,160.1 L1082.6,159.9 L1082.7,159.7 L1082.9,159.6 L1083.1,159.4 L1083.3,159.2 L1083.4,159.0 L1083.6,158.9 L1083.8,158.7 L1084.0,158.5 L1084.2,158.4 L1084.3,158.2 L1084.5,158.0 L1084.7,157.9 L1084.9,157.7 L1085.1,157.5 L1085.3,157.4 L1085.5,157.2 L1085.7,157.0 L1085.8,156.9 L1086.0,156.7 L1086.2,156.6 L1086.4,156.4 L1086.6,156.2 L1086.8,156.1 L1087.0,155.9 L1087.2,155.8 L1087.4,155.6 L1087.6,155.5 L1087.8,155.3 L1088.0,155.2 L1088.2,155.0 L1088.4,154.9 L1088.6,154.7 L1088.8,154.6 L1089.0,154.4 L1089.2,154.3 L1089.4,154.1 L1089.6,154.0 L1089.9,153.8 L1090.1,153.7 L1090.3,153.6 L1090.5,153.4 L1090.7,153.3 L1090.9,153.2 L1091.1,153.0 L1091.4,152.9 L1091.6,152.7 L1091.8,152.6 L1092.0,152.5 L1092.3,152.4 L1092.5,152.2 L1092.7,152.1 L1092.9,152.0 L1093.2,151.8 L1093.4,151.7 L1093.6,151.6 L1093.9,151.5 L1094.1,151.3 L1094.3,151.2 L1094.6,151.1 L1094.8,151.0 L1095.0,150.9 L1095.3,150.7 L1095.5,150.6 L1095.8,150.5 L1096.0,150.4 L1096.3,150.3 L1096.5,150.2 L1096.7,150.1 L1097.0,150.0 L1097.2,149.8 L1097.5,149.7 L1097.8,149.6 L1098.0,149.5 L1098.3,149.4 L1098.5,149.3 L1098.8,149.2 L1099.1,149.1 L1099.3,149.0 L1099.6,148.9 L1099.8,148.8 L1100.1,148.7 L1100.4,148.6 L1100.7,148.5 L1100.9,148.4 L1101.2,148.4 L1101.5,148.3 L1101.8,148.2 L1102.0,148.1 L1102.3,148.0 L1102.6,147.9 L1102.9,147.8 L1103.2,147.7 L1103.4,147.7 L1103.7,147.6 L1104.0,147.5 L1104.3,147.4 L1104.6,147.3 L1104.9,147.3 L1105.2,147.2 L1105.5,147.1 L1105.8,147.0 L1106.1,147.0 L1106.4,146.9 L1106.7,146.8 L1107.0,146.8 L1107.3,146.7 L1107.6,146.6 L1107.9,146.6 L1108.3,146.5 L1108.6,146.4 L1108.9,146.4 L1109.2,146.3 L1109.5,146.3 L1109.9,146.2 L1110.2,146.2 L1110.5,146.1 L1110.8,146.0 L1111.2,146.0 L1111.5,145.9 L1111.8,145.9 L1112.2,145.8 L1112.5,145.8 L1112.8,145.7 L1113.2,145.7 L1113.5,145.7 L1113.9,145.6 L1114.2,145.6 L1114.6,145.5 L1114.9,145.5 L1115.3,145.5 L1115.6,145.4 L1116.0,145.4 L1116.3,145.4 L1116.7,145.3 L1117.1,145.3 L1117.4,145.3 L1117.8,145.2 L1118.2,145.2 L1118.5,145.2 L1118.9,145.1 L1119.3,145.1 L1119.6,145.1 L1120.0,145.1 L1120.4,145.1 L1120.8,145.0 L1121.2,145.0 L1121.5,145.0 L1121.9,145.0 L1122.3,145.0 L1122.7,145.0 L1123.1,145.0 L1123.5,144.9 L1123.9,144.9 L1124.3,144.9 L1124.7,144.9 L1125.1,144.9 L1125.5,144.9 L1125.9,144.9 L1126.3,144.9 L1126.7,144.9 L1127.2,144.9 L1127.6,144.9 L1128.0,144.9 L1128.4,144.9 L1128.8,144.9 L1129.3,144.9 L1129.7,144.9 L1130.1,144.9 L1130.5,145.0 L1131.0,145.0 L1131.4,145.0 L1131.8,145.0 L1132.3,145.0 L1132.7,145.0 L1133.2,145.0 L1133.6,145.1 L1134.1,145.1 L1134.5,145.1 L1135.0,145.1 L1135.4,145.2 L1135.9,145.2 L1136.3,145.2 L1136.8,145.2 L1137.2,145.3 L1137.7,145.3 L1138.2,145.3 L1138.6,145.4 L1139.1,145.4 L1139.6,145.4 L1140.1,145.5 L1140.5,145.5 L1141.0,145.5 L1141.5,145.6 L1142.0,145.6 L1142.5,145.7 L1142.9,145.7 L1143.4,145.8 L1143.9,145.8 L1144.4,145.9 L1144.9,145.9 L1145.4,146.0 L1145.9,146.0 L1146.4,146.1 L1146.9,146.1 L1147.4,146.2 L1147.9,146.2 L1148.4,146.3 L1149.0,146.3 L1149.5,146.4 L1150.0,146.5 L1150.5,146.5 L1151.0,146.6 L1151.6,146.7 L1152.1,146.7 L1152.6,146.8 L1153.1,146.9 L1153.7,146.9 L1154.2,147.0 L1154.7,147.1 L1155.3,147.1 L1155.8,147.2 L1156.4,147.3 L1156.9,147.4 L1157.5,147.4 L1158.0,147.5 L1158.6,147.6 L1159.1,147.7 L1159.7,147.8 L1160.2,147.9 L1160.8,147.9 L1161.3,148.0 L1161.9,148.1 L1162.5,148.2 L1163.0,148.3 L1163.6,148.4 L1164.2,148.5 L1164.7,148.6 L1165.3,148.7 L1165.9,148.8 L1166.5,148.9 L1167.1,148.9 L1167.6,149.0 L1168.2,149.1 L1168.8,149.2 L1169.4,149.4 L1170.0,149.5 L1170.6,149.6 L1171.2,149.7 L1171.8,149.8 L1172.4,149.9 L1173.0,150.0 L1173.6,150.1 L1174.2,150.2 L1174.8,150.3 L1175.4,150.4 L1176.0,150.5 L1176.6,150.7 L1177.2,150.8 L1177.9,150.9 L1178.5,151.0 L1179.1,151.1 L1179.7,151.3 L1180.3,151.4 L1181.0,151.5 L1181.6,151.6 L1182.2,151.7 L1182.9,151.9 L1183.5,152.0"/>
<path stroke="#2ab07f" d="M856.5,160.5 L856.9,159.7 L857.3,158.9 L857.7,158.2 L858.1,157.4 L858.5,156.6 L858.9,155.8 L859.3,155.0 L859.8,154.2 L860.2,153.5 L860.6,152.7 L861.0,151.9 L861.4,151.1 L861.8,150.3 L862.2,149.6 L862.6,148.8 L863.1,148.0 L863.5,147.2 L863.9,146.4 L864.3,145.7 L864.7,144.9 L865.1,144.1 L865.6,143.3 L866.0,142.6 L866.4,141.8 L866.8,141.0 L867.2,140.2 L867.7,139.5 L868.1,138.7 L868.5,137.9 L868.9,137.1 L869.3,136.4 L869.8,135.6 L870.2,134.8 L870.6,134.0 L871.0,133.3 L871.5,132.5 L871.9,131.7 L872.3,131.0 L872.7,130.2 L873.2,129.4 L873.6,128.6 L874.0,127.9 L874.5,127.1 L874.9,126.3 L875.3,125.6 L875.7,124.8 L876.2,124.0 L876.6,123.3 L877.0,122.5 L877.5,121.7 L877.9,121.0 L878.3,120.2 L878.8,119.4 L879.2,118.7 L879.6,117.9 L880.0,117.2 L880.5,116.4 L880.9,115.6 L881.3,114.9 L881.8,114.1 L882.2,113.4 L882.6,112.6 L883.1,111.8 L883.5,111.1 L883.9,110.3 L884.4,109.6 L884.8,108.8 L885.2,108.1 L885.7,107.3 L886.1,106.6 L886.5,105.8 L887.0,105.1 L887.4,104.3 L887.8,103.6 L888.3,102.8 L888.7,102.1 L889.1,101.4 L889.6,100.6 L890.0,99.9 L890.4,99.1 L890.9,98.4 L891.3,97.7 L891.7,96.9 L892.2,96.2 L892.6,95.5 L893.0,94.7 L893.5,94.0 L893.9,93.3 L894.3,92.5 L894.8,91.8 L895.2,91.1 L895.6,90.4 L896.1,89.7 L896.5,89.0 L896.9,88.2 L897.4,87.5 L897.8,86.8 L898.2,86.1 L898.7,85.4 L899.1,84.7 L899.5,84.0 L900.0,83.3 L900.4,82.6 L900.8,81.9 L901.3,81.2 L901.7,80.6 L902.1,79.9 L902.6,79.2 L903.0,78.5 L903.4,77.9 L903.9,77.2 L904.3,76.5 L904.7,75.9 L905.2,75.2 L905.6,74.6 L906.0,73.9 L906.5,73.3 L906.9,72.6 L907.3,72.0 L907.8,71.4 L908.2,70.8 L908.6,70.2 L909.1,69.5 L909.5,68.9 L909.9,68.4 L910.4,67.8 L910.8,67.2 L911.3,66.6 L911.7,66.1 L912.2,65.5 L912.6,65.0 L913.1,64.4 L913.5,63.9 L914.0,63.4 L914.4,62.9 L914.9,62.4 L915.4,61.9 L915.8,61.4 L916.3,61.0 L916.8,60.5 L917.3,60.1 L917.8,59.7 L918.3,59.3 L918.8,58.9 L919.3,58.5 L919.8,58.1 L920.3,57.8 L920.9,57.5 L921.4,57.2 L922.0,56.9 L922.6,56.6 L923.2,56.4 L923.8,56.1 L924.4,55.9 L925.0,55.7 L925.7,55.6 L926.3,55.4 L927.0,55.3 L927.7,55.2 L928.5,55.1 L929.2,55.0 L930.0,55.0 L930.8,55.0 L931.6,55.0 L932.4,55.0 L933.3,55.1 L934.2,55.2 L935.1,55.3 L936.0,55.4 L937.0,55.6 L938.0,55.7 L939.0,55.9 L940.0,56.1 L941.1,56.4 L942.2,56.6 L943.3,56.9 L944.5,57.2 L945.6,57.5 L946.8,57.8 L948.0,58.2 L949.3,58.5 L950.6,58.9 L951.8,59.3 L953.2,59.7 L954.5,60.1 L955.8,60.5 L957.2,61.0 L958.6,61.4 L960.0,61.9 L961.5,62.4 L962.9,62.9 L964.4,63.4 L965.9,63.9 L967.4,64.4 L968.9,65.0 L970.5,65.5 L972.0,66.1 L973.6,66.7 L975.2,67.2 L976.7,67.8 L978.3,68.4 L980.0,69.0 L981.6,69.6 L983.2,70.2 L984.9,70.8 L986.5,71.4 L988.2,72.0 L989.9,72.7 L991.6,73.3 L993.3,73.9 L995.0,74.6 L996.7,75.2 L998.4,75.9 L1000.1,76.6 L1001.9,77.2 L1003.6,77.9 L1005.4,78.6 L1007.1,79.2 L1008.9,79.9 L1010.6,80.6 L1012.4,81.3 L1014.2,82.0 L1016.0,82.7 L1017.7,83.3 L1019.5,84.0 L1021.3,84.7 L1023.1,85.4 L1024.9,86.2 L1026.7,86.9 L1028.5,87.6 L1030.3,88.3 L1032.1,89.0 L1033.9,89.7 L1035.7,90.4 L1037.5,91.1 L1039.4,91.9 L1041.2,92.6 L1043.0,93.3 L1044.8,94.0 L1046.6,94.8 L1048.5,95.5 L1050.3,96.2 L1052.1,97.0 L1053.9,97.7 L1055.8,98.4 L1057.6,99.2 L1059.4,99.9 L1061.2,100.7 L1063.1,101.4 L1064.9,102.1 L1066.7,102.9 L1068.5,103.6 L1070.4,104.4 L1072.2,105.1 L1074.0,105.9 L1075.8,106.6 L1077.7,107.4 L1079.5,108.1 L1081.3,108.9 L1083.1,109.6 L1084.9,110.4 L1086.8,111.1 L1088.6,111.9 L1090.4,112.6 L1092.2,113.4 L1094.0,114.2 L1095.8,114.9 L1097.6,115.7 L1099.4,116.4 L1101.3,117.2 L1103.1,118.0 L1104.9,118.7 L1106.7,119.5 L1108.5,120.2 L1110.2,121.0 L1112.0,121.8 L1113.8,122.5 L1115.6,123.3 L1117.4,124.1 L1119.2,124.8 L1121.0,125.6 L1122.7,126.4 L1124.5,127.1 L1126.3,127.9 L1128.1,128.7 L1129.8,129.5 L1131.6,130.2 L1133.3,131.0 L1135.1,131.8 L1136.9,132.5 L1138.6,133.3 L1140.4,134.1 L1142.1,134.9 L1143.8,135.6 L1145.6,136.4 L1147.3,137.2 L1149.0,137.9 L1150.8,138.7 L1152.5,139.5"/>
<path stroke="#2ab07f" d="M845.0,166.5 L845.5,165.7 L846.1,164.8 L846.6,164.0 L847.2,163.1 L847.7,162.3 L848.3,161.4 L848.8,160.6 L849.4,159.7 L850.0,158.9 L850.5,158.0 L851.1,157.2 L851.6,156.3 L852.2,155.5 L852.7,154.6 L853.3,153.8 L853.9,153.0 L854.4,152.1 L855.0,151.3 L855.5,150.4 L856.1,149.6 L856.7,148.8 L857.2,147.9 L857.8,147.1 L858.4,146.2 L858.9,145.4 L859.5,144.6 L860.1,143.7 L860.6,142.9 L861.2,142.1 L861.8,141.2 L862.3,140.4 L862.9,139.6 L863.5,138.7 L864.1,137.9 L864.6,137.1 L865.2,136.2 L865.8,135.4 L866.4,134.6 L866.9,133.8 L867.5,132.9 L868.1,132.1 L868.7,131.3 L869.2,130.5 L869.8,129.6 L870.4,128.8 L871.0,128.0 L871.5,127.2 L872.1,126.4 L872.7,125.5 L873.3,124.7 L873.9,123.9 L874.4,123.1 L875.0,122.3 L875.6,121.5 L876.2,120.7 L876.8,119.9 L877.3,119.1 L877.9,118.3 L878.5,117.4 L879.1,116.6 L879.7,115.8 L880.2,115.0 L880.8,114.3 L881.4,113.5 L882.0,112.7 L882.6,111.9 L883.1,111.1 L883.7,110.3 L884.3,109.5 L884.9,108.7 L885.5,107.9 L886.0,107.2 L886.6,106.4 L887.2,105.6 L887.8,104.8 L888.3,104.1 L888.9,103.3 L889.5,102.5 L890.1,101.8 L890.7,101.0 L891.2,100.3 L891.8,99.5 L892.4,98.7 L893.0,98.0 L893.5,97.3 L894.1,96.5 L894.7,95.8 L895.3,95.0 L895.9,94.3 L896.4,93.6 L897.0,92.8 L897.6,92.1 L898.2,91.4 L898.7,90.7 L899.3,90.0 L899.9,89.3 L900.5,88.6 L901.0,87.9 L901.6,87.2 L902.2,86.5 L902.8,85.8 L903.3,85.2 L903.9,84.5 L904.5,83.8 L905.0,83.2 L905.6,82.5 L906.2,81.9 L906.8,81.3 L907.3,80.6 L907.9,80.0 L908.5,79.4 L909.1,78.8 L909.7,78.2 L910.2,77.6 L910.8,77.0 L911.4,76.4 L912.0,75.9 L912.6,75.3 L913.2,74.8 L913.8,74.3 L914.3,73.7 L914.9,73.2 L915.5,72.7 L916.1,72.2 L916.7,71.8 L917.4,71.3 L918.0,70.8 L918.6,70.4 L919.2,70.0 L919.8,69.6 L920.5,69.2 L921.1,68.8 L921.8,68.4 L922.4,68.1 L923.1,67.8 L923.7,67.4 L924.4,67.2 L925.1,66.9 L925.8,66.6 L926.5,66.4 L927.2,66.1 L928.0,65.9 L928.7,65.7 L929.5,65.6 L930.2,65.4 L931.0,65.3 L931.8,65.2 L932.6,65.1 L933.5,65.0 L934.3,65.0 L935.2,64.9 L936.1,64.9 L937.0,65.0 L937.9,65.0 L938.8,65.0 L939.8,65.1 L940.7,65.2 L941.7,65.3 L942.8,65.5 L943.8,65.6 L944.9,65.8 L945.9,66.0 L947.0,66.2 L948.2,66.4 L949.3,66.7 L950.5,66.9 L951.6,67.2 L952.8,67.5 L954.1,67.9 L955.3,68.2 L956.6,68.5 L957.9,68.9 L959.2,69.3 L960.5,69.7 L961.8,70.1 L963.2,70.5 L964.6,71.0 L966.0,71.4 L967.4,71.9 L968.8,72.4 L970.3,72.9 L971.7,73.4 L973.2,73.9 L974.7,74.4 L976.2,74.9 L977.8,75.5 L979.3,76.0 L980.9,76.6 L982.4,77.2 L984.0,77.8 L985.6,78.4 L987.2,79.0 L988.8,79.6 L990.5,80.2 L992.1,80.8 L993.8,81.4 L995.4,82.1 L997.1,82.7 L998.8,83.4 L1000.5,84.0 L1002.2,84.7 L1003.9,85.4 L1005.6,86.0 L1007.3,86.7 L1009.1,87.4 L1010.8,88.1 L1012.6,88.8 L1014.3,89.5 L1016.1,90.2 L1017.8,90.9 L1019.6,91.6 L1021.4,92.3 L1023.2,93.1 L1025.0,93.8 L1026.7,94.5 L1028.5,95.2 L1030.3,96.0 L1032.2,96.7 L1034.0,97.5 L1035.8,98.2 L1037.6,99.0 L1039.4,99.7 L1041.2,100.5 L1043.1,101.2 L1044.9,102.0 L1046.7,102.8 L1048.6,103.5 L1050.4,104.3 L1052.2,105.1 L1054.1,105.8 L1055.9,106.6 L1057.7,107.4 L1059.6,108.2 L1061.4,109.0 L1063.3,109.7 L1065.1,110.5 L1067.0,111.3 L1068.8,112.1 L1070.7,112.9 L1072.5,113.7 L1074.3,114.5 L1076.2,115.3 L1078.0,116.1 L1079.9,116.9 L1081.7,117.7 L1083.6,118.5 L1085.4,119.3 L1087.3,120.1 L1089.1,120.9 L1091.0,121.7 L1092.8,122.5 L1094.6,123.3 L1096.5,124.1 L1098.3,125.0 L1100.1,125.8 L1102.0,126.6 L1103.8,127.4 L1105.6,128.2 L1107.5,129.1 L1109.3,129.9 L1111.1,130.7 L1112.9,131.5 L1114.7,132.3 L1116.6,133.2 L1118.4,134.0 L1120.2,134.8 L1122.0,135.6 L1123.8,136.5 L1125.6,137.3 L1127.4,138.1 L1129.2,139.0 L1131.0,139.8 L1132.8,140.6 L1134.6,141.5 L1136.4,142.3 L1138.1,143.1 L1139.9,144.0 L1141.7,144.8 L1143.5,145.6 L1145.2,146.5 L1147.0,147.3 L1148.7,148.2 L1150.5,149.0 L1152.3,149.8 L1154.0,150.7 L1155.7,151.5 L1157.5,152.4 L1159.2,153.2 L1160.9,154.0 L1162.7,154.9 L1164.4,155.7 L1166.1,156.6 L1167.8,157.4 L1169.5,158.3 L1171.2,159.1 L1172.9,160.0 L1174.6,160.8 L1176.3,161.7 L1178.0,162.5"/>
<path stroke="#5a5a5a" stroke-width="1.1" stroke-dasharray="1.2 2.2" d="M856.5,139.5 L855.2,139.0 L853.9,138.5 L852.6,138.0 L851.2,137.6 L849.9,137.2 L848.5,136.7 L847.2,136.3 L845.8,136.0 L844.5,135.6 L843.1,135.3 L841.7,134.9 L840.3,134.6 L838.9,134.4 L837.5,134.1 L836.0,133.9 L834.6,133.7 L833.2,133.5 L831.7,133.3 L830.2,133.1 L828.7,133.0 L827.2,132.9 L825.7,132.8 L824.2,132.7 L822.7,132.6 L821.1,132.6 L819.5,132.6 L817.9,132.6 L816.3,132.6 L814.7,132.7 L813.1,132.8 L811.5,132.9 L809.8,133.0 L808.1,133.1 L806.4,133.3 L804.7,133.5 L803.0,133.6 L801.2,133.9 L799.5,134.1 L797.7,134.4 L795.9,134.6 L794.1,134.9 L792.3,135.3 L790.4,135.6 L788.6,136.0 L786.7,136.3 L784.8,136.7 L782.9,137.1 L780.9,137.6 L779.0,138.0 L777.0,138.5 L775.0,139.0 L773.0,139.5 L771.0,140.0 L769.0,140.6 L766.9,141.1 L764.9,141.7 L762.8,142.3 L760.7,142.9 L758.6,143.5 L756.4,144.1 L754.3,144.8 L752.1,145.5 L750.0,146.1 L747.8,146.8 L745.6,147.6 L743.4,148.3 L741.1,149.0 L738.9,149.8 L736.7,150.5 L734.4,151.3 L732.1,152.1 L729.8,152.9 L727.5,153.7 L725.2,154.6 L722.9,155.4 L720.6,156.3 L718.2,157.1 L715.9,158.0 L713.5,158.9 L711.2,159.8 L708.8,160.7 L706.4,161.6 L704.0,162.5 L701.6,163.5 L699.2,164.4 L696.8,165.4 L694.4,166.3 L692.0,167.3 L689.6,168.3 L687.2,169.3 L684.7,170.3 L682.3,171.3 L679.9,172.3 L677.4,173.3 L675.0,174.4 L672.5,175.4 L670.1,176.5 L667.7,177.5 L665.2,178.6 L662.8,179.6 L660.3,180.7 L657.9,181.8 L655.4,182.9 L653.0,184.0 L650.5,185.1 L648.1,186.2 L645.6,187.3 L643.2,188.4 L640.7,189.6 L638.3,190.7 L635.9,191.8 L633.5,193.0 L631.0,194.1 L628.6,195.3 L626.2,196.4 L623.8,197.6 L621.4,198.7 L619.0,199.9 L616.6,201.1 L614.2,202.3 L611.8,203.4 L609.4,204.6 L607.1,205.8 L604.7,207.0 L602.4,208.2 L600.0,209.4 L597.7,210.6 L595.4,211.8 L593.1,213.1 L590.8,214.3 L588.5,215.5 L586.2,216.7 L583.9,218.0 L581.6,219.2 L579.4,220.4 L577.1,221.7 L574.9,222.9 L572.7,224.1 L570.5,225.4 L568.3,226.6 L566.1,227.9 L563.9,229.1 L561.8,230.4 L559.6,231.7 L557.5,232.9 L555.4,234.2 L553.2,235.5 L551.2,236.7 L549.1,238.0 L547.0,239.3 L545.0,240.6 L542.9,241.8 L540.9,243.1 L538.9,244.4 L536.9,245.7 L534.9,247.0 L533.0,248.3 L531.1,249.5 L529.1,250.8 L527.2,252.1 L525.3,253.4 L523.5,254.7 L521.6,256.0 L519.8,257.3 L517.9,258.6 L516.1,259.9 L514.3,261.2 L512.6,262.5 L510.8,263.8 L509.1,265.1 L507.4,266.5 L505.7,267.8 L504.0,269.1 L502.4,270.4 L500.7,271.7 L499.1,273.0 L497.5,274.3 L495.9,275.7 L494.4,277.0 L492.8,278.3 L491.3,279.6 L489.8,280.9 L488.3,282.3 L486.9,283.6 L485.4,284.9 L484.0,286.2 L482.6,287.6 L481.2,288.9 L479.9,290.2 L478.6,291.5 L477.2,292.9 L476.0,294.2 L474.7,295.5 L473.4,296.9 L472.2,298.2 L471.0,299.5 L469.8,300.8 L468.7,302.2 L467.5,303.5 L466.4,304.8 L465.3,306.2 L464.2,307.5 L463.2,308.8 L462.2,310.2 L461.2,311.5 L460.2,312.8 L459.2,314.2 L458.3,315.5 L457.4,316.8 L456.5,318.2 L455.6,319.5 L454.8,320.8 L453.9,322.2 L453.1,323.5 L452.4,324.8 L451.6,326.2 L450.9,327.5 L450.2,328.8 L449.5,330.2 L448.8,331.5 L448.2,332.9 L447.5,334.2 L447.0,335.5 L446.4,336.8 L445.8,338.2 L445.3,339.5 L444.8,340.8 L444.3,342.2 L443.9,343.5 L443.4,344.8 L443.0,346.2 L442.7,347.5 L442.3,348.8 L442.0,350.1 L441.6,351.5 L441.3,352.8 L441.1,354.1 L440.8,355.5 L440.6,356.8 L440.4,358.1 L440.2,359.4 L440.1,360.7 L439.9,362.1 L439.8,363.4 L439.7,364.7 L439.7,366.0 L439.6,367.3 L439.6,368.7 L439.6,370.0 L439.6,371.3 L439.7,372.6 L439.7,373.9 L439.8,375.2 L439.9,376.5 L440.1,377.8 L440.2,379.1 L440.4,380.4 L440.6,381.7 L440.8,383.0 L441.1,384.3 L441.3,385.6 L441.6,386.9 L441.9,388.2 L442.2,389.5 L442.6,390.8 L442.9,392.1 L443.3,393.4 L443.7,394.7 L444.1,396.0 L444.6,397.3 L445.0,398.5 L445.5,399.8 L446.0,401.1 L446.6,402.4 L447.1,403.6 L447.6,404.9 L448.2,406.2 L448.8,407.4 L449.4,408.7 L450.1,410.0 L450.7,411.2 L451.4,412.5 L452.0,413.7 L452.7,415.0 L453.5,416.2 L454.2,417.5 L454.9,418.7 L455.7,420.0 L456.5,421.2 L457.3,422.4 L458.1,423.6 L458.9,424.9 L459.7,426.1 L460.6,427.3 L461.4,428.5 L462.3,429.7 L463.2,431.0 L464.1,432.2 L465.0,433.4"/>
<path stroke="#5a5a5a" stroke-width="1.1" stroke-dasharray="1.2 2.2" d="M988.3,170.0 L987.1,170.3 L986.0,170.7 L984.8,171.1 L983.6,171.4 L982.5,171.8 L981.3,172.2 L980.2,172.6 L979.0,173.0 L977.9,173.4 L976.7,173.9 L975.6,174.3 L974.4,174.7 L973.3,175.2 L972.2,175.7 L971.1,176.1 L969.9,176.6 L968.8,177.1 L967.7,177.6 L966.6,178.1 L965.5,178.6 L964.4,179.2 L963.2,179.7 L962.1,180.2 L961.0,180.8 L959.9,181.3 L958.8,181.9 L957.7,182.5 L956.6,183.1 L955.5,183.6 L954.4,184.2 L953.3,184.8 L952.2,185.5 L951.2,186.1 L950.1,186.7 L949.0,187.3 L947.9,188.0 L946.8,188.6 L945.7,189.3 L944.6,189.9 L943.5,190.6 L942.5,191.3 L941.4,191.9 L940.3,192.6 L939.2,193.3 L938.1,194.0 L937.0,194.7 L936.0,195.4 L934.9,196.2 L933.8,196.9 L932.7,197.6 L931.6,198.3 L930.5,199.1 L929.5,199.8 L928.4,200.6 L927.3,201.3 L926.2,202.1 L925.1,202.9 L924.1,203.6 L923.0,204.4 L921.9,205.2 L920.8,206.0 L919.7,206.8 L918.7,207.6 L917.6,208.4 L916.5,209.2 L915.4,210.0 L914.3,210.8 L913.3,211.6 L912.2,212.4 L911.1,213.3 L910.0,214.1 L908.9,214.9 L907.9,215.8 L906.8,216.6 L905.7,217.5 L904.6,218.3 L903.5,219.2 L902.5,220.0 L901.4,220.9 L900.3,221.8 L899.2,222.6 L898.1,223.5 L897.1,224.4 L896.0,225.3 L894.9,226.2 L893.8,227.0 L892.7,227.9 L891.7,228.8 L890.6,229.7 L889.5,230.6 L888.4,231.5 L887.4,232.4 L886.3,233.3 L885.2,234.3 L884.1,235.2 L883.0,236.1 L882.0,237.0 L880.9,237.9 L879.8,238.9 L878.7,239.8 L877.7,240.7 L876.6,241.7 L875.5,242.6 L874.4,243.5 L873.4,244.5 L872.3,245.4 L871.2,246.4 L870.1,247.3 L869.1,248.3 L868.0,249.2 L866.9,250.2 L865.9,251.1 L864.8,252.1 L863.7,253.1 L862.7,254.0 L861.6,255.0 L860.5,256.0 L859.5,256.9 L858.4,257.9 L857.3,258.9 L856.3,259.9 L855.2,260.8 L854.2,261.8 L853.1,262.8 L852.0,263.8 L851.0,264.8 L849.9,265.7 L848.9,266.7 L847.8,267.7 L846.8,268.7 L845.7,269.7 L844.7,270.7 L843.6,271.7 L842.6,272.7 L841.6,273.7 L840.5,274.7 L839.5,275.7 L838.4,276.7 L837.4,277.7 L836.4,278.7 L835.3,279.7 L834.3,280.7 L833.3,281.7 L832.3,282.7 L831.2,283.7 L830.2,284.7 L829.2,285.7 L828.2,286.7 L827.2,287.7 L826.1,288.7 L825.1,289.8 L824.1,290.8 L823.1,291.8 L822.1,292.8 L821.1,293.8 L820.1,294.8 L819.1,295.8 L818.1,296.9 L817.1,297.9 L816.1,298.9 L815.2,299.9 L814.2,300.9 L813.2,302.0 L812.2,303.0 L811.2,304.0 L810.3,305.0 L809.3,306.0 L808.3,307.1 L807.3,308.1 L806.4,309.1 L805.4,310.1 L804.5,311.2 L803.5,312.2 L802.6,313.2 L801.6,314.2 L800.7,315.3 L799.7,316.3 L798.8,317.3 L797.9,318.3 L796.9,319.4 L796.0,320.4 L795.1,321.4 L794.1,322.4 L793.2,323.4 L792.3,324.5 L791.4,325.5 L790.5,326.5 L789.6,327.5 L788.7,328.6 L787.8,329.6 L786.9,330.6 L786.0,331.6 L785.1,332.7 L784.2,333.7 L783.3,334.7 L782.4,335.7 L781.6,336.8 L780.7,337.8 L779.8,338.8 L779.0,339.8 L778.1,340.8 L777.2,341.9 L776.4,342.9 L775.5,343.9 L774.7,344.9 L773.9,345.9 L773.0,346.9 L772.2,348.0 L771.3,349.0 L770.5,350.0 L769.7,351.0 L768.9,352.0 L768.1,353.0 L767.3,354.0 L766.4,355.0 L765.6,356.0 L764.8,357.1 L764.0,358.1 L763.2,359.1 L762.5,360.1 L761.7,361.1 L760.9,362.1 L760.1,363.1 L759.3,364.1 L758.6,365.1 L757.8,366.1 L757.0,367.1 L756.3,368.1 L755.5,369.1 L754.8,370.1 L754.0,371.1 L753.3,372.0 L752.6,373.0 L751.8,374.0 L751.1,375.0 L750.4,376.0 L749.6,377.0 L748.9,378.0 L748.2,378.9 L747.5,379.9 L746.8,380.9 L746.1,381.9 L745.4,382.8 L744.7,383.8 L744.0,384.8 L743.3,385.7 L742.6,386.7 L741.9,387.7 L741.3,388.6 L740.6,389.6 L739.9,390.6 L739.2,391.5 L738.6,392.5 L737.9,393.4 L737.3,394.4 L736.6,395.3 L736.0,396.3 L735.3,397.2 L734.7,398.1 L734.0,399.1 L733.4,400.0 L732.8,400.9 L732.1,401.9 L731.5,402.8 L730.9,403.7 L730.3,404.6 L729.6,405.6 L729.0,406.5 L728.4,407.4 L727.8,408.3 L727.2,409.2 L726.6,410.1 L726.0,411.0 L725.4,411.9 L724.8,412.8 L724.2,413.7 L723.6,414.6 L723.0,415.5 L722.4,416.3 L721.8,417.2 L721.2,418.1 L720.7,419.0 L720.1,419.8 L719.5,420.7 L718.9,421.6 L718.4,422.4 L717.8,423.3 L717.2,424.1 L716.6,425.0 L716.1,425.8 L715.5,426.6 L714.9,427.5 L714.4,428.3 L713.8,429.1 L713.2,429.9 L712.7,430.7 L712.1,431.6 L711.5,432.4 L711.0,433.2"/>
<path stroke="#5a5a5a" stroke-width="1.1" stroke-dasharray="1.2 2.2" d="M1063.3,142.5 L1061.4,142.1 L1059.6,141.8 L1057.7,141.4 L1055.9,141.1 L1054.1,140.8 L1052.3,140.5 L1050.6,140.2 L1048.8,139.9 L1047.1,139.7 L1045.4,139.4 L1043.7,139.2 L1042.0,139.0 L1040.3,138.8 L1038.7,138.7 L1037.1,138.5 L1035.5,138.4 L1033.9,138.3 L1032.3,138.2 L1030.8,138.1 L1029.2,138.0 L1027.7,138.0 L1026.2,137.9 L1024.8,137.9 L1023.3,137.9 L1021.8,137.9 L1020.4,138.0 L1019.0,138.0 L1017.6,138.1 L1016.2,138.2 L1014.8,138.3 L1013.5,138.4 L1012.1,138.6 L1010.8,138.7 L1009.5,138.9 L1008.2,139.1 L1006.9,139.3 L1005.7,139.5 L1004.4,139.8 L1003.1,140.0 L1001.9,140.3 L1000.7,140.6 L999.5,140.9 L998.3,141.2 L997.1,141.5 L995.9,141.9 L994.8,142.2 L993.6,142.6 L992.5,143.0 L991.3,143.4 L990.2,143.9 L989.1,144.3 L988.0,144.8 L986.9,145.2 L985.8,145.7 L984.7,146.2 L983.6,146.7 L982.6,147.3 L981.5,147.8 L980.5,148.3 L979.4,148.9 L978.4,149.5 L977.3,150.1 L976.3,150.7 L975.3,151.3 L974.3,151.9 L973.3,152.6 L972.3,153.2 L971.2,153.9 L970.2,154.6 L969.3,155.2 L968.3,155.9 L967.3,156.6 L966.3,157.4 L965.3,158.1 L964.3,158.8 L963.4,159.6 L962.4,160.3 L961.4,161.1 L960.4,161.9 L959.5,162.7 L958.5,163.5 L957.6,164.3 L956.6,165.1 L955.6,165.9 L954.7,166.8 L953.7,167.6 L952.8,168.4 L951.8,169.3 L950.9,170.2 L949.9,171.0 L949.0,171.9 L948.0,172.8 L947.1,173.7 L946.1,174.6 L945.2,175.5 L944.3,176.4 L943.3,177.4 L942.4,178.3 L941.4,179.2 L940.5,180.2 L939.5,181.1 L938.6,182.1 L937.6,183.0 L936.7,184.0 L935.8,185.0 L934.8,186.0 L933.9,187.0 L932.9,187.9 L932.0,188.9 L931.0,189.9 L930.1,190.9 L929.2,192.0 L928.2,193.0 L927.3,194.0 L926.3,195.0 L925.4,196.1 L924.4,197.1 L923.5,198.1 L922.6,199.2 L921.6,200.2 L920.7,201.3 L919.7,202.3 L918.8,203.4 L917.8,204.5 L916.9,205.5 L915.9,206.6 L915.0,207.7 L914.0,208.8 L913.1,209.9 L912.1,210.9 L911.2,212.0 L910.2,213.1 L909.3,214.2 L908.3,215.3 L907.4,216.4 L906.5,217.5 L905.5,218.7 L904.6,219.8 L903.6,220.9 L902.7,222.0 L901.7,223.1 L900.8,224.3 L899.8,225.4 L898.9,226.5 L897.9,227.6 L897.0,228.8 L896.0,229.9 L895.1,231.1 L894.1,232.2 L893.2,233.4 L892.2,234.5 L891.3,235.7 L890.3,236.8 L889.4,238.0 L888.4,239.1 L887.5,240.3 L886.5,241.4 L885.6,242.6 L884.7,243.8 L883.7,244.9 L882.8,246.1 L881.8,247.3 L880.9,248.4 L879.9,249.6 L879.0,250.8 L878.1,252.0 L877.1,253.1 L876.2,254.3 L875.3,255.5 L874.3,256.7 L873.4,257.9 L872.4,259.1 L871.5,260.2 L870.6,261.4 L869.7,262.6 L868.7,263.8 L867.8,265.0 L866.9,266.2 L866.0,267.4 L865.0,268.6 L864.1,269.8 L863.2,271.0 L862.3,272.2 L861.4,273.4 L860.4,274.6 L859.5,275.8 L858.6,277.0 L857.7,278.2 L856.8,279.4 L855.9,280.6 L855.0,281.8 L854.1,283.0 L853.2,284.2 L852.3,285.4 L851.4,286.7 L850.5,287.9 L849.6,289.1 L848.7,290.3 L847.8,291.5 L846.9,292.7 L846.1,293.9 L845.2,295.1 L844.3,296.4 L843.4,297.6 L842.5,298.8 L841.7,300.0 L840.8,301.2 L839.9,302.4 L839.1,303.6 L838.2,304.9 L837.4,306.1 L836.5,307.3 L835.7,308.5 L834.8,309.7 L834.0,311.0 L833.1,312.2 L832.3,313.4 L831.4,314.6 L830.6,315.8 L829.8,317.0 L828.9,318.3 L828.1,319.5 L827.3,320.7 L826.5,321.9 L825.7,323.1 L824.9,324.4 L824.0,325.6 L823.2,326.8 L822.4,328.0 L821.6,329.2 L820.8,330.5 L820.1,331.7 L819.3,332.9 L818.5,334.1 L817.7,335.3 L816.9,336.5 L816.1,337.8 L815.4,339.0 L814.6,340.2 L813.8,341.4 L813.1,342.6 L812.3,343.8 L811.6,345.1 L810.8,346.3 L810.1,347.5 L809.3,348.7 L808.6,349.9 L807.9,351.1 L807.1,352.3 L806.4,353.5 L805.7,354.8 L805.0,356.0 L804.3,357.2 L803.6,358.4 L802.9,359.6 L802.2,360.8 L801.5,362.0 L800.8,363.2 L800.1,364.4 L799.4,365.6 L798.7,366.8 L798.0,368.0 L797.4,369.2 L796.7,370.4 L796.0,371.6 L795.4,372.8 L794.7,374.0 L794.1,375.2 L793.4,376.4 L792.8,377.6 L792.1,378.8 L791.5,380.0 L790.9,381.1 L790.3,382.3 L789.6,383.5 L789.0,384.7 L788.4,385.9 L787.8,387.1 L787.2,388.2 L786.6,389.4 L786.0,390.6 L785.4,391.8 L784.8,392.9 L784.2,394.1 L783.7,395.3 L783.1,396.4 L782.5,397.6 L781.9,398.8 L781.4,399.9 L780.8,401.1 L780.3,402.3 L779.7,403.4 L779.2,404.6 L778.6,405.7 L778.1,406.9 L777.6,408.0 L777.0,409.2 L776.5,410.3 L776.0,411.4"/>
<path stroke="#5a5a5a" stroke-width="1.1" stroke-dasharray="1.2 2.2" d="M955.8,93.3 L956.4,92.6 L957.0,91.9 L957.6,91.3 L958.2,90.6 L958.9,90.0 L959.5,89.4 L960.2,88.8 L960.9,88.3 L961.6,87.7 L962.4,87.2 L963.2,86.8 L963.9,86.3 L964.8,85.9 L965.6,85.5 L966.5,85.1 L967.4,84.7 L968.3,84.4 L969.3,84.1 L970.3,83.9 L971.3,83.6 L972.4,83.4 L973.5,83.2 L974.6,83.1 L975.8,83.0 L977.0,82.9 L978.2,82.8 L979.5,82.8 L980.9,82.8 L982.2,82.8 L983.7,82.9 L985.1,83.0 L986.6,83.1 L988.2,83.3 L989.8,83.5 L991.4,83.7 L993.1,83.9 L994.8,84.2 L996.6,84.5 L998.4,84.9 L1000.2,85.2 L1002.2,85.6 L1004.1,86.0 L1006.1,86.5 L1008.1,86.9 L1010.2,87.4 L1012.3,87.9 L1014.5,88.5 L1016.7,89.0 L1018.9,89.6 L1021.2,90.2 L1023.5,90.8 L1025.8,91.5 L1028.2,92.1 L1030.6,92.8 L1033.0,93.5 L1035.5,94.3 L1038.0,95.0 L1040.6,95.8 L1043.1,96.5 L1045.7,97.3 L1048.3,98.1 L1051.0,98.9 L1053.7,99.8 L1056.4,100.6 L1059.1,101.5 L1061.8,102.4 L1064.6,103.2 L1067.4,104.1 L1070.2,105.0 L1073.0,106.0 L1075.9,106.9 L1078.7,107.8 L1081.6,108.8 L1084.5,109.8 L1087.4,110.7 L1090.3,111.7 L1093.2,112.7 L1096.2,113.7 L1099.1,114.7 L1102.1,115.7 L1105.1,116.7 L1108.1,117.8 L1111.1,118.8 L1114.1,119.8 L1117.1,120.9 L1120.1,122.0 L1123.1,123.0 L1126.1,124.1 L1129.2,125.2 L1132.2,126.2 L1135.2,127.3 L1138.3,128.4 L1141.3,129.5 L1144.4,130.6 L1147.4,131.7 L1150.5,132.8 L1153.5,133.9 L1156.6,135.1 L1159.6,136.2 L1162.7,137.3 L1165.7,138.4 L1168.8,139.6 L1171.8,140.7 L1174.9,141.9 L1177.9,143.0 L1180.9,144.1 L1184.0,145.3 L1187.0,146.5 L1190.0,147.6 L1193.0,148.8 L1196.0,149.9 L1199.0,151.1 L1202.0,152.3 L1205.0,153.4 L1208.0,154.6 L1211.0,155.8 L1214.0,157.0 L1216.9,158.2 L1219.9,159.3 L1222.8,160.5 L1225.8,161.7 L1228.7,162.9 L1231.6,164.1 L1234.6,165.3 L1237.5,166.5 L1240.3,167.7 L1243.2,168.9 L1246.1,170.1 L1249.0,171.3 L1251.8,172.5 L1254.6,173.7 L1257.5,174.9 L1260.3,176.1 L1263.1,177.4 L1265.9,178.6 L1268.7,179.8 L1271.4,181.0 L1274.2,182.2 L1276.9,183.4 L1279.6,184.7 L1282.3,185.9 L1285.0,187.1 L1287.7,188.3 L1290.4,189.6 L1293.0,190.8 L1295.7,192.0 L1298.3,193.3 L1300.9,194.5 L1303.5,195.7 L1306.1,196.9 L1308.6,198.2 L1311.2,199.4 L1313.7,200.7 L1316.2,201.9 L1318.7,203.1 L1321.2,204.4 L1323.6,205.6 L1326.1,206.8 L1328.5,208.1 L1330.9,209.3 L1333.3,210.6 L1335.7,211.8 L1338.0,213.1 L1340.4,214.3 L1342.7,215.6 L1345.0,216.8 L1347.3,218.1 L1349.5,219.3 L1351.8,220.5 L1354.0,221.8 L1356.2,223.0 L1358.4,224.3 L1360.6,225.6 L1362.7,226.8 L1364.8,228.1 L1366.9,229.3 L1369.0,230.6 L1371.1,231.8 L1373.1,233.1 L1375.1,234.3 L1377.1,235.6 L1379.1,236.8 L1381.1,238.1 L1383.0,239.4 L1384.9,240.6 L1386.8,241.9 L1388.7,243.1 L1390.6,244.4 L1392.4,245.6 L1394.2,246.9 L1396.0,248.2 L1397.8,249.4 L1399.5,250.7 L1401.2,252.0 L1402.9,253.2 L1404.6,254.5 L1406.3,255.7 L1407.9,257.0 L1409.5,258.3 L1411.1,259.5 L1412.7,260.8 L1414.2,262.1 L1415.7,263.3 L1417.2,264.6 L1418.7,265.9 L1420.1,267.1 L1421.5,268.4 L1422.9,269.6 L1424.3,270.9 L1425.7,272.2 L1427.0,273.4 L1428.3,274.7 L1429.6,276.0 L1430.8,277.2 L1432.1,278.5 L1433.3,279.8 L1434.5,281.1 L1435.6,282.3 L1436.7,283.6 L1437.9,284.9 L1438.9,286.1 L1440.0,287.4 L1441.0,288.7 L1442.0,289.9 L1443.0,291.2 L1444.0,292.5 L1444.9,293.7 L1445.8,295.0 L1446.7,296.3 L1447.6,297.5 L1448.4,298.8 L1449.2,300.1 L1450.0,301.4 L1450.8,302.6 L1451.5,303.9 L1452.2,305.2 L1452.9,306.4 L1453.5,307.7 L1454.2,309.0 L1454.8,310.2 L1455.4,311.5 L1455.9,312.8 L1456.5,314.1 L1457.0,315.3 L1457.4,316.6 L1457.9,317.9 L1458.3,319.1 L1458.7,320.4 L1459.1,321.7 L1459.4,323.0 L1459.8,324.2 L1460.1,325.5 L1460.3,326.8 L1460.6,328.0 L1460.8,329.3 L1461.0,330.6 L1461.2,331.8 L1461.3,333.1 L1461.4,334.4 L1461.5,335.7 L1461.6,336.9 L1461.6,338.2 L1461.6,339.5 L1461.6,340.7 L1461.6,342.0 L1461.5,343.3 L1461.4,344.5 L1461.3,345.8 L1461.2,347.1 L1461.0,348.4 L1460.8,349.6 L1460.6,350.9 L1460.3,352.2 L1460.1,353.4 L1459.8,354.7 L1459.4,356.0 L1459.1,357.2 L1458.7,358.5 L1458.3,359.8 L1457.9,361.0 L1457.5,362.3 L1457.0,363.6 L1456.5,364.8 L1456.0,366.1 L1455.4,367.4 L1454.8,368.6 L1454.2,369.9 L1453.6,371.2 L1452.9,372.4 L1452.3,373.7 L1451.6,375.0 L1450.8,376.2 L1450.1,377.5 L1449.3,378.8 L1448.5,380.0 L1447.7,381.3 L1446.8,382.6 L1446.0,383.8 L1445.1,385.1"/>
<path stroke="#5a5a5a" stroke-width="1.1" stroke-dasharray="1.2 2.2" d="M980.8,136.7 L981.9,136.2 L983.0,135.8 L984.1,135.3 L985.2,134.9 L986.3,134.5 L987.5,134.1 L988.6,133.7 L989.8,133.4 L991.0,133.0 L992.2,132.7 L993.4,132.4 L994.6,132.1 L995.8,131.8 L997.0,131.6 L998.3,131.3 L999.6,131.1 L1000.8,130.9 L1002.1,130.7 L1003.5,130.6 L1004.8,130.4 L1006.1,130.3 L1007.5,130.2 L1008.9,130.1 L1010.3,130.0 L1011.7,130.0 L1013.1,129.9 L1014.6,129.9 L1016.1,129.9 L1017.6,129.9 L1019.1,130.0 L1020.6,130.1 L1022.2,130.1 L1023.7,130.2 L1025.3,130.3 L1026.9,130.5 L1028.5,130.6 L1030.2,130.8 L1031.9,131.0 L1033.5,131.2 L1035.3,131.4 L1037.0,131.7 L1038.7,132.0 L1040.5,132.2 L1042.3,132.5 L1044.1,132.8 L1045.9,133.2 L1047.8,133.5 L1049.6,133.9 L1051.5,134.3 L1053.4,134.7 L1055.4,135.1 L1057.3,135.5 L1059.3,136.0 L1061.3,136.5 L1063.3,136.9 L1065.3,137.4 L1067.4,138.0 L1069.4,138.5 L1071.5,139.0 L1073.6,139.6 L1075.7,140.2 L1077.9,140.7 L1080.0,141.3 L1082.2,141.9 L1084.4,142.6 L1086.6,143.2 L1088.8,143.9 L1091.0,144.5 L1093.2,145.2 L1095.5,145.9 L1097.8,146.6 L1100.1,147.3 L1102.4,148.0 L1104.7,148.8 L1107.0,149.5 L1109.4,150.3 L1111.7,151.1 L1114.1,151.8 L1116.5,152.6 L1118.8,153.4 L1121.2,154.3 L1123.6,155.1 L1126.1,155.9 L1128.5,156.8 L1130.9,157.6 L1133.4,158.5 L1135.8,159.3 L1138.3,160.2 L1140.7,161.1 L1143.2,162.0 L1145.7,162.9 L1148.2,163.8 L1150.7,164.7 L1153.2,165.7 L1155.7,166.6 L1158.2,167.5 L1160.7,168.5 L1163.2,169.4 L1165.7,170.4 L1168.2,171.4 L1170.8,172.3 L1173.3,173.3 L1175.8,174.3 L1178.3,175.3 L1180.9,176.3 L1183.4,177.3 L1185.9,178.3 L1188.5,179.4 L1191.0,180.4 L1193.5,181.4 L1196.0,182.5 L1198.6,183.5 L1201.1,184.5 L1203.6,185.6 L1206.1,186.7 L1208.7,187.7 L1211.2,188.8 L1213.7,189.9 L1216.2,190.9 L1218.7,192.0 L1221.2,193.1 L1223.7,194.2 L1226.2,195.3 L1228.6,196.4 L1231.1,197.5 L1233.6,198.6 L1236.0,199.7 L1238.5,200.8 L1240.9,201.9 L1243.4,203.0 L1245.8,204.2 L1248.2,205.3 L1250.7,206.4 L1253.1,207.5 L1255.5,208.7 L1257.9,209.8 L1260.3,211.0 L1262.6,212.1 L1265.0,213.3 L1267.3,214.4 L1269.7,215.6 L1272.0,216.7 L1274.3,217.9 L1276.6,219.1 L1278.9,220.2 L1281.2,221.4 L1283.5,222.6 L1285.8,223.7 L1288.0,224.9 L1290.3,226.1 L1292.5,227.3 L1294.7,228.4 L1296.9,229.6 L1299.1,230.8 L1301.2,232.0 L1303.4,233.2 L1305.5,234.4 L1307.7,235.6 L1309.8,236.8 L1311.9,238.0 L1314.0,239.2 L1316.0,240.4 L1318.1,241.6 L1320.1,242.8 L1322.1,244.0 L1324.2,245.2 L1326.1,246.4 L1328.1,247.6 L1330.1,248.8 L1332.0,250.1 L1333.9,251.3 L1335.8,252.5 L1337.7,253.7 L1339.6,254.9 L1341.5,256.2 L1343.3,257.4 L1345.1,258.6 L1346.9,259.8 L1348.7,261.1 L1350.5,262.3 L1352.2,263.5 L1353.9,264.7 L1355.6,266.0 L1357.3,267.2 L1359.0,268.4 L1360.6,269.7 L1362.3,270.9 L1363.9,272.1 L1365.5,273.4 L1367.1,274.6 L1368.6,275.9 L1370.1,277.1 L1371.6,278.3 L1373.1,279.6 L1374.6,280.8 L1376.1,282.1 L1377.5,283.3 L1378.9,284.6 L1380.3,285.8 L1381.7,287.0 L1383.0,288.3 L1384.3,289.5 L1385.6,290.8 L1386.9,292.0 L1388.2,293.3 L1389.4,294.5 L1390.6,295.8 L1391.8,297.0 L1393.0,298.3 L1394.1,299.5 L1395.3,300.8 L1396.4,302.0 L1397.5,303.3 L1398.5,304.5 L1399.6,305.8 L1400.6,307.0 L1401.6,308.3 L1402.6,309.5 L1403.5,310.8 L1404.5,312.0 L1405.4,313.3 L1406.2,314.6 L1407.1,315.8 L1407.9,317.1 L1408.8,318.3 L1409.6,319.6 L1410.3,320.8 L1411.1,322.1 L1411.8,323.3 L1412.5,324.6 L1413.2,325.8 L1413.8,327.1 L1414.5,328.3 L1415.1,329.6 L1415.7,330.8 L1416.2,332.1 L1416.8,333.4 L1417.3,334.6 L1417.8,335.9 L1418.2,337.1 L1418.7,338.4 L1419.1,339.6 L1419.5,340.9 L1419.9,342.1 L1420.3,343.4 L1420.6,344.6 L1420.9,345.9 L1421.2,347.1 L1421.4,348.4 L1421.7,349.6 L1421.9,350.8 L1422.1,352.1 L1422.3,353.3 L1422.4,354.6 L1422.5,355.8 L1422.7,357.1 L1422.7,358.3 L1422.8,359.6 L1422.8,360.8 L1422.8,362.0 L1422.8,363.3 L1422.8,364.5 L1422.7,365.8 L1422.7,367.0 L1422.6,368.2 L1422.4,369.5 L1422.3,370.7 L1422.1,371.9 L1421.9,373.2 L1421.7,374.4 L1421.5,375.6 L1421.2,376.9 L1421.0,378.1 L1420.7,379.3 L1420.4,380.6 L1420.0,381.8 L1419.7,383.0 L1419.3,384.2 L1418.9,385.5 L1418.5,386.7 L1418.0,387.9 L1417.6,389.1 L1417.1,390.3 L1416.6,391.6 L1416.0,392.8 L1415.5,394.0 L1414.9,395.2 L1414.3,396.4 L1413.7,397.6 L1413.1,398.8 L1412.5,400.0 L1411.8,401.2 L1411.1,402.4 L1410.4,403.6 L1409.7,404.8 L1409.0,406.0 L1408.2,407.2 L1407.5,408.4 L1406.7,409.6"/>
<path stroke="#5a5a5a" stroke-width="1.1" stroke-dasharray="1.2 2.2" d="M1005.0,150.0 L1006.5,150.1 L1008.0,150.3 L1009.5,150.5 L1011.0,150.6 L1012.5,150.8 L1014.1,151.1 L1015.6,151.3 L1017.2,151.5 L1018.7,151.8 L1020.3,152.0 L1021.9,152.3 L1023.5,152.6 L1025.1,152.9 L1026.7,153.2 L1028.3,153.5 L1029.9,153.8 L1031.6,154.2 L1033.2,154.5 L1034.9,154.9 L1036.6,155.3 L1038.3,155.7 L1039.9,156.1 L1041.6,156.5 L1043.4,156.9 L1045.1,157.4 L1046.8,157.8 L1048.5,158.3 L1050.3,158.8 L1052.1,159.2 L1053.8,159.7 L1055.6,160.2 L1057.4,160.8 L1059.2,161.3 L1061.0,161.8 L1062.8,162.4 L1064.6,162.9 L1066.4,163.5 L1068.3,164.1 L1070.1,164.6 L1071.9,165.2 L1073.8,165.8 L1075.7,166.5 L1077.5,167.1 L1079.4,167.7 L1081.3,168.4 L1083.2,169.0 L1085.1,169.7 L1087.0,170.3 L1088.9,171.0 L1090.8,171.7 L1092.7,172.4 L1094.7,173.1 L1096.6,173.8 L1098.5,174.5 L1100.5,175.2 L1102.4,175.9 L1104.4,176.7 L1106.3,177.4 L1108.3,178.2 L1110.3,178.9 L1112.2,179.7 L1114.2,180.5 L1116.2,181.2 L1118.2,182.0 L1120.1,182.8 L1122.1,183.6 L1124.1,184.4 L1126.1,185.2 L1128.1,186.0 L1130.1,186.9 L1132.1,187.7 L1134.1,188.5 L1136.1,189.4 L1138.1,190.2 L1140.1,191.1 L1142.1,191.9 L1144.1,192.8 L1146.1,193.6 L1148.1,194.5 L1150.1,195.4 L1152.1,196.3 L1154.1,197.1 L1156.1,198.0 L1158.1,198.9 L1160.1,199.8 L1162.1,200.7 L1164.1,201.7 L1166.1,202.6 L1168.1,203.5 L1170.1,204.4 L1172.1,205.3 L1174.1,206.3 L1176.0,207.2 L1178.0,208.1 L1180.0,209.1 L1182.0,210.0 L1183.9,211.0 L1185.9,211.9 L1187.9,212.9 L1189.8,213.8 L1191.8,214.8 L1193.7,215.8 L1195.7,216.8 L1197.6,217.7 L1199.6,218.7 L1201.5,219.7 L1203.4,220.7 L1205.4,221.7 L1207.3,222.6 L1209.2,223.6 L1211.1,224.6 L1213.0,225.6 L1214.9,226.6 L1216.8,227.6 L1218.6,228.6 L1220.5,229.7 L1222.4,230.7 L1224.2,231.7 L1226.1,232.7 L1227.9,233.7 L1229.8,234.7 L1231.6,235.8 L1233.4,236.8 L1235.2,237.8 L1237.0,238.9 L1238.8,239.9 L1240.6,240.9 L1242.4,242.0 L1244.1,243.0 L1245.9,244.1 L1247.6,245.1 L1249.4,246.1 L1251.1,247.2 L1252.8,248.2 L1254.5,249.3 L1256.3,250.3 L1257.9,251.4 L1259.6,252.5 L1261.3,253.5 L1263.0,254.6 L1264.6,255.6 L1266.2,256.7 L1267.9,257.8 L1269.5,258.8 L1271.1,259.9 L1272.7,261.0 L1274.3,262.0 L1275.9,263.1 L1277.4,264.2 L1279.0,265.3 L1280.5,266.3 L1282.0,267.4 L1283.6,268.5 L1285.1,269.6 L1286.5,270.7 L1288.0,271.7 L1289.5,272.8 L1290.9,273.9 L1292.4,275.0 L1293.8,276.1 L1295.2,277.2 L1296.6,278.3 L1298.0,279.3 L1299.4,280.4 L1300.8,281.5 L1302.1,282.6 L1303.5,283.7 L1304.8,284.8 L1306.1,285.9 L1307.4,287.0 L1308.7,288.1 L1309.9,289.2 L1311.2,290.3 L1312.4,291.4 L1313.7,292.5 L1314.9,293.6 L1316.1,294.7 L1317.3,295.8 L1318.4,296.9 L1319.6,298.0 L1320.7,299.1 L1321.9,300.2 L1323.0,301.3 L1324.1,302.4 L1325.2,303.5 L1326.2,304.6 L1327.3,305.7 L1328.3,306.8 L1329.3,307.9 L1330.4,309.0 L1331.3,310.1 L1332.3,311.2 L1333.3,312.3 L1334.2,313.4 L1335.2,314.6 L1336.1,315.7 L1337.0,316.8 L1337.9,317.9 L1338.8,319.0 L1339.6,320.1 L1340.5,321.2 L1341.3,322.3 L1342.1,323.4 L1342.9,324.5 L1343.7,325.6 L1344.4,326.7 L1345.2,327.8 L1345.9,328.9 L1346.7,330.0 L1347.4,331.1 L1348.0,332.2 L1348.7,333.3 L1349.4,334.5 L1350.0,335.6 L1350.6,336.7 L1351.3,337.8 L1351.8,338.9 L1352.4,340.0 L1353.0,341.1 L1353.5,342.2 L1354.1,343.3 L1354.6,344.4 L1355.1,345.5 L1355.6,346.6 L1356.0,347.7 L1356.5,348.8 L1356.9,349.9 L1357.4,351.0 L1357.8,352.1 L1358.2,353.2 L1358.5,354.3 L1358.9,355.4 L1359.2,356.5 L1359.6,357.5 L1359.9,358.6 L1360.2,359.7 L1360.5,360.8 L1360.8,361.9 L1361.0,363.0 L1361.2,364.1 L1361.5,365.2 L1361.7,366.3 L1361.9,367.3 L1362.1,368.4 L1362.2,369.5 L1362.4,370.6 L1362.5,371.7 L1362.6,372.8 L1362.7,373.8 L1362.8,374.9 L1362.9,376.0 L1363.0,377.1 L1363.0,378.1 L1363.1,379.2 L1363.1,380.3 L1363.1,381.3 L1363.1,382.4 L1363.1,383.5 L1363.0,384.5 L1363.0,385.6 L1362.9,386.7 L1362.9,387.7 L1362.8,388.8 L1362.7,389.8 L1362.6,390.9 L1362.4,391.9 L1362.3,393.0 L1362.1,394.0 L1362.0,395.1 L1361.8,396.1 L1361.6,397.2 L1361.4,398.2 L1361.2,399.3 L1361.0,400.3 L1360.7,401.3 L1360.5,402.4 L1360.2,403.4 L1360.0,404.4 L1359.7,405.4 L1359.4,406.5 L1359.1,407.5 L1358.8,408.5 L1358.4,409.5 L1358.1,410.5 L1357.8,411.6 L1357.4,412.6 L1357.1,413.6 L1356.7,414.6 L1356.3,415.6 L1355.9,416.6 L1355.5,417.6 L1355.1,418.6 L1354.7,419.5 L1354.2,420.5 L1353.8,421.5 L1353.4,422.5 L1352.9,423.5 L1352.5,424.4 L1352.0,425.4"/>
<path stroke="#5a5a5a" stroke-width="1.1" stroke-dasharray="1.2 2.2" d="M922.5,89.2 L922.4,89.3 L922.3,89.3 L922.2,89.4 L922.1,89.5 L922.0,89.5 L921.9,89.6 L921.8,89.6 L921.7,89.7 L921.7,89.8 L921.6,89.8 L921.5,89.9 L921.4,90.0 L921.3,90.0 L921.2,90.1 L921.1,90.2 L921.0,90.2 L920.9,90.3 L920.8,90.4 L920.7,90.4 L920.6,90.5 L920.5,90.6 L920.4,90.6 L920.3,90.7 L920.2,90.8 L920.2,90.8 L920.1,90.9 L920.0,91.0 L919.9,91.0 L919.8,91.1 L919.7,91.2 L919.6,91.3 L919.5,91.3 L919.4,91.4 L919.3,91.5 L919.2,91.5 L919.1,91.6 L919.0,91.7 L918.9,91.7 L918.9,91.8 L918.8,91.9 L918.7,92.0 L918.6,92.0 L918.5,92.1 L918.4,92.2 L918.3,92.2 L918.2,92.3 L918.1,92.4 L918.0,92.5 L917.9,92.5 L917.8,92.6 L917.7,92.7 L917.7,92.7 L917.6,92.8 L917.5,92.9 L917.4,93.0 L917.3,93.0 L917.2,93.1 L917.1,93.2 L917.0,93.3 L916.9,93.3 L916.8,93.4 L916.7,93.5 L916.6,93.6 L916.6,93.6 L916.5,93.7 L916.4,93.8 L916.3,93.9 L916.2,93.9 L916.1,94.0 L916.0,94.1 L915.9,94.2 L915.8,94.2 L915.7,94.3 L915.6,94.4 L915.5,94.5 L915.5,94.5 L915.4,94.6 L915.3,94.7 L915.2,94.8 L915.1,94.9 L915.0,94.9 L914.9,95.0 L914.8,95.1 L914.7,95.2 L914.6,95.2 L914.5,95.3 L914.4,95.4 L914.4,95.5 L914.3,95.6 L914.2,95.6 L914.1,95.7 L914.0,95.8 L913.9,95.9 L913.8,96.0 L913.7,96.0 L913.6,96.1 L913.5,96.2 L913.4,96.3 L913.4,96.4 L913.3,96.4 L913.2,96.5 L913.1,96.6 L913.0,96.7 L912.9,96.8 L912.8,96.8 L912.7,96.9 L912.6,97.0 L912.5,97.1 L912.5,97.2 L912.4,97.2 L912.3,97.3 L912.2,97.4 L912.1,97.5 L912.0,97.6 L911.9,97.7 L911.8,97.7 L911.7,97.8 L911.6,97.9 L911.5,98.0 L911.5,98.1 L911.4,98.2 L911.3,98.2 L911.2,98.3 L911.1,98.4 L911.0,98.5 L910.9,98.6 L910.8,98.7 L910.7,98.7 L910.6,98.8 L910.6,98.9 L910.5,99.0 L910.4,99.1 L910.3,99.2 L910.2,99.3 L910.1,99.3 L910.0,99.4 L909.9,99.5 L909.8,99.6 L909.7,99.7 L909.6,99.8 L909.6,99.9 L909.5,99.9 L909.4,100.0 L909.3,100.1 L909.2,100.2 L909.1,100.3 L909.0,100.4 L908.9,100.5 L908.8,100.5 L908.7,100.6 L908.7,100.7 L908.6,100.8 L908.5,100.9 L908.4,101.0 L908.3,101.1 L908.2,101.2 L908.1,101.2 L908.0,101.3 L907.9,101.4 L907.8,101.5 L907.8,101.6 L907.7,101.7 L907.6,101.8 L907.5,101.9 L907.4,102.0 L907.3,102.0 L907.2,102.1 L907.1,102.2 L907.0,102.3 L906.9,102.4 L906.9,102.5 L906.8,102.6 L906.7,102.7 L906.6,102.8 L906.5,102.9 L906.4,102.9 L906.3,103.0 L906.2,103.1 L906.1,103.2 L906.0,103.3 L906.0,103.4 L905.9,103.5 L905.8,103.6 L905.7,103.7 L905.6,103.8 L905.5,103.8 L905.4,103.9 L905.3,104.0 L905.2,104.1 L905.2,104.2 L905.1,104.3 L905.0,104.4 L904.9,104.5 L904.8,104.6 L904.7,104.7 L904.6,104.8 L904.5,104.9 L904.4,105.0 L904.3,105.0 L904.3,105.1 L904.2,105.2 L904.1,105.3 L904.0,105.4 L903.9,105.5 L903.8,105.6 L903.7,105.7 L903.6,105.8 L903.5,105.9 L903.4,106.0 L903.4,106.1 L903.3,106.2 L903.2,106.3 L903.1,106.4 L903.0,106.4 L902.9,106.5 L902.8,106.6 L902.7,106.7 L902.6,106.8 L902.5,106.9 L902.5,107.0 L902.4,107.1 L902.3,107.2 L902.2,107.3 L902.1,107.4 L902.0,107.5 L901.9,107.6 L901.8,107.7 L901.7,107.8 L901.6,107.9 L901.6,108.0 L901.5,108.1 L901.4,108.2 L901.3,108.3 L901.2,108.4 L901.1,108.4 L901.0,108.5 L900.9,108.6 L900.8,108.7 L900.7,108.8 L900.7,108.9 L900.6,109.0 L900.5,109.1 L900.4,109.2 L900.3,109.3 L900.2,109.4 L900.1,109.5 L900.0,109.6 L899.9,109.7 L899.9,109.8 L899.8,109.9 L899.7,110.0 L899.6,110.1 L899.5,110.2 L899.4,110.3 L899.3,110.4 L899.2,110.5 L899.1,110.6 L899.0,110.7 L899.0,110.8 L898.9,110.9 L898.8,111.0 L898.7,111.1 L898.6,111.2 L898.5,111.3 L898.4,111.4 L898.3,111.5 L898.2,111.6 L898.1,111.7 L898.1,111.8 L898.0,111.9 L897.9,112.0 L897.8,112.1 L897.7,112.2 L897.6,112.3 L897.5,112.4 L897.4,112.5 L897.3,112.6 L897.2,112.7 L897.2,112.8 L897.1,112.9 L897.0,113.0 L896.9,113.1 L896.8,113.2 L896.7,113.3 L896.6,113.4 L896.5,113.5 L896.4,113.6 L896.3,113.7 L896.3,113.8 L896.2,113.9 L896.1,114.0 L896.0,114.1 L895.9,114.2 L895.8,114.3 L895.7,114.4 L895.6,114.5 L895.5,114.6 L895.4,114.7 L895.4,114.8"/>
<path stroke="#5a5a5a" stroke-width="1.1" stroke-dasharray="1.2 2.2" d="M963.3,111.7 L963.2,111.8 L963.2,111.8 L963.1,111.9 L963.0,112.0 L963.0,112.1 L962.9,112.1 L962.9,112.2 L962.8,112.3 L962.7,112.3 L962.7,112.4 L962.6,112.5 L962.6,112.6 L962.5,112.6 L962.4,112.7 L962.4,112.8 L962.3,112.8 L962.2,112.9 L962.2,113.0 L962.1,113.1 L962.1,113.1 L962.0,113.2 L961.9,113.3 L961.9,113.4 L961.8,113.4 L961.8,113.5 L961.7,113.6 L961.6,113.6 L961.6,113.7 L961.5,113.8 L961.4,113.9 L961.4,113.9 L961.3,114.0 L961.3,114.1 L961.2,114.2 L961.1,114.2 L961.1,114.3 L961.0,114.4 L961.0,114.5 L960.9,114.5 L960.8,114.6 L960.8,114.7 L960.7,114.8 L960.7,114.8 L960.6,114.9 L960.5,115.0 L960.5,115.1 L960.4,115.1 L960.4,115.2 L960.3,115.3 L960.2,115.4 L960.2,115.5 L960.1,115.5 L960.1,115.6 L960.0,115.7 L959.9,115.8 L959.9,115.8 L959.8,115.9 L959.8,116.0 L959.7,116.1 L959.7,116.1 L959.6,116.2 L959.5,116.3 L959.5,116.4 L959.4,116.5 L959.4,116.5 L959.3,116.6 L959.2,116.7 L959.2,116.8 L959.1,116.9 L959.1,116.9 L959.0,117.0 L959.0,117.1 L958.9,117.2 L958.8,117.2 L958.8,117.3 L958.7,117.4 L958.7,117.5 L958.6,117.6 L958.5,117.6 L958.5,117.7 L958.4,117.8 L958.4,117.9 L958.3,118.0 L958.3,118.0 L958.2,118.1 L958.1,118.2 L958.1,118.3 L958.0,118.4 L958.0,118.4 L957.9,118.5 L957.9,118.6 L957.8,118.7 L957.7,118.8 L957.7,118.9 L957.6,118.9 L957.6,119.0 L957.5,119.1 L957.5,119.2 L957.4,119.3 L957.3,119.3 L957.3,119.4 L957.2,119.5 L957.2,119.6 L957.1,119.7 L957.1,119.8 L957.0,119.8 L956.9,119.9 L956.9,120.0 L956.8,120.1 L956.8,120.2 L956.7,120.3 L956.7,120.3 L956.6,120.4 L956.6,120.5 L956.5,120.6 L956.4,120.7 L956.4,120.8 L956.3,120.8 L956.3,120.9 L956.2,121.0 L956.2,121.1 L956.1,121.2 L956.1,121.3 L956.0,121.3 L955.9,121.4 L955.9,121.5 L955.8,121.6 L955.8,121.7 L955.7,121.8 L955.7,121.9 L955.6,121.9 L955.6,122.0 L955.5,122.1 L955.4,122.2 L955.4,122.3 L955.3,122.4 L955.3,122.5 L955.2,122.5 L955.2,122.6 L955.1,122.7 L955.1,122.8 L955.0,122.9 L954.9,123.0 L954.9,123.1 L954.8,123.1 L954.8,123.2 L954.7,123.3 L954.7,123.4 L954.6,123.5 L954.6,123.6 L954.5,123.7 L954.5,123.7 L954.4,123.8 L954.3,123.9 L954.3,124.0 L954.2,124.1 L954.2,124.2 L954.1,124.3 L954.1,124.4 L954.0,124.4 L954.0,124.5 L953.9,124.6 L953.9,124.7 L953.8,124.8 L953.7,124.9 L953.7,125.0 L953.6,125.1 L953.6,125.2 L953.5,125.2 L953.5,125.3 L953.4,125.4 L953.4,125.5 L953.3,125.6 L953.3,125.7 L953.2,125.8 L953.1,125.9 L953.1,126.0 L953.0,126.0 L953.0,126.1 L952.9,126.2 L952.9,126.3 L952.8,126.4 L952.8,126.5 L952.7,126.6 L952.7,126.7 L952.6,126.8 L952.6,126.8 L952.5,126.9 L952.4,127.0 L952.4,127.1 L952.3,127.2 L952.3,127.3 L952.2,127.4 L952.2,127.5 L952.1,127.6 L952.1,127.7 L952.0,127.8 L952.0,127.8 L951.9,127.9 L951.9,128.0 L951.8,128.1 L951.8,128.2 L951.7,128.3 L951.6,128.4 L951.6,128.5 L951.5,128.6 L951.5,128.7 L951.4,128.8 L951.4,128.9 L951.3,128.9 L951.3,129.0 L951.2,129.1 L951.2,129.2 L951.1,129.3 L951.1,129.4 L951.0,129.5 L951.0,129.6 L950.9,129.7 L950.8,129.8 L950.8,129.9 L950.7,130.0 L950.7,130.1 L950.6,130.1 L950.6,130.2 L950.5,130.3 L950.5,130.4 L950.4,130.5 L950.4,130.6 L950.3,130.7 L950.3,130.8 L950.2,130.9 L950.2,131.0 L950.1,131.1 L950.1,131.2 L950.0,131.3 L949.9,131.4 L949.9,131.5 L949.8,131.5 L949.8,131.6 L949.7,131.7 L949.7,131.8 L949.6,131.9 L949.6,132.0 L949.5,132.1 L949.5,132.2 L949.4,132.3 L949.4,132.4 L949.3,132.5 L949.3,132.6 L949.2,132.7 L949.2,132.8 L949.1,132.9 L949.1,133.0 L949.0,133.1 L949.0,133.2 L948.9,133.2 L948.8,133.3 L948.8,133.4 L948.7,133.5 L948.7,133.6 L948.6,133.7 L948.6,133.8 L948.5,133.9 L948.5,134.0 L948.4,134.1 L948.4,134.2 L948.3,134.3 L948.3,134.4 L948.2,134.5 L948.2,134.6 L948.1,134.7 L948.1,134.8 L948.0,134.9 L948.0,135.0 L947.9,135.1 L947.9,135.2 L947.8,135.3 L947.7,135.4 L947.7,135.5 L947.6,135.6 L947.6,135.6 L947.5,135.7 L947.5,135.8 L947.4,135.9 L947.4,136.0 L947.3,136.1 L947.3,136.2 L947.2,136.3 L947.2,136.4 L947.1,136.5 L947.1,136.6 L947.0,136.7 L947.0,136.8 L946.9,136.9 L946.9,137.0 L946.8,137.1 L946.8,137.2 L946.7,137.3 L946.7,137.4"/>
</g>
<g fill="none" stroke-width="2">
<path stroke="#c2df23" d="M467.3,340.9 L467.1,340.3 L467.0,339.6 L466.9,339.0 L466.8,338.4 L466.8,337.7 L466.7,337.1 L466.7,336.5 L466.7,335.8 L466.8,335.2 L466.8,334.6 L466.9,334.0 L467.0,333.4 L467.1,332.8 L467.2,332.2 L467.4,331.6 L467.6,331.0 L467.8,330.4 L468.0,329.8 L468.2,329.3 L468.5,328.7 L468.8,328.2 L469.1,327.6 L469.4,327.1 L469.7,326.6 L470.1,326.1 L470.4,325.6 L470.8,325.1 L471.2,324.6 L471.6,324.2 L472.0,323.7 L472.5,323.3 L472.9,322.8 L473.4,322.4 L473.9,322.0 L474.4,321.6 L474.9,321.2 L475.4,320.9 L476.0,320.5 L476.5,320.2 L477.1,319.9 L477.6,319.5 L478.2,319.3 L478.8,319.0 L479.4,318.7 L480.0,318.5 L480.6,318.2 L481.2,318.0 L481.8,317.8 L482.4,317.6 L483.0,317.5 L483.6,317.3 L484.3,317.2 L484.9,317.0 L485.5,316.9 L486.2,316.9 L486.8,316.8 L487.5,316.7 L488.1,316.7 L488.7,316.7 L489.4,316.7 L490.0,316.7 L490.7,316.7 L491.3,316.8 L491.9,316.8 L492.6,316.9 L493.2,317.0 L493.8,317.1 L494.4,317.2 L495.0,317.4 L495.7,317.5 L496.3,317.7 L496.9,317.9 L497.5,318.1 L498.1,318.3 L498.6,318.6 L499.2,318.8 L499.8,319.1 L500.4,319.4 L500.9,319.7 L501.5,320.0 L502.0,320.3 L502.6,320.7 L503.1,321.0 L503.6,321.4 L504.1,321.8 L504.7,322.2 L505.2,322.6 L505.6,323.0 L506.1,323.5 L506.6,323.9 L507.1,324.4 L507.5,324.9 L508.0,325.3 L508.4,325.8 L508.8,326.3 L509.2,326.9 L509.7,327.4 L510.1,327.9 L510.4,328.5 L510.8,329.0 L511.2,329.6 L511.5,330.1 L511.9,330.7 L512.2,331.3 L512.6,331.9 L512.9,332.5 L513.2,333.1 L513.5,333.7 L513.8,334.3 L514.0,334.9 L514.3,335.5 L514.5,336.2 L514.8,336.8 L515.0,337.4 L515.2,338.0 L515.4,338.7 L515.6,339.3 L515.8,340.0 L516.0,340.6 L516.1,341.2 L516.3,341.9 L516.4,342.5 L516.5,343.2 L516.6,343.8 L516.7,344.4 L516.8,345.1 L516.9,345.7 L516.9,346.3 L517.0,347.0 L517.0,347.6 L517.0,348.2 L517.0,348.8 L517.0,349.4 L517.0,350.0 L517.0,350.6 L516.9,351.2 L516.8,351.8 L516.8,352.4 L516.7,352.9 L516.6,353.5 L516.4,354.0 L516.3,354.6 L516.2,355.1 L516.0,355.6 L515.8,356.1 L515.6,356.6 L515.4,357.1 L515.2,357.6 L515.0,358.1 L514.7,358.5 L514.4,359.0 L514.2,359.4 L513.9,359.8 L513.6,360.3 L513.2,360.7 L512.9,361.0 L512.5,361.4 L512.2,361.8 L511.8,362.1 L511.4,362.4 L511.0,362.7 L510.6,363.0 L510.1,363.3 L509.7,363.6 L509.2,363.8 L508.7,364.0 L508.2,364.3 L507.7,364.5 L507.2,364.6 L506.7,364.8 L506.1,365.0 L505.6,365.1 L505.0,365.2 L504.4,365.3 L503.8,365.4 L503.2,365.4 L502.6,365.5 L502.0,365.5 L501.4,365.5 L500.7,365.5 L500.1,365.5 L499.4,365.5 L498.8,365.4 L498.1,365.3 L497.4,365.3 L496.7,365.1 L496.0,365.0 L495.3,364.9 L494.6,364.7 L493.9,364.5 L493.2,364.4 L492.5,364.2 L491.8,363.9 L491.1,363.7 L490.3,363.4 L489.6,363.2 L488.9,362.9 L488.2,362.6 L487.5,362.3 L486.7,361.9 L486.0,361.6 L485.3,361.2 L484.6,360.8 L483.9,360.5 L483.2,360.1 L482.5,359.6 L481.9,359.2 L481.2,358.8 L480.5,358.3 L479.9,357.9 L479.2,357.4 L478.6,356.9 L478.0,356.4 L477.3,355.9 L476.7,355.4 L476.1,354.8 L475.6,354.3 L475.0,353.8 L474.5,353.2 L473.9,352.6 L473.4,352.1 L472.9,351.5 L472.4,350.9 L472.0,350.3 L471.5,349.7 L471.1,349.1 L470.7,348.5 L470.3,347.9 L469.9,347.3 L469.5,346.6 L469.2,346.0 L468.9,345.4 L468.6,344.8 L468.3,344.1 L468.1,343.5 L467.8,342.8 L467.6,342.2 L467.4,341.6 L467.3,340.9"/>
<path stroke="#52c569" d="M1423.3,240.2 L1422.4,239.6 L1421.6,239.0 L1420.7,238.3 L1419.9,237.7 L1419.1,237.0 L1418.3,236.4 L1417.5,235.8 L1416.8,235.1 L1416.0,234.5 L1415.3,233.9 L1414.6,233.2 L1413.8,232.6 L1413.2,232.0 L1412.5,231.4 L1411.8,230.8 L1411.2,230.2 L1410.6,229.6 L1410.0,229.0 L1409.4,228.4 L1408.8,227.8 L1408.3,227.3 L1407.8,226.7 L1407.3,226.2 L1406.8,225.6 L1406.4,225.1 L1405.9,224.6 L1405.5,224.0 L1405.2,223.5 L1404.8,223.1 L1404.5,222.6 L1404.2,222.1 L1403.9,221.7 L1403.7,221.2 L1403.5,220.8 L1403.3,220.4 L1403.2,220.0 L1403.1,219.6 L1403.0,219.2 L1402.9,218.8 M402.3,218.5 L403.4,218.2 L404.4,217.8 L405.5,217.5 L406.5,217.3 L407.5,217.0 L408.5,216.7 L409.5,216.5 L410.5,216.3 L411.4,216.1 L412.3,215.9 L413.2,215.8 L414.1,215.6 L414.9,215.5 L415.7,215.4 L416.5,215.3 L417.3,215.2 L418.0,215.1 L418.7,215.1 L419.4,215.1 L420.0,215.1 L420.7,215.1 L421.2,215.1 L421.8,215.2 L422.3,215.2 L422.8,215.3 L423.3,215.4 L423.7,215.5 L424.1,215.7 L424.5,215.8 L424.8,216.0 L425.1,216.2 L425.4,216.4 L425.6,216.6 L425.9,216.9 L426.0,217.1 L426.2,217.4 L426.3,217.7 L426.4,218.0 L426.4,218.3 L426.4,218.7 L426.4,219.0 L426.4,219.4 L426.3,219.8 L426.2,220.2 L426.1,220.6 L425.9,221.0 L425.8,221.4 L425.5,221.9 L425.3,222.3 L425.0,222.8 L424.7,223.3 L424.4,223.8 L424.1,224.3 L423.7,224.8 L423.3,225.3 L422.9,225.9 L422.5,226.4 L422.0,227.0 L421.5,227.5 L421.0,228.1 L420.5,228.7 L419.9,229.3 L419.4,229.9 L418.8,230.5 L418.2,231.1 L417.5,231.7 L416.9,232.3 L416.2,232.9 L415.6,233.6 L414.9,234.2 L414.2,234.8 L413.4,235.4 L412.7,236.1 L412.0,236.7 L411.2,237.4 L410.4,238.0 L409.7,238.6 L408.9,239.3 L408.1,239.9 L407.2,240.6 L406.4,241.2 L405.6,241.8 L404.8,242.5 L403.9,243.1 L403.1,243.7 L402.2,244.4 L401.3,245.0 L400.4,245.6 L399.6,246.2 L398.7,246.8 L397.8,247.4 L396.9,248.0 L396.0,248.6 L395.1,249.2 L394.2,249.8 L393.3,250.3 L392.4,250.9 L391.5,251.5 L390.6,252.0 L389.7,252.5 L388.8,253.1 L387.8,253.6 L386.9,254.1 L386.0,254.6 L385.1,255.1 L384.2,255.6 L383.3,256.0 L382.4,256.5 L381.5,256.9 L380.6,257.4 L379.7,257.8 L378.8,258.2 L377.9,258.6 L377.1,259.0 L376.2,259.4 L375.3,259.7 L374.5,260.1 L373.6,260.4 L372.7,260.7 L371.9,261.0 L371.1,261.3 L370.2,261.6 L369.4,261.9 L368.6,262.1 L367.8,262.3 L367.0,262.5 L366.2,262.7 L365.4,262.9 L364.6,263.1 L363.9,263.3 L363.1,263.4 L362.4,263.5 L361.6,263.6 L360.9,263.7 L360.2,263.8 L359.5,263.9 L358.9,263.9 L358.2,263.9 L357.5,263.9 L356.9,263.9 L356.3,263.9 L355.7,263.9 L355.1,263.8 L354.5,263.8 L354.0,263.7 L353.4,263.6 L352.9,263.5 L352.4,263.3 L351.9,263.2 L351.4,263.0 L351.0,262.8 L350.6,262.6 L350.2,262.4 L349.8,262.2 L349.4,262.0 L349.1,261.7 L348.7,261.5 L348.4,261.2 L348.2,260.9 L347.9,260.6 L347.7,260.2 M1457.2,259.9 L1456.3,259.5 L1455.4,259.2 L1454.5,258.8 L1453.6,258.4 L1452.7,258.0 L1451.8,257.6 L1450.8,257.2 L1449.9,256.7 L1449.0,256.3 L1448.1,255.8 L1447.1,255.3 L1446.2,254.9 L1445.3,254.4 L1444.3,253.8 L1443.4,253.3 L1442.5,252.8 L1441.5,252.3 L1440.6,251.7 L1439.6,251.2 L1438.7,250.6 L1437.8,250.1 L1436.8,249.5 L1435.9,248.9 L1435.0,248.3 L1434.0,247.7 L1433.1,247.1 L1432.2,246.5 L1431.3,245.9 L1430.3,245.3 L1429.4,244.7 L1428.5,244.0 L1427.6,243.4 L1426.8,242.8 L1425.9,242.1 L1425.0,241.5 L1424.1,240.9 L1423.3,240.2"/>
<path stroke="#86d549" d="M439.0,240.2 L439.7,239.6 L440.4,239.0 L441.2,238.3 L441.9,237.7 L442.7,237.0 L443.5,236.4 L444.4,235.8 L445.2,235.1 L446.1,234.5 L447.0,233.9 L447.9,233.2 L448.8,232.6 L449.7,232.0 L450.7,231.4 L451.6,230.8 L452.6,230.2 L453.6,229.6 L454.6,229.0 L455.6,228.4 L456.6,227.8 L457.6,227.3 L458.7,226.7 L459.7,226.2 L460.8,225.6 L461.8,225.1 L462.9,224.6 L464.0,224.0 L465.0,223.5 L466.1,223.1 L467.2,222.6 L468.2,222.1 L469.3,221.7 L470.4,221.2 L471.4,220.8 L472.5,220.4 L473.5,220.0 L474.6,219.6 L475.6,219.2 L476.6,218.8 L477.6,218.5 L478.6,218.2 L479.6,217.8 L480.6,217.5 L481.6,217.3 L482.5,217.0 L483.5,216.7 L484.4,216.5 L485.3,216.3 L486.2,216.1 L487.0,215.9 L487.9,215.8 L488.7,215.6 L489.5,215.5 L490.3,215.4 L491.1,215.3 L491.8,215.2 L492.5,215.1 L493.2,215.1 L493.9,215.1 L494.5,215.1 L495.2,215.1 L495.7,215.1 L496.3,215.2 L496.9,215.2 L497.4,215.3 L497.9,215.4 L498.3,215.5 L498.8,215.7 L499.2,215.8 L499.6,216.0 L499.9,216.2 L500.2,216.4 L500.5,216.6 L500.8,216.9 L501.0,217.1 L501.3,217.4 L501.4,217.7 L501.6,218.0 L501.7,218.3 L501.8,218.7 L501.9,219.0 L502.0,219.4 L502.0,219.8 L502.0,220.2 L501.9,220.6 L501.9,221.0 L501.8,221.4 L501.7,221.9 L501.6,222.3 L501.4,222.8 L501.2,223.3 L501.0,223.8 L500.8,224.3 L500.6,224.8 L500.3,225.3 L500.0,225.9 L499.7,226.4 L499.3,227.0 L499.0,227.5 L498.6,228.1 L498.2,228.7 L497.8,229.3 L497.3,229.9 L496.9,230.5 L496.4,231.1 L495.9,231.7 L495.4,232.3 L494.9,232.9 L494.3,233.6 L493.8,234.2 L493.2,234.8 L492.6,235.4 L492.0,236.1 L491.4,236.7 L490.8,237.4 L490.1,238.0 L489.5,238.6 L488.8,239.3 L488.1,239.9 L487.5,240.6 L486.8,241.2 L486.0,241.8 L485.3,242.5 L484.6,243.1 L483.9,243.7 L483.1,244.4 L482.4,245.0 L481.6,245.6 L480.8,246.2 L480.1,246.8 L479.3,247.4 L478.5,248.0 L477.7,248.6 L476.9,249.2 L476.1,249.8 L475.3,250.3 L474.5,250.9 L473.7,251.5 L472.9,252.0 L472.1,252.5 L471.2,253.1 L470.4,253.6 L469.6,254.1 L468.8,254.6 L467.9,255.1 L467.1,255.6 L466.3,256.0 L465.4,256.5 L464.6,256.9 L463.8,257.4 L463.0,257.8 L462.1,258.2 L461.3,258.6 L460.5,259.0 L459.7,259.4 L458.8,259.7 L458.0,260.1 L457.2,260.4 L456.4,260.7 L455.6,261.0 L454.8,261.3 L454.0,261.6 L453.2,261.9 L452.5,262.1 L451.7,262.3 L450.9,262.5 L450.1,262.7 L449.4,262.9 L448.6,263.1 L447.9,263.3 L447.2,263.4 L446.5,263.5 L445.7,263.6 L445.0,263.7 L444.3,263.8 L443.7,263.9 L443.0,263.9 L442.3,263.9 L441.7,263.9 L441.0,263.9 L440.4,263.9 L439.8,263.9 L439.2,263.8 L438.6,263.8 L438.1,263.7 L437.5,263.6 L437.0,263.5 L436.4,263.3 L435.9,263.2 L435.5,263.0 L435.0,262.8 L434.5,262.6 L434.1,262.4 L433.7,262.2 L433.3,262.0 L432.9,261.7 L432.5,261.5 L432.2,261.2 L431.9,260.9 L431.6,260.6 L431.3,260.2 L431.0,259.9 L430.8,259.5 L430.6,259.2 L430.4,258.8 L430.2,258.4 L430.1,258.0 L430.0,257.6 L429.9,257.2 L429.8,256.7 L429.8,256.3 L429.7,255.8 L429.7,255.3 L429.8,254.9 L429.8,254.4 L429.9,253.8 L430.0,253.3 L430.1,252.8 L430.3,252.3 L430.5,251.7 L430.7,251.2 L430.9,250.6 L431.2,250.1 L431.5,249.5 L431.8,248.9 L432.2,248.3 L432.5,247.7 L432.9,247.1 L433.4,246.5 L433.8,245.9 L434.3,245.3 L434.8,244.7 L435.3,244.0 L435.9,243.4 L436.4,242.8 L437.1,242.1 L437.7,241.5 L438.3,240.9 L439.0,240.2"/>
<path stroke="#2ab07f" d="M1154.7,157.7 L1153.6,157.1 L1152.5,156.5 L1151.4,155.8 L1150.3,155.2 L1149.3,154.5 L1148.2,153.9 L1147.2,153.3 L1146.2,152.6 L1145.2,152.0 L1144.2,151.3 L1143.2,150.7 L1142.2,150.1 L1141.3,149.4 L1140.4,148.8 L1139.5,148.2 L1138.6,147.6 L1137.7,146.9 L1136.9,146.3 L1136.1,145.7 L1135.3,145.1 L1134.5,144.5 L1133.7,144.0 L1133.0,143.4 L1132.3,142.8 L1131.7,142.2 L1131.0,141.7 L1130.4,141.1 L1129.8,140.6 L1129.3,140.1 L1128.8,139.6 L1128.3,139.1 L1127.8,138.6 L1127.4,138.1 L1127.0,137.6 L1126.7,137.2 L1126.4,136.8 L1126.1,136.3 L1125.8,135.9 L1125.6,135.5 L1125.5,135.2 L1125.3,134.8 L1125.2,134.4 L1125.2,134.1 L1125.1,133.8 L1125.2,133.5 L1125.2,133.2 L1125.3,133.0 L1125.5,132.7 L1125.7,132.5 L1125.9,132.3 L1126.1,132.1 L1126.4,132.0 L1126.8,131.8 L1127.2,131.7 L1127.6,131.6 L1128.1,131.5 L1128.6,131.4 L1129.1,131.4 L1129.7,131.4 L1130.4,131.4 L1131.0,131.4 L1131.7,131.4 L1132.5,131.5 L1133.3,131.5 L1134.1,131.6 L1134.9,131.8 L1135.8,131.9 L1136.8,132.0 L1137.7,132.2 L1138.7,132.4 L1139.7,132.6 L1140.8,132.9 L1141.9,133.1 L1143.0,133.4 L1144.2,133.7 L1145.3,134.0 L1146.5,134.3 L1147.8,134.6 L1149.0,135.0 L1150.3,135.3 L1151.6,135.7 L1152.9,136.1 L1154.2,136.5 L1155.6,137.0 L1156.9,137.4 L1158.3,137.9 L1159.7,138.3 L1161.1,138.8 L1162.5,139.3 L1163.9,139.8 L1165.3,140.3 L1166.8,140.9 L1168.2,141.4 L1169.7,142.0 L1171.1,142.5 L1172.5,143.1 L1174.0,143.7 L1175.4,144.2 L1176.9,144.8 L1178.3,145.4 L1179.7,146.0 L1181.1,146.6 L1182.6,147.3 L1184.0,147.9 L1185.3,148.5 L1186.7,149.1 L1188.1,149.8 L1189.4,150.4 L1190.8,151.0 L1192.1,151.7 L1193.4,152.3 L1194.7,152.9 L1196.0,153.6 L1197.2,154.2 L1198.4,154.9 L1199.6,155.5 L1200.8,156.1 L1202.0,156.8 L1203.1,157.4 L1204.2,158.0 L1205.3,158.7 L1206.4,159.3 L1207.4,159.9 L1208.4,160.5 L1209.4,161.2 L1210.4,161.8 L1211.3,162.4 L1212.2,163.0 L1213.1,163.6 L1213.9,164.2 L1214.7,164.7 L1215.5,165.3 L1216.2,165.9 L1216.9,166.4 L1217.6,167.0 L1218.3,167.5 L1218.9,168.1 L1219.5,168.6 L1220.0,169.1 L1220.6,169.6 L1221.0,170.1 L1221.5,170.6 L1221.9,171.1 L1222.3,171.6 L1222.7,172.0 L1223.0,172.5 L1223.3,172.9 L1223.6,173.4 L1223.8,173.8 L1224.0,174.2 L1224.2,174.6 L1224.3,175.0 L1224.4,175.3 L1224.5,175.7 L1224.5,176.0 L1224.6,176.4 L1224.5,176.7 L1224.5,177.0 L1224.4,177.3 L1224.3,177.6 L1224.2,177.8 L1224.0,178.1 L1223.8,178.3 L1223.6,178.5 L1223.3,178.8 L1223.0,179.0 L1222.7,179.1 L1222.4,179.3 L1222.0,179.5 L1221.6,179.6 L1221.2,179.7 L1220.7,179.9 L1220.3,180.0 L1219.8,180.0 L1219.2,180.1 L1218.7,180.2 L1218.1,180.2 L1217.5,180.2 L1216.9,180.2 L1216.2,180.2 L1215.6,180.2 L1214.9,180.2 L1214.2,180.1 L1213.4,180.1 L1212.7,180.0 L1211.9,179.9 L1211.1,179.8 L1210.3,179.7 L1209.5,179.5 L1208.6,179.4 L1207.8,179.2 L1206.9,179.1 L1206.0,178.9 L1205.0,178.7 L1204.1,178.4 L1203.1,178.2 L1202.2,178.0 L1201.2,177.7 L1200.2,177.4 L1199.2,177.1 L1198.2,176.8 L1197.1,176.5 L1196.1,176.2 L1195.0,175.9 L1193.9,175.5 L1192.9,175.1 L1191.8,174.8 L1190.7,174.4 L1189.6,174.0 L1188.4,173.6 L1187.3,173.1 L1186.2,172.7 L1185.0,172.3 L1183.9,171.8 L1182.7,171.3 L1181.6,170.9 L1180.4,170.4 L1179.2,169.9 L1178.0,169.4 L1176.9,168.9 L1175.7,168.3 L1174.5,167.8 L1173.3,167.3 L1172.1,166.7 L1171.0,166.2 L1169.8,165.6 L1168.6,165.0 L1167.4,164.4 L1166.2,163.9 L1165.1,163.3 L1163.9,162.7 L1162.7,162.1 L1161.6,161.5 L1160.4,160.8 L1159.2,160.2 L1158.1,159.6 L1157.0,159.0 L1155.8,158.4 L1154.7,157.7"/>
</g>
<g fill="none" stroke-width="1.6" stroke-linecap="butt">
<path stroke="#c2df23" d="M881.7,90.8 L885.7,92.1 L889.6,93.6 L893.5,95.4 L897.4,97.5 L901.2,99.7 L905.0,102.2 L908.9,104.8 L912.7,107.6 L916.6,110.6 L920.5,113.6 L924.4,116.8 L928.3,120.1 L932.3,123.5 L936.2,127.0 L940.2,130.5 L944.1,134.1 L948.1,137.8 L952.1,141.5 L956.1,145.3 L960.0,149.1 L964.0,153.0 L967.9,156.9 L971.9,160.8 L975.8,164.8 L979.7,168.8 L983.6,172.8 L987.4,176.8 L991.2,180.9 L995.0,185.0"/>
<path stroke="#c2df23" d="M1057.5,173.3 L1057.7,173.7 L1057.8,174.0 L1058.0,174.4 L1058.1,174.8 L1058.3,175.2 L1058.4,175.5 L1058.6,175.9 L1058.7,176.3 L1058.9,176.7 L1059.0,177.0 L1059.1,177.4 L1059.3,177.8 L1059.4,178.2 L1059.6,178.5 L1059.7,178.9 L1059.9,179.3 L1060.0,179.7 L1060.2,180.1 L1060.3,180.4 L1060.4,180.8 L1060.6,181.2 L1060.7,181.6 L1060.9,181.9 L1061.0,182.3 L1061.1,182.7 L1061.3,183.1 L1061.4,183.4 L1061.6,183.8 L1061.7,184.2"/>
<path stroke="#52c569" d="M858.0,150.5 L858.1,150.9 L858.1,151.2 L858.2,151.6 L858.3,151.9 L858.3,152.3 L858.4,152.7 L858.5,153.0 L858.5,153.4 L858.6,153.7 L858.7,154.1 L858.7,154.5 L858.8,154.8 L858.9,155.2 L859.0,155.5 L859.0,155.9 L859.1,156.3 L859.2,156.6 L859.2,157.0 L859.3,157.4 L859.4,157.7 L859.4,158.1 L859.5,158.5 L859.6,158.8 L859.6,159.2 L859.7,159.5 L859.8,159.9 L859.9,160.3 L859.9,160.6 L860.0,161.0"/>
<path stroke="#52c569" d="M1037.5,125.0 L1037.0,125.6 L1036.5,126.2 L1036.1,126.8 L1035.7,127.5 L1035.2,128.1 L1034.8,128.8 L1034.4,129.5 L1034.0,130.1 L1033.7,130.8 L1033.3,131.6 L1032.9,132.3 L1032.6,133.0 L1032.3,133.8 L1031.9,134.5 L1031.6,135.3 L1031.3,136.1 L1031.0,136.8 L1030.7,137.6 L1030.5,138.4 L1030.2,139.3 L1029.9,140.1 L1029.7,140.9 L1029.4,141.8 L1029.2,142.6 L1028.9,143.5 L1028.7,144.3 L1028.5,145.2 L1028.2,146.1 L1028.0,147.0"/>
<path stroke="#86d549" d="M874.0,128.5 L874.3,129.1 L874.7,129.7 L875.0,130.2 L875.4,130.8 L875.7,131.4 L876.1,132.0 L876.4,132.6 L876.8,133.2 L877.1,133.8 L877.5,134.4 L877.8,135.0 L878.1,135.6 L878.5,136.2 L878.8,136.8 L879.2,137.4 L879.5,138.0 L879.9,138.6 L880.2,139.2 L880.6,139.8 L880.9,140.4 L881.2,141.0 L881.6,141.7 L881.9,142.3 L882.3,142.9 L882.6,143.5 L883.0,144.1 L883.3,144.8 L883.7,145.4 L884.0,146.0"/>
<path stroke="#2ab07f" d="M795.8,106.7 L795.4,107.2 L794.9,107.6 L794.5,108.1 L794.1,108.5 L793.6,109.0 L793.2,109.4 L792.7,109.9 L792.3,110.4 L791.9,110.8 L791.4,111.3 L791.0,111.7 L790.6,112.2 L790.1,112.6 L789.7,113.1 L789.3,113.6 L788.9,114.0 L788.4,114.5 L788.0,114.9 L787.6,115.4 L787.1,115.9 L786.7,116.3 L786.3,116.8 L785.9,117.2 L785.4,117.7 L785.0,118.2 L784.6,118.6 L784.1,119.1 L783.7,119.5 L783.3,120.0"/>
<path stroke="#2ab07f" d="M779.5,135.5 L779.3,135.7 L779.2,135.9 L779.0,136.1 L778.9,136.3 L778.7,136.4 L778.6,136.6 L778.4,136.8 L778.2,137.0 L778.1,137.2 L777.9,137.4 L777.8,137.6 L777.6,137.8 L777.5,138.0 L777.3,138.2 L777.2,138.3 L777.0,138.5 L776.8,138.7 L776.7,138.9 L776.5,139.1 L776.4,139.3 L776.2,139.5 L776.1,139.7 L775.9,139.9 L775.8,140.1 L775.6,140.2 L775.5,140.4 L775.3,140.6 L775.2,140.8 L775.0,141.0"/>
<path stroke="#2ab07f" d="M843.3,72.5 L842.9,73.0 L842.4,73.4 L842.0,73.9 L841.6,74.3 L841.1,74.8 L840.7,75.2 L840.3,75.7 L839.9,76.1 L839.4,76.6 L839.0,77.1 L838.6,77.5 L838.1,78.0 L837.7,78.4 L837.3,78.9 L836.8,79.3 L836.4,79.8 L836.0,80.3 L835.5,80.7 L835.1,81.2 L834.7,81.6 L834.2,82.1 L833.8,82.6 L833.4,83.0 L833.0,83.5 L832.5,84.0 L832.1,84.4 L831.7,84.9 L831.2,85.3 L830.8,85.8"/>
<path stroke="#2ab07f" d="M880.0,84.2 L879.7,84.7 L879.3,85.2 L879.0,85.6 L878.6,86.1 L878.3,86.6 L877.9,87.1 L877.6,87.6 L877.2,88.0 L876.9,88.5 L876.5,89.0 L876.2,89.5 L875.9,90.0 L875.5,90.4 L875.2,90.9 L874.8,91.4 L874.5,91.9 L874.1,92.4 L873.8,92.9 L873.4,93.3 L873.1,93.8 L872.8,94.3 L872.4,94.8 L872.1,95.3 L871.7,95.8 L871.4,96.3 L871.0,96.7 L870.7,97.2 L870.3,97.7 L870.0,98.2"/>
<path stroke="#2ab07f" d="M893.3,61.7 L893.0,62.0 L892.8,62.3 L892.5,62.6 L892.3,62.9 L892.0,63.2 L891.8,63.5 L891.5,63.8 L891.2,64.2 L891.0,64.5 L890.7,64.8 L890.5,65.1 L890.2,65.4 L890.0,65.7 L889.7,66.0 L889.4,66.3 L889.2,66.7 L888.9,67.0 L888.7,67.3 L888.4,67.6 L888.1,67.9 L887.9,68.2 L887.6,68.6 L887.4,68.9 L887.1,69.2 L886.8,69.5 L886.6,69.8 L886.3,70.2 L886.1,70.5 L885.8,70.8"/>
<path stroke="#2ab07f" d="M913.0,63.5 L912.1,64.4 L911.2,65.4 L910.3,66.3 L909.4,67.3 L908.5,68.4 L907.6,69.4 L906.8,70.5 L905.9,71.6 L905.0,72.8 L904.1,73.9 L903.3,75.1 L902.4,76.3 L901.5,77.5 L900.7,78.7 L899.8,79.9 L898.9,81.1 L898.0,82.4 L897.2,83.6 L896.3,84.9 L895.4,86.2 L894.5,87.5 L893.7,88.8 L892.8,90.1 L891.9,91.4 L891.0,92.7 L890.1,94.0 L889.3,95.3 L888.4,96.7 L887.5,98.0"/>
<path stroke="#2ab07f" d="M943.3,64.2 L943.0,64.1 L942.6,64.1 L942.3,64.1 L941.9,64.0 L941.6,64.0 L941.3,63.9 L940.9,63.9 L940.6,63.9 L940.3,63.8 L939.9,63.8 L939.6,63.8 L939.3,63.8 L939.0,63.7 L938.7,63.7 L938.4,63.7 L938.0,63.7 L937.7,63.7 L937.4,63.7 L937.1,63.6 L936.8,63.6 L936.5,63.6 L936.2,63.6 L935.9,63.6 L935.6,63.6 L935.3,63.7 L935.1,63.7 L934.8,63.7 L934.5,63.7 L934.2,63.7"/>
<path stroke="#2ab07f" d="M986.7,92.0 L986.3,91.9 L985.8,91.8 L985.4,91.7 L984.9,91.6 L984.5,91.6 L984.1,91.5 L983.7,91.4 L983.2,91.3 L982.8,91.2 L982.4,91.2 L982.0,91.1 L981.5,91.0 L981.1,90.9 L980.7,90.9 L980.3,90.8 L979.9,90.7 L979.5,90.7 L979.1,90.6 L978.7,90.5 L978.2,90.5 L977.8,90.4 L977.4,90.4 L977.0,90.3 L976.7,90.2 L976.3,90.2 L975.9,90.1 L975.5,90.1 L975.1,90.0 L974.7,90.0"/>
<path stroke="#2ab07f" d="M1005.0,114.2 L1004.7,114.3 L1004.5,114.3 L1004.2,114.4 L1004.0,114.4 L1003.7,114.5 L1003.5,114.6 L1003.2,114.6 L1003.0,114.7 L1002.7,114.8 L1002.5,114.8 L1002.2,114.9 L1002.0,115.0 L1001.7,115.0 L1001.5,115.1 L1001.3,115.2 L1001.0,115.2 L1000.8,115.3 L1000.5,115.4 L1000.3,115.5 L1000.1,115.6 L999.8,115.6 L999.6,115.7 L999.4,115.8 L999.1,115.9 L998.9,116.0 L998.7,116.0 L998.5,116.1 L998.2,116.2 L998.0,116.3"/>
<path stroke="#2ab07f" d="M955.0,143.3 L954.8,143.5 L954.6,143.7 L954.3,144.0 L954.1,144.2 L953.9,144.4 L953.7,144.6 L953.5,144.9 L953.2,145.1 L953.0,145.3 L952.8,145.5 L952.6,145.8 L952.4,146.0 L952.2,146.2 L951.9,146.5 L951.7,146.7 L951.5,146.9 L951.3,147.2 L951.1,147.4 L950.9,147.6 L950.6,147.9 L950.4,148.1 L950.2,148.3 L950.0,148.6 L949.8,148.8 L949.6,149.0 L949.3,149.3 L949.1,149.5 L948.9,149.8 L948.7,150.0"/>
<path stroke="#2ab07f" d="M981.7,145.0 L981.5,145.4 L981.3,145.7 L981.2,146.1 L981.0,146.5 L980.8,146.9 L980.7,147.2 L980.5,147.6 L980.3,148.0 L980.1,148.4 L980.0,148.8 L979.8,149.2 L979.6,149.5 L979.4,149.9 L979.3,150.3 L979.1,150.7 L978.9,151.1 L978.8,151.5 L978.6,151.9 L978.4,152.2 L978.2,152.6 L978.1,153.0 L977.9,153.4 L977.7,153.8 L977.6,154.2 L977.4,154.6 L977.2,155.0 L977.0,155.4 L976.9,155.8 L976.7,156.2"/>
<path stroke="#2ab07f" d="M1058.3,160.0 L1058.1,160.2 L1057.9,160.3 L1057.8,160.5 L1057.6,160.7 L1057.4,160.8 L1057.2,161.0 L1057.1,161.2 L1056.9,161.3 L1056.7,161.5 L1056.5,161.7 L1056.4,161.8 L1056.2,162.0 L1056.0,162.2 L1055.8,162.3 L1055.7,162.5 L1055.5,162.7 L1055.3,162.9 L1055.1,163.0 L1055.0,163.2 L1054.8,163.4 L1054.6,163.6 L1054.5,163.7 L1054.3,163.9 L1054.1,164.1 L1054.0,164.3 L1053.8,164.5 L1053.6,164.6 L1053.5,164.8 L1053.3,165.0"/>
<path stroke="#2ab07f" d="M1066.7,169.2 L1066.4,169.4 L1066.2,169.5 L1066.0,169.7 L1065.7,169.8 L1065.5,170.0 L1065.2,170.2 L1065.0,170.3 L1064.7,170.5 L1064.5,170.7 L1064.2,170.8 L1064.0,171.0 L1063.7,171.2 L1063.5,171.4 L1063.3,171.5 L1063.0,171.7 L1062.8,171.9 L1062.5,172.0 L1062.3,172.2 L1062.1,172.4 L1061.8,172.6 L1061.6,172.7 L1061.3,172.9 L1061.1,173.1 L1060.9,173.3 L1060.6,173.5 L1060.4,173.7 L1060.2,173.8 L1059.9,174.0 L1059.7,174.2"/>
<path stroke="#2ab07f" d="M1077.5,165.8 L1077.3,166.0 L1077.1,166.2 L1077.0,166.4 L1076.8,166.6 L1076.6,166.8 L1076.4,167.0 L1076.2,167.2 L1076.1,167.4 L1075.9,167.6 L1075.7,167.9 L1075.5,168.1 L1075.4,168.3 L1075.2,168.5 L1075.0,168.7 L1074.9,168.9 L1074.7,169.1 L1074.5,169.4 L1074.3,169.6 L1074.2,169.8 L1074.0,170.0 L1073.8,170.2 L1073.7,170.4 L1073.5,170.7 L1073.3,170.9 L1073.2,171.1 L1073.0,171.3 L1072.8,171.6 L1072.7,171.8 L1072.5,172.0"/>
<path stroke="#2ab07f" d="M856.5,160.5 L856.4,160.7 L856.3,160.9 L856.1,161.1 L856.0,161.3 L855.9,161.4 L855.8,161.6 L855.7,161.8 L855.5,162.0 L855.4,162.2 L855.3,162.4 L855.2,162.6 L855.0,162.8 L854.9,163.0 L854.8,163.2 L854.7,163.3 L854.6,163.5 L854.4,163.7 L854.3,163.9 L854.2,164.1 L854.1,164.3 L854.0,164.5 L853.8,164.7 L853.7,164.9 L853.6,165.1 L853.5,165.2 L853.4,165.4 L853.2,165.6 L853.1,165.8 L853.0,166.0"/>
<path stroke="#2ab07f" d="M845.0,166.5 L844.9,166.7 L844.8,166.8 L844.7,167.0 L844.6,167.1 L844.5,167.3 L844.4,167.4 L844.3,167.6 L844.2,167.7 L844.1,167.9 L844.0,168.1 L843.9,168.2 L843.8,168.4 L843.7,168.5 L843.5,168.7 L843.4,168.8 L843.3,169.0 L843.2,169.1 L843.1,169.3 L843.0,169.4 L842.9,169.6 L842.8,169.8 L842.7,169.9 L842.6,170.1 L842.5,170.2 L842.4,170.4 L842.3,170.5 L842.2,170.7 L842.1,170.8 L842.0,171.0"/>
<path stroke="#8c8c8c" d="M856.5,139.5 L856.8,139.6 L857.2,139.8 L857.5,139.9 L857.9,140.1 L858.2,140.2 L858.6,140.3 L858.9,140.5 L859.3,140.6 L859.6,140.8 L860.0,140.9 L860.3,141.1 L860.7,141.2 L861.0,141.4 L861.4,141.5 L861.7,141.7 L862.1,141.9 L862.4,142.0 L862.7,142.2 L863.1,142.3 L863.4,142.5 L863.8,142.7 L864.1,142.8 L864.5,143.0 L864.8,143.2 L865.1,143.3 L865.5,143.5 L865.8,143.7 L866.2,143.8 L866.5,144.0"/>
<path stroke="#8c8c8c" d="M922.5,89.2 L922.7,89.1 L922.9,88.9 L923.1,88.8 L923.3,88.7 L923.5,88.6 L923.7,88.4 L923.9,88.3 L924.1,88.2 L924.3,88.1 L924.5,87.9 L924.7,87.8 L924.9,87.7 L925.1,87.6 L925.3,87.5 L925.5,87.3 L925.7,87.2 L925.9,87.1 L926.1,87.0 L926.3,86.9 L926.5,86.8 L926.7,86.7 L926.9,86.5 L927.1,86.4 L927.3,86.3 L927.5,86.2 L927.7,86.1 L927.9,86.0 L928.1,85.9 L928.3,85.8"/>
<path stroke="#8c8c8c" d="M950.8,100.8 L951.0,100.5 L951.1,100.2 L951.3,100.0 L951.4,99.7 L951.6,99.4 L951.8,99.1 L951.9,98.9 L952.1,98.6 L952.3,98.3 L952.4,98.1 L952.6,97.8 L952.8,97.5 L952.9,97.3 L953.1,97.0 L953.3,96.7 L953.4,96.5 L953.6,96.2 L953.8,96.0 L954.0,95.7 L954.1,95.5 L954.3,95.2 L954.5,95.0 L954.7,94.7 L954.9,94.5 L955.1,94.2 L955.2,94.0 L955.4,93.8 L955.6,93.5 L955.8,93.3"/>
<path stroke="#8c8c8c" d="M963.3,111.7 L963.4,111.5 L963.6,111.4 L963.7,111.2 L963.9,111.1 L964.0,110.9 L964.1,110.8 L964.3,110.6 L964.4,110.5 L964.6,110.3 L964.7,110.2 L964.8,110.0 L965.0,109.9 L965.1,109.7 L965.3,109.6 L965.4,109.5 L965.6,109.3 L965.7,109.2 L965.9,109.0 L966.0,108.9 L966.2,108.7 L966.3,108.6 L966.4,108.5 L966.6,108.3 L966.7,108.2 L966.9,108.0 L967.0,107.9 L967.2,107.8 L967.3,107.6 L967.5,107.5"/>
<path stroke="#8c8c8c" d="M970.0,142.5 L970.4,142.3 L970.7,142.1 L971.1,141.8 L971.4,141.6 L971.8,141.4 L972.2,141.2 L972.5,141.0 L972.9,140.7 L973.3,140.5 L973.6,140.3 L974.0,140.1 L974.4,139.9 L974.7,139.7 L975.1,139.5 L975.5,139.3 L975.9,139.1 L976.2,138.9 L976.6,138.7 L977.0,138.5 L977.4,138.3 L977.7,138.1 L978.1,138.0 L978.5,137.8 L978.9,137.6 L979.3,137.4 L979.6,137.2 L980.0,137.0 L980.4,136.9 L980.8,136.7"/>
<path stroke="#8c8c8c" d="M970.8,150.8 L971.9,150.6 L973.0,150.5 L974.1,150.3 L975.2,150.2 L976.4,150.1 L977.5,150.0 L978.6,149.8 L979.8,149.7 L980.9,149.7 L982.0,149.6 L983.2,149.5 L984.4,149.5 L985.5,149.4 L986.7,149.4 L987.9,149.3 L989.1,149.3 L990.2,149.3 L991.4,149.3 L992.6,149.3 L993.8,149.4 L995.1,149.4 L996.3,149.4 L997.5,149.5 L998.7,149.5 L1000.0,149.6 L1001.2,149.7 L1002.5,149.8 L1003.7,149.9 L1005.0,150.0"/>
<path stroke="#8c8c8c" d="M988.3,170.0 L989.5,169.7 L990.7,169.3 L991.9,169.0 L993.2,168.7 L994.4,168.4 L995.6,168.1 L996.9,167.9 L998.1,167.6 L999.4,167.3 L1000.6,167.1 L1001.9,166.9 L1003.1,166.7 L1004.4,166.4 L1005.7,166.2 L1007.0,166.1 L1008.3,165.9 L1009.6,165.7 L1010.9,165.6 L1012.2,165.4 L1013.5,165.3 L1014.9,165.2 L1016.2,165.1 L1017.5,165.0 L1018.9,164.9 L1020.3,164.9 L1021.6,164.8 L1023.0,164.8 L1024.4,164.7 L1025.8,164.7"/>
<path stroke="#8c8c8c" d="M1063.3,142.5 L1064.4,142.7 L1065.5,142.9 L1066.5,143.2 L1067.6,143.4 L1068.7,143.7 L1069.8,143.9 L1070.9,144.2 L1072.1,144.4 L1073.2,144.7 L1074.3,144.9 L1075.4,145.2 L1076.6,145.5 L1077.7,145.8 L1078.9,146.0 L1080.0,146.3 L1081.2,146.6 L1082.3,146.9 L1083.5,147.2 L1084.7,147.5 L1085.9,147.8 L1087.0,148.1 L1088.2,148.5 L1089.4,148.8 L1090.6,149.1 L1091.8,149.4 L1093.0,149.8 L1094.3,150.1 L1095.5,150.5 L1096.7,150.8"/>
</g>
<g fill="#ff5533">
<rect x="993.8" y="183.8" width="2.4" height="2.4"/>
<rect x="1060.5" y="183.0" width="2.4" height="2.4"/>
<rect x="858.8" y="159.8" width="2.4" height="2.4"/>
<rect x="1026.8" y="145.8" width="2.4" height="2.4"/>
<rect x="882.8" y="144.8" width="2.4" height="2.4"/>
<rect x="782.1" y="118.8" width="2.4" height="2.4"/>
<rect x="773.8" y="139.8" width="2.4" height="2.4"/>
<rect x="829.6" y="84.6" width="2.4" height="2.4"/>
<rect x="868.8" y="97.0" width="2.4" height="2.4"/>
<rect x="884.6" y="69.6" width="2.4" height="2.4"/>
<rect x="886.3" y="96.8" width="2.4" height="2.4"/>
<rect x="933.0" y="62.5" width="2.4" height="2.4"/>
<rect x="973.5" y="88.8" width="2.4" height="2.4"/>
<rect x="996.8" y="115.1" width="2.4" height="2.4"/>
<rect x="947.5" y="148.8" width="2.4" height="2.4"/>
<rect x="975.5" y="155.0" width="2.4" height="2.4"/>
<rect x="1052.1" y="163.8" width="2.4" height="2.4"/>
<rect x="1058.5" y="173.0" width="2.4" height="2.4"/>
<rect x="1071.3" y="170.8" width="2.4" height="2.4"/>
<rect x="851.8" y="164.8" width="2.4" height="2.4"/>
<rect x="840.8" y="169.8" width="2.4" height="2.4"/>
</g>
<g stroke="#ff0000" stroke-width="1.2">
<path d="M395.5,236.3 H400.70000000000005 M398.1,233.70000000000002 V238.9"/>
<path d="M381.09999999999997,240.2 H386.3 M383.7,237.6 V242.79999999999998"/>
<path d="M380.0,243.3 H385.20000000000005 M382.6,240.70000000000002 V245.9"/>
<path d="M456.59999999999997,235.3 H461.8 M459.2,232.70000000000002 V237.9"/>
<path d="M490.7,341.7 H495.90000000000003 M493.3,339.09999999999997 V344.3"/>
<path d="M1149.9,135 H1155.1 M1152.5,132.4 V137.6"/>
<path d="M1149.9,139.5 H1155.1 M1152.5,136.9 V142.1"/>
<path d="M1162.9,148.5 H1168.1 M1165.5,145.9 V151.1"/>
<path d="M1160.9,155.5 H1166.1 M1163.5,152.9 V158.1"/>
<path d="M1173.4,156 H1178.6 M1176,153.4 V158.6"/>
<path d="M1180.9,152 H1186.1 M1183.5,149.4 V154.6"/>
<path d="M1184.4,158.5 H1189.6 M1187,155.9 V161.1"/>
<path d="M1175.4,162.5 H1180.6 M1178,159.9 V165.1"/>
<path d="M1179.9,161 H1185.1 M1182.5,158.4 V163.6"/>
<path d="M1171.4,161 H1176.6 M1174,158.4 V163.6"/>
<path d="M1182.4,163 H1187.6 M1185,160.4 V165.6"/>
</g>
<g font-family="Liberation Sans, sans-serif" font-size="10.9" fill="#fff" text-anchor="middle">
<text x="491.7" y="344.9">AHY</text>
<text x="384.2" y="243.3">COM</text>
<text x="464.2" y="243.3">JLE</text>
<text x="1175.8" y="159.6">QUA</text>
</g>
<g font-family="Liberation Mono, monospace" font-size="14.7" fill="#fff" xml:space="preserve">
<text x="316.60" y="30.00" textLength="50.00" lengthAdjust="spacingAndGlyphs">UK006J</text>
<text x="316.60" y="43.15" textLength="316.65" lengthAdjust="spacingAndGlyphs">Beg: 20260102 17:53:01 (sol = 281.99°)</text>
<text x="316.60" y="56.30" textLength="316.65" lengthAdjust="spacingAndGlyphs">End: 20260103 06:51:45 (sol = 282.54°)</text>
<text x="316.60" y="69.45" textLength="316.65" lengthAdjust="spacingAndGlyphs">--------------------------------------</text>
<text x="316.60" y="82.60" textLength="58.33" lengthAdjust="spacingAndGlyphs">QUA: 15</text>
<text x="316.60" y="95.75" textLength="50.00" lengthAdjust="spacingAndGlyphs">...: 8</text>
<text x="316.60" y="108.90" textLength="50.00" lengthAdjust="spacingAndGlyphs">AHY: 3</text>
<text x="316.60" y="122.05" textLength="50.00" lengthAdjust="spacingAndGlyphs">COM: 3</text>
<text x="316.60" y="135.20" textLength="50.00" lengthAdjust="spacingAndGlyphs">JLE: 1</text>
</g>
<g font-family="Liberation Sans, sans-serif" font-size="32.5" fill="#5a5a5a">
<text transform="translate(149.5,697.40) rotate(-90) scale(0.8111,1)">APR</text>
<text transform="translate(295.4,700.00) rotate(-90) scale(0.8203,1)">MAY</text>
<text transform="translate(436.5,691.80) rotate(-90) scale(0.7851,1)">JUN</text>
<text transform="translate(576.5,686.80) rotate(-90) scale(0.7891,1)">JUL</text>
<text transform="translate(724.5,700.80) rotate(-90) scale(0.8179,1)">AUG</text>
<text transform="translate(872.5,693.80) rotate(-90) scale(0.7627,1)">SEP</text>
<text transform="translate(1017.1,700.80) rotate(-90) scale(0.8541,1)">OCT</text>
<text transform="translate(1169.5,702.80) rotate(-90) scale(0.8321,1)">NOV</text>
<text transform="translate(1319.1,699.80) rotate(-90) scale(0.8104,1)">DEC</text>
<text transform="translate(1469.8,689.10) rotate(-90) scale(0.7639,1)">JAN</text>
<text transform="translate(1629.1,695.30) rotate(-90) scale(0.7736,1)">FEB</text>
<text transform="translate(1765.8,704.50) rotate(-90) scale(0.8184,1)">MAR</text>
</g>
<g stroke="#ff0000" stroke-width="1.4" stroke-dasharray="5.1 2.2">
<path d="M1402.5,641.4 V842.5"/>
<path d="M1405.5,641.4 V842.5"/>
</g>
<g stroke-width="4">
<path stroke="#c2df23" d="M106,834.10 H130"/>
<path stroke="#c2df23" d="M165,834.10 H345"/>
<path stroke="#c2df23" d="M365.8,834.10 H625"/>
<path stroke="#c2df23" d="M635.8,834.10 H787"/>
<path stroke="#c2df23" d="M806.8,834.10 H900"/>
<path stroke="#c2df23" d="M920.2,834.10 H973"/>
<path stroke="#c2df23" d="M984,834.10 H1065.9"/>
<path stroke="#c2df23" d="M1082,834.10 H1204"/>
<path stroke="#c2df23" d="M1244,834.10 H1325.9"/>
<path stroke="#c2df23" d="M1337.1,834.10 H1355.8"/>
<path stroke="#c2df23" d="M1381.1,834.10 H1443.8"/>
<path stroke="#c2df23" d="M1459,834.10 H1511.9"/>
<path stroke="#c2df23" d="M1523.2,834.10 H1546.8"/>
<path stroke="#c2df23" d="M1724.2,834.10 H1747.8"/>
<path stroke="#c2df23" d="M1758.1,834.10 H1781.8"/>
<path stroke="#86d549" d="M165,817.75 H189"/>
<path stroke="#86d549" d="M224,817.75 H287"/>
<path stroke="#86d549" d="M312,817.75 H341"/>
<path stroke="#86d549" d="M365.8,817.75 H493"/>
<path stroke="#86d549" d="M508,817.75 H653.8"/>
<path stroke="#86d549" d="M704.2,817.75 H737.9"/>
<path stroke="#86d549" d="M773.1,817.75 H845.7"/>
<path stroke="#86d549" d="M871,817.75 H988"/>
<path stroke="#86d549" d="M1003.2,817.75 H1017"/>
<path stroke="#86d549" d="M1062,817.75 H1212.8"/>
<path stroke="#86d549" d="M1244,817.75 H1266.9"/>
<path stroke="#86d549" d="M1293.1,817.75 H1315.8"/>
<path stroke="#86d549" d="M1342,817.75 H1364.8"/>
<path stroke="#86d549" d="M1386,817.75 H1428.8"/>
<path stroke="#86d549" d="M1459,817.75 H1482.9"/>
<path stroke="#86d549" d="M1548,817.75 H1571"/>
<path stroke="#52c569" d="M165,801.40 H189"/>
<path stroke="#52c569" d="M258,801.40 H488"/>
<path stroke="#52c569" d="M508,801.40 H615"/>
<path stroke="#52c569" d="M626,801.40 H718"/>
<path stroke="#52c569" d="M729.1,801.40 H825.9"/>
<path stroke="#52c569" d="M949.1,801.40 H1149.9"/>
<path stroke="#52c569" d="M1160,801.40 H1248"/>
<path stroke="#52c569" d="M1258.1,801.40 H1443.8"/>
<path stroke="#52c569" d="M1459,801.40 H1482.9"/>
<path stroke="#52c569" d="M1553.2,801.40 H1575.8"/>
<path stroke="#2ab07f" d="M194,785.05 H218"/>
<path stroke="#2ab07f" d="M322,785.05 H507"/>
<path stroke="#2ab07f" d="M518,785.05 H542"/>
<path stroke="#2ab07f" d="M557,785.05 H684"/>
<path stroke="#2ab07f" d="M806.8,785.05 H831"/>
<path stroke="#2ab07f" d="M954.3,785.05 H973"/>
<path stroke="#2ab07f" d="M989.1,785.05 H1125"/>
<path stroke="#2ab07f" d="M1155.2,785.05 H1217.9"/>
<path stroke="#2ab07f" d="M1244,785.05 H1266.9"/>
<path stroke="#2ab07f" d="M1317.1,785.05 H1341"/>
<path stroke="#2ab07f" d="M1396,785.05 H1418.9"/>
<path stroke="#2ab07f" d="M1464,785.05 H1649.8"/>
<path stroke="#1e9b8a" d="M341,768.70 H370"/>
<path stroke="#1e9b8a" d="M410,768.70 H448"/>
<path stroke="#1e9b8a" d="M469,768.70 H493"/>
<path stroke="#1e9b8a" d="M528,768.70 H546"/>
<path stroke="#1e9b8a" d="M562,768.70 H591"/>
<path stroke="#1e9b8a" d="M616,768.70 H649"/>
<path stroke="#1e9b8a" d="M959,768.70 H988"/>
<path stroke="#1e9b8a" d="M1062,768.70 H1085.9"/>
<path stroke="#1e9b8a" d="M1101.1,768.70 H1125"/>
<path stroke="#1e9b8a" d="M1160,768.70 H1193.9"/>
<path stroke="#1e9b8a" d="M1249.1,768.70 H1271.8"/>
<path stroke="#1e9b8a" d="M1425.1,768.70 H1511.9"/>
<path stroke="#25858e" d="M420,752.35 H444"/>
<path stroke="#25858e" d="M533,752.35 H556"/>
<path stroke="#25858e" d="M567,752.35 H591"/>
<path stroke="#25858e" d="M621,752.35 H743"/>
<path stroke="#25858e" d="M969,752.35 H1135"/>
<path stroke="#25858e" d="M1185.1,752.35 H1345.9"/>
<path stroke="#25858e" d="M1468.9,752.35 H1493"/>
<path stroke="#2d708e" d="M430,736.00 H453"/>
<path stroke="#2d708e" d="M577,736.00 H733"/>
<path stroke="#2d708e" d="M994,736.00 H1104.8"/>
<path stroke="#2d708e" d="M1116,736.00 H1222.9"/>
<path stroke="#2d708e" d="M1263,736.00 H1292"/>
<path stroke="#2d708e" d="M1489.1,736.00 H1511.9"/>
<path stroke="#38588c" d="M592,719.65 H615"/>
<path stroke="#38588c" d="M655,719.65 H772"/>
<path stroke="#38588c" d="M1072,719.65 H1242.9"/>
<path stroke="#38588c" d="M1263,719.65 H1286.9"/>
<path stroke="#433e85" d="M595.9,703.30 H733"/>
<path stroke="#433e85" d="M1092,703.30 H1120"/>
<path stroke="#433e85" d="M1200,703.30 H1222.9"/>
<path stroke="#433e85" d="M1272.9,703.30 H1325.9"/>
<path stroke="#482173" d="M1110.8,686.95 H1135"/>
</g>
<g stroke="#7a7a7a" stroke-width="1.7" stroke-dasharray="1.8 3.7">
<path d="M72.9,641.4 V842.5"/>
<path d="M217,641.4 V842.5"/>
<path d="M363.8,641.4 V842.5"/>
<path d="M504,641.4 V842.5"/>
<path d="M649.5,641.4 V842.5"/>
<path d="M795.8,641.4 V842.5"/>
<path d="M938.7,641.4 V842.5"/>
<path d="M1089.75,641.4 V842.5"/>
<path d="M1237.9,641.4 V842.5"/>
<path d="M1391.9,641.4 V842.5"/>
<path d="M1546.8,641.4 V842.5"/>
<path d="M1686.2,641.4 V842.5"/>
</g>
<g stroke="#fff" stroke-width="2">
<path d="M113.6,834.1 H122.0 M117.8,829.4 V838.8"/>
<path d="M240.5,834.1 H248.9 M244.7,829.4 V838.8"/>
<path d="M510.5,834.1 H518.9 M514.7,829.4 V838.8"/>
<path d="M706.8,834.1 H715.2 M711.0,829.4 V838.8"/>
<path d="M833.4,834.1 H841.8 M837.6,829.4 V838.8"/>
<path d="M961.8,834.1 H970.2 M966.0,829.4 V838.8"/>
<path d="M986.2,834.1 H994.6 M990.4,829.4 V838.8"/>
<path d="M1116.4,834.1 H1124.8 M1120.6,829.4 V838.8"/>
<path d="M1295.5,834.1 H1303.9 M1299.7,829.4 V838.8"/>
<path d="M1341.5,834.1 H1349.9 M1345.7,829.4 V838.8"/>
<path d="M1412.5,834.1 H1420.9 M1416.7,829.4 V838.8"/>
<path d="M1481.6,834.1 H1490.0 M1485.8,829.4 V838.8"/>
<path d="M1530.5,834.1 H1538.9 M1534.7,829.4 V838.8"/>
<path d="M1731.3,834.1 H1739.7 M1735.5,829.4 V838.8"/>
<path d="M1765.2,834.1 H1773.6 M1769.4,829.4 V838.8"/>
<path d="M172.5,817.8 H180.9 M176.7,813.0 V822.5"/>
<path d="M255.5,817.8 H263.9 M259.7,813.0 V822.5"/>
<path d="M323.6,817.8 H332.0 M327.8,813.0 V822.5"/>
<path d="M437.8,817.8 H446.2 M442.0,813.0 V822.5"/>
<path d="M598.8,817.8 H607.2 M603.0,813.0 V822.5"/>
<path d="M716.5,817.8 H724.9 M720.7,813.0 V822.5"/>
<path d="M793.5,817.8 H801.9 M797.7,813.0 V822.5"/>
<path d="M939.4,817.8 H947.8 M943.6,813.0 V822.5"/>
<path d="M1005.4,817.8 H1013.8 M1009.6,813.0 V822.5"/>
<path d="M1152.5,817.8 H1160.9 M1156.7,813.0 V822.5"/>
<path d="M1250.6,817.8 H1259.0 M1254.8,813.0 V822.5"/>
<path d="M1299.7,817.8 H1308.1 M1303.9,813.0 V822.5"/>
<path d="M1349.6,817.8 H1358.0 M1353.8,813.0 V822.5"/>
<path d="M1402.4,817.8 H1410.8 M1406.6,813.0 V822.5"/>
<path d="M1466.6,817.8 H1475.0 M1470.8,813.0 V822.5"/>
<path d="M1554.8,817.8 H1563.2 M1559.0,813.0 V822.5"/>
<path d="M174.5,801.4 H182.9 M178.7,796.7 V806.1"/>
<path d="M378.5,801.4 H386.9 M382.7,796.7 V806.1"/>
<path d="M544.5,801.4 H552.9 M548.7,796.7 V806.1"/>
<path d="M682.8,801.4 H691.2 M687.0,796.7 V806.1"/>
<path d="M741.6,801.4 H750.0 M745.8,796.7 V806.1"/>
<path d="M1074.5,801.4 H1083.0 M1078.8,796.7 V806.1"/>
<path d="M1216.3,801.4 H1224.7 M1220.5,796.7 V806.1"/>
<path d="M1304.3,801.4 H1312.7 M1308.5,796.7 V806.1"/>
<path d="M1466.6,801.4 H1475.0 M1470.8,796.7 V806.1"/>
<path d="M1559.7,801.4 H1568.1 M1563.9,796.7 V806.1"/>
<path d="M201.6,785.1 H210.0 M205.8,780.4 V789.8"/>
<path d="M400.5,785.1 H408.9 M404.7,780.4 V789.8"/>
<path d="M525.8,785.1 H534.2 M530.0,780.4 V789.8"/>
<path d="M638.6,785.1 H647.0 M642.8,780.4 V789.8"/>
<path d="M814.5,785.1 H823.0 M818.8,780.4 V789.8"/>
<path d="M959.6,785.1 H968.0 M963.8,780.4 V789.8"/>
<path d="M1040.6,785.1 H1049.0 M1044.8,780.4 V789.8"/>
<path d="M1187.4,785.1 H1195.8 M1191.6,780.4 V789.8"/>
<path d="M1250.6,785.1 H1259.0 M1254.8,780.4 V789.8"/>
<path d="M1324.5,785.1 H1332.9 M1328.7,780.4 V789.8"/>
<path d="M1402.4,785.1 H1410.8 M1406.6,780.4 V789.8"/>
<path d="M1545.3,785.1 H1553.7 M1549.5,780.4 V789.8"/>
<path d="M355.5,768.7 H363.9 M359.7,764.0 V773.4"/>
<path d="M426.6,768.7 H435.0 M430.8,764.0 V773.4"/>
<path d="M476.5,768.7 H484.9 M480.7,764.0 V773.4"/>
<path d="M535.5,768.7 H543.9 M539.7,764.0 V773.4"/>
<path d="M570.5,768.7 H578.9 M574.7,764.0 V773.4"/>
<path d="M630.5,768.7 H638.9 M634.7,764.0 V773.4"/>
<path d="M973.7,768.7 H982.1 M977.9,764.0 V773.4"/>
<path d="M1069.4,768.7 H1077.8 M1073.6,764.0 V773.4"/>
<path d="M1108.5,768.7 H1116.9 M1112.7,764.0 V773.4"/>
<path d="M1177.6,768.7 H1186.0 M1181.8,764.0 V773.4"/>
<path d="M1255.4,768.7 H1263.8 M1259.6,764.0 V773.4"/>
<path d="M1466.6,768.7 H1475.0 M1470.8,764.0 V773.4"/>
<path d="M427.6,752.4 H436.0 M431.8,747.6 V757.1"/>
<path d="M539.8,752.4 H548.2 M544.0,747.6 V757.1"/>
<path d="M574.5,752.4 H582.9 M578.7,747.6 V757.1"/>
<path d="M703.6,752.4 H712.0 M707.8,747.6 V757.1"/>
<path d="M1094.7,752.4 H1103.1 M1098.9,747.6 V757.1"/>
<path d="M1270.4,752.4 H1278.8 M1274.6,747.6 V757.1"/>
<path d="M1476.6,752.4 H1485.0 M1480.8,747.6 V757.1"/>
<path d="M437.6,736.0 H446.0 M441.8,731.3 V740.7"/>
<path d="M630.5,736.0 H638.9 M634.7,731.3 V740.7"/>
<path d="M1038.4,736.0 H1046.8 M1042.6,731.3 V740.7"/>
<path d="M1167.7,736.0 H1176.1 M1171.9,731.3 V740.7"/>
<path d="M1274.6,736.0 H1283.0 M1278.8,731.3 V740.7"/>
<path d="M1496.6,736.0 H1505.0 M1500.8,731.3 V740.7"/>
<path d="M598.6,719.6 H607.0 M602.8,714.9 V724.4"/>
<path d="M726.5,719.6 H735.0 M730.8,714.9 V724.4"/>
<path d="M1187.4,719.6 H1195.8 M1191.6,714.9 V724.4"/>
<path d="M1270.4,719.6 H1278.8 M1274.6,714.9 V724.4"/>
<path d="M687.7,703.3 H696.1 M691.9,698.6 V708.0"/>
<path d="M1101.7,703.3 H1110.1 M1105.9,698.6 V708.0"/>
<path d="M1206.6,703.3 H1215.0 M1210.8,698.6 V708.0"/>
<path d="M1299.7,703.3 H1308.1 M1303.9,698.6 V708.0"/>
<path d="M1118.5,687.0 H1127.0 M1122.8,682.2 V691.7"/>
</g>
<g font-family="Liberation Sans, sans-serif" font-size="10" fill="#fff" text-anchor="middle">
<text x="118.0" y="831.8">KSE</text>
<text x="255.0" y="831.8">ETA</text>
<text x="495.4" y="831.8">NZC</text>
<text x="711.4" y="831.8">NDA</text>
<text x="853.4" y="831.8">SPE</text>
<text x="946.6" y="831.8">ARD</text>
<text x="1025.0" y="831.8">EGE</text>
<text x="1143.0" y="831.8">NTA</text>
<text x="1285.0" y="831.8">MON</text>
<text x="1346.4" y="831.8">URS</text>
<text x="1412.4" y="831.8">AHY</text>
<text x="1485.5" y="831.8">GUM</text>
<text x="1535.0" y="831.8">OHY</text>
<text x="1736.0" y="831.8">XHE</text>
<text x="1769.9" y="831.8">EVI</text>
<text x="177.0" y="815.5">AVB</text>
<text x="255.5" y="815.5">ELY</text>
<text x="326.5" y="815.5">CAM</text>
<text x="429.4" y="815.5">SSG</text>
<text x="580.9" y="815.5">PCA</text>
<text x="721.0" y="815.5">AUD</text>
<text x="809.4" y="815.5">AUR</text>
<text x="929.5" y="815.5">DSX</text>
<text x="1010.1" y="815.5">OCU</text>
<text x="1137.4" y="815.5">OER</text>
<text x="1255.5" y="815.5">DKD</text>
<text x="1304.4" y="815.5">DSV</text>
<text x="1353.4" y="815.5">ALY</text>
<text x="1407.4" y="815.5">JLE</text>
<text x="1471.0" y="815.5">SCC</text>
<text x="1559.5" y="815.5">FEV</text>
<text x="177.0" y="799.1">LYR</text>
<text x="373.0" y="799.1">JMC</text>
<text x="561.5" y="799.1">JPE</text>
<text x="672.0" y="799.1">PAU</text>
<text x="777.5" y="799.1">NIA</text>
<text x="1049.5" y="799.1">STA</text>
<text x="1204.0" y="799.1">NOO</text>
<text x="1350.9" y="799.1">COM</text>
<text x="1471.0" y="799.1">NCC</text>
<text x="1564.5" y="799.1">FED</text>
<text x="206.0" y="782.8">HVI</text>
<text x="414.5" y="782.8">ARI</text>
<text x="530.0" y="782.8">SZC</text>
<text x="620.5" y="782.8">CAP</text>
<text x="818.9" y="782.8">NUE</text>
<text x="963.6" y="782.8">OCT</text>
<text x="1057.0" y="782.8">ORI</text>
<text x="1186.6" y="782.8">AMO</text>
<text x="1255.5" y="782.8">DPC</text>
<text x="1329.0" y="782.8">XVI</text>
<text x="1407.5" y="782.8">QUA</text>
<text x="1556.9" y="782.8">AAN</text>
<text x="355.5" y="766.4">TAH</text>
<text x="429.0" y="766.4">JEA</text>
<text x="481.0" y="766.4">JIP</text>
<text x="537.0" y="766.4">PPS</text>
<text x="576.5" y="766.4">ZCS</text>
<text x="632.5" y="766.4">GDR</text>
<text x="973.5" y="766.4">DRA</text>
<text x="1074.0" y="766.4">LUM</text>
<text x="1113.0" y="766.4">RPU</text>
<text x="1177.0" y="766.4">THA</text>
<text x="1260.4" y="766.4">PSU</text>
<text x="1468.5" y="766.4">XCB</text>
<text x="432.0" y="750.1">JRC</text>
<text x="544.5" y="750.1">CAN</text>
<text x="579.0" y="750.1">FAN</text>
<text x="682.0" y="750.1">PER</text>
<text x="1052.0" y="750.1">CTA</text>
<text x="1265.5" y="750.1">HYD</text>
<text x="1481.0" y="750.1">XUM</text>
<text x="441.5" y="733.7">COR</text>
<text x="655.0" y="733.7">SDA</text>
<text x="1049.4" y="733.7">LMI</text>
<text x="1169.5" y="733.7">LEO</text>
<text x="1277.5" y="733.7">EHY</text>
<text x="1500.5" y="733.7">ECV</text>
<text x="603.5" y="717.4">JXA</text>
<text x="713.5" y="717.4">KCG</text>
<text x="1157.5" y="717.4">AND</text>
<text x="1275.0" y="717.4">DAD</text>
<text x="664.5" y="701.0">ERI</text>
<text x="1106.0" y="701.0">SLD</text>
<text x="1211.5" y="701.0">ORS</text>
<text x="1299.4" y="701.0">GEM</text>
<text x="1122.9" y="684.7">KUM</text>
</g>
<rect x="20.6" y="641.4" width="1764.9" height="201.1" fill="none" stroke="#fff" stroke-width="1.1"/>
<g stroke="#fff" stroke-width="1.1">
<path d="M20.6,842.5 V848.1"/>
<path d="M265.7,842.5 V848.1"/>
<path d="M510.8,842.5 V848.1"/>
<path d="M755.9,842.5 V848.1"/>
<path d="M1001.0,842.5 V848.1"/>
<path d="M1246.1,842.5 V848.1"/>
<path d="M1491.2,842.5 V848.1"/>
<path d="M1736.3,842.5 V848.1"/>
</g>
<g font-family="Liberation Sans, sans-serif" font-size="14.1" fill="#fff" text-anchor="middle">
<text x="20.6" y="862">0</text>
<text x="265.7" y="862">50</text>
<text x="510.8" y="862">100</text>
<text x="755.9" y="862">150</text>
<text x="1001.0" y="862">200</text>
<text x="1246.1" y="862">250</text>
<text x="1491.2" y="862">300</text>
<text x="1736.3" y="862">350</text>
</g>
<g font-family="Liberation Sans, sans-serif" font-size="13.8" fill="#fff" text-anchor="middle">
<text x="902.2" y="881.7" textLength="146.5" lengthAdjust="spacingAndGlyphs">Solar longitude (deg)</text>
</g>
</svg>
</body></html>
